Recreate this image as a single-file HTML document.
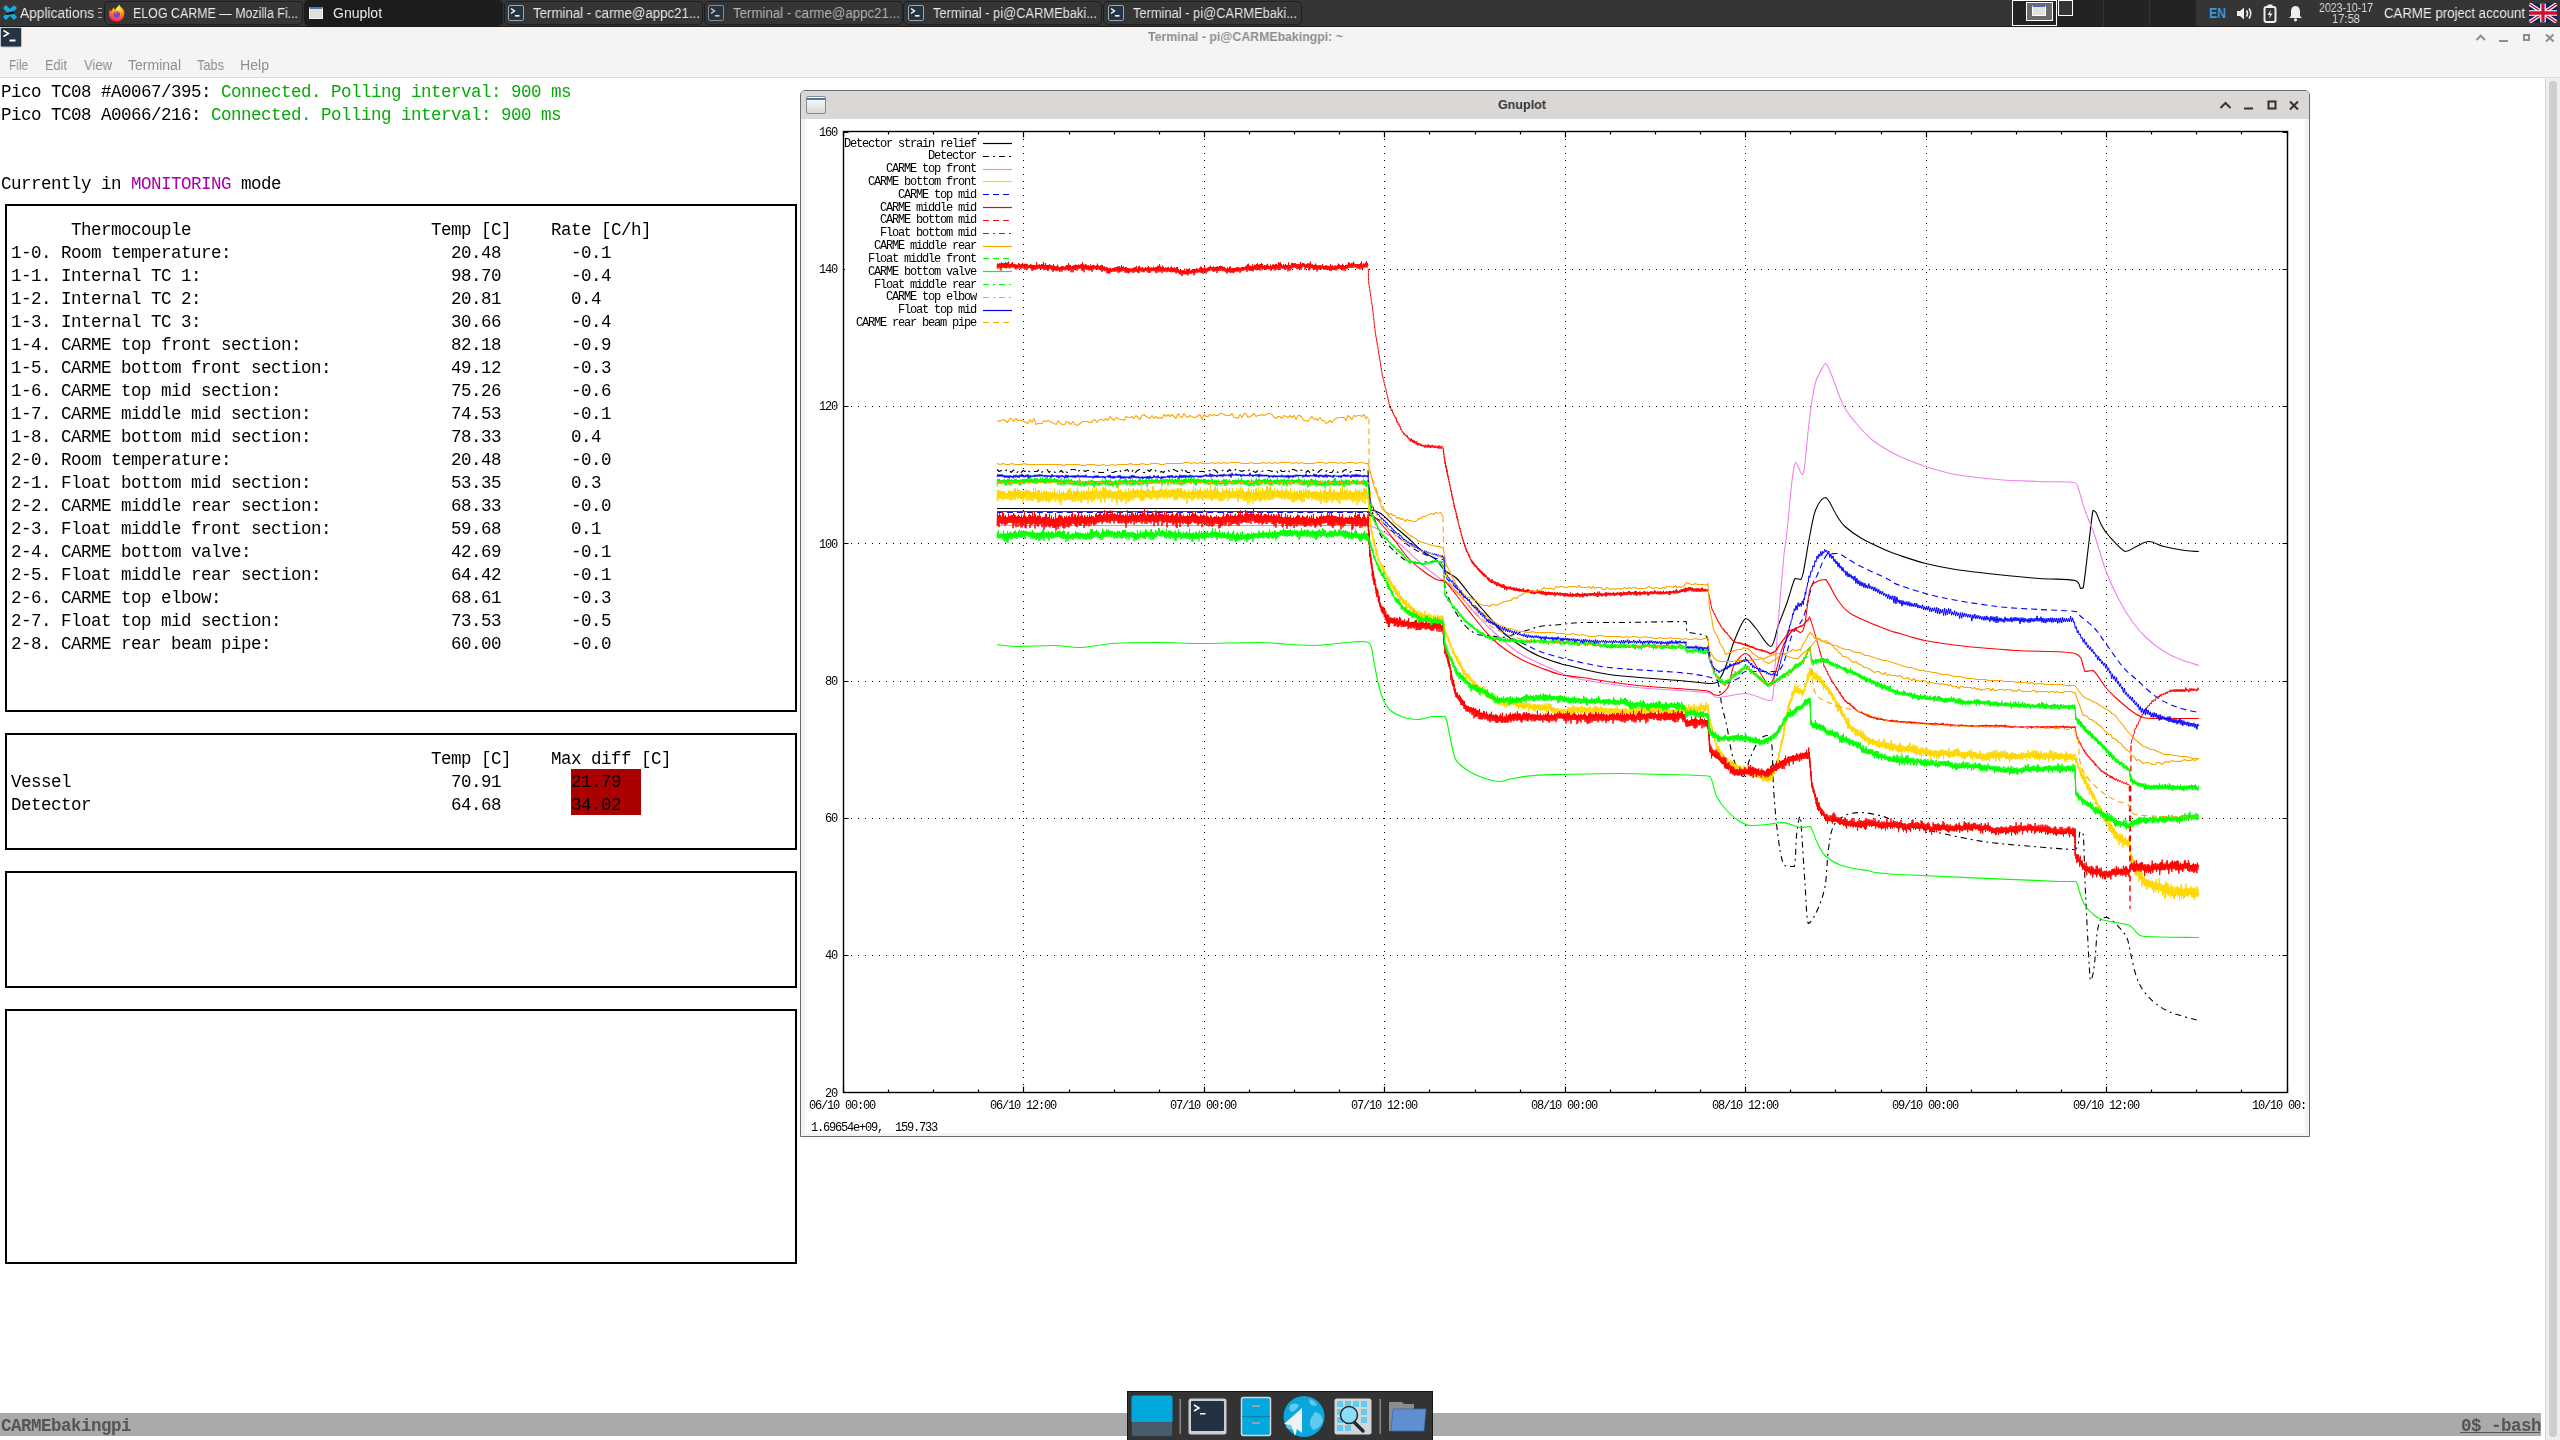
<!DOCTYPE html><html><head><meta charset="utf-8"><style>
*{margin:0;padding:0;box-sizing:border-box}
html,body{width:2560px;height:1440px;overflow:hidden;background:#fff;position:relative;font-family:"Liberation Sans",sans-serif;-webkit-font-smoothing:antialiased}
.a{will-change:transform}
.a{position:absolute}
.mono{font-family:"Liberation Mono",monospace;font-size:17.5px;letter-spacing:-0.5px;line-height:23px;white-space:pre;color:#000}
.tab{position:absolute;top:1px;height:24px;border:1px solid #202020;border-radius:5px;background:#353535}
.tt{position:absolute;top:4px;font-size:15px;color:#e8e8e8;white-space:pre;line-height:17px}
.gp{font-family:"Liberation Mono",monospace;font-size:12px;letter-spacing:-1.2px;white-space:pre;color:#000;line-height:12px}
</style></head><body>

<div class="a" style="left:0;top:0;width:2560px;height:27px;background:#353535;border-bottom:1px solid #1a1a1a"></div>
<div class="a" style="left:2012px;top:0;width:184px;height:26px;background:#232323"></div>
<div class="a" style="left:2103px;top:0;width:1px;height:26px;background:#353535"></div>
<div class="a" style="left:2149px;top:0;width:1px;height:26px;background:#353535"></div>
<svg class="a" style="left:2px;top:5px" width="16" height="16" viewBox="0 0 16 16">
<path d="M1 3 L4 0 L8 4 L12 0 L15 3 L11 7.5 L15 12 L12 15 L8 11 L4 15 L1 12 L5 7.5Z" fill="#1ba8e0"/>
<path d="M4 8 L12 6 L12 9 L4 10Z" fill="#111"/></svg>
<div class="a" style="left:20px;top:5px;font-size:14px;font-weight:normal;color:#e8e8e8;white-space:pre;line-height:17px;transform:scaleX(0.9803);transform-origin:0 0;">Applications</div>
<div class="a" style="left:98px;top:8px;width:4px;height:10px;border-top:1px solid #aaa;border-bottom:1px solid #aaa"></div><div class="a" style="left:98px;top:12px;width:4px;height:1px;background:#aaa"></div>
<div class="a" style="left:104px;top:1px;width:199px;height:24px;border:1px solid #1e1e1e;border-radius:5px;background:#353535"></div>
<div class="a" style="left:304px;top:0px;width:199px;height:26px;border-radius:5px;background:#1c1c1c"></div>
<div class="a" style="left:504px;top:1px;width:199px;height:24px;border:1px solid #1e1e1e;border-radius:5px;background:#353535"></div>
<div class="a" style="left:704px;top:1px;width:199px;height:24px;border:1px solid #1e1e1e;border-radius:5px;background:#353535"></div>
<div class="a" style="left:903px;top:1px;width:199px;height:24px;border:1px solid #1e1e1e;border-radius:5px;background:#353535"></div>
<div class="a" style="left:1103px;top:1px;width:199px;height:24px;border:1px solid #1e1e1e;border-radius:5px;background:#353535"></div>
<div class="a" style="left:133px;top:5px;font-size:14px;font-weight:normal;color:#e8e8e8;white-space:pre;line-height:17px;transform:scaleX(0.8875);transform-origin:0 0;">ELOG CARME — Mozilla Fi...</div>
<div class="a" style="left:333px;top:5px;font-size:14px;font-weight:normal;color:#e8e8e8;white-space:pre;line-height:17px;transform:scaleX(0.9993);transform-origin:0 0;">Gnuplot</div>
<div class="a" style="left:533px;top:5px;font-size:14px;font-weight:normal;color:#e8e8e8;white-space:pre;line-height:17px;transform:scaleX(0.9486);transform-origin:0 0;">Terminal - carme@appc21...</div>
<div class="a" style="left:733px;top:5px;font-size:14px;font-weight:normal;color:#b4b4b4;white-space:pre;line-height:17px;transform:scaleX(0.9486);transform-origin:0 0;">Terminal - carme@appc21...</div>
<div class="a" style="left:933px;top:5px;font-size:14px;font-weight:normal;color:#e8e8e8;white-space:pre;line-height:17px;transform:scaleX(0.9195);transform-origin:0 0;">Terminal - pi@CARMEbaki...</div>
<div class="a" style="left:1133px;top:5px;font-size:14px;font-weight:normal;color:#e8e8e8;white-space:pre;line-height:17px;transform:scaleX(0.9195);transform-origin:0 0;">Terminal - pi@CARMEbaki...</div>
<svg class="a" style="left:108px;top:4px" width="17" height="18" viewBox="0 0 17 18">
<defs><radialGradient id="ffg" cx="0.6" cy="0.2" r="0.9"><stop offset="0" stop-color="#fff44f"/><stop offset="0.45" stop-color="#ff980e"/><stop offset="0.8" stop-color="#ff3647"/><stop offset="1" stop-color="#e31587"/></radialGradient></defs>
<path d="M11.5 0.5 C12 2.5 13 3 14.5 4.5 C16.5 6.5 16.8 9.5 16 12 C15 15.5 12 17.5 8.5 17.5 C4 17.5 0.8 14 0.8 10 C0.8 8 1.5 6.5 2.3 5.5 C2.5 6.5 3 7 3.5 7.3 C3.8 5.5 5 4 6.5 3.5 C6 4.5 6.3 5.5 7 6 C8 4 10 2.5 11.5 0.5Z" fill="url(#ffg)"/>
<circle cx="8.7" cy="10.6" r="3.3" fill="#7542e5"/><path d="M6 8.5 C7 7.5 9.5 7.3 11 8.5 C9.5 8.3 8 8.8 7.3 10Z" fill="#ff7a2a"/></svg>
<div class="a" style="left:309px;top:7px;width:14px;height:12px;background:#e0e0da;border:1px solid #f4f4f4;border-top:2px solid #4a78c0"></div>
<svg class="a" style="left:508px;top:5px;opacity:1" width="16" height="16" viewBox="0 0 16 16">
<rect x="0.5" y="0.5" width="15" height="15" rx="1.5" fill="#233444" stroke="#9aa8b4" stroke-width="1"/>
<path d="M3 3.5 L6.5 6 L3 8.5" stroke="#fff" stroke-width="1.4" fill="none"/><rect x="7" y="10" width="4.5" height="1.6" fill="#fff"/></svg>
<svg class="a" style="left:708px;top:5px;opacity:0.75" width="16" height="16" viewBox="0 0 16 16">
<rect x="0.5" y="0.5" width="15" height="15" rx="1.5" fill="#233444" stroke="#9aa8b4" stroke-width="1"/>
<path d="M3 3.5 L6.5 6 L3 8.5" stroke="#fff" stroke-width="1.4" fill="none"/><rect x="7" y="10" width="4.5" height="1.6" fill="#fff"/></svg>
<svg class="a" style="left:908px;top:5px;opacity:1" width="16" height="16" viewBox="0 0 16 16">
<rect x="0.5" y="0.5" width="15" height="15" rx="1.5" fill="#233444" stroke="#9aa8b4" stroke-width="1"/>
<path d="M3 3.5 L6.5 6 L3 8.5" stroke="#fff" stroke-width="1.4" fill="none"/><rect x="7" y="10" width="4.5" height="1.6" fill="#fff"/></svg>
<svg class="a" style="left:1108px;top:5px;opacity:1" width="16" height="16" viewBox="0 0 16 16">
<rect x="0.5" y="0.5" width="15" height="15" rx="1.5" fill="#233444" stroke="#9aa8b4" stroke-width="1"/>
<path d="M3 3.5 L6.5 6 L3 8.5" stroke="#fff" stroke-width="1.4" fill="none"/><rect x="7" y="10" width="4.5" height="1.6" fill="#fff"/></svg>
<div class="a" style="left:2012px;top:0;width:45px;height:26px;border:1px solid #fff;background:#232323"></div>
<div class="a" style="left:2026px;top:2px;width:27px;height:19px;border:1px solid #fff;background:#6b6b6b"></div>
<div class="a" style="left:2032px;top:5px;width:14px;height:11px;border:1px solid #fff;border-top:2px solid #3d6fc0;background:#e0e0dc"></div>
<div class="a" style="left:2058px;top:0;width:15px;height:16px;border:1px solid #fff;background:#353535"></div>
<div class="a" style="left:2209px;top:5px;font-size:14px;font-weight:bold;color:#3d9be0;white-space:pre;line-height:17px;transform:scaleX(0.8741);transform-origin:0 0;">EN</div>
<svg class="a" style="left:2236px;top:6px" width="18" height="15" viewBox="0 0 18 15">
<path d="M1 5 L4 5 L8 1.5 L8 13.5 L4 10 L1 10Z" fill="#eee"/>
<path d="M10.5 4.5 Q12.5 7.5 10.5 10.5" stroke="#eee" stroke-width="1.6" fill="none"/>
<path d="M13 2.5 Q16.5 7.5 13 12.5" stroke="#eee" stroke-width="1.6" fill="none"/></svg>
<svg class="a" style="left:2263px;top:4px" width="14" height="19" viewBox="0 0 14 19">
<rect x="4.5" y="0.5" width="5" height="3" fill="#eee"/><rect x="1.5" y="3" width="11" height="15" rx="2" fill="none" stroke="#eee" stroke-width="2"/>
<path d="M8 5.5 L4.5 11 L7 11 L6 15 L9.5 9.5 L7 9.5Z" fill="#eee"/></svg>
<svg class="a" style="left:2288px;top:5px" width="15" height="17" viewBox="0 0 15 17">
<path d="M7.5 1 C4 1 3 4 3 7 L3 11 L1 13 L14 13 L12 11 L12 7 C12 4 11 1 7.5 1Z" fill="#eee"/><circle cx="7.5" cy="14.8" r="1.6" fill="#eee"/></svg>
<div class="a" style="left:2319px;top:1px;font-size:12px;font-weight:normal;color:#dddddd;white-space:pre;line-height:15px;transform:scaleX(0.8797);transform-origin:0 0;">2023-10-17</div>
<div class="a" style="left:2332px;top:12px;font-size:12px;font-weight:normal;color:#dddddd;white-space:pre;line-height:15px;transform:scaleX(0.9324);transform-origin:0 0;">17:58</div>
<div class="a" style="left:2384px;top:5px;font-size:14px;font-weight:normal;color:#eeeeee;white-space:pre;line-height:17px;transform:scaleX(0.9438);transform-origin:0 0;">CARME project account</div>
<svg class="a" style="left:2529px;top:3px" width="28" height="20" viewBox="0 0 60 40">
<rect width="60" height="40" fill="#012169"/><path d="M0 0 L60 40 M60 0 L0 40" stroke="#fff" stroke-width="8"/>
<path d="M0 0 L60 40 M60 0 L0 40" stroke="#C8102E" stroke-width="3"/>
<path d="M30 0 V40 M0 20 H60" stroke="#fff" stroke-width="12"/><path d="M30 0 V40 M0 20 H60" stroke="#C8102E" stroke-width="7"/></svg>
<div class="a" style="left:0;top:27px;width:2560px;height:51px;background:#f5f4f2;border-bottom:1px solid #dcdad6"></div>
<svg class="a" style="left:0px;top:27px" width="22" height="21" viewBox="0 0 22 21">
<rect x="0.5" y="0.5" width="21" height="19.5" rx="1.5" fill="#243442" stroke="#b9c3cc" stroke-width="1"/>
<path d="M3.5 3.5 L8.5 6.5 L3.5 9.5" stroke="#fff" stroke-width="1.5" fill="none"/><rect x="9.5" y="12.5" width="6" height="2" fill="#fff"/></svg>
<div class="a" style="left:1148px;top:29px;font-size:13px;font-weight:bold;color:#8c8c8c;white-space:pre;line-height:16px;transform:scaleX(0.9482);transform-origin:0 0;">Terminal - pi@CARMEbakingpi: ~</div>
<svg class="a" style="left:2470px;top:30px" width="90" height="16" viewBox="0 0 90 16">
<path d="M6.5 10 L10.75 5.75 L15 10" stroke="#8a8f91" stroke-width="2" fill="none"/>
<rect x="29" y="10" width="9" height="2" fill="#8a8f91"/>
<rect x="54" y="5" width="5" height="5" stroke="#8a8f91" stroke-width="2" fill="none"/>
<path d="M76 4.5 L83.5 11.5 M83.5 4.5 L76 11.5" stroke="#8a8f91" stroke-width="2"/></svg>
<div class="a" style="left:9px;top:57px;font-size:14px;font-weight:normal;color:#8e8e8e;white-space:pre;line-height:17px;transform:scaleX(0.8423);transform-origin:0 0;">File</div>
<div class="a" style="left:45px;top:57px;font-size:14px;font-weight:normal;color:#8e8e8e;white-space:pre;line-height:17px;transform:scaleX(0.9120);transform-origin:0 0;">Edit</div>
<div class="a" style="left:84px;top:57px;font-size:14px;font-weight:normal;color:#8e8e8e;white-space:pre;line-height:17px;transform:scaleX(0.9305);transform-origin:0 0;">View</div>
<div class="a" style="left:128px;top:57px;font-size:14px;font-weight:normal;color:#8e8e8e;white-space:pre;line-height:17px;transform:scaleX(1.0018);transform-origin:0 0;">Terminal</div>
<div class="a" style="left:197px;top:57px;font-size:14px;font-weight:normal;color:#8e8e8e;white-space:pre;line-height:17px;transform:scaleX(0.9130);transform-origin:0 0;">Tabs</div>
<div class="a" style="left:240px;top:57px;font-size:14px;font-weight:normal;color:#8e8e8e;white-space:pre;line-height:17px;transform:scaleX(1.0072);transform-origin:0 0;">Help</div>
<div class="a" style="left:2545px;top:78px;width:1px;height:1362px;background:#d8d4d0"></div>
<div class="a" style="left:2546px;top:78px;width:14px;height:1362px;background:#efeeec"></div>
<div class="a" style="left:2549px;top:81px;width:8px;height:1356px;border-radius:4px;background:#cecece"></div>
<div class="a mono" style="left:0.5px;top:81px">Pico TC08 #A0067/395: <span style="color:#08aa08">Connected. Polling interval: 900 ms</span></div>
<div class="a mono" style="left:0.5px;top:104px">Pico TC08 A0066/216: <span style="color:#08aa08">Connected. Polling interval: 900 ms</span></div>
<div class="a mono" style="left:0.5px;top:173px">Currently in <span style="color:#aa00aa">MONITORING</span> mode</div>
<div class="a" style="left:5px;top:204px;width:792px;height:508px;border:2px solid #000"></div>
<div class="a" style="left:5px;top:733px;width:792px;height:117px;border:2px solid #000"></div>
<div class="a" style="left:5px;top:871px;width:792px;height:117px;border:2px solid #000"></div>
<div class="a" style="left:5px;top:1009px;width:792px;height:255px;border:2px solid #000"></div>
<div class="a mono" style="left:70.5px;top:219px">Thermocouple</div>
<div class="a mono" style="left:430.5px;top:219px">Temp [C]</div>
<div class="a mono" style="left:550.5px;top:219px">Rate [C/h]</div>
<div class="a mono" style="left:10.5px;top:242px">1-0. Room temperature:</div>
<div class="a mono" style="left:450.5px;top:242px">20.48</div>
<div class="a mono" style="left:570.5px;top:242px">-0.1</div>
<div class="a mono" style="left:10.5px;top:265px">1-1. Internal TC 1:</div>
<div class="a mono" style="left:450.5px;top:265px">98.70</div>
<div class="a mono" style="left:570.5px;top:265px">-0.4</div>
<div class="a mono" style="left:10.5px;top:288px">1-2. Internal TC 2:</div>
<div class="a mono" style="left:450.5px;top:288px">20.81</div>
<div class="a mono" style="left:570.5px;top:288px">0.4</div>
<div class="a mono" style="left:10.5px;top:311px">1-3. Internal TC 3:</div>
<div class="a mono" style="left:450.5px;top:311px">30.66</div>
<div class="a mono" style="left:570.5px;top:311px">-0.4</div>
<div class="a mono" style="left:10.5px;top:334px">1-4. CARME top front section:</div>
<div class="a mono" style="left:450.5px;top:334px">82.18</div>
<div class="a mono" style="left:570.5px;top:334px">-0.9</div>
<div class="a mono" style="left:10.5px;top:357px">1-5. CARME bottom front section:</div>
<div class="a mono" style="left:450.5px;top:357px">49.12</div>
<div class="a mono" style="left:570.5px;top:357px">-0.3</div>
<div class="a mono" style="left:10.5px;top:380px">1-6. CARME top mid section:</div>
<div class="a mono" style="left:450.5px;top:380px">75.26</div>
<div class="a mono" style="left:570.5px;top:380px">-0.6</div>
<div class="a mono" style="left:10.5px;top:403px">1-7. CARME middle mid section:</div>
<div class="a mono" style="left:450.5px;top:403px">74.53</div>
<div class="a mono" style="left:570.5px;top:403px">-0.1</div>
<div class="a mono" style="left:10.5px;top:426px">1-8. CARME bottom mid section:</div>
<div class="a mono" style="left:450.5px;top:426px">78.33</div>
<div class="a mono" style="left:570.5px;top:426px">0.4</div>
<div class="a mono" style="left:10.5px;top:449px">2-0. Room temperature:</div>
<div class="a mono" style="left:450.5px;top:449px">20.48</div>
<div class="a mono" style="left:570.5px;top:449px">-0.0</div>
<div class="a mono" style="left:10.5px;top:472px">2-1. Float bottom mid section:</div>
<div class="a mono" style="left:450.5px;top:472px">53.35</div>
<div class="a mono" style="left:570.5px;top:472px">0.3</div>
<div class="a mono" style="left:10.5px;top:495px">2-2. CARME middle rear section:</div>
<div class="a mono" style="left:450.5px;top:495px">68.33</div>
<div class="a mono" style="left:570.5px;top:495px">-0.0</div>
<div class="a mono" style="left:10.5px;top:518px">2-3. Float middle front section:</div>
<div class="a mono" style="left:450.5px;top:518px">59.68</div>
<div class="a mono" style="left:570.5px;top:518px">0.1</div>
<div class="a mono" style="left:10.5px;top:541px">2-4. CARME bottom valve:</div>
<div class="a mono" style="left:450.5px;top:541px">42.69</div>
<div class="a mono" style="left:570.5px;top:541px">-0.1</div>
<div class="a mono" style="left:10.5px;top:564px">2-5. Float middle rear section:</div>
<div class="a mono" style="left:450.5px;top:564px">64.42</div>
<div class="a mono" style="left:570.5px;top:564px">-0.1</div>
<div class="a mono" style="left:10.5px;top:587px">2-6. CARME top elbow:</div>
<div class="a mono" style="left:450.5px;top:587px">68.61</div>
<div class="a mono" style="left:570.5px;top:587px">-0.3</div>
<div class="a mono" style="left:10.5px;top:610px">2-7. Float top mid section:</div>
<div class="a mono" style="left:450.5px;top:610px">73.53</div>
<div class="a mono" style="left:570.5px;top:610px">-0.5</div>
<div class="a mono" style="left:10.5px;top:633px">2-8. CARME rear beam pipe:</div>
<div class="a mono" style="left:450.5px;top:633px">60.00</div>
<div class="a mono" style="left:570.5px;top:633px">-0.0</div>
<div class="a mono" style="left:430.5px;top:748px">Temp [C]</div>
<div class="a mono" style="left:550.5px;top:748px">Max diff [C]</div>
<div class="a mono" style="left:10.5px;top:771px">Vessel</div>
<div class="a mono" style="left:450.5px;top:771px">70.91</div>
<div class="a mono" style="left:10.5px;top:794px">Detector</div>
<div class="a mono" style="left:450.5px;top:794px">64.68</div>
<div class="a" style="left:571px;top:769px;width:70px;height:46px;background:#aa0000"></div>
<div class="a mono" style="left:570.5px;top:771px">21.79</div>
<div class="a mono" style="left:570.5px;top:794px">34.02</div>
<div class="a" style="left:0;top:1413px;width:2541px;height:23px;background:#aaaaaa"></div>
<div class="a mono" style="left:0.5px;top:1415px;font-weight:bold;color:#555">CARMEbakingpi</div>
<div class="a mono" style="left:2460.5px;top:1415px;font-weight:bold;color:#555">0$ -bash</div><div class="a" style="left:2460px;top:1432px;width:80px;height:1px;background:#555"></div>
<svg class="a" style="left:1127px;top:1391px" width="306" height="49" viewBox="0 0 306 49">
<rect x="0.5" y="0.5" width="305" height="49" fill="#333333" stroke="#151515"/>
<rect x="4.5" y="4.5" width="41" height="41" rx="2.5" fill="#4a5b69" stroke="#2a3a48" stroke-width="1"/>
<path d="M4.5 7 Q4.5 4.5 7 4.5 H43 Q45.5 4.5 45.5 7 V31 H4.5Z" fill="#00a8de"/>
<rect x="52.5" y="8" width="1.5" height="35" fill="#8a8a8a"/>
<rect x="61.5" y="7.5" width="38" height="36" rx="2.5" fill="#c9ced3"/>
<rect x="64" y="10" width="33" height="30" rx="1" fill="#233140"/>
<path d="M67 14 L72 17 L67 20" stroke="#fff" stroke-width="1.5" fill="none"/><rect x="73" y="22" width="5.5" height="1.5" fill="#fff"/>
<rect x="114.5" y="6.5" width="29" height="38" rx="2" fill="#00a8de" stroke="#d4d8dc" stroke-width="1.5"/>
<path d="M115 25.5 H143" stroke="#0b7fa8" stroke-width="1.2"/>
<rect x="125" y="14" width="8" height="2" rx="1" fill="#9aa4aa"/><rect x="125" y="31" width="8" height="2" rx="1" fill="#9aa4aa"/>
<circle cx="177" cy="25.5" r="20.5" fill="#0aa6dc"/>
<path d="M163 14 Q168 11 172 14 Q170 19 165 21 Q161 20 163 14Z M182 8 Q188 9 190 14 Q186 16 183 13Z M188 21 Q195 22 196 30 Q193 38 186 39 Q181 33 184 27Z M160 30 Q166 31 168 37 Q163 40 159 36Z" fill="#62c9ee"/>
<path d="M168 45 L164 34 L157 33 L175 17 L175 42 L170 38 Z" fill="#eef0f2"/>
<rect x="207.5" y="7.5" width="37" height="36" rx="2.5" fill="#d3d6d9"/>
<g fill="#62ccf0"><rect x="210" y="10" width="6" height="6"/><rect x="218" y="10" width="6" height="6"/><rect x="226" y="10" width="6" height="6"/><rect x="234" y="10" width="6" height="6"/>
<rect x="210" y="18" width="6" height="6"/><rect x="234" y="18" width="6" height="6"/><rect x="210" y="26" width="6" height="6"/><rect x="234" y="26" width="6" height="6"/>
<rect x="210" y="34" width="6" height="6"/><rect x="218" y="34" width="6" height="6"/></g>
<path d="M227 31 L236 40" stroke="#1d2a33" stroke-width="3.5" stroke-linecap="round"/>
<circle cx="222" cy="24" r="8.5" fill="#8fdcf5" stroke="#1d2a33" stroke-width="1.5"/>
<rect x="252.5" y="8" width="1.5" height="35" fill="#8a8a8a"/>
<path d="M262 11 H275 L277 13 H287 V40 H262Z" fill="#8c8c8c"/>
<path d="M266 18 H299 L297 40 H264Z" fill="#5f8fd0" stroke="#3a6aae" stroke-width="0.8"/>
</svg>
<div class="a" style="left:800px;top:90px;width:1510px;height:1047px;background:#f4f3f1;border:1px solid #6b6b6b;border-radius:5px 5px 0 0"></div>
<div class="a" style="left:801px;top:91px;width:1508px;height:28px;background:#dbd7d4;border-radius:4px 4px 0 0"></div>
<div class="a" style="left:805px;top:119px;width:1500px;height:1014px;background:#fff"></div>
<div class="a" style="left:806px;top:96px;width:20px;height:18px;border:1px solid #8a8a8a;border-radius:2px;background:linear-gradient(#fff,#d8dad6)"></div>
<div class="a" style="left:807px;top:98px;width:18px;height:2px;background:#4b74b4"></div>
<div class="a" style="left:1498px;top:97px;font-family:'Liberation Sans';font-size:13px;font-weight:bold;color:#2e3436;white-space:pre;line-height:16px;transform:scaleX(0.9635);transform-origin:0 0;">Gnuplot</div>
<svg class="a" style="left:2215px;top:98px" width="90" height="16" viewBox="0 0 90 16">
<path d="M5.5 10 L10.5 5 L15.5 10" stroke="#2e3436" stroke-width="2" fill="none"/>
<rect x="29" y="9.5" width="9" height="2" fill="#2e3436"/>
<rect x="53.5" y="3.5" width="7" height="7" stroke="#2e3436" stroke-width="2" fill="none"/>
<path d="M75 3.5 L83 11.5 M83 3.5 L75 11.5" stroke="#2e3436" stroke-width="2"/></svg>
<svg class="a" style="left:0;top:0" width="2560" height="1440" viewBox="0 0 2560 1440">
<path d="M1023.5 139V1086.5 M1204.5 139V1086.5 M1384.5 139V1086.5 M1565.5 139V1086.5 M1745.5 139V1086.5 M1926.5 139V1086.5 M2106.5 139V1086.5 M851 955.5H2286.5 M851 818.5H2286.5 M851 681.5H2286.5 M851 543.5H2286.5 M851 406.5H2286.5 M851 269.5H2286.5" stroke="#000" stroke-width="1" stroke-dasharray="1,6" fill="none"/>
<path d="M843.5 1092.5v-6M843.5 131.5v6 M888.5 1092.5v-3M888.5 131.5v3 M933.5 1092.5v-3M933.5 131.5v3 M978.5 1092.5v-3M978.5 131.5v3 M1023.5 1092.5v-6M1023.5 131.5v6 M1069.5 1092.5v-3M1069.5 131.5v3 M1114.5 1092.5v-3M1114.5 131.5v3 M1159.5 1092.5v-3M1159.5 131.5v3 M1204.5 1092.5v-6M1204.5 131.5v6 M1249.5 1092.5v-3M1249.5 131.5v3 M1294.5 1092.5v-3M1294.5 131.5v3 M1339.5 1092.5v-3M1339.5 131.5v3 M1384.5 1092.5v-6M1384.5 131.5v6 M1429.5 1092.5v-3M1429.5 131.5v3 M1475.5 1092.5v-3M1475.5 131.5v3 M1520.5 1092.5v-3M1520.5 131.5v3 M1565.5 1092.5v-6M1565.5 131.5v6 M1610.5 1092.5v-3M1610.5 131.5v3 M1655.5 1092.5v-3M1655.5 131.5v3 M1700.5 1092.5v-3M1700.5 131.5v3 M1745.5 1092.5v-6M1745.5 131.5v6 M1790.5 1092.5v-3M1790.5 131.5v3 M1835.5 1092.5v-3M1835.5 131.5v3 M1881.5 1092.5v-3M1881.5 131.5v3 M1926.5 1092.5v-6M1926.5 131.5v6 M1971.5 1092.5v-3M1971.5 131.5v3 M2016.5 1092.5v-3M2016.5 131.5v3 M2061.5 1092.5v-3M2061.5 131.5v3 M2106.5 1092.5v-6M2106.5 131.5v6 M2151.5 1092.5v-3M2151.5 131.5v3 M2196.5 1092.5v-3M2196.5 131.5v3 M2241.5 1092.5v-3M2241.5 131.5v3 M2287.5 1092.5v-6M2287.5 131.5v6 M843.5 1092.5h5M2287.5 1092.5h-5 M843.5 955.5h5M2287.5 955.5h-5 M843.5 818.5h5M2287.5 818.5h-5 M843.5 681.5h5M2287.5 681.5h-5 M843.5 543.5h5M2287.5 543.5h-5 M843.5 406.5h5M2287.5 406.5h-5 M843.5 269.5h5M2287.5 269.5h-5 M843.5 132.5h5M2287.5 132.5h-5" stroke="#000" stroke-width="1.2" fill="none"/>
<rect x="845" y="136" width="172" height="192" fill="#fff"/>
<rect x="843.5" y="131.5" width="1444.0" height="961.0" fill="none" stroke="#000" stroke-width="1.4"/>
<path d="M983 143.5H1012" stroke="#000000" stroke-width="1.2"/>
<path d="M983 156.5H1012" stroke="#000000" stroke-width="1.2" stroke-dasharray="6,4,2,4"/>
<path d="M983 169.5H1012" stroke="#ee82ee" stroke-width="1.2"/>
<path d="M983 181.5H1012" stroke="#ffd700" stroke-width="1.2"/>
<path d="M983 194.5H1012" stroke="#0000ff" stroke-width="1.2" stroke-dasharray="6,4"/>
<path d="M983 207.5H1012" stroke="#ff0000" stroke-width="1.2"/>
<path d="M983 220.5H1012" stroke="#ff0000" stroke-width="1.2" stroke-dasharray="6,4"/>
<path d="M983 233.5H1012" stroke="#ff0000" stroke-width="1.2" stroke-dasharray="6,4,2,4"/>
<path d="M983 246.5H1012" stroke="#ffa500" stroke-width="1.2"/>
<path d="M983 258.5H1012" stroke="#00ff00" stroke-width="1.2" stroke-dasharray="6,4"/>
<path d="M983 271.5H1012" stroke="#00ff00" stroke-width="1.2"/>
<path d="M983 284.5H1012" stroke="#00ff00" stroke-width="1.2" stroke-dasharray="6,4,2,4"/>
<path d="M983 297.5H1012" stroke="#ffa500" stroke-width="1.2" stroke-dasharray="6,4,2,4"/>
<path d="M983 310.5H1012" stroke="#0000ff" stroke-width="1.2"/>
<path d="M983 322.5H1012" stroke="#ffa500" stroke-width="1.2" stroke-dasharray="6,4"/>
<path d="M997.0 508.5C1058.8 508.5 1305.9 508.5 1368.0 508.5C1369.7 508.7 1368.0 508.7 1369.7 509.5C1371.8 510.3 1376.6 510.7 1380.8 513.5C1385.0 516.3 1390.1 522.3 1394.7 526.5C1399.3 530.7 1404.0 534.3 1408.6 538.5C1413.2 542.7 1417.9 548.0 1422.5 551.5C1427.1 555.0 1432.3 556.3 1436.0 559.5C1439.7 562.7 1441.2 567.3 1444.7 570.5C1448.2 573.7 1452.7 574.7 1456.7 578.5C1460.8 582.3 1464.8 588.5 1469.0 593.5C1473.2 598.5 1477.5 603.7 1481.7 608.5C1485.9 613.3 1489.8 618.0 1494.0 622.5C1498.2 627.0 1501.8 631.3 1506.7 635.5C1511.6 639.7 1517.8 644.0 1523.3 647.5C1528.8 651.0 1533.9 653.8 1540.0 656.5C1546.1 659.2 1555.3 662.0 1560.0 663.5C1564.7 665.0 1560.0 663.7 1568.0 665.5C1576.2 667.3 1590.5 672.0 1609.0 674.5C1627.5 677.0 1661.8 679.0 1679.0 680.5C1696.2 682.0 1705.1 683.5 1712.0 683.5C1718.9 683.0 1717.9 681.2 1720.5 677.5C1723.1 673.8 1725.2 667.7 1727.5 661.5C1729.8 655.3 1731.4 647.7 1734.4 640.5C1737.4 633.3 1742.1 620.5 1745.7 618.5C1749.3 618.5 1751.8 623.8 1756.0 628.5C1760.2 633.2 1767.0 646.5 1770.7 646.5C1774.4 646.0 1775.6 632.7 1778.3 625.5C1781.0 618.3 1783.9 611.3 1786.7 603.5C1789.5 595.7 1792.7 582.5 1795.0 578.5C1797.3 578.5 1799.1 579.5 1800.5 579.5C1801.9 578.5 1801.7 579.5 1803.3 572.5C1804.9 565.0 1807.9 545.0 1810.0 534.5C1812.1 524.0 1813.2 515.7 1815.8 509.5C1818.4 503.3 1822.1 497.5 1825.6 497.5C1829.1 498.5 1833.5 510.7 1836.7 515.5C1839.9 520.3 1840.8 522.7 1845.0 526.5C1849.2 530.3 1854.8 534.5 1861.7 538.5C1868.7 542.5 1880.3 547.7 1886.7 550.5C1893.1 553.3 1893.5 553.3 1900.0 555.5C1906.5 557.7 1916.4 561.2 1925.7 563.5C1935.0 565.8 1943.7 567.7 1955.6 569.5C1967.5 571.3 1983.1 573.0 1997.0 574.5C2010.9 576.0 2026.0 577.5 2039.0 578.5C2052.0 579.5 2068.1 578.8 2075.0 580.5C2080.6 582.2 2079.2 587.3 2080.6 588.5C2082.0 588.5 2081.9 588.5 2083.3 587.5C2084.7 579.8 2087.3 555.3 2088.9 542.5C2090.5 529.7 2091.8 515.5 2093.0 510.5C2094.2 510.5 2094.6 510.5 2096.0 512.5C2097.4 515.0 2099.6 521.7 2101.7 525.5C2103.8 529.3 2104.7 531.2 2108.6 535.5C2112.5 539.8 2120.7 549.7 2125.3 551.5C2129.9 551.5 2132.5 548.2 2136.4 546.5C2140.3 544.8 2144.3 541.5 2148.9 541.5C2153.5 541.5 2158.0 545.0 2164.0 546.5C2170.0 548.0 2179.2 549.7 2185.0 550.5C2190.8 551.3 2196.6 551.3 2198.9 551.5" stroke="#000000" stroke-width="1.1" fill="none" stroke-linejoin="round"/>
<path d="M997.0 469.5 L999.0 471.5 L1001.0 470.5 L1003.0 471.5 L1005.0 471.5 L1007.0 469.5 L1009.0 469.5 L1011.0 472.5 L1013.0 470.5 L1015.0 469.5 L1017.1 472.5 L1019.1 470.5 L1021.1 472.5 L1023.1 470.5 L1025.1 471.5 L1027.1 469.5 L1029.1 471.5 L1031.1 472.5 L1033.1 471.5 L1035.1 471.5 L1037.1 471.5 L1039.1 469.5 L1041.1 472.5 L1043.1 471.5 L1045.1 470.5 L1047.1 469.5 L1049.1 472.5 L1051.1 470.5 L1053.2 471.5 L1055.2 472.5 L1057.2 471.5 L1059.2 472.5 L1061.2 470.5 L1063.2 472.5 L1065.2 470.5 L1067.2 472.5 L1069.2 472.5 L1071.2 469.5 L1073.2 469.5 L1075.2 469.5 L1077.2 472.5 L1079.2 470.5 L1081.2 471.5 L1083.2 470.5 L1085.2 471.5 L1087.2 470.5 L1089.2 470.5 L1091.3 471.5 L1093.3 471.5 L1095.3 472.5 L1097.3 471.5 L1099.3 472.5 L1101.3 472.5 L1103.3 472.5 L1105.3 471.5 L1107.3 469.5 L1109.3 472.5 L1111.3 472.5 L1113.3 472.5 L1115.3 471.5 L1117.3 471.5 L1119.3 469.5 L1121.3 472.5 L1123.3 471.5 L1125.3 470.5 L1127.4 469.5 L1129.4 472.5 L1131.4 472.5 L1133.4 469.5 L1135.4 472.5 L1137.4 470.5 L1139.4 469.5 L1141.4 470.5 L1143.4 472.5 L1145.4 472.5 L1147.4 469.5 L1149.4 471.5 L1151.4 469.5 L1153.4 471.5 L1155.4 470.5 L1157.4 472.5 L1159.4 472.5 L1161.4 471.5 L1163.4 472.5 L1165.5 470.5 L1167.5 469.5 L1169.5 471.5 L1171.5 469.5 L1173.5 469.5 L1175.5 470.5 L1177.5 471.5 L1179.5 469.5 L1181.5 469.5 L1183.5 472.5 L1185.5 470.5 L1187.5 472.5 L1189.5 472.5 L1191.5 470.5 L1193.5 470.5 L1195.5 471.5 L1197.5 471.5 L1199.5 471.5 L1201.6 471.5 L1203.6 471.5 L1205.6 472.5 L1207.6 471.5 L1209.6 470.5 L1211.6 471.5 L1213.6 469.5 L1215.6 470.5 L1217.6 472.5 L1219.6 471.5 L1221.6 471.5 L1223.6 469.5 L1225.6 470.5 L1227.6 471.5 L1229.6 469.5 L1231.6 471.5 L1233.6 471.5 L1235.6 469.5 L1237.6 471.5 L1239.7 470.5 L1241.7 471.5 L1243.7 470.5 L1245.7 471.5 L1247.7 471.5 L1249.7 469.5 L1251.7 469.5 L1253.7 471.5 L1255.7 472.5 L1257.7 470.5 L1259.7 470.5 L1261.7 471.5 L1263.7 470.5 L1265.7 470.5 L1267.7 470.5 L1269.7 470.5 L1271.7 471.5 L1273.7 470.5 L1275.8 470.5 L1277.8 472.5 L1279.8 469.5 L1281.8 471.5 L1283.8 471.5 L1285.8 470.5 L1287.8 469.5 L1289.8 472.5 L1291.8 469.5 L1293.8 469.5 L1295.8 470.5 L1297.8 471.5 L1299.8 469.5 L1301.8 470.5 L1303.8 470.5 L1305.8 472.5 L1307.8 470.5 L1309.8 472.5 L1311.8 469.5 L1313.9 470.5 L1315.9 471.5 L1317.9 472.5 L1319.9 470.5 L1321.9 469.5 L1323.9 469.5 L1325.9 471.5 L1327.9 469.5 L1329.9 472.5 L1331.9 472.5 L1333.9 469.5 L1335.9 470.5 L1337.9 472.5 L1339.9 471.5 L1341.9 472.5 L1343.9 470.5 L1345.9 469.5 L1347.9 470.5 L1350.0 472.5 L1352.0 470.5 L1354.0 470.5 L1356.0 470.5 L1358.0 470.5 L1360.0 470.5 L1362.0 472.5 L1364.0 469.5 L1366.0 469.5 L1368.0 471.5" stroke="#000000" stroke-width="1.1" fill="none" stroke-linejoin="round" stroke-dasharray="6,4,2,4"/>
<path d="M1368.0 470.5C1368.3 475.5 1368.8 492.2 1370.0 500.5C1371.2 508.8 1373.0 514.3 1375.0 520.5C1377.0 526.7 1378.7 532.3 1382.0 537.5C1385.3 542.7 1390.3 547.3 1394.7 551.5C1399.1 555.7 1405.1 560.5 1408.6 562.5C1412.1 563.5 1412.1 563.5 1415.5 563.5C1418.9 563.3 1424.4 561.7 1429.0 561.5C1433.6 561.5 1440.3 561.5 1443.0 562.5C1445.0 566.7 1443.4 579.2 1445.0 586.5C1446.6 593.8 1449.2 600.0 1452.5 606.5C1455.8 613.0 1460.8 620.8 1465.0 625.5C1469.2 630.2 1473.3 632.8 1477.5 634.5C1481.7 635.5 1485.8 635.0 1490.0 635.5C1494.2 636.0 1497.0 637.5 1502.5 637.5C1508.0 636.8 1517.0 633.3 1523.3 631.5C1529.5 629.7 1533.7 627.7 1540.0 626.5C1546.3 625.3 1554.0 625.2 1561.0 624.5C1568.0 623.8 1571.7 622.8 1582.0 622.5C1592.3 622.5 1605.7 622.5 1623.0 622.5C1640.3 622.3 1675.3 621.5 1686.0 621.5C1687.0 623.0 1686.0 629.0 1687.0 631.5C1690.5 634.0 1703.0 633.2 1706.7 636.5C1709.0 639.8 1707.6 645.5 1709.0 651.5C1710.4 657.5 1713.3 666.7 1715.0 672.5C1716.7 678.3 1717.8 680.8 1719.0 686.5C1720.2 692.2 1720.7 700.0 1722.0 706.5C1723.3 713.0 1724.8 716.8 1726.7 725.5C1728.6 734.2 1730.5 750.0 1733.3 758.5C1736.1 767.0 1740.5 776.5 1743.3 776.5C1746.1 776.5 1747.5 764.3 1750.0 758.5C1752.5 752.7 1755.5 745.3 1758.3 741.5C1761.1 737.7 1764.5 735.5 1766.7 735.5C1768.9 735.8 1770.6 735.5 1771.7 743.5C1772.8 751.5 1772.5 769.8 1773.3 783.5C1774.1 797.2 1775.3 813.0 1776.7 825.5C1778.1 838.0 1780.0 851.7 1781.7 858.5C1783.4 865.3 1784.6 865.2 1786.7 866.5C1788.8 866.5 1792.5 866.5 1794.2 866.5C1795.9 861.0 1795.7 841.8 1796.7 833.5C1797.7 825.2 1799.2 816.5 1800.0 816.5C1800.8 816.5 1800.9 822.3 1801.7 833.5C1802.5 844.7 1803.9 868.5 1805.0 883.5C1806.1 898.5 1806.3 918.8 1808.3 923.5C1810.2 923.5 1813.9 917.7 1816.7 911.5C1819.5 905.3 1823.1 896.7 1825.0 886.5C1826.9 876.3 1826.9 860.5 1828.3 850.5C1829.7 840.5 1830.5 832.3 1833.3 826.5C1836.1 820.7 1840.3 817.8 1845.0 815.5C1849.7 813.2 1855.3 812.5 1861.7 812.5C1868.1 812.7 1876.9 814.7 1883.3 816.5C1889.7 818.3 1891.7 821.0 1900.0 823.5C1908.3 826.0 1919.4 828.5 1933.3 831.5C1947.2 834.5 1966.6 839.0 1983.3 841.5C2000.0 844.0 2018.0 845.2 2033.3 846.5C2048.6 847.8 2067.2 849.5 2075.0 849.5C2080.0 847.0 2078.6 833.8 2080.0 831.5C2081.4 831.5 2082.5 831.5 2083.3 835.5C2084.1 843.8 2084.4 866.8 2085.0 881.5C2085.6 896.2 2086.3 909.5 2087.0 923.5C2087.7 937.5 2088.6 956.0 2089.2 965.5C2089.8 975.0 2089.9 979.3 2090.6 980.5C2091.3 980.5 2092.5 976.8 2093.3 972.5C2094.1 968.2 2094.7 961.5 2095.4 954.5C2096.1 947.5 2096.4 936.7 2097.5 930.5C2098.6 924.3 2100.1 919.7 2101.7 917.5C2103.3 917.5 2104.9 917.5 2107.2 917.5C2109.5 918.5 2112.2 920.2 2115.5 923.5C2118.8 926.8 2124.1 932.3 2126.7 937.5C2129.2 942.7 2129.2 948.0 2130.8 954.5C2132.4 961.0 2134.3 970.5 2136.4 976.5C2138.5 982.5 2140.3 986.2 2143.3 990.5C2146.3 994.8 2149.8 998.8 2154.4 1002.5C2159.0 1006.2 2163.6 1009.5 2171.0 1012.5C2178.4 1015.5 2194.2 1019.2 2198.9 1020.5" stroke="#000000" stroke-width="1.1" fill="none" stroke-linejoin="round" stroke-dasharray="6,4,2,4"/>
<path d="M997.0 525.5C1058.8 525.5 1305.4 525.5 1368.0 525.5C1372.5 525.7 1369.2 525.5 1372.5 526.5C1375.8 528.0 1382.9 531.3 1387.8 534.5C1392.7 537.7 1397.1 541.5 1401.7 545.5C1406.3 549.5 1410.9 554.3 1415.5 558.5C1420.1 562.7 1425.3 567.2 1429.4 570.5C1433.5 573.8 1435.5 575.0 1440.0 578.5C1444.5 582.0 1451.2 586.0 1456.7 591.5C1462.2 597.0 1467.8 605.3 1473.3 611.5C1478.8 617.7 1484.4 623.2 1490.0 628.5C1495.6 633.8 1501.2 639.0 1506.7 643.5C1512.2 648.0 1514.4 650.7 1523.3 655.5C1532.2 660.3 1550.3 668.5 1560.0 672.5C1569.7 676.5 1568.9 677.0 1581.7 679.5C1594.5 682.0 1616.2 685.3 1637.0 687.5C1657.8 689.7 1693.2 690.8 1706.7 692.5C1717.8 694.2 1711.3 697.3 1717.8 697.5C1724.3 697.5 1737.2 693.5 1745.7 693.5C1754.2 694.0 1764.1 700.0 1768.6 700.5C1772.8 700.5 1771.6 700.5 1772.8 696.5C1774.0 689.7 1774.3 675.0 1775.5 659.5C1776.7 644.0 1778.3 621.0 1779.7 603.5C1781.1 586.0 1783.0 565.0 1784.0 554.5C1785.0 544.0 1785.1 548.5 1786.0 540.5C1786.9 532.5 1788.4 516.7 1789.4 506.5C1790.4 496.3 1791.2 486.8 1792.2 479.5C1793.2 472.2 1794.1 463.3 1795.7 462.5C1797.3 462.5 1800.5 474.0 1802.0 474.5C1803.5 474.5 1803.7 472.8 1804.7 465.5C1805.7 458.2 1807.0 441.0 1808.2 430.5C1809.4 420.0 1810.4 410.7 1811.7 402.5C1813.0 394.3 1814.4 386.5 1815.8 381.5C1817.2 376.5 1818.4 375.5 1820.0 372.5C1821.6 369.5 1823.8 363.5 1825.6 363.5C1827.4 363.7 1828.9 368.7 1831.0 373.5C1833.1 378.3 1835.7 386.7 1838.0 392.5C1840.3 398.3 1841.5 402.8 1845.0 408.5C1848.5 414.2 1854.3 421.2 1858.9 426.5C1863.5 431.8 1868.2 436.7 1872.8 440.5C1877.4 444.3 1882.2 446.8 1886.7 449.5C1891.2 452.2 1893.5 453.7 1900.0 456.5C1906.5 459.3 1916.4 463.5 1925.7 466.5C1935.0 469.5 1943.7 472.3 1955.6 474.5C1967.5 476.7 1983.1 478.3 1997.0 479.5C2010.9 480.7 2026.2 481.0 2039.0 481.5C2051.8 482.0 2067.1 481.5 2073.6 482.5C2078.0 483.5 2076.1 482.8 2078.0 487.5C2079.9 492.2 2082.2 502.5 2085.0 510.5C2087.8 518.5 2091.2 525.5 2094.7 535.5C2098.2 545.5 2101.9 560.0 2105.8 570.5C2109.7 581.0 2113.9 590.0 2118.3 598.5C2122.7 607.0 2127.6 615.0 2132.2 621.5C2136.8 628.0 2140.7 632.5 2146.0 637.5C2151.3 642.5 2158.2 647.8 2164.0 651.5C2169.8 655.2 2175.0 657.2 2180.8 659.5C2186.6 661.8 2195.9 664.5 2198.9 665.5" stroke="#ee82ee" stroke-width="1.1" fill="none" stroke-linejoin="round"/>
<path d="M997.0 499.8 L997.5 490.0 L998.0 501.4 L998.5 489.8 L999.0 498.7 L999.5 490.9 L1000.0 499.1 L1000.5 490.7 L1001.0 498.3 L1001.5 491.3 L1002.0 498.3 L1002.5 491.2 L1003.0 500.0 L1003.5 491.4 L1004.0 499.2 L1004.5 491.1 L1005.0 498.7 L1005.5 493.0 L1006.0 498.9 L1006.5 493.1 L1007.0 499.4 L1007.5 493.0 L1008.0 498.7 L1008.5 490.5 L1009.0 499.5 L1009.5 491.2 L1010.0 499.1 L1010.5 490.7 L1011.0 500.7 L1011.5 491.5 L1012.0 499.9 L1012.5 491.7 L1013.0 498.2 L1013.5 489.5 L1014.0 500.1 L1014.5 488.7 L1015.0 499.9 L1015.5 488.3 L1016.0 497.2 L1016.5 491.7 L1017.0 497.3 L1017.5 487.6 L1018.0 499.2 L1018.5 490.2 L1019.0 497.7 L1019.5 489.5 L1020.0 498.4 L1020.5 491.4 L1021.0 499.3 L1021.5 491.6 L1022.0 498.9 L1022.5 491.2 L1023.0 503.1 L1023.5 491.2 L1024.0 498.9 L1024.5 491.6 L1025.0 497.7 L1025.5 489.3 L1026.0 498.3 L1026.5 490.4 L1027.0 500.9 L1027.5 490.3 L1028.0 498.7 L1028.5 490.8 L1029.0 500.2 L1029.5 490.2 L1030.0 500.2 L1030.5 491.6 L1031.0 500.3 L1031.5 492.2 L1032.0 500.3 L1032.5 492.4 L1033.0 501.1 L1033.5 488.4 L1034.0 498.8 L1034.5 492.1 L1035.0 498.8 L1035.5 487.9 L1036.0 498.4 L1036.5 492.6 L1037.0 499.8 L1037.5 490.5 L1038.0 502.6 L1038.5 490.3 L1039.0 502.2 L1039.5 490.0 L1040.0 501.4 L1040.5 493.3 L1041.0 501.2 L1041.5 490.4 L1042.0 500.6 L1042.5 492.8 L1043.0 501.6 L1043.5 491.0 L1044.0 499.1 L1044.5 490.2 L1045.0 499.6 L1045.5 492.5 L1046.0 502.2 L1046.5 490.8 L1047.0 500.2 L1047.5 491.8 L1048.0 501.1 L1048.5 491.9 L1049.0 502.8 L1049.5 492.4 L1050.0 501.1 L1050.5 491.6 L1051.0 499.7 L1051.5 493.1 L1052.0 500.4 L1052.5 491.6 L1053.0 498.6 L1053.5 493.4 L1054.0 498.5 L1054.5 488.6 L1055.0 501.6 L1055.5 492.8 L1056.0 499.0 L1056.5 493.2 L1057.0 500.2 L1057.5 491.3 L1058.0 499.0 L1058.5 493.7 L1059.0 502.4 L1059.5 489.8 L1060.0 502.0 L1060.5 493.5 L1061.0 504.9 L1061.5 492.6 L1062.0 500.8 L1062.5 492.5 L1063.0 498.4 L1063.5 491.3 L1064.0 499.9 L1064.5 492.9 L1065.0 501.0 L1065.5 493.3 L1066.0 499.6 L1066.5 493.2 L1067.0 499.8 L1067.5 490.9 L1068.0 499.4 L1068.5 489.5 L1069.0 499.8 L1069.5 489.4 L1070.0 499.6 L1070.5 488.0 L1071.0 499.6 L1071.5 491.6 L1072.0 502.0 L1072.5 493.9 L1073.0 501.6 L1073.5 489.8 L1074.0 499.7 L1074.5 491.6 L1075.0 502.0 L1075.5 492.2 L1076.0 500.7 L1076.5 490.9 L1077.0 497.9 L1077.5 487.0 L1078.0 501.2 L1078.5 490.9 L1079.0 500.8 L1079.5 491.9 L1080.0 498.7 L1080.5 492.5 L1081.0 502.9 L1081.5 490.2 L1082.0 501.3 L1082.5 492.2 L1083.0 499.3 L1083.5 490.8 L1084.0 499.6 L1084.5 490.7 L1085.0 500.0 L1085.5 492.9 L1086.0 500.0 L1086.5 490.7 L1087.0 498.9 L1087.5 491.1 L1088.0 503.5 L1088.5 486.8 L1089.0 499.2 L1089.5 491.9 L1090.0 499.7 L1090.5 490.8 L1091.0 500.1 L1091.5 491.4 L1092.0 502.6 L1092.5 488.7 L1093.0 499.7 L1093.5 491.2 L1094.0 501.0 L1094.5 485.9 L1095.0 498.9 L1095.5 490.8 L1096.0 498.3 L1096.5 487.9 L1097.0 497.3 L1097.5 490.5 L1098.0 499.9 L1098.5 491.0 L1099.0 498.7 L1099.5 491.0 L1100.0 498.4 L1100.5 489.2 L1101.0 503.0 L1101.5 491.7 L1102.0 498.1 L1102.5 487.6 L1103.0 498.2 L1103.5 487.0 L1104.0 499.5 L1104.5 488.2 L1105.0 502.6 L1105.5 486.8 L1106.0 497.9 L1106.5 488.9 L1107.0 497.2 L1107.5 491.4 L1108.0 498.7 L1108.5 490.6 L1109.0 498.9 L1109.5 489.1 L1110.0 498.0 L1110.5 490.5 L1111.0 497.4 L1111.5 491.3 L1112.0 501.9 L1112.5 491.7 L1113.0 497.4 L1113.5 491.6 L1114.0 499.2 L1114.5 491.5 L1115.0 498.4 L1115.5 490.8 L1116.0 500.1 L1116.5 491.8 L1117.0 504.7 L1117.5 491.4 L1118.0 498.3 L1118.5 485.6 L1119.0 499.6 L1119.5 491.5 L1120.0 499.7 L1120.5 489.3 L1121.0 501.7 L1121.5 490.6 L1122.0 501.8 L1122.5 491.9 L1123.0 499.5 L1123.5 491.5 L1124.0 499.7 L1124.5 492.3 L1125.0 499.1 L1125.5 488.8 L1126.0 504.0 L1126.5 491.4 L1127.0 498.8 L1127.5 492.2 L1128.0 501.7 L1128.5 488.2 L1129.0 501.7 L1129.5 491.8 L1130.0 500.4 L1130.5 491.0 L1131.0 500.1 L1131.5 491.3 L1132.0 498.0 L1132.5 490.3 L1133.0 500.5 L1133.5 488.3 L1134.0 497.0 L1134.5 490.4 L1135.0 498.4 L1135.5 490.2 L1136.0 498.1 L1136.5 489.7 L1137.0 497.2 L1137.5 488.9 L1138.0 496.7 L1138.5 490.0 L1139.0 498.5 L1139.5 491.1 L1140.0 497.9 L1140.5 489.4 L1141.0 501.1 L1141.5 485.5 L1142.0 500.6 L1142.5 490.0 L1143.0 500.2 L1143.5 490.5 L1144.0 500.7 L1144.5 491.2 L1145.0 497.4 L1145.5 489.7 L1146.0 498.2 L1146.5 491.2 L1147.0 497.7 L1147.5 484.6 L1148.0 497.3 L1148.5 489.6 L1149.0 498.7 L1149.5 489.9 L1150.0 497.7 L1150.5 491.3 L1151.0 499.6 L1151.5 491.2 L1152.0 499.1 L1152.5 486.6 L1153.0 496.9 L1153.5 486.1 L1154.0 498.0 L1154.5 490.2 L1155.0 497.6 L1155.5 490.9 L1156.0 497.4 L1156.5 490.9 L1157.0 500.6 L1157.5 490.3 L1158.0 498.7 L1158.5 490.7 L1159.0 497.7 L1159.5 489.8 L1160.0 497.4 L1160.5 489.3 L1161.0 497.9 L1161.5 486.6 L1162.0 497.0 L1162.5 489.4 L1163.0 496.6 L1163.5 490.9 L1164.0 499.3 L1164.5 489.4 L1165.0 496.5 L1165.5 489.8 L1166.0 497.4 L1166.5 487.9 L1167.0 499.6 L1167.5 491.5 L1168.0 497.4 L1168.5 489.7 L1169.0 497.6 L1169.5 490.6 L1170.0 497.2 L1170.5 489.4 L1171.0 498.1 L1171.5 490.6 L1172.0 496.6 L1172.5 489.6 L1173.0 496.1 L1173.5 488.7 L1174.0 500.2 L1174.5 490.3 L1175.0 499.2 L1175.5 489.7 L1176.0 500.3 L1176.5 489.7 L1177.0 499.6 L1177.5 488.1 L1178.0 498.4 L1178.5 487.9 L1179.0 496.2 L1179.5 489.3 L1180.0 497.2 L1180.5 488.1 L1181.0 499.1 L1181.5 488.3 L1182.0 497.7 L1182.5 491.1 L1183.0 498.0 L1183.5 491.0 L1184.0 500.1 L1184.5 489.9 L1185.0 497.8 L1185.5 490.2 L1186.0 498.1 L1186.5 492.6 L1187.0 504.2 L1187.5 492.1 L1188.0 498.4 L1188.5 489.6 L1189.0 498.3 L1189.5 491.0 L1190.0 498.4 L1190.5 492.0 L1191.0 499.0 L1191.5 492.3 L1192.0 500.7 L1192.5 490.1 L1193.0 499.5 L1193.5 486.5 L1194.0 499.5 L1194.5 491.7 L1195.0 498.0 L1195.5 488.4 L1196.0 497.4 L1196.5 491.4 L1197.0 498.0 L1197.5 490.2 L1198.0 499.9 L1198.5 490.6 L1199.0 499.2 L1199.5 489.6 L1200.0 498.5 L1200.5 487.7 L1201.0 497.1 L1201.5 490.4 L1202.0 499.8 L1202.5 491.6 L1203.0 500.4 L1203.5 491.1 L1204.0 497.4 L1204.5 488.7 L1205.0 497.2 L1205.5 490.5 L1206.0 498.6 L1206.5 490.3 L1207.0 499.1 L1207.5 488.4 L1208.0 496.8 L1208.5 490.8 L1209.0 499.5 L1209.5 491.0 L1210.0 498.1 L1210.5 484.5 L1211.0 499.7 L1211.5 489.5 L1212.0 501.2 L1212.5 490.9 L1213.0 499.0 L1213.5 489.2 L1214.0 497.6 L1214.5 487.0 L1215.0 499.4 L1215.5 486.4 L1216.0 498.5 L1216.5 489.3 L1217.0 498.8 L1217.5 487.6 L1218.0 498.3 L1218.5 491.0 L1219.0 500.9 L1219.5 491.3 L1220.0 499.3 L1220.5 492.7 L1221.0 501.5 L1221.5 491.9 L1222.0 500.8 L1222.5 488.2 L1223.0 500.4 L1223.5 490.5 L1224.0 499.9 L1224.5 490.6 L1225.0 498.3 L1225.5 490.9 L1226.0 498.2 L1226.5 487.0 L1227.0 497.4 L1227.5 490.7 L1228.0 500.8 L1228.5 490.8 L1229.0 498.4 L1229.5 488.0 L1230.0 498.5 L1230.5 491.0 L1231.0 497.7 L1231.5 492.1 L1232.0 498.2 L1232.5 488.0 L1233.0 497.9 L1233.5 490.2 L1234.0 497.9 L1234.5 491.6 L1235.0 498.4 L1235.5 491.1 L1236.0 497.8 L1236.5 488.3 L1237.0 497.7 L1237.5 491.0 L1238.0 502.0 L1238.5 489.6 L1239.0 499.0 L1239.5 490.3 L1240.0 497.7 L1240.5 486.9 L1241.0 498.9 L1241.5 491.1 L1242.0 498.3 L1242.5 487.7 L1243.0 499.7 L1243.5 490.3 L1244.0 501.0 L1244.5 492.0 L1245.0 499.8 L1245.5 492.2 L1246.0 501.2 L1246.5 491.4 L1247.0 500.4 L1247.5 491.2 L1248.0 504.7 L1248.5 488.1 L1249.0 498.5 L1249.5 491.1 L1250.0 502.5 L1250.5 492.5 L1251.0 499.3 L1251.5 489.4 L1252.0 499.7 L1252.5 493.0 L1253.0 503.8 L1253.5 489.2 L1254.0 499.8 L1254.5 492.5 L1255.0 501.1 L1255.5 488.6 L1256.0 500.2 L1256.5 488.3 L1257.0 499.6 L1257.5 492.2 L1258.0 499.1 L1258.5 486.9 L1259.0 500.5 L1259.5 491.8 L1260.0 502.0 L1260.5 489.6 L1261.0 501.0 L1261.5 492.0 L1262.0 500.1 L1262.5 487.9 L1263.0 499.7 L1263.5 490.1 L1264.0 498.6 L1264.5 491.2 L1265.0 501.2 L1265.5 490.0 L1266.0 499.1 L1266.5 485.9 L1267.0 499.7 L1267.5 486.6 L1268.0 499.6 L1268.5 490.8 L1269.0 500.3 L1269.5 488.2 L1270.0 499.6 L1270.5 485.8 L1271.0 498.9 L1271.5 490.2 L1272.0 500.0 L1272.5 489.8 L1273.0 499.3 L1273.5 490.9 L1274.0 497.3 L1274.5 488.1 L1275.0 497.5 L1275.5 491.0 L1276.0 497.7 L1276.5 491.3 L1277.0 496.7 L1277.5 489.3 L1278.0 497.7 L1278.5 490.3 L1279.0 498.4 L1279.5 491.1 L1280.0 498.1 L1280.5 491.4 L1281.0 498.1 L1281.5 487.3 L1282.0 499.7 L1282.5 490.1 L1283.0 498.2 L1283.5 490.4 L1284.0 498.0 L1284.5 491.8 L1285.0 499.9 L1285.5 489.4 L1286.0 497.6 L1286.5 488.8 L1287.0 498.4 L1287.5 491.0 L1288.0 499.0 L1288.5 490.8 L1289.0 499.2 L1289.5 492.5 L1290.0 500.1 L1290.5 488.1 L1291.0 498.7 L1291.5 493.3 L1292.0 502.2 L1292.5 492.3 L1293.0 502.6 L1293.5 492.0 L1294.0 500.1 L1294.5 490.1 L1295.0 502.0 L1295.5 492.3 L1296.0 499.8 L1296.5 491.6 L1297.0 500.7 L1297.5 490.6 L1298.0 498.7 L1298.5 493.3 L1299.0 499.9 L1299.5 490.1 L1300.0 499.9 L1300.5 490.1 L1301.0 501.1 L1301.5 490.3 L1302.0 502.6 L1302.5 492.0 L1303.0 499.9 L1303.5 489.1 L1304.0 501.8 L1304.5 491.6 L1305.0 497.7 L1305.5 487.9 L1306.0 497.2 L1306.5 491.1 L1307.0 498.3 L1307.5 489.6 L1308.0 498.6 L1308.5 490.5 L1309.0 499.4 L1309.5 490.2 L1310.0 497.1 L1310.5 491.9 L1311.0 497.5 L1311.5 492.2 L1312.0 500.4 L1312.5 492.0 L1313.0 498.5 L1313.5 491.5 L1314.0 498.8 L1314.5 492.1 L1315.0 499.4 L1315.5 491.3 L1316.0 500.3 L1316.5 490.6 L1317.0 499.8 L1317.5 492.5 L1318.0 500.4 L1318.5 492.1 L1319.0 500.3 L1319.5 492.6 L1320.0 501.4 L1320.5 489.4 L1321.0 504.1 L1321.5 492.1 L1322.0 498.4 L1322.5 492.8 L1323.0 499.7 L1323.5 490.8 L1324.0 502.4 L1324.5 490.3 L1325.0 498.8 L1325.5 488.5 L1326.0 503.1 L1326.5 491.9 L1327.0 502.6 L1327.5 492.6 L1328.0 501.2 L1328.5 491.6 L1329.0 499.2 L1329.5 488.9 L1330.0 500.4 L1330.5 485.9 L1331.0 498.4 L1331.5 491.5 L1332.0 502.7 L1332.5 492.7 L1333.0 500.3 L1333.5 490.2 L1334.0 500.2 L1334.5 489.3 L1335.0 499.3 L1335.5 492.4 L1336.0 500.0 L1336.5 492.2 L1337.0 501.0 L1337.5 491.5 L1338.0 502.7 L1338.5 492.5 L1339.0 499.0 L1339.5 492.5 L1340.0 503.8 L1340.5 488.3 L1341.0 498.5 L1341.5 490.3 L1342.0 500.1 L1342.5 485.9 L1343.0 500.2 L1343.5 493.0 L1344.0 499.2 L1344.5 489.3 L1345.0 500.5 L1345.5 490.6 L1346.0 498.4 L1346.5 490.2 L1347.0 500.4 L1347.5 488.8 L1348.0 499.4 L1348.5 492.7 L1349.0 499.3 L1349.5 491.2 L1350.0 499.4 L1350.5 489.6 L1351.0 500.0 L1351.5 491.9 L1352.0 501.4 L1352.5 491.8 L1353.0 502.4 L1353.5 492.0 L1354.0 499.1 L1354.5 491.5 L1355.0 501.6 L1355.5 488.5 L1356.0 498.8 L1356.5 490.6 L1357.0 504.9 L1357.5 490.5 L1358.0 500.4 L1358.5 491.5 L1359.0 502.2 L1359.5 489.5 L1360.0 500.4 L1360.5 492.4 L1361.0 499.7 L1361.5 489.3 L1362.0 500.5 L1362.5 492.5 L1363.0 502.7 L1363.5 488.7 L1364.0 498.4 L1364.5 487.8 L1365.0 504.1 L1365.5 488.5 L1366.0 499.2 L1366.5 489.1 L1367.0 498.4 L1367.5 491.9 L1368.0 499.3 L1368.1 490.7 L1368.2 502.3 L1368.3 496.0 L1368.4 504.3 L1368.5 498.0 L1368.6 509.4 L1368.7 501.4 L1368.8 511.5 L1368.9 504.5 L1369.0 511.8 L1369.2 507.3 L1369.4 515.1 L1369.6 508.0 L1369.7 519.9 L1369.9 513.6 L1370.1 522.3 L1370.3 515.4 L1370.5 525.1 L1370.7 519.7 L1370.8 528.0 L1371.0 522.7 L1371.2 529.7 L1371.4 525.0 L1371.6 531.8 L1371.8 529.4 L1371.9 534.4 L1372.1 531.0 L1372.3 537.2 L1372.5 531.3 L1372.9 540.9 L1373.2 537.5 L1373.6 545.8 L1374.0 539.3 L1374.3 546.0 L1374.7 539.1 L1375.1 548.2 L1375.4 544.8 L1375.8 554.6 L1376.2 547.4 L1376.5 555.6 L1376.9 549.0 L1377.3 556.9 L1377.6 553.1 L1378.0 559.9 L1378.5 556.6 L1379.0 561.7 L1379.5 559.0 L1380.0 564.3 L1380.5 561.0 L1380.9 567.4 L1381.4 563.8 L1381.9 568.5 L1382.4 564.8 L1382.9 570.5 L1383.4 565.2 L1383.9 573.4 L1384.4 567.8 L1384.9 574.3 L1385.3 571.4 L1385.8 576.4 L1386.3 573.5 L1386.8 578.1 L1387.3 575.9 L1387.8 582.6 L1388.3 577.4 L1388.8 581.4 L1389.3 576.5 L1389.8 584.7 L1390.3 580.2 L1390.8 585.6 L1391.3 581.5 L1391.8 588.2 L1392.3 583.3 L1392.8 588.8 L1393.3 585.7 L1393.8 591.6 L1394.3 585.3 L1394.8 591.5 L1395.2 585.7 L1395.7 594.9 L1396.2 588.7 L1396.7 594.7 L1397.2 589.5 L1397.7 596.6 L1398.2 591.8 L1398.7 597.7 L1399.2 591.2 L1399.7 601.1 L1400.2 595.4 L1400.7 600.5 L1401.2 595.8 L1401.7 601.0 L1402.2 597.2 L1402.7 604.2 L1403.2 598.7 L1403.7 603.9 L1404.2 599.5 L1404.7 604.5 L1405.2 600.9 L1405.6 608.5 L1406.1 599.9 L1406.6 609.3 L1407.1 603.2 L1407.6 608.3 L1408.1 603.8 L1408.6 608.0 L1409.1 602.6 L1409.6 609.1 L1410.1 604.8 L1410.6 611.5 L1411.1 606.2 L1411.6 610.5 L1412.0 606.5 L1412.5 613.0 L1413.0 608.6 L1413.5 616.8 L1414.0 608.2 L1414.5 615.0 L1415.0 609.2 L1415.5 616.2 L1416.0 610.9 L1416.5 619.0 L1417.0 610.7 L1417.5 616.5 L1418.0 610.9 L1418.5 617.5 L1419.0 612.6 L1419.5 616.6 L1420.0 611.8 L1420.5 617.2 L1421.0 613.1 L1421.5 616.8 L1422.0 612.5 L1422.5 620.2 L1422.9 614.1 L1423.4 618.1 L1423.9 614.0 L1424.4 619.4 L1424.9 610.7 L1425.4 618.4 L1425.9 615.6 L1426.4 620.3 L1426.9 614.3 L1427.4 620.1 L1427.9 615.8 L1428.4 622.8 L1428.9 613.9 L1429.4 621.7 L1429.9 613.8 L1430.4 624.1 L1430.9 615.1 L1431.4 620.9 L1431.9 615.9 L1432.4 621.9 L1432.9 616.4 L1433.4 621.3 L1433.9 615.8 L1434.4 621.7 L1434.9 614.5 L1435.4 621.1 L1435.9 616.7 L1436.5 622.3 L1437.0 617.3 L1437.5 622.1 L1438.0 614.6 L1438.5 621.2 L1439.0 617.1 L1439.5 622.6 L1440.0 615.9 L1440.5 623.1 L1441.0 615.7 L1441.5 620.7 L1442.0 615.1 L1442.5 620.3 L1443.0 616.4 L1443.2 622.3 L1443.4 618.1 L1443.6 625.5 L1443.8 622.6 L1444.1 628.2 L1444.3 624.8 L1444.5 631.2 L1444.7 629.3 L1445.2 634.3 L1445.7 630.2 L1446.2 636.7 L1446.7 632.8 L1447.3 638.4 L1447.8 635.6 L1448.3 641.4 L1448.8 637.1 L1449.3 644.4 L1449.8 640.1 L1450.3 647.6 L1450.8 643.8 L1451.3 648.7 L1451.8 646.5 L1452.4 654.1 L1452.9 648.0 L1453.4 653.5 L1453.9 650.9 L1454.4 656.8 L1454.9 652.4 L1455.4 657.5 L1455.9 654.8 L1456.4 660.9 L1456.9 656.0 L1457.4 662.4 L1457.9 656.8 L1458.4 664.2 L1458.9 660.5 L1459.4 665.5 L1460.0 660.8 L1460.5 667.2 L1461.0 662.9 L1461.5 669.9 L1462.0 666.1 L1462.5 672.5 L1463.0 668.6 L1463.5 676.4 L1464.0 669.9 L1464.5 675.5 L1465.0 669.9 L1465.5 677.6 L1466.0 673.3 L1466.5 679.8 L1467.0 673.5 L1467.5 678.7 L1468.0 674.7 L1468.5 679.1 L1469.0 673.0 L1469.5 681.0 L1470.0 676.1 L1470.5 680.9 L1471.0 678.1 L1471.5 682.9 L1472.0 679.0 L1472.5 684.8 L1472.9 679.6 L1473.4 687.0 L1473.9 681.7 L1474.4 686.9 L1474.9 681.0 L1475.4 686.6 L1475.9 683.2 L1476.4 691.2 L1476.9 684.3 L1477.4 692.7 L1477.9 684.4 L1478.4 692.0 L1478.9 686.2 L1479.4 692.1 L1479.9 686.2 L1480.4 693.9 L1480.9 688.3 L1481.4 693.2 L1481.9 687.9 L1482.4 693.5 L1482.9 687.1 L1483.4 693.2 L1483.9 686.5 L1484.4 694.6 L1484.9 688.8 L1485.4 695.6 L1485.9 691.3 L1486.4 695.2 L1486.9 690.4 L1487.4 698.3 L1487.9 691.7 L1488.4 698.2 L1488.9 693.4 L1489.5 697.7 L1490.0 693.1 L1490.5 699.4 L1491.0 693.8 L1491.5 699.4 L1492.0 694.4 L1492.5 700.0 L1493.0 694.5 L1493.5 702.3 L1494.0 694.5 L1494.5 700.1 L1495.0 695.8 L1495.5 700.1 L1496.0 694.8 L1496.5 701.3 L1497.0 697.5 L1497.5 701.7 L1498.0 697.9 L1498.5 705.2 L1499.0 698.3 L1499.5 705.6 L1500.0 699.2 L1500.5 704.2 L1501.0 699.7 L1501.5 705.3 L1502.0 699.0 L1502.5 705.3 L1503.0 701.1 L1503.5 704.6 L1504.0 699.3 L1504.5 706.7 L1505.0 701.5 L1505.5 705.9 L1506.1 700.9 L1506.6 707.9 L1507.1 699.8 L1507.6 706.1 L1508.1 700.8 L1508.6 705.4 L1509.1 700.5 L1509.6 705.8 L1510.1 700.6 L1510.6 703.7 L1511.1 696.8 L1511.6 704.6 L1512.1 698.6 L1512.6 704.5 L1513.1 698.6 L1513.6 705.4 L1514.1 701.5 L1514.6 704.9 L1515.1 700.2 L1515.6 705.4 L1516.1 701.3 L1516.6 706.9 L1517.1 701.3 L1517.6 706.2 L1518.1 701.7 L1518.6 708.8 L1519.1 702.2 L1519.6 707.7 L1520.2 700.4 L1520.7 707.4 L1521.2 701.4 L1521.7 707.7 L1522.2 702.7 L1522.7 708.9 L1523.2 703.6 L1523.7 708.7 L1524.2 702.9 L1524.7 708.7 L1525.2 703.2 L1525.7 707.7 L1526.2 703.4 L1526.7 707.4 L1527.2 702.9 L1527.7 707.0 L1528.2 703.0 L1528.7 711.5 L1529.2 703.9 L1529.7 708.4 L1530.2 702.5 L1530.7 709.0 L1531.2 704.6 L1531.7 708.4 L1532.2 704.9 L1532.7 710.4 L1533.2 704.3 L1533.7 710.1 L1534.2 703.9 L1534.7 711.9 L1535.1 704.1 L1535.6 710.3 L1536.1 704.9 L1536.6 709.3 L1537.1 704.6 L1537.6 709.0 L1538.1 704.4 L1538.6 710.0 L1539.1 704.0 L1539.6 710.3 L1540.1 705.0 L1540.6 710.7 L1541.1 705.6 L1541.6 710.5 L1542.1 704.4 L1542.6 710.2 L1543.1 705.9 L1543.6 709.3 L1544.1 703.7 L1544.6 710.8 L1545.1 704.1 L1545.6 709.4 L1546.1 703.4 L1546.6 712.9 L1547.1 706.0 L1547.6 711.4 L1548.1 703.7 L1548.6 710.2 L1549.1 703.4 L1549.6 709.6 L1550.1 704.6 L1550.6 710.5 L1551.1 703.9 L1551.6 711.9 L1552.0 707.2 L1552.5 712.6 L1553.0 707.2 L1553.5 712.6 L1554.0 707.3 L1554.5 712.5 L1555.0 708.3 L1555.5 714.5 L1556.0 709.2 L1556.5 715.4 L1557.0 708.6 L1557.5 713.8 L1558.0 708.0 L1558.5 712.6 L1559.0 709.0 L1559.5 714.1 L1560.0 709.7 L1560.5 713.4 L1561.0 708.9 L1561.5 714.1 L1562.0 709.5 L1562.5 713.5 L1563.0 708.5 L1563.5 713.9 L1564.0 709.4 L1564.5 714.0 L1565.0 708.7 L1565.5 715.2 L1566.0 709.6 L1566.5 713.7 L1567.0 709.4 L1567.5 713.6 L1568.0 707.4 L1568.5 712.9 L1569.0 706.9 L1569.5 712.8 L1570.0 707.7 L1570.5 714.9 L1571.0 708.6 L1571.5 715.6 L1572.0 707.3 L1572.5 713.1 L1573.0 704.8 L1573.5 713.3 L1574.0 705.7 L1574.5 714.2 L1575.0 707.2 L1575.5 713.3 L1576.0 707.4 L1576.5 711.7 L1577.0 707.3 L1577.5 714.1 L1578.0 706.6 L1578.5 712.3 L1579.0 708.0 L1579.5 712.3 L1580.0 708.0 L1580.5 714.6 L1581.0 705.9 L1581.5 714.6 L1582.0 705.8 L1582.5 712.9 L1583.0 708.1 L1583.5 711.8 L1584.0 706.8 L1584.5 712.0 L1585.0 707.6 L1585.5 715.1 L1586.0 707.5 L1586.5 713.2 L1587.0 707.8 L1587.5 712.3 L1588.0 707.7 L1588.5 714.1 L1589.0 707.6 L1589.5 712.4 L1590.0 706.4 L1590.5 713.8 L1591.0 708.7 L1591.5 713.6 L1592.0 708.1 L1592.5 714.4 L1593.0 707.8 L1593.5 713.0 L1594.0 706.6 L1594.5 711.9 L1595.0 706.4 L1595.5 713.2 L1596.0 705.7 L1596.5 713.2 L1597.0 707.4 L1597.5 711.6 L1598.0 707.6 L1598.5 712.2 L1599.0 707.8 L1599.5 713.7 L1600.0 708.0 L1600.5 711.8 L1601.0 705.8 L1601.5 715.9 L1602.0 707.2 L1602.5 712.6 L1603.0 707.9 L1603.5 713.3 L1604.0 708.2 L1604.5 713.1 L1605.0 708.4 L1605.5 714.9 L1606.0 707.5 L1606.5 712.3 L1607.0 708.6 L1607.5 714.9 L1608.0 708.7 L1608.5 713.3 L1609.0 709.5 L1609.5 714.8 L1610.0 707.7 L1610.5 715.2 L1611.0 708.3 L1611.5 712.7 L1612.0 708.3 L1612.5 714.3 L1613.0 709.1 L1613.5 714.8 L1614.0 708.5 L1614.5 713.8 L1615.0 708.4 L1615.5 713.2 L1616.0 707.6 L1616.5 713.8 L1617.0 706.5 L1617.5 714.6 L1618.0 708.3 L1618.5 714.1 L1619.0 708.9 L1619.5 713.9 L1620.0 709.4 L1620.5 714.3 L1621.0 709.2 L1621.5 714.1 L1622.0 708.6 L1622.5 715.8 L1623.0 709.4 L1623.5 713.8 L1624.0 708.0 L1624.5 714.3 L1625.0 709.6 L1625.5 713.6 L1626.0 708.4 L1626.5 714.8 L1627.0 709.2 L1627.5 713.7 L1628.0 710.4 L1628.5 714.1 L1629.0 710.1 L1629.5 714.9 L1630.0 709.4 L1630.5 714.1 L1631.0 709.0 L1631.5 713.3 L1632.0 708.1 L1632.5 714.7 L1633.0 708.9 L1633.5 713.5 L1634.0 709.0 L1634.5 712.8 L1635.0 708.1 L1635.5 715.3 L1636.0 709.1 L1636.5 715.1 L1637.0 708.7 L1637.5 713.6 L1638.0 707.1 L1638.5 711.7 L1639.0 708.0 L1639.5 711.9 L1640.0 707.5 L1640.5 714.9 L1641.0 707.2 L1641.5 712.2 L1642.0 708.0 L1642.5 711.8 L1643.0 708.2 L1643.5 712.1 L1644.0 706.8 L1644.5 714.2 L1645.0 708.7 L1645.5 712.9 L1646.0 708.8 L1646.5 714.5 L1646.9 707.7 L1647.4 713.0 L1647.9 708.5 L1648.4 713.7 L1648.9 706.4 L1649.4 711.7 L1649.9 706.9 L1650.4 711.6 L1650.9 705.8 L1651.4 712.2 L1651.9 704.9 L1652.4 713.5 L1652.9 708.0 L1653.4 712.2 L1653.9 705.2 L1654.4 711.3 L1654.9 706.5 L1655.4 712.6 L1655.9 706.4 L1656.4 712.1 L1656.9 703.5 L1657.4 711.5 L1657.9 705.9 L1658.4 711.7 L1658.9 707.0 L1659.4 711.7 L1659.9 708.5 L1660.4 712.4 L1660.9 706.0 L1661.4 715.2 L1661.9 707.2 L1662.4 714.0 L1662.9 708.0 L1663.4 712.8 L1663.9 709.1 L1664.4 713.3 L1664.9 706.3 L1665.4 713.6 L1665.9 706.2 L1666.4 714.4 L1666.9 707.3 L1667.4 717.1 L1667.9 709.4 L1668.4 713.9 L1668.9 709.8 L1669.4 714.7 L1669.9 709.9 L1670.4 713.8 L1670.9 709.5 L1671.4 713.8 L1671.9 709.2 L1672.4 715.4 L1672.9 709.3 L1673.4 714.8 L1673.9 709.8 L1674.4 716.2 L1674.9 709.8 L1675.4 716.1 L1675.9 706.8 L1676.4 713.1 L1676.9 706.3 L1677.4 713.2 L1677.9 708.4 L1678.4 715.3 L1678.9 707.2 L1679.4 715.2 L1679.9 710.1 L1680.4 713.9 L1680.9 708.7 L1681.4 713.6 L1681.9 709.6 L1682.4 713.9 L1682.9 708.6 L1683.4 712.2 L1683.9 707.5 L1684.4 712.4 L1684.9 706.4 L1685.5 713.3 L1686.0 704.9 L1686.5 711.9 L1687.0 707.4 L1687.5 711.4 L1688.0 707.2 L1688.5 712.1 L1689.0 704.0 L1689.5 710.8 L1690.0 707.1 L1690.5 712.4 L1691.0 706.2 L1691.5 710.9 L1692.0 706.7 L1692.5 710.8 L1693.0 706.4 L1693.5 713.1 L1694.0 703.9 L1694.5 711.6 L1695.0 706.9 L1695.5 710.9 L1696.0 706.2 L1696.5 712.4 L1697.0 707.5 L1697.5 712.9 L1698.0 706.1 L1698.5 710.4 L1699.0 706.7 L1699.5 712.3 L1700.0 705.2 L1700.5 710.4 L1701.0 702.7 L1701.5 711.1 L1702.0 705.3 L1702.5 709.9 L1703.0 705.0 L1703.5 711.4 L1704.0 705.1 L1704.5 711.4 L1705.0 705.7 L1705.5 712.1 L1706.0 702.1 L1706.5 709.5 L1707.0 705.3 L1707.5 709.7 L1708.0 704.3 L1708.2 711.7 L1708.3 708.1 L1708.5 717.4 L1708.7 711.8 L1708.9 717.7 L1709.1 714.3 L1709.2 720.3 L1709.4 715.9 L1709.8 725.7 L1710.2 718.9 L1710.6 726.3 L1711.0 722.8 L1711.4 729.9 L1711.8 725.8 L1712.2 732.8 L1712.6 726.8 L1713.1 734.6 L1713.5 731.2 L1713.9 738.2 L1714.3 735.1 L1714.7 741.8 L1715.1 737.9 L1715.5 744.4 L1715.9 741.6 L1716.3 748.3 L1716.7 743.0 L1717.2 751.9 L1717.7 746.2 L1718.2 753.9 L1718.7 746.0 L1719.2 755.1 L1719.7 748.2 L1720.2 754.2 L1720.7 751.2 L1721.2 757.5 L1721.7 752.0 L1722.2 758.2 L1722.7 753.4 L1723.2 759.8 L1723.7 754.2 L1724.2 762.7 L1724.7 756.8 L1725.2 765.7 L1725.7 759.3 L1726.2 765.7 L1726.7 761.5 L1727.2 765.0 L1727.7 758.0 L1728.2 765.1 L1728.7 761.6 L1729.2 765.4 L1729.7 761.1 L1730.2 767.0 L1730.7 760.0 L1731.2 768.0 L1731.7 760.6 L1732.2 766.7 L1732.7 761.5 L1733.2 768.1 L1733.7 762.5 L1734.2 767.0 L1734.7 764.0 L1735.2 769.0 L1735.7 763.6 L1736.2 770.7 L1736.7 764.5 L1737.2 769.2 L1737.7 765.0 L1738.2 770.0 L1738.7 765.5 L1739.2 770.7 L1739.7 766.3 L1740.2 771.0 L1740.7 765.1 L1741.2 772.0 L1741.7 767.1 L1742.2 771.5 L1742.7 767.6 L1743.2 773.5 L1743.7 765.7 L1744.2 772.6 L1744.7 767.0 L1745.2 772.2 L1745.7 765.9 L1746.2 773.6 L1746.7 768.3 L1747.2 774.3 L1747.7 768.2 L1748.2 774.1 L1748.7 769.2 L1749.1 774.6 L1749.6 767.1 L1750.1 774.1 L1750.6 769.0 L1751.1 774.7 L1751.6 771.2 L1752.1 777.1 L1752.6 771.0 L1753.1 775.6 L1753.6 771.2 L1754.1 776.7 L1754.6 769.6 L1755.1 776.8 L1755.6 772.6 L1756.1 777.2 L1756.6 771.2 L1757.1 777.6 L1757.6 770.8 L1758.1 778.0 L1758.6 772.2 L1759.1 777.8 L1759.6 771.8 L1760.1 778.3 L1760.6 774.1 L1761.1 779.1 L1761.6 773.7 L1762.1 780.3 L1762.6 770.5 L1763.0 781.9 L1763.5 774.7 L1764.0 779.0 L1764.5 774.7 L1765.0 780.6 L1765.5 773.8 L1766.0 781.3 L1766.5 773.9 L1767.0 781.0 L1767.5 774.8 L1768.0 782.7 L1768.5 775.1 L1769.0 780.9 L1769.5 774.9 L1770.0 781.2 L1770.5 775.7 L1771.0 780.4 L1771.5 769.4 L1772.1 780.0 L1772.6 772.2 L1773.1 776.4 L1773.6 769.8 L1774.1 774.5 L1774.6 766.8 L1775.2 770.6 L1775.7 764.8 L1776.2 769.9 L1776.7 763.7 L1777.0 766.5 L1777.3 759.2 L1777.6 765.2 L1778.0 757.4 L1778.3 764.0 L1778.6 753.2 L1778.9 757.8 L1779.2 751.9 L1779.5 755.7 L1779.8 748.6 L1780.2 751.6 L1780.5 745.1 L1780.8 748.4 L1781.1 740.9 L1781.4 745.3 L1781.7 739.3 L1782.0 744.0 L1782.4 736.8 L1782.7 740.5 L1783.0 733.7 L1783.3 739.2 L1783.6 728.5 L1783.9 736.2 L1784.1 727.4 L1784.4 732.3 L1784.7 723.5 L1785.0 729.8 L1785.2 722.3 L1785.5 725.4 L1785.8 714.9 L1786.1 723.6 L1786.3 715.3 L1786.6 719.7 L1786.9 712.6 L1787.2 716.4 L1787.4 708.6 L1787.7 713.1 L1788.0 704.9 L1788.5 713.2 L1789.0 702.4 L1789.5 710.6 L1790.0 699.8 L1790.5 703.7 L1791.0 698.2 L1791.5 701.3 L1792.0 691.9 L1792.5 699.6 L1793.0 690.9 L1793.5 696.0 L1794.0 688.2 L1794.5 693.9 L1795.0 684.4 L1795.5 692.4 L1796.0 686.4 L1796.5 693.0 L1797.0 687.5 L1797.4 692.4 L1797.9 685.2 L1798.4 694.1 L1798.9 688.6 L1799.4 694.2 L1799.9 688.3 L1800.4 693.9 L1800.9 688.9 L1801.3 693.8 L1801.8 689.9 L1802.3 696.5 L1802.8 689.8 L1803.3 695.0 L1803.7 689.8 L1804.2 692.4 L1804.6 683.2 L1805.1 690.5 L1805.5 683.0 L1806.0 686.1 L1806.4 680.7 L1806.9 682.8 L1807.3 674.0 L1807.8 682.6 L1808.2 673.4 L1808.7 679.9 L1809.1 671.6 L1809.6 675.7 L1810.0 668.2 L1810.5 676.7 L1811.0 669.4 L1811.5 675.3 L1812.0 669.3 L1812.5 676.6 L1813.0 671.2 L1813.5 678.9 L1814.0 672.4 L1814.5 678.9 L1815.0 672.6 L1815.5 679.8 L1816.0 674.1 L1816.5 679.6 L1817.0 672.9 L1817.5 680.7 L1818.0 676.1 L1818.5 680.5 L1819.0 675.7 L1819.5 682.8 L1820.0 675.8 L1820.5 682.9 L1821.0 677.2 L1821.5 683.9 L1822.0 679.6 L1822.5 685.4 L1823.0 680.1 L1823.5 689.5 L1824.0 681.3 L1824.5 687.5 L1825.0 683.5 L1825.5 689.5 L1826.0 684.4 L1826.5 690.1 L1827.0 685.3 L1827.5 690.4 L1828.0 687.1 L1828.5 693.7 L1829.0 687.4 L1829.5 694.3 L1830.0 689.5 L1830.5 694.5 L1831.0 691.4 L1831.5 696.1 L1832.0 692.6 L1832.5 700.1 L1833.0 693.7 L1833.5 699.9 L1834.0 696.4 L1834.5 701.7 L1835.0 697.8 L1835.5 707.1 L1836.0 700.4 L1836.5 706.5 L1837.0 701.2 L1837.5 711.7 L1838.0 704.7 L1838.5 711.2 L1839.0 702.7 L1839.5 710.5 L1840.0 707.8 L1840.5 713.6 L1841.0 706.2 L1841.5 716.7 L1842.0 710.2 L1842.5 716.2 L1843.0 712.6 L1843.5 717.7 L1844.0 713.4 L1844.5 719.9 L1845.0 714.8 L1845.5 722.7 L1846.0 718.3 L1846.5 724.1 L1847.0 720.3 L1847.5 728.4 L1848.0 717.4 L1848.5 728.3 L1849.0 719.1 L1849.5 728.8 L1850.0 724.4 L1850.5 729.1 L1851.0 725.6 L1851.5 731.8 L1852.0 726.8 L1852.5 731.6 L1853.0 726.7 L1853.5 731.9 L1854.0 727.5 L1854.6 734.1 L1855.1 728.4 L1855.6 736.4 L1856.1 729.0 L1856.6 735.1 L1857.1 729.3 L1857.6 735.7 L1858.1 729.6 L1858.6 735.4 L1859.1 731.1 L1859.6 736.1 L1860.1 732.5 L1860.6 737.6 L1861.1 729.1 L1861.6 737.8 L1862.1 732.9 L1862.7 739.4 L1863.2 731.4 L1863.7 738.9 L1864.2 733.8 L1864.7 741.3 L1865.2 735.3 L1865.7 740.7 L1866.2 736.4 L1866.7 741.2 L1867.2 736.7 L1867.7 742.2 L1868.2 737.4 L1868.7 745.9 L1869.2 737.7 L1869.7 744.0 L1870.2 738.8 L1870.7 743.8 L1871.2 739.2 L1871.7 743.3 L1872.2 738.9 L1872.7 745.1 L1873.2 738.6 L1873.7 743.9 L1874.2 740.1 L1874.7 745.1 L1875.1 740.2 L1875.6 744.9 L1876.1 741.0 L1876.6 746.7 L1877.1 741.3 L1877.6 746.0 L1878.1 740.5 L1878.6 747.6 L1879.1 738.9 L1879.6 747.6 L1880.1 741.8 L1880.6 746.6 L1881.1 742.8 L1881.6 746.4 L1882.1 741.4 L1882.6 747.4 L1883.1 741.7 L1883.6 746.7 L1884.1 738.6 L1884.6 747.6 L1885.1 741.3 L1885.6 749.6 L1886.1 742.9 L1886.6 748.3 L1887.1 742.7 L1887.6 748.9 L1888.1 743.2 L1888.6 748.5 L1889.1 742.9 L1889.6 751.2 L1890.1 744.1 L1890.6 750.3 L1891.1 739.9 L1891.6 749.8 L1892.0 742.9 L1892.5 751.3 L1893.0 744.0 L1893.5 749.6 L1894.0 744.3 L1894.5 749.8 L1895.0 743.6 L1895.5 749.5 L1896.0 745.3 L1896.5 750.6 L1897.0 745.7 L1897.5 751.5 L1898.0 745.4 L1898.5 752.5 L1899.0 744.5 L1899.5 752.0 L1900.0 742.5 L1900.5 751.5 L1901.0 744.8 L1901.5 754.1 L1902.0 745.6 L1902.5 752.2 L1903.0 746.0 L1903.5 750.6 L1904.0 746.5 L1904.5 751.5 L1905.0 746.8 L1905.5 751.4 L1906.0 746.9 L1906.5 751.0 L1907.0 745.7 L1907.5 751.4 L1908.0 744.8 L1908.5 752.7 L1909.0 744.7 L1909.5 750.9 L1910.0 742.6 L1910.5 751.3 L1911.0 745.6 L1911.5 752.3 L1912.0 747.3 L1912.5 752.2 L1913.0 744.6 L1913.5 752.9 L1914.0 746.6 L1914.5 753.6 L1915.0 745.0 L1915.5 755.0 L1916.0 745.5 L1916.5 753.9 L1917.0 748.3 L1917.5 754.8 L1918.0 746.8 L1918.5 753.6 L1919.0 749.7 L1919.5 756.0 L1920.0 749.1 L1920.5 755.4 L1921.0 747.5 L1921.5 757.0 L1922.0 747.9 L1922.5 752.9 L1923.0 747.4 L1923.5 755.4 L1924.0 749.1 L1924.5 753.9 L1925.0 750.1 L1925.5 756.0 L1926.0 746.7 L1926.5 755.2 L1927.0 748.4 L1927.5 755.0 L1928.0 749.2 L1928.5 754.3 L1929.0 750.1 L1929.5 755.7 L1930.0 750.4 L1930.5 759.2 L1931.0 749.6 L1931.5 755.6 L1932.0 750.8 L1932.5 755.5 L1933.0 750.8 L1933.5 756.6 L1934.0 751.4 L1934.5 758.0 L1935.0 750.2 L1935.6 755.6 L1936.1 750.5 L1936.6 758.8 L1937.1 750.9 L1937.6 755.8 L1938.1 750.6 L1938.6 758.0 L1939.1 751.4 L1939.6 758.2 L1940.1 750.1 L1940.6 755.9 L1941.1 749.2 L1941.6 756.4 L1942.1 749.9 L1942.6 754.7 L1943.1 750.0 L1943.6 759.0 L1944.1 750.1 L1944.6 754.9 L1945.1 750.4 L1945.6 755.3 L1946.1 751.0 L1946.6 756.0 L1947.1 751.0 L1947.6 756.2 L1948.1 750.3 L1948.6 757.9 L1949.1 747.8 L1949.6 757.8 L1950.1 752.0 L1950.6 756.6 L1951.1 751.4 L1951.6 755.2 L1952.1 750.8 L1952.6 756.6 L1953.1 751.2 L1953.6 757.1 L1954.1 749.6 L1954.6 756.9 L1955.1 749.8 L1955.6 755.5 L1956.1 748.9 L1956.7 756.0 L1957.2 748.8 L1957.7 755.5 L1958.2 748.1 L1958.7 757.2 L1959.2 750.1 L1959.7 756.1 L1960.2 752.6 L1960.7 756.6 L1961.2 751.9 L1961.7 759.2 L1962.2 752.1 L1962.7 757.7 L1963.2 752.5 L1963.7 758.8 L1964.2 751.4 L1964.7 759.8 L1965.2 752.7 L1965.7 758.0 L1966.2 752.0 L1966.7 757.6 L1967.2 752.1 L1967.7 756.6 L1968.2 750.5 L1968.7 755.6 L1969.2 750.8 L1969.7 756.6 L1970.2 751.1 L1970.7 758.6 L1971.2 748.9 L1971.7 758.0 L1972.2 752.6 L1972.7 760.5 L1973.2 751.4 L1973.7 757.1 L1974.2 752.1 L1974.7 757.3 L1975.2 751.9 L1975.7 757.9 L1976.2 752.4 L1976.7 758.8 L1977.2 754.1 L1977.7 758.8 L1978.2 753.6 L1978.7 758.4 L1979.2 752.9 L1979.7 758.5 L1980.2 750.5 L1980.7 759.1 L1981.2 753.2 L1981.7 759.2 L1982.2 753.8 L1982.7 760.6 L1983.2 753.8 L1983.7 758.4 L1984.2 754.3 L1984.7 760.2 L1985.2 753.8 L1985.7 760.2 L1986.2 754.3 L1986.7 760.4 L1987.2 752.7 L1987.7 759.4 L1988.2 752.5 L1988.7 759.7 L1989.2 752.2 L1989.7 761.5 L1990.2 753.0 L1990.7 757.3 L1991.2 751.6 L1991.7 758.5 L1992.2 752.3 L1992.7 758.2 L1993.2 750.7 L1993.7 758.9 L1994.2 752.3 L1994.7 757.2 L1995.2 749.8 L1995.7 761.4 L1996.2 752.8 L1996.7 758.2 L1997.2 749.9 L1997.7 757.0 L1998.2 752.0 L1998.7 759.3 L1999.2 752.1 L1999.7 761.2 L2000.2 753.0 L2000.7 756.8 L2001.2 750.9 L2001.7 758.5 L2002.2 751.9 L2002.7 756.9 L2003.2 751.1 L2003.7 756.3 L2004.2 752.9 L2004.7 757.2 L2005.2 750.2 L2005.7 759.2 L2006.2 753.4 L2006.7 758.9 L2007.2 752.2 L2007.7 758.8 L2008.2 753.6 L2008.7 759.4 L2009.2 754.4 L2009.7 762.4 L2010.2 753.5 L2010.7 758.8 L2011.2 753.2 L2011.7 760.2 L2012.2 752.1 L2012.7 759.0 L2013.2 753.1 L2013.7 759.0 L2014.2 753.2 L2014.7 758.2 L2015.2 753.3 L2015.7 759.8 L2016.2 754.1 L2016.7 758.5 L2017.2 754.5 L2017.7 759.2 L2018.2 753.7 L2018.7 758.7 L2019.2 754.4 L2019.7 758.6 L2020.2 753.5 L2020.7 759.6 L2021.2 752.4 L2021.7 758.1 L2022.2 753.6 L2022.7 759.7 L2023.2 752.2 L2023.7 757.8 L2024.2 753.5 L2024.7 757.8 L2025.2 753.0 L2025.7 757.6 L2026.2 753.5 L2026.7 760.7 L2027.2 752.8 L2027.7 757.1 L2028.2 749.8 L2028.7 758.4 L2029.2 752.6 L2029.7 759.0 L2030.2 752.4 L2030.7 757.9 L2031.2 752.0 L2031.6 756.5 L2032.1 750.3 L2032.6 757.9 L2033.1 751.9 L2033.6 757.2 L2034.1 750.1 L2034.6 759.2 L2035.1 752.8 L2035.6 758.1 L2036.1 750.6 L2036.6 759.2 L2037.1 751.4 L2037.6 759.6 L2038.1 751.2 L2038.6 758.6 L2039.1 753.5 L2039.6 760.7 L2040.1 753.0 L2040.6 758.6 L2041.1 750.9 L2041.6 758.6 L2042.1 753.0 L2042.6 759.5 L2043.1 753.9 L2043.6 758.5 L2044.1 752.8 L2044.6 760.1 L2045.1 753.5 L2045.6 760.1 L2046.1 752.2 L2046.6 757.9 L2047.1 753.7 L2047.6 758.4 L2048.1 753.4 L2048.6 761.9 L2049.1 752.4 L2049.6 759.5 L2050.1 749.8 L2050.6 757.6 L2051.1 750.6 L2051.6 758.5 L2052.1 753.7 L2052.6 760.6 L2053.1 751.3 L2053.6 760.5 L2054.1 753.3 L2054.6 759.4 L2055.1 751.8 L2055.6 759.2 L2056.1 752.3 L2056.6 758.5 L2057.1 753.8 L2057.6 759.1 L2058.1 753.1 L2058.6 759.5 L2059.1 754.5 L2059.6 759.7 L2060.1 753.6 L2060.5 759.6 L2061.0 752.6 L2061.5 758.4 L2062.0 754.5 L2062.5 759.1 L2063.0 754.0 L2063.5 758.9 L2064.0 754.5 L2064.5 761.3 L2065.0 754.1 L2065.5 760.3 L2066.0 751.4 L2066.5 762.0 L2067.0 753.1 L2067.5 759.4 L2068.0 754.7 L2068.5 760.1 L2069.0 753.6 L2069.5 758.9 L2070.0 753.9 L2070.5 759.4 L2071.0 753.7 L2071.5 760.1 L2072.0 754.3 L2072.5 761.2 L2073.0 754.9 L2073.5 759.4 L2074.0 753.8 L2074.5 760.0 L2075.0 754.2 L2075.5 763.1 L2076.0 757.5 L2076.5 764.1 L2077.0 757.7 L2077.5 767.9 L2078.0 763.1 L2078.5 769.9 L2079.0 766.4 L2079.5 772.7 L2080.0 766.4 L2080.5 775.8 L2081.0 769.5 L2081.5 777.8 L2081.9 770.1 L2082.4 779.3 L2082.9 773.8 L2083.4 781.1 L2083.9 773.9 L2084.4 784.1 L2084.9 776.7 L2085.4 783.7 L2085.9 776.4 L2086.3 787.2 L2086.8 782.1 L2087.3 790.4 L2087.8 783.4 L2088.3 789.7 L2088.8 783.9 L2089.3 794.6 L2089.8 787.4 L2090.3 792.3 L2090.8 787.7 L2091.3 795.0 L2091.8 790.8 L2092.3 799.3 L2092.8 791.7 L2093.3 797.8 L2093.8 793.0 L2094.3 799.7 L2094.8 795.5 L2095.2 804.6 L2095.7 798.3 L2096.2 804.2 L2096.7 800.4 L2097.2 807.6 L2097.7 802.5 L2098.2 808.5 L2098.7 805.1 L2099.2 811.6 L2099.7 805.7 L2100.2 813.6 L2100.7 805.9 L2101.2 815.8 L2101.7 810.0 L2102.2 817.1 L2102.7 810.9 L2103.2 818.3 L2103.7 813.2 L2104.2 821.8 L2104.7 813.1 L2105.1 821.4 L2105.6 816.1 L2106.1 823.8 L2106.6 817.9 L2107.1 824.5 L2107.6 817.5 L2108.1 826.3 L2108.6 818.3 L2109.1 830.7 L2109.6 822.9 L2110.1 831.8 L2110.6 821.3 L2111.1 832.3 L2111.6 824.5 L2112.1 834.3 L2112.5 825.4 L2113.0 833.1 L2113.5 827.8 L2114.0 838.0 L2114.5 827.9 L2115.0 838.8 L2115.5 831.1 L2116.0 838.0 L2116.5 831.7 L2117.0 840.6 L2117.5 832.9 L2118.0 839.4 L2118.5 834.5 L2119.0 845.0 L2119.5 833.9 L2120.0 840.4 L2120.5 833.8 L2121.0 843.1 L2121.5 835.1 L2122.0 842.0 L2122.4 834.3 L2122.9 847.8 L2123.4 837.9 L2123.9 844.1 L2124.4 838.0 L2124.9 845.1 L2125.4 836.8 L2125.9 844.5 L2126.4 839.4 L2126.9 845.2 L2127.4 840.4 L2127.9 847.0 L2128.4 837.2 L2128.9 847.1 L2129.4 840.6 L2129.6 848.9 L2129.8 843.3 L2130.0 852.1 L2130.2 843.8 L2130.4 855.3 L2130.6 850.0 L2130.8 858.9 L2131.3 853.7 L2131.9 862.7 L2132.4 855.9 L2132.9 864.4 L2133.4 859.1 L2133.9 869.0 L2134.5 860.2 L2135.0 875.3 L2135.5 865.5 L2136.0 872.3 L2136.5 867.5 L2137.0 875.7 L2137.4 863.1 L2137.9 876.2 L2138.4 867.7 L2138.9 881.9 L2139.4 866.9 L2139.9 878.9 L2140.4 871.6 L2140.9 880.1 L2141.3 871.0 L2141.8 886.8 L2142.3 873.0 L2142.8 883.4 L2143.3 877.2 L2143.8 884.8 L2144.3 876.2 L2144.8 886.1 L2145.3 879.0 L2145.8 886.4 L2146.3 879.2 L2146.8 889.8 L2147.3 880.0 L2147.8 886.7 L2148.3 879.2 L2148.8 887.7 L2149.3 880.6 L2149.8 886.8 L2150.2 880.8 L2150.7 887.6 L2151.2 880.8 L2151.7 888.4 L2152.2 880.7 L2152.7 889.8 L2153.2 881.3 L2153.7 893.0 L2154.2 883.0 L2154.7 889.1 L2155.2 881.9 L2155.7 892.1 L2156.2 879.1 L2156.7 890.0 L2157.2 883.0 L2157.7 889.8 L2158.2 884.2 L2158.7 892.6 L2159.2 878.3 L2159.7 890.3 L2160.2 883.0 L2160.6 890.8 L2161.1 883.9 L2161.6 890.7 L2162.1 885.1 L2162.6 895.5 L2163.1 884.9 L2163.6 893.7 L2164.1 884.6 L2164.6 898.8 L2165.1 883.7 L2165.6 897.6 L2166.1 881.3 L2166.6 892.6 L2167.1 883.8 L2167.6 894.7 L2168.0 883.3 L2168.5 896.1 L2169.0 886.1 L2169.5 893.9 L2170.0 888.1 L2170.5 896.9 L2171.0 883.8 L2171.5 895.5 L2172.0 887.0 L2172.5 896.1 L2173.0 886.0 L2173.5 898.6 L2174.0 889.0 L2174.5 898.8 L2175.0 887.0 L2175.5 896.0 L2176.0 888.4 L2176.5 894.4 L2177.0 886.0 L2177.5 896.6 L2178.0 886.9 L2178.5 895.3 L2179.0 887.4 L2179.5 901.1 L2180.0 888.5 L2180.5 895.8 L2181.0 884.4 L2181.5 899.3 L2182.0 886.8 L2182.5 896.0 L2183.0 889.2 L2183.5 899.0 L2184.0 889.2 L2184.5 897.9 L2184.9 887.6 L2185.4 897.1 L2185.9 883.7 L2186.4 895.8 L2186.9 888.2 L2187.4 896.0 L2187.9 887.9 L2188.4 897.3 L2188.9 888.2 L2189.4 894.4 L2189.9 888.2 L2190.4 894.6 L2190.9 886.3 L2191.4 897.1 L2191.9 888.7 L2192.4 896.7 L2192.9 887.7 L2193.4 898.1 L2193.9 888.5 L2194.4 900.2 L2194.9 887.5 L2195.4 898.0 L2195.9 889.0 L2196.4 895.6 L2196.9 886.2 L2197.4 896.7 L2197.9 888.5 L2198.4 896.7 L2198.9 892.8" stroke="#ffd700" stroke-width="1.0" fill="none"/>
<path d="M997.0 512.5C1058.8 512.5 1305.8 512.5 1368.0 512.5C1370.0 513.0 1368.0 514.2 1370.0 515.5C1372.0 516.8 1375.9 517.5 1380.0 520.5C1384.1 523.5 1389.9 529.3 1394.7 533.5C1399.5 537.7 1404.0 542.2 1408.6 545.5C1413.2 548.8 1417.9 551.3 1422.5 553.5C1427.1 555.7 1432.8 557.3 1436.4 558.5C1440.0 559.7 1442.6 558.5 1444.0 560.5C1445.0 563.3 1444.0 570.8 1445.0 575.5C1447.1 580.2 1452.7 584.3 1456.7 588.5C1460.7 592.7 1464.8 596.5 1469.0 600.5C1473.2 604.5 1477.5 608.5 1481.7 612.5C1485.9 616.5 1489.8 620.7 1494.0 624.5C1498.2 628.3 1501.8 632.3 1506.7 635.5C1511.6 638.7 1517.8 640.8 1523.3 643.5C1528.8 646.2 1533.9 649.2 1540.0 651.5C1546.1 653.8 1555.3 656.2 1560.0 657.5C1564.7 658.8 1560.0 657.8 1568.0 659.5C1576.2 661.2 1590.5 665.3 1609.0 667.5C1627.5 669.7 1662.7 671.0 1679.0 672.5C1695.3 674.0 1700.2 675.2 1706.7 676.5C1713.2 677.8 1714.8 679.3 1717.8 680.5C1720.8 681.7 1721.0 683.5 1724.7 683.5C1728.4 683.0 1736.5 679.5 1740.0 677.5C1743.5 675.5 1740.0 672.5 1745.7 671.5C1752.0 671.5 1770.3 671.5 1778.0 671.5C1785.7 665.5 1787.8 644.5 1792.0 635.5C1796.2 626.5 1800.0 625.7 1803.3 617.5C1806.6 609.3 1809.4 593.5 1811.7 586.5C1814.0 579.5 1814.5 580.8 1817.0 575.5C1819.5 570.2 1823.5 558.2 1827.0 554.5C1830.5 553.5 1832.7 553.5 1838.0 553.5C1843.3 555.3 1850.8 561.3 1858.9 565.5C1867.0 569.7 1879.9 575.2 1886.7 578.5C1893.5 581.8 1890.8 582.3 1900.0 585.5C1909.2 588.7 1925.5 594.0 1941.7 597.5C1957.9 601.0 1980.8 604.5 1997.0 606.5C2013.2 608.5 2026.0 608.7 2039.0 609.5C2052.0 610.3 2068.0 610.3 2075.0 611.5C2080.8 612.7 2077.5 613.7 2080.8 616.5C2084.1 619.3 2090.5 624.0 2094.7 628.5C2098.9 633.0 2101.2 637.2 2105.8 643.5C2110.4 649.8 2117.4 660.5 2122.5 666.5C2127.6 672.5 2130.6 674.3 2136.4 679.5C2142.2 684.7 2150.3 692.8 2157.2 697.5C2164.1 702.2 2171.1 705.0 2178.0 707.5C2184.9 710.0 2195.4 711.7 2198.9 712.5" stroke="#0000ff" stroke-width="1.1" fill="none" stroke-linejoin="round" stroke-dasharray="6,4"/>
<path d="M997.0 511.5C1058.8 511.5 1305.9 511.5 1368.0 511.5C1369.7 511.7 1368.0 511.5 1369.7 512.5C1371.8 514.5 1376.6 518.8 1380.8 523.5C1385.0 528.2 1390.1 534.7 1394.7 540.5C1399.3 546.3 1404.0 553.5 1408.6 558.5C1413.2 563.5 1417.9 567.0 1422.5 570.5C1427.1 574.0 1432.7 577.7 1436.4 579.5C1440.2 581.3 1441.6 579.5 1445.0 581.5C1448.4 584.2 1452.0 589.7 1456.7 595.5C1461.4 601.3 1467.8 609.7 1473.3 616.5C1478.8 623.3 1484.4 630.8 1490.0 636.5C1495.6 642.2 1501.2 646.5 1506.7 650.5C1512.2 654.5 1517.8 657.7 1523.3 660.5C1528.8 663.3 1533.9 665.2 1540.0 667.5C1546.1 669.8 1553.0 672.8 1560.0 674.5C1567.0 676.2 1568.9 675.7 1581.7 677.5C1594.5 679.3 1616.5 683.3 1637.0 685.5C1657.5 687.7 1692.2 689.0 1705.0 690.5C1713.6 692.0 1711.3 693.7 1713.6 694.5C1715.9 695.3 1716.5 695.5 1719.0 695.5C1721.5 694.2 1725.8 691.5 1728.3 686.5C1730.8 681.5 1731.0 671.0 1733.9 665.5C1736.8 660.0 1742.2 653.8 1745.7 653.5C1749.2 653.5 1750.9 658.3 1754.7 663.5C1758.5 668.7 1765.1 683.0 1768.6 684.5C1772.1 684.5 1773.2 678.7 1775.5 672.5C1777.8 666.3 1779.5 654.7 1782.5 647.5C1785.5 640.3 1790.6 632.0 1793.6 629.5C1796.6 629.5 1798.7 632.5 1800.5 632.5C1802.3 631.7 1803.1 631.7 1804.7 624.5C1806.3 617.3 1808.0 596.7 1810.0 589.5C1812.0 582.3 1814.4 583.2 1817.0 581.5C1819.6 579.8 1822.1 579.5 1825.6 579.5C1829.1 582.7 1833.6 594.7 1838.0 600.5C1842.4 606.3 1843.9 609.7 1852.0 614.5C1860.1 619.3 1878.7 626.3 1886.7 629.5C1894.7 632.7 1893.6 631.7 1900.0 633.5C1906.4 635.3 1913.9 638.3 1925.0 640.5C1936.1 642.7 1951.4 644.8 1966.7 646.5C1982.0 648.2 1998.7 649.3 2016.7 650.5C2034.8 651.7 2063.9 650.8 2075.0 653.5C2083.3 656.2 2081.6 663.5 2083.3 666.5C2085.0 669.5 2083.3 670.8 2085.0 671.5C2086.7 671.5 2089.8 670.5 2093.3 670.5C2096.8 673.2 2102.1 683.0 2105.8 687.5C2109.5 692.0 2111.1 693.5 2115.5 697.5C2119.9 701.5 2127.6 708.2 2132.2 711.5C2136.8 714.8 2139.1 716.3 2143.3 717.5C2147.5 718.5 2147.9 718.3 2157.2 718.5C2166.5 718.5 2191.9 718.5 2198.9 718.5" stroke="#ff0000" stroke-width="1.1" fill="none" stroke-linejoin="round"/>
<path d="M997.0 267.6 L997.5 263.6 L998.0 268.8 L998.5 264.0 L999.0 267.1 L999.5 263.0 L1000.0 268.6 L1000.5 263.5 L1001.0 270.5 L1001.5 262.6 L1002.0 267.7 L1002.5 263.2 L1003.0 267.7 L1003.5 263.2 L1004.0 267.7 L1004.5 263.2 L1005.0 268.1 L1005.5 262.3 L1006.0 268.4 L1006.5 263.2 L1007.0 268.0 L1007.5 262.7 L1008.0 267.1 L1008.5 261.6 L1009.0 268.3 L1009.5 264.3 L1010.0 268.2 L1010.5 264.2 L1011.0 267.2 L1011.5 263.3 L1012.0 267.5 L1012.5 262.2 L1013.0 267.5 L1013.5 264.4 L1014.0 267.0 L1014.5 263.8 L1015.0 268.7 L1015.5 264.5 L1016.0 269.5 L1016.5 264.7 L1017.0 268.0 L1017.5 264.8 L1018.0 268.6 L1018.5 263.2 L1019.0 267.3 L1019.5 263.8 L1020.0 268.4 L1020.5 264.6 L1021.0 268.7 L1021.5 264.1 L1022.0 268.3 L1022.5 262.9 L1023.0 267.1 L1023.5 264.5 L1024.0 269.1 L1024.5 263.9 L1025.0 269.8 L1025.5 263.8 L1026.0 267.6 L1026.5 263.9 L1027.0 269.8 L1027.5 264.3 L1028.0 268.3 L1028.5 265.7 L1029.0 268.0 L1029.5 264.8 L1030.0 268.1 L1030.5 264.5 L1031.0 268.9 L1031.5 264.7 L1032.0 271.0 L1032.5 265.1 L1033.0 270.1 L1033.5 265.1 L1034.0 269.0 L1034.5 265.2 L1035.0 269.9 L1035.5 265.5 L1036.0 269.0 L1036.5 262.0 L1037.0 269.4 L1037.5 265.2 L1038.0 268.5 L1038.5 264.7 L1039.0 268.3 L1039.5 264.5 L1040.0 268.8 L1040.5 265.3 L1041.0 268.9 L1041.5 264.1 L1042.0 268.4 L1042.5 264.4 L1043.0 269.1 L1043.5 262.0 L1044.0 270.2 L1044.5 265.0 L1045.0 268.6 L1045.5 263.0 L1046.0 269.8 L1046.5 265.2 L1047.0 269.4 L1047.5 265.0 L1048.0 271.2 L1048.5 265.3 L1049.0 269.3 L1049.5 264.0 L1050.0 268.7 L1050.5 265.2 L1051.0 269.2 L1051.5 265.7 L1052.0 270.3 L1052.5 265.7 L1053.0 271.8 L1053.5 264.3 L1054.0 270.3 L1054.5 265.9 L1055.0 270.1 L1055.5 266.6 L1056.0 271.0 L1056.5 266.4 L1057.0 271.1 L1057.5 264.8 L1058.0 270.2 L1058.5 266.7 L1059.0 270.5 L1059.5 267.3 L1060.0 272.1 L1060.5 266.9 L1061.0 270.0 L1061.5 266.3 L1062.0 271.6 L1062.5 266.1 L1063.0 269.9 L1063.5 266.5 L1064.0 269.8 L1064.5 266.9 L1065.0 270.5 L1065.5 265.9 L1066.0 269.8 L1066.5 265.3 L1067.0 269.5 L1067.5 265.1 L1068.0 270.5 L1068.5 263.2 L1069.0 270.6 L1069.5 264.9 L1070.0 269.7 L1070.5 265.3 L1071.0 272.3 L1071.5 266.6 L1072.0 269.2 L1072.5 266.0 L1073.0 272.4 L1073.5 265.6 L1074.0 270.0 L1074.5 265.3 L1075.0 268.8 L1075.5 264.7 L1076.0 268.7 L1076.5 264.9 L1077.0 270.9 L1077.5 265.4 L1078.0 269.2 L1078.5 264.5 L1079.0 268.8 L1079.5 265.3 L1080.0 268.7 L1080.5 264.5 L1081.0 268.2 L1081.5 264.3 L1082.0 271.0 L1082.5 262.4 L1083.0 269.5 L1083.5 264.5 L1084.0 272.3 L1084.5 264.9 L1085.0 269.5 L1085.5 263.9 L1086.0 269.2 L1086.5 264.8 L1087.0 269.7 L1087.5 265.7 L1088.0 269.8 L1088.5 265.4 L1089.0 270.6 L1089.5 266.1 L1090.0 269.8 L1090.5 264.5 L1091.0 270.2 L1091.5 265.7 L1092.0 271.8 L1092.5 265.4 L1093.0 270.1 L1093.5 264.9 L1094.0 269.0 L1094.5 265.6 L1095.0 268.7 L1095.5 265.9 L1096.0 269.3 L1096.5 265.4 L1097.0 269.7 L1097.5 263.6 L1098.0 269.4 L1098.5 265.6 L1099.0 269.2 L1099.5 266.2 L1100.0 270.2 L1100.5 265.5 L1101.0 270.3 L1101.5 264.9 L1102.0 271.9 L1102.5 265.4 L1103.0 270.4 L1103.5 266.7 L1104.0 270.4 L1104.5 266.5 L1105.0 271.3 L1105.5 267.6 L1106.0 270.6 L1106.5 266.9 L1107.0 273.5 L1107.5 267.7 L1108.0 272.7 L1108.5 268.0 L1109.0 273.7 L1109.5 268.5 L1110.0 273.0 L1110.5 267.8 L1111.0 272.0 L1111.5 268.9 L1112.0 271.8 L1112.5 268.1 L1113.0 271.3 L1113.5 268.1 L1114.0 271.6 L1114.5 267.6 L1115.0 271.7 L1115.5 267.5 L1116.0 271.5 L1116.5 267.3 L1117.0 271.0 L1117.5 266.5 L1118.0 272.7 L1118.5 266.7 L1119.0 272.6 L1119.5 266.4 L1120.0 271.7 L1120.5 267.4 L1121.0 271.5 L1121.5 265.2 L1122.0 271.3 L1122.5 267.0 L1123.0 270.3 L1123.5 266.0 L1124.0 270.9 L1124.5 267.8 L1125.0 272.6 L1125.5 267.1 L1126.0 272.6 L1126.5 267.0 L1127.0 272.3 L1127.5 268.2 L1128.0 273.3 L1128.5 268.0 L1129.0 273.2 L1129.5 268.6 L1130.0 272.2 L1130.5 268.7 L1131.0 271.6 L1131.5 268.5 L1132.0 271.4 L1132.5 268.6 L1133.0 272.9 L1133.5 267.8 L1134.0 272.5 L1134.5 267.6 L1135.0 271.3 L1135.5 266.9 L1136.0 271.9 L1136.5 266.1 L1137.0 271.5 L1137.5 268.8 L1138.0 272.6 L1138.5 266.3 L1139.0 273.2 L1139.5 265.9 L1140.0 271.2 L1140.5 267.7 L1141.0 270.8 L1141.5 267.7 L1142.0 272.2 L1142.5 267.2 L1143.0 271.5 L1143.5 268.3 L1144.0 272.3 L1144.5 268.2 L1145.0 270.9 L1145.5 267.3 L1146.0 271.0 L1146.5 268.0 L1147.0 271.5 L1147.5 267.2 L1148.0 272.7 L1148.5 266.0 L1149.0 272.3 L1149.5 267.8 L1150.0 273.0 L1150.5 267.8 L1151.0 271.3 L1151.5 267.6 L1152.0 271.1 L1152.5 267.9 L1153.0 270.6 L1153.5 266.7 L1154.0 271.3 L1154.5 267.8 L1155.0 271.1 L1155.5 267.1 L1156.0 273.2 L1156.5 267.3 L1157.0 271.5 L1157.5 265.8 L1158.0 272.6 L1158.5 266.2 L1159.0 270.3 L1159.5 264.1 L1160.0 272.1 L1160.5 266.6 L1161.0 270.7 L1161.5 267.5 L1162.0 273.2 L1162.5 265.7 L1163.0 271.3 L1163.5 266.9 L1164.0 271.7 L1164.5 268.2 L1165.0 271.6 L1165.5 267.7 L1166.0 271.1 L1166.5 267.8 L1167.0 272.3 L1167.5 267.5 L1168.0 271.3 L1168.5 267.1 L1169.0 271.4 L1169.5 268.5 L1170.0 272.0 L1170.5 267.4 L1171.0 272.4 L1171.5 266.4 L1172.0 271.9 L1172.5 267.9 L1173.0 272.4 L1173.5 267.8 L1174.0 271.6 L1174.5 267.4 L1175.0 272.1 L1175.5 268.4 L1176.0 273.5 L1176.5 267.1 L1177.0 272.6 L1177.5 267.2 L1178.0 272.6 L1178.5 269.3 L1179.0 273.6 L1179.5 270.3 L1180.0 274.6 L1180.5 270.3 L1181.0 273.8 L1181.5 270.4 L1182.0 276.1 L1182.5 270.4 L1183.0 274.2 L1183.5 270.7 L1184.0 274.3 L1184.5 268.7 L1185.0 274.1 L1185.5 271.3 L1186.0 274.5 L1186.5 268.8 L1187.0 274.4 L1187.5 269.4 L1188.0 275.4 L1188.5 269.4 L1189.0 273.7 L1189.5 268.5 L1190.0 273.4 L1190.5 270.8 L1191.0 273.9 L1191.5 269.9 L1192.0 273.3 L1192.5 269.3 L1193.0 272.9 L1193.5 269.3 L1194.0 275.4 L1194.5 270.1 L1195.0 273.7 L1195.5 269.6 L1196.0 272.2 L1196.5 268.1 L1197.0 272.8 L1197.5 268.7 L1198.0 272.5 L1198.5 269.5 L1199.0 272.3 L1199.5 267.9 L1200.0 272.1 L1200.5 266.7 L1201.0 272.9 L1201.5 266.8 L1202.0 272.7 L1202.5 268.1 L1203.0 274.0 L1203.5 268.4 L1204.0 271.8 L1204.5 265.9 L1205.0 271.9 L1205.5 268.7 L1206.0 273.7 L1206.5 268.4 L1207.0 272.3 L1207.5 267.8 L1208.0 271.1 L1208.5 267.0 L1209.0 271.1 L1209.5 266.8 L1210.0 270.6 L1210.5 265.8 L1211.0 269.9 L1211.5 267.2 L1212.0 270.5 L1212.5 267.2 L1213.0 271.4 L1213.5 266.5 L1214.0 271.6 L1214.5 267.5 L1215.0 271.4 L1215.5 267.1 L1216.0 270.7 L1216.5 266.8 L1217.0 273.1 L1217.5 266.3 L1218.0 270.9 L1218.5 266.9 L1219.0 271.1 L1219.5 266.1 L1220.0 270.9 L1220.5 265.7 L1221.0 269.1 L1221.5 266.1 L1222.0 271.2 L1222.5 266.6 L1223.0 270.8 L1223.5 267.0 L1224.0 271.3 L1224.5 267.0 L1225.0 271.3 L1225.5 268.4 L1226.0 272.4 L1226.5 268.7 L1227.0 273.6 L1227.5 267.3 L1228.0 272.1 L1228.5 268.4 L1229.0 272.2 L1229.5 266.9 L1230.0 272.5 L1230.5 266.6 L1231.0 272.8 L1231.5 268.6 L1232.0 272.2 L1232.5 268.1 L1233.0 273.2 L1233.5 268.3 L1234.0 272.7 L1234.5 268.2 L1235.0 271.9 L1235.5 267.6 L1236.0 271.2 L1236.5 267.7 L1237.0 271.5 L1237.5 267.1 L1238.0 271.8 L1238.5 267.4 L1239.0 270.8 L1239.5 267.9 L1240.0 272.8 L1240.5 267.8 L1241.0 271.5 L1241.5 267.4 L1242.0 270.7 L1242.5 266.9 L1243.0 271.0 L1243.5 267.4 L1244.0 270.1 L1244.5 266.9 L1245.0 269.9 L1245.5 266.6 L1246.0 270.2 L1246.5 265.6 L1247.0 271.9 L1247.5 264.4 L1248.0 269.8 L1248.5 263.7 L1249.0 270.4 L1249.5 265.8 L1250.0 271.0 L1250.5 265.9 L1251.0 269.8 L1251.5 266.6 L1252.0 271.0 L1252.5 264.4 L1253.0 271.4 L1253.5 266.4 L1254.0 269.8 L1254.5 264.7 L1255.0 269.0 L1255.5 265.0 L1256.0 270.3 L1256.5 264.2 L1257.0 269.4 L1257.5 263.3 L1258.0 269.1 L1258.5 264.8 L1259.0 269.9 L1259.5 264.5 L1260.0 270.6 L1260.5 264.1 L1261.0 268.0 L1261.5 263.1 L1262.0 270.3 L1262.5 264.0 L1263.0 269.0 L1263.5 266.2 L1264.0 269.1 L1264.5 265.1 L1265.0 269.9 L1265.5 265.6 L1266.0 270.1 L1266.5 264.8 L1267.0 269.1 L1267.5 263.8 L1268.0 268.9 L1268.5 265.7 L1269.0 269.6 L1269.5 266.2 L1270.0 269.0 L1270.5 264.6 L1271.0 270.8 L1271.5 265.8 L1272.0 268.7 L1272.5 264.7 L1273.0 269.4 L1273.5 264.5 L1274.0 268.8 L1274.5 264.9 L1275.0 270.7 L1275.5 264.3 L1276.0 269.1 L1276.5 264.2 L1277.0 269.7 L1277.5 265.1 L1278.0 268.1 L1278.5 262.3 L1279.0 269.9 L1279.5 263.0 L1280.0 270.0 L1280.5 262.5 L1281.0 267.6 L1281.5 264.1 L1282.0 268.7 L1282.5 265.7 L1283.0 268.3 L1283.5 264.3 L1284.0 269.0 L1284.5 265.1 L1285.0 269.9 L1285.5 264.0 L1286.0 268.8 L1286.5 265.5 L1287.0 268.6 L1287.5 265.3 L1288.0 271.4 L1288.5 262.6 L1289.0 269.3 L1289.5 265.1 L1290.0 270.6 L1290.5 265.5 L1291.0 268.8 L1291.5 263.1 L1292.0 267.5 L1292.5 262.9 L1293.0 268.2 L1293.5 263.4 L1294.0 267.2 L1294.5 263.5 L1295.0 267.8 L1295.5 263.4 L1296.0 268.2 L1296.5 264.3 L1297.0 269.3 L1297.5 264.4 L1298.0 268.4 L1298.5 263.9 L1299.0 269.0 L1299.5 264.5 L1300.0 268.7 L1300.5 262.0 L1301.0 269.7 L1301.5 263.9 L1302.0 267.8 L1302.5 263.1 L1303.0 266.5 L1303.5 263.3 L1304.0 266.9 L1304.5 263.7 L1305.0 269.6 L1305.5 264.6 L1306.0 267.8 L1306.5 264.3 L1307.0 267.7 L1307.5 263.4 L1308.0 268.2 L1308.5 263.6 L1309.0 270.5 L1309.5 263.6 L1310.0 269.6 L1310.5 261.6 L1311.0 267.8 L1311.5 264.6 L1312.0 268.0 L1312.5 264.3 L1313.0 268.7 L1313.5 265.1 L1314.0 269.8 L1314.5 264.9 L1315.0 269.7 L1315.5 263.6 L1316.0 269.0 L1316.5 264.9 L1317.0 271.5 L1317.5 265.6 L1318.0 269.6 L1318.5 265.5 L1319.0 269.2 L1319.5 265.4 L1320.0 269.4 L1320.5 265.3 L1321.0 269.3 L1321.5 265.8 L1322.0 268.5 L1322.5 264.1 L1323.0 268.9 L1323.5 265.9 L1324.0 269.8 L1324.5 266.0 L1325.0 269.5 L1325.5 265.5 L1326.0 269.8 L1326.5 265.4 L1327.0 269.5 L1327.5 265.8 L1328.0 269.6 L1328.5 265.9 L1329.0 270.2 L1329.5 266.4 L1330.0 270.7 L1330.5 264.1 L1331.0 270.9 L1331.5 265.9 L1332.0 269.9 L1332.5 265.2 L1333.0 270.1 L1333.5 266.7 L1334.0 269.5 L1334.5 265.7 L1335.0 269.1 L1335.5 265.7 L1336.0 270.6 L1336.5 266.2 L1337.0 269.5 L1337.5 265.2 L1338.0 269.0 L1338.5 263.7 L1339.0 268.7 L1339.5 264.6 L1340.0 268.9 L1340.5 265.4 L1341.0 269.0 L1341.5 265.4 L1342.0 268.8 L1342.5 263.8 L1343.0 270.6 L1343.5 265.2 L1344.0 269.1 L1344.5 266.1 L1345.0 271.0 L1345.5 265.1 L1346.0 269.0 L1346.5 264.8 L1347.0 269.0 L1347.5 264.8 L1348.0 268.2 L1348.5 262.3 L1349.0 267.9 L1349.5 262.8 L1350.0 267.3 L1350.5 264.0 L1351.0 268.1 L1351.5 263.1 L1352.0 267.0 L1352.5 263.3 L1353.0 268.0 L1353.5 261.7 L1354.0 266.6 L1354.5 263.6 L1355.0 267.5 L1355.5 264.3 L1356.0 267.1 L1356.5 264.4 L1357.0 268.5 L1357.5 264.0 L1358.0 267.6 L1358.5 264.5 L1359.0 268.9 L1359.5 264.0 L1360.0 269.4 L1360.5 263.2 L1361.0 267.0 L1361.5 261.5 L1362.0 269.1 L1362.5 264.7 L1363.0 268.3 L1363.5 263.3 L1364.0 266.9 L1364.5 264.0 L1365.0 267.5 L1365.5 262.7 L1366.0 266.8 L1366.5 261.2 L1367.0 267.6 L1367.5 263.1 L1368.0 266.0" stroke="#ff0000" stroke-width="1.0" fill="none"/>
<path d="M1368.3 268.6 L1368.3 269.4 L1368.4 272.5 L1368.4 273.5 L1368.5 276.5 L1368.5 277.5 L1368.6 280.4 L1368.6 280.7 L1368.9 284.4 L1369.2 285.5 L1369.5 288.3 L1369.8 289.1 L1370.1 292.2 L1370.4 293.4 L1370.7 296.2 L1371.0 297.4 L1371.3 300.5 L1371.6 301.4 L1371.9 304.6 L1372.2 305.2 L1372.5 308.1 L1372.7 309.1 L1373.0 312.5 L1373.2 313.2 L1373.4 316.5 L1373.7 317.3 L1373.9 320.7 L1374.1 321.4 L1374.4 324.8 L1374.6 325.4 L1374.8 328.5 L1375.1 329.6 L1375.3 332.9 L1375.6 333.8 L1376.0 337.1 L1376.3 338.1 L1376.7 341.2 L1377.0 342.3 L1377.4 345.6 L1377.8 346.4 L1378.1 349.5 L1378.5 350.7 L1378.8 354.2 L1379.1 354.9 L1379.5 358.2 L1379.8 359.2 L1380.2 362.2 L1380.5 363.3 L1380.8 366.5 L1381.2 367.7 L1381.5 370.8 L1381.9 371.9 L1382.2 375.2 L1382.7 376.0 L1383.2 379.3 L1383.7 379.8 L1384.2 383.2 L1384.7 383.7 L1385.2 387.0 L1385.7 388.2 L1386.2 391.3 L1386.6 392.1 L1387.1 395.4 L1387.6 395.9 L1388.0 399.6 L1388.5 399.7 L1389.0 403.8 L1389.4 404.2 L1389.9 407.9 L1390.6 407.0 L1391.3 410.9 L1392.0 409.6 L1392.7 413.0 L1393.3 412.8 L1394.0 415.8 L1394.7 415.5 L1395.4 418.5 L1396.1 417.3 L1396.8 422.2 L1397.5 420.9 L1398.2 424.8 L1398.9 423.5 L1399.5 426.8 L1400.2 426.1 L1400.9 430.0 L1401.6 429.3 L1402.3 432.4 L1403.0 431.7 L1403.7 434.3 L1404.4 433.2 L1405.1 435.8 L1405.8 434.7 L1406.5 436.8 L1407.2 435.4 L1407.9 438.3 L1408.6 437.3 L1409.3 440.3 L1410.0 438.5 L1410.7 441.5 L1411.4 438.5 L1412.1 442.1 L1412.8 439.7 L1413.4 443.1 L1414.1 440.1 L1414.8 443.3 L1415.5 441.5 L1416.2 444.5 L1416.9 441.4 L1417.6 445.5 L1418.3 443.0 L1419.0 445.3 L1419.7 443.3 L1420.4 445.7 L1421.1 443.9 L1421.8 446.3 L1422.5 444.8 L1423.2 446.6 L1423.9 444.9 L1424.6 447.4 L1425.3 444.8 L1426.0 447.6 L1426.7 445.3 L1427.4 447.4 L1428.2 444.3 L1428.9 447.6 L1429.6 445.2 L1430.3 448.0 L1431.0 445.2 L1431.7 447.5 L1432.4 444.9 L1433.1 447.7 L1433.8 445.7 L1434.5 448.0 L1435.2 445.5 L1435.9 447.9 L1436.6 446.2 L1437.3 448.2 L1438.1 445.5 L1438.8 448.8 L1439.5 445.7 L1440.2 448.5 L1440.9 446.4 L1441.6 448.6 L1442.3 445.9 L1443.0 447.6" stroke="#ff0000" stroke-width="1.0" fill="none"/>
<path d="M1443.0 449.2 L1443.2 448.2 L1443.4 452.0 L1443.6 450.2 L1443.8 454.5 L1443.9 453.8 L1444.1 457.5 L1444.3 456.8 L1444.5 460.1 L1444.7 458.3 L1445.0 463.9 L1445.3 461.4 L1445.6 467.5 L1445.9 464.9 L1446.2 468.6 L1446.5 467.5 L1446.8 472.4 L1447.1 469.7 L1447.3 475.0 L1447.6 473.2 L1447.9 477.3 L1448.2 475.8 L1448.5 480.0 L1448.8 479.4 L1449.1 482.5 L1449.4 481.4 L1449.7 485.7 L1450.0 484.6 L1450.3 488.7 L1450.6 487.7 L1450.9 491.4 L1451.3 490.2 L1451.6 495.4 L1451.9 493.9 L1452.2 498.0 L1452.5 496.8 L1452.8 500.2 L1453.1 498.7 L1453.5 504.0 L1453.8 502.5 L1454.1 506.8 L1454.4 504.8 L1454.8 509.1 L1455.1 508.3 L1455.5 511.6 L1455.8 510.5 L1456.2 515.0 L1456.5 513.3 L1456.9 518.2 L1457.2 516.1 L1457.5 520.4 L1457.9 518.9 L1458.2 523.3 L1458.6 522.9 L1459.0 526.1 L1459.3 525.7 L1459.7 529.1 L1460.0 528.1 L1460.4 532.1 L1460.8 530.9 L1461.3 535.3 L1461.7 534.2 L1462.1 538.2 L1462.5 537.1 L1463.0 540.9 L1463.4 539.9 L1463.8 544.1 L1464.2 542.5 L1464.7 546.5 L1465.1 545.1 L1465.5 549.4 L1466.0 547.9 L1466.5 552.0 L1466.9 550.2 L1467.4 553.2 L1467.9 552.1 L1468.4 556.1 L1468.9 554.1 L1469.4 557.6 L1469.8 556.2 L1470.3 559.9 L1470.8 558.9 L1471.3 562.0 L1471.8 560.2 L1472.3 563.9 L1472.9 561.1 L1473.4 564.7 L1473.9 562.8 L1474.4 566.4 L1474.9 564.3 L1475.4 567.0 L1476.0 565.2 L1476.5 568.0 L1477.0 566.4 L1477.5 569.9 L1478.0 567.8 L1478.5 570.5 L1479.0 568.6 L1479.5 572.0 L1480.0 569.7 L1480.5 572.6 L1481.0 570.9 L1481.5 573.6 L1482.0 571.2 L1482.5 574.9 L1483.0 572.8 L1483.5 576.1 L1484.0 573.0 L1484.5 576.6 L1485.0 574.4 L1485.5 577.0 L1486.0 575.1 L1486.5 577.9 L1487.0 576.7 L1487.5 579.7 L1488.0 577.3 L1488.5 580.7 L1489.0 577.9 L1489.5 581.4 L1490.0 579.5 L1490.5 582.3 L1491.0 580.4 L1491.5 582.8 L1492.0 579.0 L1492.5 583.2 L1493.0 580.6 L1493.5 583.1 L1494.0 581.2 L1494.6 584.3 L1495.1 581.5 L1495.6 584.5 L1496.1 582.3 L1496.6 586.2 L1497.1 582.3 L1497.6 585.5 L1498.1 582.5 L1498.6 585.6 L1499.1 583.6 L1499.6 586.3 L1500.1 583.8 L1500.6 586.7 L1501.1 584.5 L1501.6 587.8 L1502.1 584.8 L1502.7 587.6 L1503.2 584.2 L1503.7 587.9 L1504.2 584.7 L1504.7 589.7 L1505.2 586.1 L1505.7 588.6 L1506.2 586.3 L1506.7 590.4 L1507.2 586.8 L1507.7 588.8 L1508.2 586.7 L1508.7 589.0 L1509.2 587.2 L1509.7 589.3 L1510.2 586.2 L1510.7 589.1 L1511.2 587.4 L1511.7 589.9 L1512.2 587.6 L1512.7 589.6 L1513.2 587.5 L1513.7 590.8 L1514.2 587.5 L1514.7 590.3 L1515.3 588.4 L1515.8 590.9 L1516.3 587.6 L1516.8 590.8 L1517.3 588.4 L1517.8 591.1 L1518.3 588.9 L1518.8 591.3 L1519.3 588.4 L1519.8 591.5 L1520.3 589.1 L1520.8 591.4 L1521.3 589.3 L1521.8 591.5 L1522.3 589.4 L1522.8 591.4 L1523.3 588.2 L1523.8 592.1 L1524.3 589.9 L1524.8 591.8 L1525.3 590.1 L1525.8 592.2 L1526.3 589.9 L1526.8 592.6 L1527.3 589.5 L1527.8 592.7 L1528.3 589.4 L1528.8 592.2 L1529.3 589.9 L1529.8 592.5 L1530.3 590.2 L1530.8 593.4 L1531.3 590.4 L1531.8 593.8 L1532.3 590.3 L1532.9 593.3 L1533.4 590.6 L1533.9 594.3 L1534.4 590.8 L1534.9 593.9 L1535.4 590.9 L1535.9 593.7 L1536.4 590.7 L1536.9 593.1 L1537.4 589.5 L1537.9 593.3 L1538.4 590.1 L1538.9 593.2 L1539.4 591.2 L1539.9 594.1 L1540.4 591.6 L1540.9 593.6 L1541.4 590.7 L1541.9 594.8 L1542.4 591.5 L1542.9 594.2 L1543.4 591.1 L1543.9 594.5 L1544.4 592.0 L1544.9 594.6 L1545.4 591.6 L1545.9 595.8 L1546.4 592.1 L1546.9 594.8 L1547.4 592.2 L1547.9 594.9 L1548.4 591.7 L1548.9 594.7 L1549.4 592.2 L1549.9 594.8 L1550.4 592.1 L1551.0 595.1 L1551.5 592.4 L1552.0 594.6 L1552.5 592.4 L1553.0 594.5 L1553.5 592.8 L1554.0 595.2 L1554.5 591.9 L1555.0 596.4 L1555.5 592.8 L1556.0 594.9 L1556.5 592.8 L1557.0 595.2 L1557.5 592.0 L1558.0 594.9 L1558.5 593.3 L1559.0 595.1 L1559.5 592.7 L1560.0 595.8 L1560.5 592.6 L1561.0 595.3 L1561.5 593.0 L1562.0 595.6 L1562.5 593.2 L1563.0 595.2 L1563.5 593.2 L1564.0 596.6 L1564.5 593.5 L1565.0 596.5 L1565.5 592.9 L1566.0 596.2 L1566.5 593.7 L1567.0 596.1 L1567.5 593.3 L1568.0 596.7 L1568.5 593.9 L1569.0 596.4 L1569.5 593.9 L1570.0 596.2 L1570.5 592.5 L1571.0 596.9 L1571.5 594.1 L1572.0 596.9 L1572.5 593.2 L1573.0 596.8 L1573.5 593.9 L1574.0 596.3 L1574.5 594.1 L1575.0 596.0 L1575.5 593.6 L1576.0 596.8 L1576.5 593.6 L1577.0 596.8 L1577.5 592.9 L1578.0 596.1 L1578.5 593.2 L1579.0 596.4 L1579.5 593.8 L1580.0 597.3 L1580.5 594.1 L1581.0 596.1 L1581.5 594.1 L1582.0 596.9 L1582.5 592.8 L1583.0 597.4 L1583.5 593.8 L1584.0 596.3 L1584.5 593.1 L1585.0 596.1 L1585.5 593.3 L1586.0 596.0 L1586.5 593.8 L1587.0 596.7 L1587.5 593.3 L1588.0 595.3 L1588.5 593.6 L1589.0 595.7 L1589.5 593.5 L1590.0 595.6 L1590.5 593.3 L1591.0 596.0 L1591.5 593.3 L1592.0 595.4 L1592.5 593.3 L1593.0 595.6 L1593.5 593.0 L1594.0 595.5 L1594.5 592.1 L1595.0 596.1 L1595.5 593.3 L1596.0 595.3 L1596.5 593.4 L1597.0 597.0 L1597.5 591.7 L1598.0 597.0 L1598.5 592.9 L1599.0 595.3 L1599.5 591.6 L1600.0 595.9 L1600.5 593.4 L1601.0 595.6 L1601.5 593.4 L1602.0 596.6 L1602.5 593.5 L1603.0 595.5 L1603.5 593.9 L1604.0 595.7 L1604.5 593.0 L1605.0 595.7 L1605.5 592.5 L1606.0 596.8 L1606.5 592.4 L1607.0 595.7 L1607.5 592.8 L1608.0 594.9 L1608.5 592.8 L1609.0 595.3 L1609.5 592.7 L1610.0 595.3 L1610.5 592.8 L1611.0 595.5 L1611.5 593.0 L1612.0 595.3 L1612.5 592.9 L1613.0 595.3 L1613.5 591.9 L1614.0 595.6 L1614.5 593.2 L1615.0 595.9 L1615.5 592.9 L1616.0 594.8 L1616.5 592.8 L1617.0 595.4 L1617.5 591.9 L1618.0 594.9 L1618.5 592.9 L1619.0 594.9 L1619.5 592.5 L1620.0 595.5 L1620.5 592.3 L1621.0 596.5 L1621.5 592.5 L1622.0 595.5 L1622.5 592.8 L1623.0 595.1 L1623.5 591.6 L1624.0 595.2 L1624.5 592.0 L1625.0 595.0 L1625.5 592.5 L1626.0 594.8 L1626.5 592.2 L1627.0 595.3 L1627.5 592.3 L1628.0 594.3 L1628.5 591.0 L1629.0 594.3 L1629.5 591.2 L1630.0 594.7 L1630.5 591.9 L1631.0 595.3 L1631.5 592.0 L1632.0 594.1 L1632.5 592.0 L1633.0 594.1 L1633.5 591.8 L1634.0 595.3 L1634.5 591.5 L1635.0 594.2 L1635.5 591.2 L1636.0 595.7 L1636.5 591.0 L1637.0 595.6 L1637.5 592.1 L1638.0 594.2 L1638.5 592.3 L1639.0 594.6 L1639.5 591.6 L1640.0 595.5 L1640.5 591.8 L1641.0 594.7 L1641.5 592.3 L1642.0 594.5 L1642.5 592.1 L1643.0 594.2 L1643.5 591.6 L1644.0 594.3 L1644.5 591.2 L1645.0 594.8 L1645.5 591.6 L1646.0 594.1 L1646.5 592.1 L1647.0 594.1 L1647.5 591.6 L1648.0 595.9 L1648.5 592.3 L1649.0 594.9 L1649.5 591.8 L1650.0 594.2 L1650.5 591.5 L1651.0 593.6 L1651.5 591.6 L1652.0 594.2 L1652.5 591.6 L1653.0 594.3 L1653.5 591.7 L1654.0 593.6 L1654.5 590.3 L1655.0 593.6 L1655.5 590.9 L1656.0 593.8 L1656.5 591.8 L1657.0 594.3 L1657.5 591.5 L1658.0 594.1 L1658.5 591.5 L1659.0 594.4 L1659.5 591.7 L1660.0 594.2 L1660.5 591.3 L1661.0 594.4 L1661.5 591.8 L1662.0 594.2 L1662.5 591.7 L1663.0 594.0 L1663.5 590.7 L1664.0 594.3 L1664.5 592.0 L1665.0 594.1 L1665.5 591.8 L1666.0 593.5 L1666.5 591.1 L1667.0 593.7 L1667.5 591.7 L1668.0 593.8 L1668.5 591.6 L1669.0 594.9 L1669.5 590.8 L1670.0 594.9 L1670.5 591.2 L1671.0 593.5 L1671.5 591.3 L1672.0 593.2 L1672.5 591.2 L1673.0 593.1 L1673.5 590.4 L1674.0 593.7 L1674.5 590.9 L1675.0 592.8 L1675.5 590.4 L1676.0 593.6 L1676.5 589.0 L1677.0 593.2 L1677.5 590.7 L1678.0 593.3 L1678.5 591.0 L1679.0 592.6 L1679.5 590.2 L1680.0 592.8 L1680.5 589.8 L1681.0 592.0 L1681.5 589.5 L1682.0 591.7 L1682.5 589.0 L1683.0 592.0 L1683.5 588.8 L1684.0 591.3 L1684.5 588.4 L1685.0 592.3 L1685.5 587.6 L1686.0 592.1 L1686.5 588.3 L1687.0 590.9 L1687.5 587.8 L1688.0 591.3 L1688.5 587.3 L1689.0 590.2 L1689.5 587.4 L1690.0 590.3 L1690.5 587.1 L1691.0 590.5 L1691.5 587.8 L1692.0 591.4 L1692.5 587.7 L1693.0 590.6 L1693.5 588.6 L1694.0 591.9 L1694.5 588.8 L1695.0 590.7 L1695.5 588.5 L1696.0 591.8 L1696.5 588.4 L1697.0 591.7 L1697.5 588.6 L1698.0 591.2 L1698.5 588.4 L1699.0 591.8 L1699.5 588.7 L1700.0 591.4 L1700.5 588.7 L1701.0 591.7 L1701.5 587.9 L1702.0 591.2 L1702.5 587.7 L1703.0 591.5 L1703.5 589.0 L1704.0 591.3 L1704.5 589.2 L1705.0 591.5 L1705.5 588.8 L1706.0 591.2 L1706.5 589.7 L1707.0 591.5 L1707.5 589.4 L1708.0 591.2 L1708.3 591.1 L1708.6 594.4 L1708.9 594.0 L1709.2 596.9 L1709.5 596.8 L1709.8 599.8 L1710.2 599.6 L1710.5 603.2 L1710.8 602.9 L1711.1 605.6 L1711.4 606.0 L1711.7 608.6 L1712.0 608.5 L1712.5 610.9 L1713.0 610.4 L1713.5 612.8 L1714.0 612.7 L1714.5 614.8 L1715.0 614.0 L1715.5 616.7 L1716.0 616.4 L1716.5 618.9 L1717.0 618.4 L1717.5 621.2 L1718.0 620.6 L1718.5 622.8 L1719.0 622.2 L1719.5 624.2 L1720.0 623.7 L1720.5 626.3 L1721.0 625.7 L1721.5 627.6 L1722.0 627.5 L1722.5 629.1 L1723.0 628.3 L1723.5 630.3 L1724.0 629.2 L1724.5 631.5 L1725.0 630.8 L1725.5 632.5 L1726.0 631.9 L1726.5 633.6 L1727.0 632.5 L1727.4 634.6 L1727.9 634.3 L1728.4 635.8 L1728.9 635.1 L1729.4 637.0 L1729.9 636.6 L1730.4 638.8 L1730.9 637.5 L1731.4 639.6 L1731.9 638.8 L1732.4 640.6 L1732.9 639.9 L1733.4 641.5 L1733.9 640.8 L1734.4 642.4 L1734.9 641.3 L1735.4 642.9 L1735.9 642.0 L1736.4 643.1 L1736.9 642.2 L1737.3 643.2 L1737.8 642.4 L1738.3 643.6 L1738.8 642.4 L1739.3 643.5 L1739.8 642.4 L1740.3 643.9 L1740.8 642.7 L1741.3 644.2 L1741.8 643.1 L1742.3 644.6 L1742.8 643.4 L1743.2 645.0 L1743.7 643.9 L1744.2 645.0 L1744.7 643.7 L1745.2 646.0 L1745.7 644.1 L1746.2 646.1 L1746.7 644.2 L1747.2 646.4 L1747.7 644.6 L1748.2 646.4 L1748.7 645.1 L1749.2 646.6 L1749.7 645.5 L1750.2 647.7 L1750.7 646.0 L1751.2 647.4 L1751.7 646.2 L1752.2 648.0 L1752.7 646.5 L1753.2 648.4 L1753.7 646.6 L1754.2 648.4 L1754.7 647.7 L1755.2 649.3 L1755.7 647.9 L1756.2 649.8 L1756.7 648.3 L1757.2 649.7 L1757.7 648.8 L1758.2 650.3 L1758.7 649.1 L1759.2 650.3 L1759.7 649.2 L1760.2 650.5 L1760.7 649.6 L1761.2 651.1 L1761.7 649.2 L1762.2 651.4 L1762.7 649.9 L1763.2 651.4 L1763.7 650.3 L1764.2 651.7 L1764.7 650.4 L1765.2 652.2 L1765.7 650.9 L1766.2 652.3 L1766.7 651.6 L1767.2 652.9 L1767.7 651.6 L1768.2 653.0 L1768.7 652.2 L1769.2 654.0 L1769.7 652.6 L1770.2 654.4 L1770.7 653.0 L1771.2 654.2 L1771.7 652.5 L1772.1 653.4 L1772.6 652.2 L1773.1 653.3 L1773.6 651.5 L1774.1 652.6 L1774.5 651.2 L1775.0 652.0 L1775.5 650.1 L1776.0 650.7 L1776.5 648.3 L1777.0 650.1 L1777.5 647.1 L1778.0 648.1 L1778.5 645.7 L1779.0 646.6 L1779.5 644.8 L1780.0 645.0 L1780.5 642.9 L1781.0 643.6 L1781.5 641.6 L1782.0 642.3 L1782.5 640.4 L1782.9 641.1 L1783.4 638.9 L1783.9 639.8 L1784.4 637.8 L1784.9 638.8 L1785.4 636.1 L1785.9 636.9 L1786.4 634.8 L1786.9 635.2 L1787.4 632.9 L1787.9 633.7 L1788.4 631.6 L1788.9 632.2 L1789.4 630.2 L1789.9 631.2 L1790.4 630.0 L1790.9 631.4 L1791.4 629.5 L1791.9 630.7 L1792.4 629.0 L1792.9 630.9 L1793.4 628.8 L1793.9 630.2 L1794.4 628.4 L1794.9 629.7 L1795.4 627.7 L1795.9 629.3 L1796.3 627.1 L1796.8 628.5 L1797.3 627.1 L1797.8 627.8 L1798.3 626.5 L1798.8 627.8 L1799.3 626.0 L1799.8 627.0 L1800.3 625.6 L1800.8 627.2 L1801.3 625.5 L1801.8 626.4 L1802.3 624.8 L1802.8 626.2 L1803.3 624.6 L1803.8 625.4 L1804.3 623.1 L1804.8 624.2 L1805.4 622.3 L1805.9 622.7 L1806.4 620.4 L1806.9 621.5 L1807.4 619.8 L1807.9 621.1 L1808.5 618.3 L1809.0 619.0 L1809.5 616.7 L1810.0 618.6 L1810.4 618.2 L1810.8 620.9 L1811.2 620.7 L1811.6 623.4 L1812.1 623.6 L1812.5 626.4 L1812.9 626.4 L1813.3 629.1 L1813.7 629.0 L1814.1 631.7 L1814.5 631.8 L1814.9 634.8 L1815.4 634.7 L1815.8 637.4 L1816.2 637.6 L1816.6 640.2 L1817.0 640.5 L1817.4 643.2 L1817.8 643.3 L1818.2 646.0 L1818.6 646.2 L1819.1 648.8 L1819.5 648.8 L1819.9 652.3 L1820.3 651.7 L1820.7 654.8 L1821.1 654.7 L1821.5 657.9 L1821.9 657.5 L1822.4 660.0 L1822.8 660.7 L1823.2 663.1 L1823.6 663.6 L1824.0 666.7 L1824.5 666.0 L1825.0 668.2 L1825.5 668.1 L1826.0 670.1 L1826.5 670.2 L1827.0 672.0 L1827.5 671.2 L1828.0 674.7 L1828.5 674.0 L1829.0 676.2 L1829.5 676.1 L1830.0 678.3 L1830.5 677.8 L1831.0 680.2 L1831.5 679.8 L1832.0 681.5 L1832.5 681.2 L1833.0 683.5 L1833.5 682.5 L1834.0 684.7 L1834.5 684.5 L1835.0 686.1 L1835.5 686.1 L1836.0 687.8 L1836.5 686.8 L1837.0 690.0 L1837.5 688.5 L1838.0 690.7 L1838.5 690.6 L1839.0 692.6 L1839.5 691.8 L1840.0 694.0 L1840.5 692.7 L1841.0 695.7 L1841.5 694.9 L1842.0 697.0 L1842.5 696.1 L1843.0 698.6 L1843.5 697.2 L1844.0 700.1 L1844.5 699.5 L1845.0 701.5 L1845.5 700.1 L1846.0 702.0 L1846.5 701.4 L1847.0 703.0 L1847.5 702.1 L1848.0 704.0 L1848.5 702.6 L1849.0 704.1 L1849.5 703.5 L1850.0 705.2 L1850.5 703.4 L1851.0 706.0 L1851.5 705.1 L1852.0 706.6 L1852.4 705.9 L1852.9 707.5 L1853.4 706.4 L1853.9 708.8 L1854.4 707.3 L1854.9 709.3 L1855.4 708.6 L1855.9 709.9 L1856.4 709.5 L1856.9 711.1 L1857.4 709.9 L1857.9 711.9 L1858.4 711.1 L1858.9 712.4 L1859.4 711.0 L1859.9 712.8 L1860.4 711.9 L1860.9 713.1 L1861.4 711.6 L1861.9 713.4 L1862.4 712.4 L1862.9 713.9 L1863.4 713.2 L1863.9 714.6 L1864.4 713.7 L1864.9 714.8 L1865.4 713.6 L1865.8 715.4 L1866.3 714.3 L1866.8 715.8 L1867.3 714.5 L1867.8 716.8 L1868.3 715.0 L1868.8 716.4 L1869.3 715.5 L1869.8 717.4 L1870.3 716.3 L1870.8 717.5 L1871.3 716.2 L1871.8 718.0 L1872.3 716.8 L1872.8 718.1 L1873.3 716.9 L1873.8 718.3 L1874.3 716.8 L1874.8 718.5 L1875.3 717.4 L1875.8 718.5 L1876.3 717.7 L1876.8 719.7 L1877.3 717.7 L1877.8 719.7 L1878.3 717.9 L1878.8 719.5 L1879.3 718.2 L1879.8 719.8 L1880.2 718.5 L1880.7 719.9 L1881.2 718.2 L1881.7 720.0 L1882.2 718.8 L1882.7 720.1 L1883.2 719.2 L1883.7 720.6 L1884.2 719.2 L1884.7 720.8 L1885.2 719.7 L1885.7 720.8 L1886.2 719.4 L1886.7 721.0 L1887.2 719.8 L1887.7 721.3 L1888.2 720.0 L1888.7 721.1 L1889.2 720.2 L1889.7 721.5 L1890.1 720.1 L1890.6 721.8 L1891.1 720.2 L1891.6 721.5 L1892.1 719.7 L1892.6 721.9 L1893.1 720.2 L1893.6 721.5 L1894.1 720.6 L1894.6 721.9 L1895.1 720.6 L1895.6 721.8 L1896.1 720.5 L1896.6 721.9 L1897.0 720.3 L1897.5 722.1 L1898.0 721.0 L1898.5 722.0 L1899.0 721.3 L1899.5 722.2 L1900.0 721.2 L1900.5 722.5 L1901.0 721.0 L1901.5 722.5 L1902.0 721.4 L1902.5 722.4 L1903.0 721.3 L1903.5 722.7 L1904.0 721.1 L1904.5 722.5 L1905.0 721.6 L1905.5 722.9 L1906.0 721.5 L1906.5 723.3 L1907.0 721.5 L1907.5 723.1 L1908.0 721.7 L1908.5 722.9 L1909.0 721.5 L1909.5 723.1 L1910.0 721.4 L1910.5 723.1 L1911.0 721.8 L1911.5 723.7 L1912.0 721.7 L1912.5 723.2 L1913.0 722.2 L1913.5 723.8 L1914.0 721.7 L1914.5 723.2 L1915.0 721.8 L1915.5 724.1 L1916.0 722.3 L1916.5 723.8 L1917.1 722.4 L1917.6 723.4 L1918.1 722.4 L1918.6 723.7 L1919.1 722.6 L1919.6 724.1 L1920.1 722.6 L1920.6 723.9 L1921.1 722.9 L1921.6 724.1 L1922.1 722.6 L1922.6 723.8 L1923.1 722.8 L1923.6 724.0 L1924.1 722.9 L1924.6 724.3 L1925.1 722.8 L1925.6 724.3 L1926.1 722.9 L1926.6 724.1 L1927.1 723.2 L1927.6 724.7 L1928.1 723.3 L1928.6 724.4 L1929.1 723.4 L1929.6 724.5 L1930.1 723.0 L1930.6 724.6 L1931.1 723.4 L1931.6 724.6 L1932.1 723.0 L1932.6 724.6 L1933.1 723.6 L1933.6 725.1 L1934.1 723.3 L1934.6 725.3 L1935.1 722.7 L1935.6 724.7 L1936.1 723.0 L1936.6 724.8 L1937.1 723.4 L1937.6 724.9 L1938.1 723.7 L1938.6 725.0 L1939.1 723.7 L1939.6 724.8 L1940.1 723.7 L1940.6 725.0 L1941.1 723.5 L1941.6 724.8 L1942.1 723.6 L1942.6 724.8 L1943.1 722.8 L1943.6 725.1 L1944.1 724.1 L1944.6 725.0 L1945.1 724.2 L1945.6 726.0 L1946.1 723.7 L1946.6 725.4 L1947.1 723.8 L1947.6 725.7 L1948.1 723.8 L1948.6 725.6 L1949.1 724.6 L1949.6 725.5 L1950.2 724.3 L1950.7 726.5 L1951.2 724.6 L1951.7 725.6 L1952.2 724.3 L1952.7 726.0 L1953.2 725.0 L1953.7 725.8 L1954.2 724.6 L1954.7 725.7 L1955.2 724.6 L1955.7 726.1 L1956.2 725.1 L1956.7 725.9 L1957.2 724.9 L1957.7 726.0 L1958.2 724.8 L1958.7 726.8 L1959.2 724.7 L1959.7 726.2 L1960.2 724.9 L1960.7 726.0 L1961.2 724.6 L1961.7 726.1 L1962.2 724.6 L1962.7 726.2 L1963.2 725.2 L1963.7 726.0 L1964.2 725.1 L1964.7 726.8 L1965.2 724.9 L1965.7 726.5 L1966.2 725.1 L1966.7 726.6 L1967.2 725.3 L1967.7 726.8 L1968.2 725.4 L1968.7 726.8 L1969.2 725.6 L1969.7 726.6 L1970.2 725.7 L1970.7 726.5 L1971.2 724.9 L1971.7 726.6 L1972.2 725.2 L1972.7 726.7 L1973.2 725.3 L1973.7 727.0 L1974.2 725.7 L1974.7 726.8 L1975.2 725.7 L1975.7 726.6 L1976.2 725.5 L1976.7 726.6 L1977.2 725.7 L1977.7 726.7 L1978.2 725.5 L1978.7 726.5 L1979.2 725.1 L1979.7 727.0 L1980.2 725.4 L1980.7 726.3 L1981.2 725.3 L1981.7 726.5 L1982.2 724.9 L1982.7 726.7 L1983.2 725.2 L1983.7 726.5 L1984.2 725.2 L1984.7 726.3 L1985.2 724.8 L1985.7 726.8 L1986.2 724.9 L1986.7 726.7 L1987.2 724.8 L1987.7 726.2 L1988.2 725.2 L1988.7 726.4 L1989.2 725.1 L1989.7 726.4 L1990.2 725.0 L1990.7 727.2 L1991.2 725.0 L1991.7 726.2 L1992.2 725.3 L1992.7 726.3 L1993.2 725.2 L1993.7 726.6 L1994.1 725.4 L1994.6 726.8 L1995.1 725.5 L1995.6 726.5 L1996.1 724.4 L1996.6 726.5 L1997.1 725.1 L1997.6 726.5 L1998.1 725.4 L1998.6 726.5 L1999.1 725.3 L1999.6 726.8 L2000.1 724.9 L2000.6 726.3 L2001.1 725.2 L2001.6 726.6 L2002.1 724.9 L2002.6 726.6 L2003.1 725.4 L2003.6 726.4 L2004.1 725.3 L2004.6 727.2 L2005.1 724.7 L2005.6 726.7 L2006.1 725.5 L2006.6 727.2 L2007.1 725.7 L2007.6 727.1 L2008.1 725.8 L2008.6 727.3 L2009.1 725.8 L2009.6 727.6 L2010.1 726.3 L2010.6 727.5 L2011.1 726.2 L2011.6 727.5 L2012.1 726.4 L2012.6 727.8 L2013.1 726.2 L2013.6 727.4 L2014.1 726.8 L2014.6 727.5 L2015.1 725.8 L2015.6 727.5 L2016.1 726.5 L2016.6 727.4 L2017.1 726.6 L2017.6 727.7 L2018.1 726.4 L2018.6 727.7 L2019.1 726.5 L2019.6 727.6 L2020.1 726.3 L2020.6 727.5 L2021.1 726.4 L2021.6 727.7 L2022.1 726.5 L2022.6 727.5 L2023.1 726.4 L2023.6 728.0 L2024.1 726.7 L2024.6 727.7 L2025.1 726.7 L2025.6 727.8 L2026.1 726.6 L2026.6 728.2 L2027.1 726.5 L2027.6 728.5 L2028.1 726.1 L2028.6 727.6 L2029.1 726.4 L2029.6 727.8 L2030.1 726.5 L2030.6 727.7 L2031.1 726.0 L2031.6 728.4 L2032.1 726.4 L2032.6 727.8 L2033.1 726.6 L2033.6 727.4 L2034.1 726.6 L2034.6 727.7 L2035.1 726.4 L2035.6 728.3 L2036.1 726.2 L2036.6 727.5 L2037.1 726.0 L2037.6 727.9 L2038.1 725.9 L2038.6 727.8 L2039.1 726.6 L2039.6 727.8 L2040.1 726.7 L2040.6 728.1 L2041.1 726.5 L2041.6 727.5 L2042.1 726.0 L2042.6 727.8 L2043.1 726.7 L2043.6 727.7 L2044.1 726.2 L2044.6 728.1 L2045.1 726.5 L2045.6 727.4 L2046.1 726.3 L2046.6 728.3 L2047.1 726.1 L2047.6 727.6 L2048.0 726.1 L2048.5 727.4 L2049.0 726.5 L2049.5 727.5 L2050.0 726.4 L2050.5 728.2 L2051.0 726.0 L2051.5 727.7 L2052.0 726.1 L2052.5 727.6 L2053.0 726.5 L2053.5 727.8 L2054.0 726.4 L2054.5 727.7 L2055.0 726.3 L2055.5 727.4 L2056.0 725.7 L2056.5 727.5 L2057.0 726.1 L2057.5 727.4 L2058.0 726.3 L2058.5 727.5 L2059.0 726.5 L2059.5 727.5 L2060.0 725.8 L2060.5 727.3 L2061.0 726.1 L2061.5 727.5 L2062.0 726.3 L2062.5 727.4 L2063.0 725.5 L2063.5 727.6 L2064.0 726.5 L2064.5 728.3 L2065.0 726.4 L2065.5 727.5 L2066.0 726.2 L2066.5 727.7 L2067.0 726.5 L2067.5 727.5 L2068.0 726.1 L2068.5 727.6 L2069.0 726.8 L2069.5 728.2 L2070.0 726.5 L2070.5 727.7 L2071.0 726.8 L2071.5 728.6 L2072.0 726.7 L2072.5 727.8 L2073.0 726.5 L2073.5 727.7 L2074.0 726.6 L2074.5 727.8 L2075.0 726.4 L2075.3 729.4 L2075.6 729.6 L2075.8 732.6 L2076.1 731.9 L2076.4 735.6 L2076.7 735.6 L2077.2 738.5 L2077.7 737.3 L2078.2 740.1 L2078.7 739.8 L2079.2 742.2 L2079.7 741.6 L2080.3 744.6 L2080.8 743.3 L2081.3 746.3 L2081.8 745.8 L2082.3 748.2 L2082.8 748.1 L2083.3 750.4 L2083.8 749.3 L2084.3 751.8 L2084.8 750.5 L2085.3 753.4 L2085.8 752.4 L2086.3 754.7 L2086.8 753.4 L2087.3 756.2 L2087.8 755.2 L2088.3 757.0 L2088.8 756.0 L2089.3 758.2 L2089.8 757.4 L2090.3 759.6 L2090.8 758.7 L2091.3 760.4 L2091.8 759.8 L2092.3 761.6 L2092.8 760.5 L2093.3 762.5 L2093.8 761.1 L2094.3 764.1 L2094.8 763.1 L2095.2 765.6 L2095.7 763.6 L2096.2 765.8 L2096.7 765.2 L2097.2 766.9 L2097.7 766.2 L2098.2 767.8 L2098.7 767.1 L2099.2 769.2 L2099.7 768.1 L2100.2 770.3 L2100.7 769.3 L2101.2 771.6 L2101.7 770.5 L2102.2 772.2 L2102.7 771.2 L2103.2 772.4 L2103.7 771.6 L2104.2 773.2 L2104.7 772.3 L2105.1 774.2 L2105.6 772.7 L2106.1 774.4 L2106.6 773.4 L2107.1 775.6 L2107.6 773.9 L2108.1 775.6 L2108.6 775.0 L2109.1 776.1 L2109.6 775.6 L2110.1 777.7 L2110.6 775.7 L2111.1 777.7 L2111.6 776.1 L2112.1 778.4 L2112.5 776.7 L2113.0 778.6 L2113.5 777.7 L2114.0 779.3 L2114.5 778.3 L2115.0 780.1 L2115.5 779.4" stroke="#ff0000" stroke-width="1.0" fill="none"/>
<path d="M2115.5 780.3 L2116.5 778.5 L2117.5 781.3 L2118.5 779.5 L2119.5 782.0 L2120.5 780.5 L2121.5 782.5 L2122.4 781.5 L2123.4 783.7 L2124.4 782.3 L2125.4 784.1 L2126.4 782.5 L2127.4 785.1 L2128.4 784.0 L2129.4 785.0" stroke="#ff0000" stroke-width="1.0" fill="none"/>
<path d="M2129.4 785.5 L2130.0 908.5 L2131.0 743.5" stroke="#ff0000" stroke-width="1.3" fill="none" stroke-linejoin="round" stroke-dasharray="6,4"/>
<path d="M2131.0 743.7 L2131.8 739.8 L2132.6 738.4 L2133.4 734.5 L2134.2 733.8 L2135.0 728.5 L2135.9 728.7 L2136.8 724.8 L2137.8 725.5 L2138.7 721.6 L2139.6 721.1 L2140.5 717.5 L2141.4 717.3 L2142.3 714.0 L2143.2 714.3 L2144.2 711.2 L2145.1 711.1 L2146.0 707.6 L2147.0 708.2 L2148.0 705.4 L2149.1 706.1 L2150.1 703.2 L2151.1 704.1 L2152.1 700.5 L2153.1 702.0 L2154.1 699.7 L2155.2 700.9 L2156.2 697.2 L2157.2 698.2 L2158.2 695.9 L2159.2 697.5 L2160.2 694.4 L2161.1 696.5 L2162.1 693.8 L2163.1 695.1 L2164.1 693.1 L2165.1 694.5 L2166.1 691.9 L2167.1 693.7 L2168.0 691.3 L2169.0 692.3 L2170.0 689.8 L2171.0 692.1 L2172.0 689.7 L2173.0 691.8 L2174.0 689.3 L2175.0 692.1 L2176.0 689.1 L2177.0 691.9 L2178.0 689.2 L2179.0 691.9 L2180.0 689.2 L2181.0 692.0 L2182.0 689.0 L2183.0 691.9 L2184.0 689.2 L2184.9 692.0 L2185.9 687.5 L2186.9 691.1 L2187.9 689.1 L2188.9 692.2 L2189.9 688.3 L2190.9 691.3 L2191.9 688.2 L2192.9 691.1 L2193.9 688.6 L2194.9 690.9 L2195.9 688.9 L2196.9 691.3 L2197.9 687.7 L2198.9 690.0" stroke="#ff0000" stroke-width="1.0" fill="none"/>
<path d="M997.0 526.1 L997.5 511.5 L998.0 525.2 L998.5 515.6 L999.0 527.1 L999.5 513.3 L1000.0 523.1 L1000.5 515.2 L1001.0 523.5 L1001.5 516.8 L1002.0 524.5 L1002.5 511.4 L1003.0 523.5 L1003.5 513.2 L1004.0 524.2 L1004.5 516.5 L1005.0 525.3 L1005.5 515.2 L1006.0 524.7 L1006.5 517.4 L1007.0 524.3 L1007.5 517.2 L1008.0 522.9 L1008.5 513.7 L1009.0 522.6 L1009.5 516.4 L1010.0 522.9 L1010.5 515.8 L1011.0 522.4 L1011.5 515.1 L1012.0 523.0 L1012.5 515.5 L1013.0 528.2 L1013.5 513.1 L1014.0 524.9 L1014.5 514.4 L1015.0 523.4 L1015.5 515.6 L1016.0 527.3 L1016.5 516.8 L1017.0 523.7 L1017.5 516.0 L1018.0 526.8 L1018.5 514.8 L1019.0 522.6 L1019.5 516.1 L1020.0 525.5 L1020.5 517.1 L1021.0 527.4 L1021.5 514.7 L1022.0 527.4 L1022.5 517.4 L1023.0 524.3 L1023.5 515.4 L1024.0 523.0 L1024.5 512.2 L1025.0 527.7 L1025.5 516.1 L1026.0 528.4 L1026.5 516.8 L1027.0 524.1 L1027.5 517.0 L1028.0 524.0 L1028.5 515.3 L1029.0 522.8 L1029.5 514.2 L1030.0 528.1 L1030.5 515.0 L1031.0 524.5 L1031.5 516.4 L1032.0 524.8 L1032.5 512.1 L1033.0 524.0 L1033.5 516.3 L1034.0 523.3 L1034.5 511.6 L1035.0 528.5 L1035.5 514.6 L1036.0 524.0 L1036.5 517.2 L1037.0 525.4 L1037.5 515.8 L1038.0 526.7 L1038.5 516.0 L1039.0 524.8 L1039.5 513.0 L1040.0 524.0 L1040.5 515.9 L1041.0 524.5 L1041.5 518.3 L1042.0 527.3 L1042.5 517.2 L1043.0 523.9 L1043.5 516.9 L1044.0 529.9 L1044.5 517.2 L1045.0 525.9 L1045.5 513.9 L1046.0 527.3 L1046.5 514.3 L1047.0 524.7 L1047.5 517.2 L1048.0 526.4 L1048.5 517.0 L1049.0 526.5 L1049.5 513.6 L1050.0 527.6 L1050.5 518.6 L1051.0 526.0 L1051.5 515.7 L1052.0 526.0 L1052.5 519.3 L1053.0 528.0 L1053.5 517.1 L1054.0 528.1 L1054.5 519.4 L1055.0 527.7 L1055.5 513.0 L1056.0 530.7 L1056.5 518.0 L1057.0 526.4 L1057.5 517.9 L1058.0 528.9 L1058.5 515.8 L1059.0 526.6 L1059.5 514.5 L1060.0 526.5 L1060.5 515.5 L1061.0 525.0 L1061.5 515.7 L1062.0 525.7 L1062.5 516.8 L1063.0 527.9 L1063.5 518.7 L1064.0 528.7 L1064.5 516.2 L1065.0 527.8 L1065.5 517.1 L1066.0 523.4 L1066.5 515.6 L1067.0 527.0 L1067.5 517.8 L1068.0 526.4 L1068.5 516.3 L1069.0 527.4 L1069.5 515.6 L1070.0 525.0 L1070.5 517.6 L1071.0 525.7 L1071.5 514.5 L1072.0 523.8 L1072.5 512.5 L1073.0 523.6 L1073.5 517.5 L1074.0 523.8 L1074.5 514.6 L1075.0 525.4 L1075.5 514.7 L1076.0 526.4 L1076.5 517.0 L1077.0 527.2 L1077.5 515.4 L1078.0 523.4 L1078.5 512.6 L1079.0 525.1 L1079.5 516.8 L1080.0 525.7 L1080.5 516.0 L1081.0 525.7 L1081.5 513.7 L1082.0 523.8 L1082.5 515.6 L1083.0 523.2 L1083.5 517.8 L1084.0 527.9 L1084.5 515.3 L1085.0 524.5 L1085.5 516.2 L1086.0 525.3 L1086.5 517.3 L1087.0 525.3 L1087.5 515.0 L1088.0 523.6 L1088.5 517.0 L1089.0 526.5 L1089.5 514.4 L1090.0 523.3 L1090.5 516.7 L1091.0 525.2 L1091.5 515.3 L1092.0 523.3 L1092.5 516.5 L1093.0 523.9 L1093.5 516.3 L1094.0 525.5 L1094.5 517.6 L1095.0 524.4 L1095.5 513.9 L1096.0 524.4 L1096.5 513.3 L1097.0 522.2 L1097.5 515.2 L1098.0 522.8 L1098.5 514.5 L1099.0 522.5 L1099.5 513.7 L1100.0 521.6 L1100.5 512.9 L1101.0 521.9 L1101.5 515.0 L1102.0 523.8 L1102.5 515.6 L1103.0 522.2 L1103.5 513.7 L1104.0 522.1 L1104.5 510.4 L1105.0 520.7 L1105.5 515.2 L1106.0 522.0 L1106.5 512.3 L1107.0 523.2 L1107.5 512.8 L1108.0 521.2 L1108.5 514.3 L1109.0 522.7 L1109.5 514.2 L1110.0 523.4 L1110.5 510.5 L1111.0 521.1 L1111.5 514.2 L1112.0 520.6 L1112.5 510.8 L1113.0 521.3 L1113.5 514.3 L1114.0 523.5 L1114.5 513.5 L1115.0 521.2 L1115.5 514.3 L1116.0 520.8 L1116.5 514.9 L1117.0 520.9 L1117.5 511.2 L1118.0 523.1 L1118.5 515.0 L1119.0 523.4 L1119.5 513.6 L1120.0 522.9 L1120.5 511.9 L1121.0 522.8 L1121.5 515.5 L1122.0 523.7 L1122.5 514.9 L1123.0 521.6 L1123.5 514.6 L1124.0 522.9 L1124.5 516.0 L1125.0 523.8 L1125.5 514.0 L1126.0 527.7 L1126.5 515.7 L1127.0 522.3 L1127.5 510.3 L1128.0 523.5 L1128.5 516.2 L1129.0 522.3 L1129.5 514.3 L1130.0 521.6 L1130.5 515.5 L1131.0 523.8 L1131.5 512.4 L1132.0 521.8 L1132.5 511.0 L1133.0 520.8 L1133.5 514.0 L1134.0 524.6 L1134.5 515.5 L1135.0 521.1 L1135.5 512.6 L1136.0 523.1 L1136.5 515.0 L1137.0 522.5 L1137.5 512.5 L1138.0 521.9 L1138.5 515.7 L1139.0 521.9 L1139.5 514.6 L1140.0 522.6 L1140.5 513.5 L1141.0 521.2 L1141.5 514.2 L1142.0 523.8 L1142.5 512.0 L1143.0 521.8 L1143.5 513.0 L1144.0 520.7 L1144.5 508.2 L1145.0 523.8 L1145.5 514.6 L1146.0 521.4 L1146.5 515.6 L1147.0 524.0 L1147.5 510.5 L1148.0 521.5 L1148.5 513.9 L1149.0 522.5 L1149.5 514.7 L1150.0 522.4 L1150.5 514.9 L1151.0 523.5 L1151.5 514.0 L1152.0 520.9 L1152.5 512.4 L1153.0 521.8 L1153.5 513.7 L1154.0 526.2 L1154.5 515.6 L1155.0 522.2 L1155.5 510.5 L1156.0 522.6 L1156.5 512.7 L1157.0 522.5 L1157.5 515.3 L1158.0 525.7 L1158.5 512.5 L1159.0 521.6 L1159.5 513.5 L1160.0 521.5 L1160.5 513.8 L1161.0 520.6 L1161.5 514.1 L1162.0 525.7 L1162.5 513.8 L1163.0 522.4 L1163.5 515.1 L1164.0 523.2 L1164.5 511.4 L1165.0 521.7 L1165.5 515.2 L1166.0 522.0 L1166.5 511.2 L1167.0 527.5 L1167.5 515.3 L1168.0 522.9 L1168.5 514.0 L1169.0 522.1 L1169.5 516.3 L1170.0 523.0 L1170.5 515.5 L1171.0 523.1 L1171.5 514.3 L1172.0 522.4 L1172.5 512.2 L1173.0 525.4 L1173.5 514.9 L1174.0 524.3 L1174.5 515.9 L1175.0 522.6 L1175.5 514.6 L1176.0 526.8 L1176.5 512.9 L1177.0 528.1 L1177.5 512.0 L1178.0 522.5 L1178.5 516.8 L1179.0 523.1 L1179.5 511.9 L1180.0 527.0 L1180.5 512.9 L1181.0 522.8 L1181.5 515.2 L1182.0 522.8 L1182.5 516.5 L1183.0 524.1 L1183.5 514.8 L1184.0 522.7 L1184.5 516.4 L1185.0 522.9 L1185.5 516.2 L1186.0 524.0 L1186.5 516.3 L1187.0 523.8 L1187.5 514.7 L1188.0 526.7 L1188.5 516.2 L1189.0 524.0 L1189.5 512.4 L1190.0 524.2 L1190.5 516.0 L1191.0 523.3 L1191.5 514.4 L1192.0 522.1 L1192.5 512.0 L1193.0 521.9 L1193.5 513.5 L1194.0 522.8 L1194.5 514.0 L1195.0 523.1 L1195.5 511.4 L1196.0 523.4 L1196.5 515.6 L1197.0 523.2 L1197.5 515.3 L1198.0 525.5 L1198.5 516.5 L1199.0 524.0 L1199.5 516.6 L1200.0 523.9 L1200.5 514.0 L1201.0 523.0 L1201.5 515.2 L1202.0 527.1 L1202.5 515.9 L1203.0 522.0 L1203.5 514.6 L1204.0 524.0 L1204.5 515.5 L1205.0 523.7 L1205.5 516.7 L1206.0 524.6 L1206.5 512.5 L1207.0 525.9 L1207.5 516.2 L1208.0 523.2 L1208.5 516.7 L1209.0 526.4 L1209.5 517.7 L1210.0 525.9 L1210.5 515.2 L1211.0 523.9 L1211.5 516.1 L1212.0 527.0 L1212.5 517.7 L1213.0 526.1 L1213.5 517.1 L1214.0 524.8 L1214.5 516.6 L1215.0 523.0 L1215.5 516.8 L1216.0 524.1 L1216.5 515.2 L1217.0 523.6 L1217.5 517.5 L1218.0 524.0 L1218.5 516.3 L1219.0 528.4 L1219.5 517.2 L1220.0 527.8 L1220.5 517.5 L1221.0 526.1 L1221.5 517.5 L1222.0 525.4 L1222.5 516.1 L1223.0 525.4 L1223.5 512.0 L1224.0 523.0 L1224.5 516.9 L1225.0 525.6 L1225.5 516.3 L1226.0 525.0 L1226.5 514.0 L1227.0 522.0 L1227.5 513.5 L1228.0 522.5 L1228.5 514.5 L1229.0 526.4 L1229.5 516.2 L1230.0 521.9 L1230.5 513.7 L1231.0 525.6 L1231.5 515.9 L1232.0 524.0 L1232.5 515.6 L1233.0 523.9 L1233.5 516.1 L1234.0 524.0 L1234.5 515.2 L1235.0 522.9 L1235.5 513.9 L1236.0 523.9 L1236.5 516.4 L1237.0 525.3 L1237.5 515.2 L1238.0 523.8 L1238.5 512.4 L1239.0 526.0 L1239.5 514.3 L1240.0 521.6 L1240.5 510.4 L1241.0 523.6 L1241.5 515.3 L1242.0 523.1 L1242.5 513.7 L1243.0 522.5 L1243.5 516.2 L1244.0 522.0 L1244.5 514.2 L1245.0 522.0 L1245.5 509.9 L1246.0 522.8 L1246.5 512.4 L1247.0 522.9 L1247.5 510.8 L1248.0 520.5 L1248.5 514.3 L1249.0 523.0 L1249.5 514.0 L1250.0 521.1 L1250.5 512.5 L1251.0 523.8 L1251.5 512.5 L1252.0 520.6 L1252.5 514.1 L1253.0 521.3 L1253.5 509.0 L1254.0 521.4 L1254.5 514.6 L1255.0 523.1 L1255.5 515.5 L1256.0 522.8 L1256.5 514.3 L1257.0 522.2 L1257.5 514.5 L1258.0 522.9 L1258.5 512.1 L1259.0 524.2 L1259.5 515.6 L1260.0 522.3 L1260.5 513.8 L1261.0 523.0 L1261.5 512.3 L1262.0 524.7 L1262.5 516.0 L1263.0 523.6 L1263.5 515.5 L1264.0 523.0 L1264.5 514.4 L1265.0 521.1 L1265.5 514.0 L1266.0 523.8 L1266.5 514.7 L1267.0 524.0 L1267.5 515.3 L1268.0 522.5 L1268.5 513.5 L1269.0 521.4 L1269.5 515.9 L1270.0 522.6 L1270.5 515.5 L1271.0 522.2 L1271.5 514.1 L1272.0 523.9 L1272.5 516.5 L1273.0 523.9 L1273.5 514.1 L1274.0 526.3 L1274.5 514.8 L1275.0 524.1 L1275.5 516.3 L1276.0 527.7 L1276.5 514.6 L1277.0 522.2 L1277.5 516.0 L1278.0 522.7 L1278.5 513.4 L1279.0 524.1 L1279.5 514.3 L1280.0 523.8 L1280.5 516.7 L1281.0 523.2 L1281.5 513.7 L1282.0 526.4 L1282.5 517.4 L1283.0 527.4 L1283.5 517.4 L1284.0 524.0 L1284.5 517.4 L1285.0 523.9 L1285.5 513.6 L1286.0 526.0 L1286.5 517.2 L1287.0 528.8 L1287.5 514.9 L1288.0 525.5 L1288.5 517.5 L1289.0 525.2 L1289.5 516.8 L1290.0 526.5 L1290.5 515.1 L1291.0 526.1 L1291.5 518.0 L1292.0 525.5 L1292.5 517.9 L1293.0 523.9 L1293.5 516.6 L1294.0 528.0 L1294.5 518.0 L1295.0 523.6 L1295.5 517.1 L1296.0 526.0 L1296.5 516.0 L1297.0 526.4 L1297.5 514.3 L1298.0 524.1 L1298.5 515.4 L1299.0 524.9 L1299.5 515.6 L1300.0 524.2 L1300.5 517.8 L1301.0 525.4 L1301.5 517.5 L1302.0 524.4 L1302.5 515.3 L1303.0 525.0 L1303.5 516.6 L1304.0 526.2 L1304.5 516.9 L1305.0 527.0 L1305.5 517.7 L1306.0 526.4 L1306.5 516.4 L1307.0 525.2 L1307.5 515.2 L1308.0 525.1 L1308.5 518.7 L1309.0 525.8 L1309.5 516.4 L1310.0 524.4 L1310.5 517.8 L1311.0 526.6 L1311.5 515.4 L1312.0 523.4 L1312.5 517.9 L1313.0 525.1 L1313.5 513.9 L1314.0 524.7 L1314.5 518.8 L1315.0 527.7 L1315.5 519.2 L1316.0 526.8 L1316.5 516.6 L1317.0 524.4 L1317.5 517.3 L1318.0 524.7 L1318.5 517.9 L1319.0 524.7 L1319.5 516.1 L1320.0 525.4 L1320.5 516.3 L1321.0 526.8 L1321.5 514.3 L1322.0 522.7 L1322.5 516.7 L1323.0 523.9 L1323.5 515.6 L1324.0 523.4 L1324.5 516.3 L1325.0 522.9 L1325.5 516.2 L1326.0 523.0 L1326.5 515.8 L1327.0 522.8 L1327.5 512.5 L1328.0 525.4 L1328.5 515.4 L1329.0 524.6 L1329.5 511.5 L1330.0 525.7 L1330.5 516.1 L1331.0 524.8 L1331.5 513.0 L1332.0 526.7 L1332.5 515.4 L1333.0 528.1 L1333.5 515.9 L1334.0 525.3 L1334.5 516.1 L1335.0 525.6 L1335.5 516.2 L1336.0 523.2 L1336.5 516.5 L1337.0 524.9 L1337.5 517.0 L1338.0 524.7 L1338.5 516.9 L1339.0 524.9 L1339.5 513.9 L1340.0 524.8 L1340.5 517.5 L1341.0 529.3 L1341.5 516.7 L1342.0 525.2 L1342.5 514.2 L1343.0 527.4 L1343.5 518.2 L1344.0 524.6 L1344.5 518.0 L1345.0 525.9 L1345.5 517.1 L1346.0 523.6 L1346.5 517.6 L1347.0 523.5 L1347.5 517.7 L1348.0 524.2 L1348.5 517.6 L1349.0 524.1 L1349.5 515.8 L1350.0 524.3 L1350.5 517.7 L1351.0 523.9 L1351.5 516.3 L1352.0 530.2 L1352.5 517.1 L1353.0 528.8 L1353.5 517.9 L1354.0 524.0 L1354.5 515.0 L1355.0 525.6 L1355.5 512.2 L1356.0 526.3 L1356.5 516.0 L1357.0 526.5 L1357.5 514.7 L1358.0 525.5 L1358.5 514.6 L1359.0 524.5 L1359.5 513.6 L1360.0 528.2 L1360.5 517.3 L1361.0 525.0 L1361.5 518.5 L1362.0 527.4 L1362.5 517.2 L1363.0 526.0 L1363.5 513.7 L1364.0 525.1 L1364.5 514.7 L1365.0 526.5 L1365.5 517.5 L1366.0 524.9 L1366.5 518.6 L1367.0 526.1 L1367.5 516.9 L1368.0 524.8 L1368.1 513.9 L1368.2 527.6 L1368.2 517.2 L1368.3 530.9 L1368.4 524.4 L1368.5 532.9 L1368.5 525.5 L1368.6 536.3 L1368.7 530.0 L1368.8 537.4 L1368.8 530.3 L1368.9 540.3 L1369.0 533.1 L1369.1 544.1 L1369.2 533.7 L1369.2 544.7 L1369.3 539.1 L1369.4 548.7 L1369.5 542.5 L1369.5 550.9 L1369.6 545.1 L1369.7 557.2 L1369.9 549.5 L1370.1 556.5 L1370.3 552.4 L1370.5 560.8 L1370.8 554.6 L1371.0 564.3 L1371.2 557.8 L1371.4 567.8 L1371.6 561.8 L1371.8 568.9 L1372.0 563.4 L1372.2 576.1 L1372.4 567.4 L1372.6 576.9 L1372.9 570.4 L1373.1 580.2 L1373.3 571.7 L1373.5 581.8 L1373.7 574.3 L1373.9 584.6 L1374.3 577.5 L1374.6 585.1 L1375.0 579.2 L1375.4 590.0 L1375.7 584.0 L1376.1 593.9 L1376.4 587.7 L1376.8 596.9 L1377.2 589.0 L1377.5 596.7 L1377.9 590.6 L1378.3 601.5 L1378.6 595.7 L1379.0 603.3 L1379.3 596.2 L1379.7 606.4 L1380.1 602.6 L1380.4 608.3 L1380.8 604.5 L1381.3 611.6 L1381.8 606.0 L1382.3 613.2 L1382.8 606.8 L1383.3 614.4 L1383.8 607.3 L1384.3 617.0 L1384.8 609.2 L1385.3 619.6 L1385.8 611.4 L1386.3 623.3 L1386.8 614.8 L1387.3 623.6 L1387.8 614.2 L1388.3 627.3 L1388.8 615.4 L1389.3 626.7 L1389.8 617.7 L1390.3 623.3 L1390.8 617.3 L1391.3 622.7 L1391.8 618.3 L1392.3 623.6 L1392.8 617.9 L1393.3 623.2 L1393.8 618.3 L1394.3 626.4 L1394.8 617.4 L1395.2 625.9 L1395.7 619.3 L1396.2 624.5 L1396.7 617.8 L1397.2 626.8 L1397.7 618.5 L1398.2 627.2 L1398.7 620.2 L1399.2 625.9 L1399.7 616.8 L1400.2 624.8 L1400.7 618.4 L1401.2 627.0 L1401.7 620.9 L1402.2 626.0 L1402.7 620.3 L1403.2 627.1 L1403.7 620.9 L1404.2 626.8 L1404.7 619.2 L1405.2 626.7 L1405.7 621.9 L1406.2 626.2 L1406.7 620.8 L1407.1 626.1 L1407.6 620.8 L1408.1 629.1 L1408.6 618.2 L1409.1 627.9 L1409.6 622.2 L1410.1 627.5 L1410.6 622.3 L1411.1 628.6 L1411.6 621.8 L1412.1 627.3 L1412.6 621.9 L1413.1 627.6 L1413.6 621.9 L1414.1 628.6 L1414.6 621.3 L1415.1 626.9 L1415.6 620.0 L1416.1 630.3 L1416.6 619.9 L1417.1 629.6 L1417.5 622.8 L1418.0 629.9 L1418.5 620.8 L1419.0 629.7 L1419.5 621.0 L1420.0 630.1 L1420.5 622.4 L1421.0 629.4 L1421.5 621.0 L1422.0 628.6 L1422.5 622.3 L1423.0 628.2 L1423.5 622.4 L1424.0 627.7 L1424.5 623.0 L1425.0 629.2 L1425.5 622.3 L1426.0 629.6 L1426.5 619.8 L1427.0 629.2 L1427.5 623.3 L1428.0 628.9 L1428.5 622.6 L1429.0 628.6 L1429.5 623.5 L1430.0 629.7 L1430.5 621.4 L1431.0 630.9 L1431.5 623.9 L1432.0 629.7 L1432.5 623.4 L1433.0 631.0 L1433.5 623.2 L1434.0 629.5 L1434.5 623.1 L1435.0 628.3 L1435.5 622.4 L1436.0 628.4 L1436.5 622.2 L1437.0 631.4 L1437.5 623.5 L1438.0 629.1 L1438.5 623.2 L1439.0 632.0 L1439.5 622.5 L1440.0 628.7 L1440.5 623.5 L1441.0 632.0 L1441.5 625.2 L1442.0 630.7 L1442.5 623.3 L1443.0 630.3 L1443.1 624.7 L1443.2 634.6 L1443.4 630.0 L1443.5 636.0 L1443.6 630.4 L1443.7 639.8 L1443.8 635.8 L1444.0 644.1 L1444.1 635.2 L1444.2 646.1 L1444.3 638.0 L1444.5 648.5 L1444.6 644.3 L1444.7 654.0 L1445.1 647.4 L1445.4 653.1 L1445.8 646.9 L1446.1 656.7 L1446.5 651.8 L1446.8 658.3 L1447.2 653.5 L1447.5 661.7 L1447.9 656.9 L1448.2 664.1 L1448.6 655.9 L1448.9 666.7 L1449.3 661.2 L1449.6 668.9 L1450.0 664.2 L1450.3 672.5 L1450.6 668.3 L1450.9 680.4 L1451.2 670.5 L1451.5 679.0 L1451.8 674.5 L1452.1 684.0 L1452.4 677.8 L1452.7 685.9 L1453.1 680.6 L1453.4 686.5 L1453.7 679.8 L1454.0 690.4 L1454.3 684.3 L1454.6 692.6 L1454.9 688.3 L1455.2 694.6 L1455.5 688.9 L1455.8 697.2 L1456.3 692.7 L1456.8 697.7 L1457.3 692.5 L1457.8 699.0 L1458.4 695.6 L1458.9 700.5 L1459.4 694.7 L1459.9 701.7 L1460.4 696.5 L1460.9 705.0 L1461.4 698.0 L1461.9 705.0 L1462.4 699.7 L1462.9 706.0 L1463.5 700.7 L1464.0 708.8 L1464.5 701.2 L1465.0 709.0 L1465.5 704.7 L1466.0 711.5 L1466.5 705.5 L1467.0 711.1 L1467.5 706.4 L1468.0 711.8 L1468.5 705.9 L1469.0 711.7 L1469.5 707.5 L1470.0 713.5 L1470.5 707.1 L1471.0 712.1 L1471.5 707.5 L1472.0 715.1 L1472.5 708.0 L1473.0 714.2 L1473.5 707.4 L1474.0 718.4 L1474.5 708.8 L1475.0 716.7 L1475.5 708.4 L1476.0 716.9 L1476.5 709.8 L1477.0 716.6 L1477.5 710.2 L1478.0 715.9 L1478.5 710.6 L1479.0 719.0 L1479.5 708.8 L1480.0 719.4 L1480.5 712.7 L1481.0 719.0 L1481.5 712.6 L1482.0 719.6 L1482.5 713.2 L1483.0 718.5 L1483.5 711.1 L1484.0 717.5 L1484.5 711.4 L1485.0 719.5 L1485.5 713.7 L1486.0 718.3 L1486.5 711.7 L1487.0 719.4 L1487.5 713.9 L1488.0 721.1 L1488.5 714.9 L1489.0 719.6 L1489.5 713.9 L1490.0 722.3 L1490.5 713.8 L1491.0 721.4 L1491.5 711.7 L1492.0 719.4 L1492.4 715.1 L1492.9 720.8 L1493.4 714.7 L1493.9 720.9 L1494.4 715.6 L1494.9 721.1 L1495.4 714.3 L1495.9 722.7 L1496.4 714.7 L1496.9 722.9 L1497.4 715.3 L1497.9 723.1 L1498.4 716.7 L1498.9 721.3 L1499.4 715.8 L1499.9 721.2 L1500.4 713.8 L1500.9 722.1 L1501.4 715.9 L1501.9 722.8 L1502.4 712.7 L1502.9 722.7 L1503.4 717.4 L1503.9 721.8 L1504.4 716.1 L1504.9 722.7 L1505.4 716.8 L1505.8 723.0 L1506.3 713.7 L1506.8 721.9 L1507.3 715.9 L1507.8 722.9 L1508.3 714.7 L1508.8 721.6 L1509.3 714.4 L1509.8 720.2 L1510.3 712.6 L1510.8 722.4 L1511.3 714.9 L1511.8 720.8 L1512.3 713.7 L1512.8 720.1 L1513.3 713.8 L1513.8 721.2 L1514.3 714.2 L1514.8 720.5 L1515.3 712.8 L1515.8 719.3 L1516.3 714.4 L1516.8 721.0 L1517.3 711.3 L1517.8 720.4 L1518.3 713.5 L1518.8 719.9 L1519.3 713.5 L1519.8 719.9 L1520.3 713.8 L1520.8 721.6 L1521.3 715.7 L1521.8 722.7 L1522.3 714.5 L1522.8 720.3 L1523.3 712.6 L1523.8 719.6 L1524.3 712.4 L1524.9 720.3 L1525.4 713.7 L1525.9 719.7 L1526.4 712.0 L1526.9 720.9 L1527.4 713.6 L1527.9 721.3 L1528.4 713.4 L1528.9 720.2 L1529.4 713.3 L1529.9 718.6 L1530.4 714.5 L1530.9 720.2 L1531.4 714.6 L1531.9 721.4 L1532.4 713.7 L1532.9 719.3 L1533.4 714.7 L1533.9 720.9 L1534.4 714.6 L1534.9 721.5 L1535.4 714.5 L1535.9 720.1 L1536.4 715.0 L1536.9 720.2 L1537.4 710.6 L1537.9 719.9 L1538.4 715.1 L1538.9 720.5 L1539.4 714.9 L1539.9 720.6 L1540.4 713.3 L1540.9 720.5 L1541.4 715.4 L1541.9 719.9 L1542.4 715.7 L1542.9 722.4 L1543.4 714.3 L1543.9 719.8 L1544.4 715.3 L1544.9 720.3 L1545.4 713.7 L1545.9 720.1 L1546.4 714.7 L1546.9 721.0 L1547.4 713.1 L1547.9 721.3 L1548.5 711.4 L1549.0 722.7 L1549.5 714.9 L1550.0 721.2 L1550.5 715.2 L1551.0 719.3 L1551.5 713.6 L1552.0 721.4 L1552.5 714.9 L1553.0 720.2 L1553.5 715.2 L1554.0 720.5 L1554.5 713.5 L1555.0 720.7 L1555.5 713.9 L1556.0 722.2 L1556.5 714.3 L1557.0 719.7 L1557.5 712.6 L1558.0 718.1 L1558.5 713.6 L1559.0 718.5 L1559.5 711.5 L1560.0 718.4 L1560.5 712.8 L1561.0 718.2 L1561.5 713.7 L1562.0 718.7 L1562.5 714.0 L1563.0 719.0 L1563.5 713.2 L1564.0 720.8 L1564.5 714.1 L1565.0 720.1 L1565.5 713.0 L1566.0 723.5 L1566.5 713.5 L1567.0 719.6 L1567.5 711.1 L1568.0 721.3 L1568.5 713.1 L1569.0 720.4 L1569.5 712.6 L1570.0 720.1 L1570.5 715.1 L1571.0 723.6 L1571.5 715.4 L1572.0 719.7 L1572.5 714.3 L1573.0 720.1 L1573.5 712.9 L1574.0 719.8 L1574.5 712.9 L1575.0 719.9 L1575.5 714.0 L1576.0 720.0 L1576.5 714.8 L1577.0 724.2 L1577.5 715.6 L1578.0 722.6 L1578.5 713.8 L1579.0 720.3 L1579.5 715.0 L1580.0 721.0 L1580.5 714.4 L1581.0 722.7 L1581.5 714.6 L1582.0 719.4 L1582.5 715.0 L1583.0 719.6 L1583.5 714.3 L1584.0 719.7 L1584.5 712.4 L1585.0 722.0 L1585.5 714.7 L1586.0 720.4 L1586.5 715.3 L1587.0 723.4 L1587.5 716.2 L1588.0 724.1 L1588.5 713.7 L1589.0 722.2 L1589.5 713.6 L1590.0 723.3 L1590.5 712.4 L1591.0 720.5 L1591.5 714.2 L1592.0 722.4 L1592.5 714.5 L1593.0 720.5 L1593.5 713.8 L1594.0 720.7 L1594.5 714.6 L1595.0 721.0 L1595.5 711.9 L1596.0 720.5 L1596.5 712.7 L1597.0 720.5 L1597.5 714.4 L1598.0 722.3 L1598.5 712.6 L1599.0 720.6 L1599.5 714.5 L1600.0 720.0 L1600.5 714.2 L1601.0 720.5 L1601.5 712.3 L1602.0 721.5 L1602.5 714.6 L1603.0 720.5 L1603.5 713.0 L1604.0 720.6 L1604.5 714.5 L1605.0 720.3 L1605.5 715.3 L1606.0 723.2 L1606.5 714.1 L1607.0 720.6 L1607.5 715.2 L1608.0 721.1 L1608.5 715.7 L1609.0 721.1 L1609.5 714.1 L1610.0 719.8 L1610.5 714.7 L1611.0 720.0 L1611.5 714.4 L1612.0 719.7 L1612.5 713.1 L1613.0 723.7 L1613.5 714.3 L1614.0 720.4 L1614.5 713.6 L1615.0 719.6 L1615.5 715.2 L1616.0 720.1 L1616.5 713.3 L1617.0 720.4 L1617.5 713.0 L1618.0 720.3 L1618.5 713.4 L1619.0 720.0 L1619.5 714.8 L1620.0 721.2 L1620.5 713.2 L1621.0 720.6 L1621.5 714.8 L1622.0 721.9 L1622.5 710.5 L1623.0 721.9 L1623.5 715.0 L1624.0 720.1 L1624.5 713.6 L1625.0 722.9 L1625.5 715.1 L1626.0 721.2 L1626.5 713.3 L1627.0 719.3 L1627.5 714.1 L1628.0 721.1 L1628.5 714.2 L1629.0 719.2 L1629.5 715.4 L1630.0 719.9 L1630.5 712.7 L1631.0 720.0 L1631.5 714.5 L1632.0 721.6 L1632.5 714.3 L1633.0 720.5 L1633.5 710.7 L1634.0 722.5 L1634.5 714.6 L1635.0 720.9 L1635.5 715.8 L1636.0 722.4 L1636.5 715.4 L1637.0 719.8 L1637.5 713.3 L1638.0 719.6 L1638.5 711.5 L1639.0 720.1 L1639.5 711.4 L1640.0 722.3 L1640.5 713.3 L1641.0 720.3 L1641.5 710.1 L1642.0 719.7 L1642.5 713.9 L1643.0 719.5 L1643.5 713.9 L1644.0 718.6 L1644.5 713.2 L1645.0 720.3 L1645.5 714.7 L1646.0 723.5 L1646.5 713.9 L1646.9 719.4 L1647.4 713.4 L1647.9 722.0 L1648.4 713.5 L1648.9 718.0 L1649.4 712.9 L1649.9 718.9 L1650.4 711.5 L1650.9 719.0 L1651.4 712.6 L1651.9 719.0 L1652.4 713.2 L1652.9 717.8 L1653.4 713.3 L1653.9 720.0 L1654.4 712.8 L1654.9 718.4 L1655.4 712.5 L1655.9 718.1 L1656.4 714.0 L1656.9 719.7 L1657.4 714.6 L1657.9 720.3 L1658.4 710.5 L1658.9 720.2 L1659.4 713.3 L1659.9 720.3 L1660.4 714.0 L1660.9 720.9 L1661.4 712.7 L1661.9 719.2 L1662.4 714.3 L1662.9 718.5 L1663.4 713.3 L1663.9 720.2 L1664.4 711.8 L1664.9 720.4 L1665.4 712.7 L1665.9 720.3 L1666.4 711.7 L1666.9 719.9 L1667.4 712.7 L1667.9 719.7 L1668.4 714.2 L1668.9 719.9 L1669.4 713.1 L1669.9 720.2 L1670.4 713.0 L1670.9 719.5 L1671.4 713.9 L1671.9 719.6 L1672.4 713.3 L1672.9 721.1 L1673.4 710.2 L1673.9 721.6 L1674.4 713.4 L1674.9 722.4 L1675.4 712.0 L1675.9 722.2 L1676.4 714.0 L1676.9 719.0 L1677.4 711.7 L1677.9 721.9 L1678.4 710.8 L1678.9 719.7 L1679.4 713.4 L1679.9 718.2 L1680.4 713.2 L1680.9 718.2 L1681.4 711.0 L1681.9 719.4 L1682.4 711.6 L1682.9 721.8 L1683.4 714.0 L1683.9 720.0 L1684.4 714.2 L1684.7 722.2 L1685.0 716.3 L1685.4 724.2 L1685.7 719.3 L1686.0 726.5 L1686.5 720.6 L1687.0 726.9 L1687.5 719.4 L1688.0 726.4 L1688.5 720.8 L1689.0 726.2 L1689.5 720.4 L1690.0 726.2 L1690.5 720.4 L1691.0 725.5 L1691.5 716.5 L1692.0 725.5 L1692.5 719.0 L1693.0 726.0 L1693.5 719.3 L1694.0 728.0 L1694.5 718.5 L1695.0 728.7 L1695.5 716.9 L1696.0 728.1 L1696.5 718.8 L1697.0 727.3 L1697.5 719.6 L1698.0 725.1 L1698.5 720.3 L1699.0 725.3 L1699.5 719.6 L1700.0 725.3 L1700.5 716.2 L1701.0 724.6 L1701.5 719.1 L1702.0 728.4 L1702.5 718.9 L1703.0 724.6 L1703.5 720.1 L1704.0 727.3 L1704.5 718.6 L1705.0 725.6 L1705.5 720.2 L1706.0 726.5 L1706.5 720.0 L1707.0 726.6 L1707.5 719.7 L1708.0 729.1 L1708.1 722.0 L1708.2 728.1 L1708.3 724.6 L1708.4 732.9 L1708.5 725.0 L1708.6 734.2 L1708.7 728.2 L1708.8 736.3 L1708.9 732.3 L1709.1 740.4 L1709.2 735.2 L1709.3 745.5 L1709.4 737.6 L1709.5 746.6 L1709.6 742.4 L1709.7 750.2 L1709.8 743.8 L1709.9 752.1 L1710.0 745.7 L1710.5 753.1 L1711.0 745.9 L1711.5 758.4 L1712.0 748.1 L1712.5 755.9 L1713.0 749.9 L1713.5 755.8 L1714.0 750.3 L1714.5 757.2 L1715.0 751.1 L1715.5 757.9 L1716.0 749.5 L1716.5 758.4 L1717.0 751.5 L1717.5 758.8 L1718.0 752.5 L1718.5 759.8 L1719.0 752.8 L1719.5 760.7 L1720.0 755.4 L1720.5 762.2 L1721.0 757.4 L1721.5 763.4 L1722.0 757.2 L1722.5 764.2 L1723.0 759.3 L1723.4 764.2 L1723.9 756.6 L1724.4 767.4 L1724.9 758.3 L1725.4 768.7 L1725.9 757.4 L1726.4 768.7 L1726.9 763.4 L1727.4 769.1 L1727.9 763.2 L1728.4 770.2 L1728.9 762.4 L1729.4 768.6 L1729.9 764.9 L1730.3 773.6 L1730.8 766.5 L1731.3 772.7 L1731.8 766.0 L1732.3 774.4 L1732.8 766.9 L1733.3 774.4 L1733.8 766.9 L1734.3 775.6 L1734.8 768.8 L1735.3 775.3 L1735.8 769.5 L1736.3 774.8 L1736.8 769.0 L1737.3 775.5 L1737.8 769.5 L1738.3 775.6 L1738.8 769.9 L1739.3 775.3 L1739.8 767.4 L1740.3 774.6 L1740.8 769.4 L1741.3 775.4 L1741.8 768.9 L1742.3 774.6 L1742.8 769.8 L1743.3 774.9 L1743.8 769.2 L1744.3 774.9 L1744.8 767.2 L1745.3 774.1 L1745.8 768.5 L1746.3 774.4 L1746.8 769.9 L1747.3 774.0 L1747.8 769.4 L1748.3 774.7 L1748.8 765.7 L1749.3 774.1 L1749.8 767.3 L1750.2 776.2 L1750.7 765.1 L1751.2 775.9 L1751.7 767.7 L1752.2 774.5 L1752.7 766.9 L1753.2 777.9 L1753.7 766.9 L1754.2 774.1 L1754.7 768.4 L1755.2 773.6 L1755.7 768.0 L1756.2 777.0 L1756.7 769.1 L1757.2 775.1 L1757.7 769.0 L1758.2 775.1 L1758.7 768.3 L1759.2 775.8 L1759.7 770.6 L1760.2 775.2 L1760.7 769.8 L1761.2 777.4 L1761.7 768.5 L1762.2 774.3 L1762.7 770.3 L1763.2 775.2 L1763.7 770.3 L1764.2 776.0 L1764.7 771.0 L1765.2 777.6 L1765.7 771.3 L1766.2 775.7 L1766.7 769.5 L1767.2 777.1 L1767.7 768.5 L1768.2 776.9 L1768.7 768.7 L1769.1 775.9 L1769.6 769.2 L1770.1 774.2 L1770.6 766.1 L1771.1 775.4 L1771.6 765.2 L1772.1 772.2 L1772.6 767.3 L1773.0 772.5 L1773.5 763.7 L1774.0 770.6 L1774.5 765.1 L1775.0 770.8 L1775.5 763.6 L1776.0 771.0 L1776.5 760.8 L1777.0 770.4 L1777.5 763.8 L1778.0 768.9 L1778.5 762.9 L1779.0 769.1 L1779.6 760.0 L1780.1 767.9 L1780.6 761.2 L1781.1 767.3 L1781.6 760.8 L1782.1 769.1 L1782.6 760.2 L1783.1 767.5 L1783.6 759.8 L1784.1 769.2 L1784.6 758.0 L1785.1 765.8 L1785.6 755.6 L1786.1 765.5 L1786.6 758.9 L1787.1 763.2 L1787.7 757.4 L1788.2 763.2 L1788.7 756.5 L1789.2 766.1 L1789.7 756.6 L1790.2 761.5 L1790.7 756.5 L1791.2 761.5 L1791.7 756.1 L1792.2 761.1 L1792.7 755.4 L1793.2 764.2 L1793.7 755.1 L1794.2 761.0 L1794.7 756.3 L1795.2 760.9 L1795.7 754.9 L1796.2 760.4 L1796.7 753.1 L1797.2 760.4 L1797.7 754.4 L1798.2 759.4 L1798.7 754.8 L1799.2 761.6 L1799.7 753.8 L1800.2 758.7 L1800.7 752.7 L1801.2 760.6 L1801.7 753.9 L1802.2 758.7 L1802.7 752.8 L1803.2 759.0 L1803.7 753.3 L1804.2 758.6 L1804.7 752.9 L1805.2 758.3 L1805.7 752.1 L1806.2 758.7 L1806.7 749.7 L1807.2 759.0 L1807.7 752.7 L1808.2 759.2 L1808.7 747.5 L1809.2 757.5 L1809.3 752.3 L1809.5 761.3 L1809.6 756.6 L1809.7 763.3 L1809.8 757.7 L1810.0 766.3 L1810.1 760.8 L1810.2 768.0 L1810.3 765.4 L1810.5 772.9 L1810.6 767.7 L1810.7 776.1 L1810.8 771.0 L1811.0 776.7 L1811.1 771.2 L1811.2 781.2 L1811.3 775.1 L1811.5 782.4 L1811.6 778.9 L1811.7 787.3 L1812.1 782.0 L1812.4 789.2 L1812.8 785.5 L1813.1 792.1 L1813.5 787.5 L1813.8 793.8 L1814.2 789.8 L1814.6 796.9 L1814.9 793.3 L1815.3 799.8 L1815.6 794.1 L1816.0 804.0 L1816.3 797.6 L1816.7 806.4 L1817.2 797.5 L1817.7 809.9 L1818.2 802.4 L1818.7 811.3 L1819.1 802.5 L1819.6 810.3 L1820.1 806.7 L1820.6 814.1 L1821.1 808.1 L1821.6 815.8 L1822.1 809.2 L1822.6 815.1 L1823.0 810.5 L1823.5 816.2 L1824.0 811.9 L1824.5 818.1 L1825.0 813.9 L1825.5 821.1 L1826.0 814.4 L1826.5 821.0 L1827.0 813.8 L1827.5 824.0 L1828.0 815.6 L1828.5 821.2 L1829.0 816.8 L1829.5 821.2 L1830.0 815.1 L1830.5 820.8 L1831.0 816.3 L1831.5 822.1 L1832.0 815.3 L1832.5 823.6 L1833.0 813.4 L1833.5 822.0 L1834.0 812.5 L1834.5 821.7 L1835.0 814.5 L1835.5 821.6 L1836.0 816.6 L1836.5 821.9 L1837.0 817.4 L1837.5 822.7 L1838.0 817.4 L1838.5 823.5 L1839.0 818.0 L1839.5 824.5 L1840.0 817.7 L1840.5 824.6 L1841.0 817.4 L1841.5 823.8 L1842.0 819.0 L1842.5 824.4 L1843.0 819.9 L1843.5 825.9 L1844.0 818.6 L1844.5 825.2 L1845.0 817.5 L1845.5 826.4 L1846.0 819.1 L1846.5 828.4 L1847.0 819.3 L1847.5 825.4 L1848.0 821.2 L1848.5 826.2 L1849.0 821.2 L1849.5 825.8 L1850.0 820.8 L1850.5 827.1 L1851.0 819.8 L1851.5 825.9 L1852.0 818.5 L1852.5 826.8 L1853.0 821.6 L1853.5 827.3 L1854.0 818.3 L1854.5 826.1 L1855.0 822.2 L1855.5 827.3 L1856.0 821.9 L1856.5 826.5 L1857.0 821.7 L1857.5 830.7 L1858.0 821.4 L1858.5 827.1 L1859.0 819.4 L1859.5 827.2 L1860.0 821.1 L1860.5 827.9 L1861.0 820.2 L1861.5 828.2 L1862.0 821.3 L1862.5 826.7 L1863.0 821.0 L1863.5 827.1 L1864.0 820.5 L1864.5 829.1 L1865.0 820.5 L1865.5 829.8 L1866.0 818.3 L1866.5 828.3 L1867.0 819.4 L1867.5 825.4 L1868.0 820.1 L1868.5 825.3 L1869.0 818.8 L1869.5 826.9 L1870.0 820.8 L1870.5 825.4 L1871.0 819.7 L1871.5 827.1 L1872.0 820.5 L1872.5 826.2 L1873.0 819.5 L1873.5 825.9 L1874.0 821.0 L1874.5 825.9 L1875.0 818.4 L1875.5 828.5 L1876.0 821.4 L1876.5 826.5 L1877.0 822.1 L1877.5 826.6 L1878.0 821.2 L1878.5 828.2 L1879.0 820.1 L1879.5 827.6 L1880.0 823.5 L1880.5 827.9 L1881.0 822.1 L1881.5 829.4 L1882.0 821.3 L1882.5 828.3 L1883.0 823.0 L1883.5 828.4 L1884.0 821.2 L1884.5 828.0 L1885.0 823.2 L1885.5 830.4 L1886.0 821.9 L1886.5 827.3 L1887.0 817.7 L1887.5 829.2 L1888.0 822.1 L1888.5 826.7 L1889.0 822.6 L1889.5 826.8 L1890.0 822.2 L1890.5 828.8 L1891.0 818.3 L1891.5 827.4 L1892.0 822.0 L1892.5 828.4 L1893.0 822.1 L1893.5 826.9 L1894.0 820.9 L1894.5 828.1 L1895.0 821.3 L1895.5 826.8 L1896.0 822.0 L1896.5 827.8 L1897.0 821.4 L1897.5 828.2 L1898.0 823.1 L1898.5 832.2 L1899.0 822.1 L1899.5 828.7 L1900.0 822.0 L1900.5 827.6 L1901.0 819.9 L1901.5 827.5 L1902.0 823.3 L1902.5 829.7 L1903.0 823.9 L1903.5 831.5 L1904.0 823.4 L1904.5 829.5 L1905.0 823.3 L1905.5 830.5 L1906.0 824.2 L1906.5 833.0 L1907.0 824.7 L1907.5 828.8 L1908.0 823.8 L1908.5 829.7 L1909.0 823.3 L1909.5 829.8 L1910.0 823.2 L1910.5 831.7 L1911.0 823.0 L1911.5 827.7 L1912.0 820.3 L1912.5 827.9 L1913.0 819.4 L1913.5 829.3 L1914.0 823.2 L1914.5 827.4 L1915.0 823.1 L1915.5 830.0 L1916.0 822.3 L1916.5 827.7 L1917.1 822.4 L1917.6 827.4 L1918.1 822.4 L1918.6 828.7 L1919.1 823.3 L1919.6 831.1 L1920.1 824.1 L1920.6 828.5 L1921.1 820.4 L1921.6 828.4 L1922.1 821.0 L1922.6 828.9 L1923.1 823.1 L1923.6 830.5 L1924.1 823.3 L1924.6 829.2 L1925.1 824.6 L1925.6 833.1 L1926.1 824.0 L1926.6 830.6 L1927.1 823.5 L1927.6 829.5 L1928.1 822.3 L1928.6 829.4 L1929.1 823.7 L1929.6 832.2 L1930.1 825.8 L1930.6 831.3 L1931.1 827.0 L1931.6 834.8 L1932.1 827.1 L1932.6 831.6 L1933.1 822.4 L1933.6 830.2 L1934.1 824.0 L1934.6 831.6 L1935.1 824.1 L1935.6 830.0 L1936.1 824.1 L1936.6 832.3 L1937.1 824.7 L1937.6 829.7 L1938.1 823.1 L1938.6 830.9 L1939.1 824.2 L1939.6 830.2 L1940.1 825.0 L1940.6 831.0 L1941.1 825.2 L1941.6 830.1 L1942.1 824.3 L1942.6 829.4 L1943.1 821.0 L1943.6 829.6 L1944.1 822.7 L1944.6 829.7 L1945.1 824.8 L1945.6 830.5 L1946.1 825.6 L1946.6 830.9 L1947.1 823.9 L1947.6 831.7 L1948.1 824.8 L1948.6 832.7 L1949.1 826.1 L1949.6 831.4 L1950.2 824.3 L1950.7 830.4 L1951.2 826.2 L1951.7 830.7 L1952.2 825.5 L1952.7 830.9 L1953.2 826.4 L1953.7 831.3 L1954.2 826.1 L1954.7 831.3 L1955.2 824.7 L1955.7 830.4 L1956.2 823.6 L1956.7 831.8 L1957.2 824.8 L1957.7 830.1 L1958.2 824.9 L1958.7 829.6 L1959.2 822.6 L1959.7 832.8 L1960.2 825.3 L1960.7 830.3 L1961.2 825.7 L1961.7 831.2 L1962.2 826.4 L1962.7 831.0 L1963.2 824.8 L1963.7 829.6 L1964.2 821.3 L1964.7 830.0 L1965.2 822.3 L1965.7 830.4 L1966.2 823.0 L1966.7 829.4 L1967.2 824.3 L1967.7 832.3 L1968.2 822.5 L1968.7 829.3 L1969.2 822.5 L1969.7 830.4 L1970.2 824.9 L1970.7 830.3 L1971.2 823.8 L1971.7 830.5 L1972.2 824.2 L1972.7 831.2 L1973.2 823.3 L1973.7 829.0 L1974.2 822.7 L1974.7 828.6 L1975.2 823.1 L1975.7 829.7 L1976.2 824.8 L1976.7 829.2 L1977.2 824.4 L1977.7 829.4 L1978.2 825.1 L1978.7 830.5 L1979.2 824.0 L1979.7 831.0 L1980.2 825.5 L1980.7 833.3 L1981.2 822.9 L1981.7 831.1 L1982.2 826.0 L1982.7 833.7 L1983.2 825.9 L1983.7 830.1 L1984.2 824.8 L1984.7 830.1 L1985.2 823.3 L1985.7 831.9 L1986.2 825.3 L1986.7 829.3 L1987.2 825.2 L1987.7 830.8 L1988.2 822.5 L1988.7 830.6 L1989.2 825.9 L1989.7 831.8 L1990.2 825.7 L1990.7 831.1 L1991.2 827.4 L1991.7 833.6 L1992.2 827.3 L1992.7 832.8 L1993.2 828.2 L1993.7 833.3 L1994.1 828.4 L1994.6 833.0 L1995.1 828.1 L1995.6 835.2 L1996.1 827.5 L1996.6 834.4 L1997.1 827.3 L1997.6 831.8 L1998.1 827.5 L1998.6 834.6 L1999.1 827.7 L1999.6 832.7 L2000.1 827.5 L2000.6 833.4 L2001.1 826.3 L2001.6 833.1 L2002.1 827.4 L2002.6 833.3 L2003.1 827.0 L2003.6 832.8 L2004.1 827.7 L2004.6 831.8 L2005.1 827.4 L2005.6 834.8 L2006.1 826.5 L2006.6 833.6 L2007.1 827.8 L2007.6 832.9 L2008.1 827.5 L2008.6 833.4 L2009.1 827.2 L2009.6 831.8 L2010.1 825.3 L2010.6 831.8 L2011.1 825.7 L2011.6 835.7 L2012.1 826.0 L2012.6 831.7 L2013.1 826.8 L2013.6 832.4 L2014.1 826.1 L2014.6 833.5 L2015.1 825.8 L2015.6 835.1 L2016.1 822.3 L2016.6 832.7 L2017.1 826.0 L2017.6 834.4 L2018.1 825.9 L2018.6 831.2 L2019.1 824.8 L2019.6 832.2 L2020.1 825.9 L2020.6 830.3 L2021.1 822.3 L2021.6 830.6 L2022.1 826.3 L2022.6 834.4 L2023.1 825.9 L2023.6 830.9 L2024.1 825.7 L2024.6 830.6 L2025.1 825.7 L2025.6 829.8 L2026.1 825.8 L2026.6 831.3 L2027.1 825.7 L2027.6 832.5 L2028.1 823.6 L2028.6 830.3 L2029.1 825.2 L2029.6 830.2 L2030.1 824.0 L2030.6 830.4 L2031.1 824.7 L2031.6 833.1 L2032.1 825.8 L2032.6 830.7 L2033.1 826.3 L2033.6 830.3 L2034.1 826.1 L2034.6 834.1 L2035.1 823.0 L2035.6 832.6 L2036.1 826.0 L2036.6 831.3 L2037.1 826.5 L2037.6 831.4 L2038.1 824.8 L2038.6 830.9 L2039.1 826.8 L2039.6 833.0 L2040.1 824.8 L2040.6 831.7 L2041.1 826.6 L2041.6 833.2 L2042.1 824.4 L2042.6 831.7 L2043.1 825.5 L2043.6 831.6 L2044.1 826.9 L2044.6 831.5 L2045.1 824.6 L2045.6 834.4 L2046.1 826.5 L2046.6 832.3 L2047.1 824.9 L2047.6 834.8 L2048.0 827.0 L2048.5 833.7 L2049.0 826.1 L2049.5 832.7 L2050.0 827.0 L2050.5 833.4 L2051.0 828.0 L2051.5 832.7 L2052.0 828.7 L2052.5 833.1 L2053.0 828.1 L2053.5 834.6 L2054.0 827.5 L2054.5 834.0 L2055.0 826.2 L2055.5 835.2 L2056.0 827.4 L2056.5 836.0 L2057.0 829.5 L2057.5 834.3 L2058.0 828.9 L2058.5 834.0 L2059.0 829.6 L2059.5 833.7 L2060.0 826.8 L2060.5 834.3 L2061.0 828.5 L2061.5 834.3 L2062.0 826.8 L2062.5 834.3 L2063.0 829.6 L2063.5 836.5 L2064.0 828.3 L2064.5 834.0 L2065.0 829.5 L2065.5 833.6 L2066.0 828.5 L2066.5 834.0 L2067.0 827.7 L2067.5 832.5 L2068.0 827.5 L2068.5 834.3 L2069.0 826.1 L2069.5 837.3 L2070.0 827.6 L2070.5 834.1 L2071.0 829.3 L2071.5 834.0 L2072.0 828.5 L2072.5 835.9 L2073.0 827.5 L2073.5 836.9 L2074.0 828.6 L2074.5 833.3 L2075.0 828.4 L2075.0 837.9 L2075.0 829.5 L2075.1 837.4 L2075.1 833.9 L2075.1 840.1 L2075.1 835.8 L2075.1 843.0 L2075.1 838.5 L2075.2 844.5 L2075.2 840.9 L2075.2 847.9 L2075.2 844.9 L2075.2 850.8 L2075.2 844.6 L2075.2 855.8 L2075.3 848.9 L2075.3 855.8 L2075.3 852.0 L2075.8 859.0 L2076.3 854.3 L2076.8 863.1 L2077.3 854.3 L2077.8 861.6 L2078.3 854.6 L2078.8 861.9 L2079.2 858.0 L2079.7 866.7 L2080.2 855.7 L2080.7 864.8 L2081.2 860.6 L2081.7 867.1 L2082.2 860.5 L2082.7 869.9 L2083.2 863.7 L2083.7 869.2 L2084.2 863.2 L2084.7 871.0 L2085.2 865.7 L2085.7 871.5 L2086.2 862.1 L2086.7 875.3 L2087.2 866.2 L2087.7 871.3 L2088.2 867.0 L2088.7 872.7 L2089.2 866.5 L2089.7 873.4 L2090.2 867.5 L2090.7 875.2 L2091.2 865.7 L2091.7 873.5 L2092.2 866.6 L2092.7 877.6 L2093.2 867.5 L2093.7 874.7 L2094.2 868.9 L2094.7 874.0 L2095.2 869.0 L2095.7 874.6 L2096.2 866.0 L2096.7 877.3 L2097.2 865.7 L2097.7 874.7 L2098.2 869.4 L2098.7 873.9 L2099.2 868.0 L2099.7 876.2 L2100.2 869.4 L2100.7 877.5 L2101.2 867.4 L2101.7 875.9 L2102.2 871.4 L2102.7 878.6 L2103.2 871.7 L2103.7 876.5 L2104.2 870.8 L2104.7 879.2 L2105.2 871.3 L2105.7 879.2 L2106.2 870.5 L2106.7 875.8 L2107.2 871.7 L2107.7 877.5 L2108.2 871.5 L2108.8 877.7 L2109.3 870.6 L2109.8 876.6 L2110.3 871.5 L2110.8 879.5 L2111.3 869.8 L2111.8 875.6 L2112.3 868.9 L2112.8 874.8 L2113.3 868.9 L2113.8 874.2 L2114.3 868.4 L2114.8 875.4 L2115.3 869.4 L2115.8 876.8 L2116.3 865.9 L2116.8 874.9 L2117.3 868.9 L2117.8 874.6 L2118.3 867.3 L2118.8 874.4 L2119.3 869.4 L2119.8 873.8 L2120.3 869.0 L2120.8 875.6 L2121.3 868.4 L2121.8 874.2 L2122.3 869.5 L2122.9 875.8 L2123.4 865.7 L2123.9 874.8 L2124.4 867.9 L2124.9 874.6 L2125.4 866.3 L2125.9 876.9 L2126.4 866.5 L2126.9 874.6 L2127.4 868.3 L2127.9 874.5 L2128.4 869.6 L2128.9 876.7 L2129.4 869.3 L2129.9 872.3 L2130.3 864.1 L2130.8 869.2 L2131.3 862.3 L2131.8 869.9 L2132.3 863.8 L2132.8 870.3 L2133.3 863.1 L2133.8 871.8 L2134.3 861.3 L2134.8 871.5 L2135.3 864.0 L2135.8 871.4 L2136.3 860.1 L2136.8 869.8 L2137.3 863.4 L2137.8 870.3 L2138.3 864.3 L2138.8 871.4 L2139.3 863.5 L2139.8 869.5 L2140.3 862.9 L2140.8 871.6 L2141.3 862.0 L2141.8 870.4 L2142.3 862.4 L2142.8 870.0 L2143.3 865.2 L2143.8 870.7 L2144.2 864.2 L2144.7 875.8 L2145.2 864.4 L2145.7 871.6 L2146.2 865.7 L2146.7 872.9 L2147.2 864.2 L2147.7 871.2 L2148.2 864.1 L2148.7 873.1 L2149.2 865.0 L2149.7 871.9 L2150.2 866.1 L2150.7 874.1 L2151.2 864.7 L2151.7 871.1 L2152.2 860.6 L2152.7 872.8 L2153.2 863.8 L2153.7 870.4 L2154.2 863.9 L2154.7 869.3 L2155.2 862.8 L2155.7 870.1 L2156.2 864.6 L2156.7 872.0 L2157.2 863.4 L2157.7 869.3 L2158.2 864.2 L2158.7 869.9 L2159.2 863.8 L2159.7 875.1 L2160.2 862.3 L2160.7 870.8 L2161.2 862.1 L2161.7 869.8 L2162.2 859.5 L2162.7 869.8 L2163.2 863.8 L2163.7 870.1 L2164.2 863.4 L2164.7 870.2 L2165.2 864.1 L2165.7 869.6 L2166.2 861.9 L2166.7 868.4 L2167.2 860.0 L2167.8 870.1 L2168.3 863.9 L2168.8 873.9 L2169.3 863.8 L2169.8 869.6 L2170.3 862.5 L2170.8 868.3 L2171.3 861.8 L2171.8 872.1 L2172.3 860.5 L2172.8 869.3 L2173.3 862.9 L2173.8 868.6 L2174.3 861.1 L2174.8 869.0 L2175.3 861.9 L2175.8 870.5 L2176.3 861.2 L2176.8 869.9 L2177.3 860.5 L2177.8 870.2 L2178.3 861.1 L2178.8 873.5 L2179.3 864.6 L2179.8 870.6 L2180.3 862.6 L2180.8 869.3 L2181.3 864.2 L2181.8 870.3 L2182.3 863.6 L2182.8 871.9 L2183.3 863.9 L2183.8 869.4 L2184.3 860.5 L2184.8 868.2 L2185.3 860.4 L2185.8 868.9 L2186.3 862.8 L2186.8 868.5 L2187.3 863.2 L2187.8 870.9 L2188.3 860.1 L2188.9 871.3 L2189.4 862.8 L2189.9 872.0 L2190.4 865.0 L2190.9 869.9 L2191.4 864.9 L2191.9 871.6 L2192.4 864.4 L2192.9 871.5 L2193.4 863.4 L2193.9 872.9 L2194.4 864.5 L2194.9 872.2 L2195.4 863.9 L2195.9 870.7 L2196.4 864.6 L2196.9 873.3 L2197.4 862.6 L2197.9 869.6 L2198.4 864.8 L2198.9 866.4" stroke="#ff0000" stroke-width="1.0" fill="none"/>
<path d="M997.0 463.5 L1000.0 464.5 L1003.1 463.5 L1006.1 464.5 L1009.1 464.5 L1012.1 463.5 L1015.2 464.5 L1018.2 464.5 L1021.2 464.5 L1024.3 463.5 L1027.3 464.5 L1030.3 464.5 L1033.4 464.5 L1036.4 464.5 L1039.4 464.5 L1042.4 464.5 L1045.5 464.5 L1048.5 464.5 L1051.5 464.5 L1054.6 464.5 L1057.6 464.5 L1060.6 464.5 L1063.6 465.5 L1066.7 464.5 L1069.7 464.5 L1072.7 464.5 L1075.8 464.5 L1078.8 464.5 L1081.8 465.5 L1084.9 465.5 L1087.9 464.5 L1090.9 464.5 L1093.9 464.5 L1097.0 465.5 L1100.0 465.5 L1103.0 464.5 L1106.1 465.5 L1109.1 465.5 L1112.1 464.5 L1115.2 465.5 L1118.2 464.5 L1121.2 464.5 L1124.2 464.5 L1127.3 464.5 L1130.3 463.5 L1133.3 464.5 L1136.4 464.5 L1139.4 464.5 L1142.4 463.5 L1145.5 464.5 L1148.5 464.5 L1151.5 463.5 L1154.5 463.5 L1157.6 463.5 L1160.6 464.5 L1163.6 464.5 L1166.7 463.5 L1169.7 463.5 L1172.7 463.5 L1175.8 463.5 L1178.8 463.5 L1181.8 463.5 L1184.8 462.5 L1187.9 462.5 L1190.9 463.5 L1193.9 462.5 L1197.0 463.5 L1200.0 462.5 L1203.0 463.5 L1206.0 463.5 L1209.0 463.5 L1212.0 462.5 L1215.0 463.5 L1218.0 462.5 L1221.0 463.5 L1224.0 462.5 L1227.0 463.5 L1230.0 462.5 L1233.0 462.5 L1236.0 462.5 L1239.0 462.5 L1242.0 463.5 L1245.0 463.5 L1248.0 463.5 L1251.0 462.5 L1254.0 463.5 L1257.0 463.5 L1260.0 463.5 L1263.0 462.5 L1266.0 463.5 L1269.0 462.5 L1272.0 463.5 L1275.0 462.5 L1278.0 463.5 L1281.0 462.5 L1284.0 462.5 L1287.0 462.5 L1290.0 462.5 L1293.0 463.5 L1296.0 462.5 L1299.0 463.5 L1302.0 462.5 L1305.0 463.5 L1308.0 463.5 L1311.0 463.5 L1314.0 463.5 L1317.0 462.5 L1320.0 462.5 L1323.0 462.5 L1326.0 463.5 L1329.0 462.5 L1332.0 462.5 L1335.0 462.5 L1338.0 463.5 L1341.0 462.5 L1344.0 463.5 L1347.0 462.5 L1350.0 462.5 L1353.0 462.5 L1356.0 463.5 L1359.0 462.5 L1362.0 462.5 L1365.0 463.5 L1368.0 463.5 L1370.4 472.5 L1374.0 486.5 L1378.0 496.5 L1382.0 508.5 L1385.2 511.5 L1388.3 515.5 L1391.5 518.5 L1394.7 523.5 L1398.2 525.5 L1401.7 528.5 L1405.1 531.5 L1408.6 534.5 L1412.1 536.5 L1415.5 538.5 L1419.0 541.5 L1422.5 542.5 L1426.0 543.5 L1429.4 544.5 L1432.9 545.5 L1436.4 546.5 L1439.8 546.5 L1443.3 548.5 L1445.8 563.5 L1449.4 570.5 L1453.1 578.5 L1456.7 585.5 L1460.0 589.5 L1463.3 593.5 L1466.7 597.5 L1470.0 601.5 L1473.3 605.5 L1476.6 608.5 L1480.0 611.5 L1483.3 613.5 L1486.7 616.5 L1490.0 619.5 L1493.3 621.5 L1496.7 623.5 L1500.0 625.5 L1503.4 626.5 L1506.7 628.5 L1510.0 628.5 L1513.3 629.5 L1516.7 630.5 L1520.0 631.5 L1523.3 631.5 L1526.4 632.5 L1529.4 632.5 L1532.5 631.5 L1535.5 632.5 L1538.6 632.5 L1541.7 632.5 L1544.7 632.5 L1547.8 632.5 L1550.8 632.5 L1553.9 632.5 L1556.9 633.5 L1560.0 633.5 L1563.2 633.5 L1566.5 634.5 L1569.7 634.5 L1572.9 633.5 L1576.1 634.5 L1579.4 635.5 L1582.6 634.5 L1585.8 635.5 L1589.0 636.5 L1592.3 636.5 L1595.5 636.5 L1598.6 635.5 L1601.7 635.5 L1604.8 636.5 L1607.9 636.5 L1611.0 636.5 L1614.1 636.5 L1617.1 636.5 L1620.2 636.5 L1623.3 637.5 L1626.4 636.5 L1629.5 637.5 L1632.6 636.5 L1635.7 636.5 L1638.8 637.5 L1641.9 637.5 L1645.0 636.5 L1648.1 637.5 L1651.2 637.5 L1654.3 638.5 L1657.4 638.5 L1660.4 637.5 L1663.5 638.5 L1666.6 638.5 L1669.7 637.5 L1672.8 638.5 L1675.9 638.5 L1679.0 638.5 L1682.2 639.5 L1685.4 638.5 L1688.7 639.5 L1691.9 639.5 L1695.1 638.5 L1698.3 639.5 L1701.6 639.5 L1704.8 638.5 L1708.0 638.5 L1709.4 650.5 L1713.6 657.5 L1716.8 660.5 L1720.0 661.5 L1723.2 661.5 L1726.4 661.5 L1729.6 661.5 L1732.8 661.5 L1736.1 660.5 L1739.3 660.5 L1742.5 660.5 L1745.7 659.5 L1748.9 660.5 L1752.1 660.5 L1755.3 659.5 L1758.5 659.5 L1761.7 658.5 L1765.0 658.5 L1768.3 656.5 L1771.7 655.5 L1775.0 654.5 L1778.3 653.5 L1781.5 653.5 L1784.8 654.5 L1788.0 656.5 L1791.3 657.5 L1794.5 658.5 L1797.8 658.5 L1800.8 655.5 L1803.9 652.5 L1807.0 650.5 L1810.0 647.5 L1813.5 643.5 L1817.0 638.5 L1820.2 640.5 L1823.4 641.5 L1826.7 643.5 L1829.9 643.5 L1833.1 645.5 L1836.3 645.5 L1839.6 647.5 L1842.8 648.5 L1846.0 649.5 L1849.2 649.5 L1852.5 651.5 L1855.7 652.5 L1858.9 652.5 L1862.0 653.5 L1865.0 655.5 L1868.1 655.5 L1871.1 656.5 L1874.2 657.5 L1877.2 658.5 L1880.3 659.5 L1883.3 660.5 L1886.4 660.5 L1889.5 661.5 L1892.5 662.5 L1895.6 663.5 L1898.6 664.5 L1901.7 665.5 L1904.7 666.5 L1907.8 667.5 L1910.8 667.5 L1913.9 668.5 L1916.9 669.5 L1920.0 670.5 L1923.1 670.5 L1926.2 671.5 L1929.3 671.5 L1932.5 672.5 L1935.6 672.5 L1938.7 673.5 L1941.8 674.5 L1944.9 674.5 L1948.0 674.5 L1951.1 675.5 L1954.2 676.5 L1957.4 676.5 L1960.5 676.5 L1963.6 677.5 L1966.7 678.5 L1969.8 678.5 L1973.0 678.5 L1976.1 679.5 L1979.2 679.5 L1982.3 679.5 L1985.5 679.5 L1988.6 680.5 L1991.7 680.5 L1994.8 680.5 L1998.0 680.5 L2001.1 680.5 L2004.2 681.5 L2007.3 681.5 L2010.5 681.5 L2013.6 681.5 L2016.7 682.5 L2019.8 682.5 L2022.8 682.5 L2025.9 682.5 L2029.0 683.5 L2032.0 682.5 L2035.1 684.5 L2038.2 683.5 L2041.2 683.5 L2044.3 684.5 L2047.4 684.5 L2050.5 684.5 L2053.5 684.5 L2056.6 684.5 L2059.7 684.5 L2062.7 684.5 L2065.8 685.5 L2068.9 685.5 L2071.9 685.5 L2075.0 685.5 L2079.2 691.5 L2083.3 696.5 L2086.4 698.5 L2089.4 699.5 L2092.5 701.5 L2095.6 702.5 L2098.6 704.5 L2101.7 706.5 L2105.1 708.5 L2108.6 710.5 L2112.1 713.5 L2115.5 715.5 L2119.0 720.5 L2122.4 724.5 L2125.9 729.5 L2129.4 733.5 L2132.9 737.5 L2136.4 740.5 L2139.8 743.5 L2143.3 746.5 L2146.8 747.5 L2150.2 749.5 L2153.7 749.5 L2157.1 751.5 L2160.6 752.5 L2164.0 754.5 L2167.2 754.5 L2170.3 754.5 L2173.5 755.5 L2176.7 755.5 L2179.9 756.5 L2183.0 756.5 L2186.2 756.5 L2189.4 757.5 L2192.6 758.5 L2195.7 758.5 L2198.9 758.5" stroke="#ffa500" stroke-width="1.1" fill="none" stroke-linejoin="round"/>
<path d="M997.0 538.8 L997.5 532.4 L998.0 537.9 L998.5 530.4 L999.0 538.3 L999.5 534.0 L1000.0 538.4 L1000.5 533.8 L1001.0 538.0 L1001.5 533.1 L1002.0 537.3 L1002.5 534.1 L1003.0 539.3 L1003.5 530.5 L1004.0 540.7 L1004.5 533.5 L1005.0 541.7 L1005.5 533.5 L1006.0 538.9 L1006.5 533.9 L1007.0 542.9 L1007.5 531.2 L1008.0 542.5 L1008.5 532.9 L1009.0 537.8 L1009.5 532.8 L1010.0 538.3 L1010.5 531.7 L1011.0 539.5 L1011.5 532.7 L1012.0 538.9 L1012.5 533.3 L1013.0 537.3 L1013.5 532.2 L1014.0 538.0 L1014.5 531.2 L1015.0 538.2 L1015.5 530.5 L1016.0 537.2 L1016.5 532.5 L1017.0 539.1 L1017.5 533.0 L1018.0 536.8 L1018.5 531.0 L1019.0 536.9 L1019.5 529.6 L1020.0 537.5 L1020.5 531.4 L1021.0 537.0 L1021.5 530.6 L1022.0 537.9 L1022.5 531.5 L1023.0 535.7 L1023.5 530.4 L1024.0 537.4 L1024.5 531.3 L1025.0 538.9 L1025.5 530.8 L1026.0 535.6 L1026.5 531.6 L1027.0 535.6 L1027.5 531.1 L1028.0 535.6 L1028.5 532.1 L1029.0 536.9 L1029.5 532.0 L1030.0 536.0 L1030.5 531.8 L1031.0 538.6 L1031.5 532.5 L1032.0 537.6 L1032.5 530.1 L1033.0 538.9 L1033.5 532.0 L1034.0 538.7 L1034.5 532.6 L1035.0 538.0 L1035.5 533.1 L1036.0 540.0 L1036.5 532.8 L1037.0 539.2 L1037.5 532.5 L1038.0 538.6 L1038.5 533.2 L1039.0 540.9 L1039.5 532.7 L1040.0 540.2 L1040.5 532.9 L1041.0 537.7 L1041.5 531.8 L1042.0 539.5 L1042.5 529.8 L1043.0 538.0 L1043.5 530.2 L1044.0 540.6 L1044.5 531.6 L1045.0 537.1 L1045.5 532.7 L1046.0 537.5 L1046.5 531.9 L1047.0 538.1 L1047.5 533.1 L1048.0 538.6 L1048.5 531.4 L1049.0 540.8 L1049.5 532.7 L1050.0 537.6 L1050.5 532.7 L1051.0 538.1 L1051.5 531.3 L1052.0 538.6 L1052.5 531.9 L1053.0 538.2 L1053.5 532.5 L1054.0 537.6 L1054.5 533.7 L1055.0 537.7 L1055.5 531.2 L1056.0 537.2 L1056.5 532.2 L1057.0 537.1 L1057.5 531.5 L1058.0 536.8 L1058.5 530.9 L1059.0 536.9 L1059.5 530.5 L1060.0 537.6 L1060.5 531.3 L1061.0 538.3 L1061.5 532.2 L1062.0 538.2 L1062.5 531.4 L1063.0 539.2 L1063.5 530.4 L1064.0 537.8 L1064.5 531.1 L1065.0 538.9 L1065.5 534.0 L1066.0 541.9 L1066.5 534.6 L1067.0 538.5 L1067.5 532.0 L1068.0 541.0 L1068.5 531.5 L1069.0 538.1 L1069.5 534.7 L1070.0 539.1 L1070.5 534.7 L1071.0 538.4 L1071.5 534.1 L1072.0 538.4 L1072.5 533.0 L1073.0 540.0 L1073.5 533.9 L1074.0 538.0 L1074.5 533.6 L1075.0 538.2 L1075.5 531.2 L1076.0 538.5 L1076.5 532.4 L1077.0 537.5 L1077.5 532.4 L1078.0 539.3 L1078.5 532.8 L1079.0 538.1 L1079.5 532.8 L1080.0 539.5 L1080.5 532.8 L1081.0 537.5 L1081.5 533.8 L1082.0 537.5 L1082.5 533.4 L1083.0 539.7 L1083.5 533.3 L1084.0 538.3 L1084.5 534.4 L1085.0 539.1 L1085.5 532.8 L1086.0 539.7 L1086.5 533.9 L1087.0 539.3 L1087.5 532.0 L1088.0 538.1 L1088.5 533.4 L1089.0 539.2 L1089.5 532.3 L1090.0 538.3 L1090.5 529.4 L1091.0 539.4 L1091.5 529.0 L1092.0 538.3 L1092.5 529.0 L1093.0 538.3 L1093.5 531.5 L1094.0 536.8 L1094.5 531.8 L1095.0 536.5 L1095.5 531.0 L1096.0 535.8 L1096.5 529.6 L1097.0 536.9 L1097.5 533.2 L1098.0 537.8 L1098.5 531.3 L1099.0 538.0 L1099.5 533.3 L1100.0 539.7 L1100.5 534.0 L1101.0 537.7 L1101.5 532.0 L1102.0 539.9 L1102.5 528.8 L1103.0 537.8 L1103.5 530.6 L1104.0 536.6 L1104.5 531.6 L1105.0 537.0 L1105.5 532.3 L1106.0 537.0 L1106.5 529.6 L1107.0 536.0 L1107.5 530.1 L1108.0 537.1 L1108.5 529.7 L1109.0 535.6 L1109.5 530.7 L1110.0 536.6 L1110.5 531.0 L1111.0 537.2 L1111.5 531.3 L1112.0 536.3 L1112.5 530.9 L1113.0 536.2 L1113.5 532.5 L1114.0 538.6 L1114.5 531.5 L1115.0 536.8 L1115.5 532.4 L1116.0 537.8 L1116.5 532.6 L1117.0 538.8 L1117.5 530.7 L1118.0 537.3 L1118.5 531.3 L1119.0 536.1 L1119.5 531.1 L1120.0 538.0 L1120.5 532.5 L1121.0 537.8 L1121.5 532.5 L1122.0 538.6 L1122.5 530.0 L1123.0 538.2 L1123.5 530.2 L1124.0 537.5 L1124.5 530.3 L1125.0 536.1 L1125.5 529.7 L1126.0 539.4 L1126.5 532.9 L1127.0 536.7 L1127.5 531.8 L1128.0 537.3 L1128.5 532.1 L1129.0 539.5 L1129.5 532.7 L1130.0 537.5 L1130.5 532.6 L1131.0 537.1 L1131.5 532.5 L1132.0 537.8 L1132.5 532.0 L1133.0 537.7 L1133.5 532.1 L1134.0 541.2 L1134.5 533.2 L1135.0 539.3 L1135.5 533.2 L1136.0 540.1 L1136.5 534.1 L1137.0 539.3 L1137.5 530.0 L1138.0 539.3 L1138.5 533.6 L1139.0 538.1 L1139.5 532.8 L1140.0 537.3 L1140.5 530.4 L1141.0 537.9 L1141.5 533.5 L1142.0 537.1 L1142.5 532.2 L1143.0 538.5 L1143.5 532.4 L1144.0 538.2 L1144.5 532.1 L1145.0 539.0 L1145.5 529.3 L1146.0 537.5 L1146.5 530.3 L1147.0 536.1 L1147.5 532.0 L1148.0 536.3 L1148.5 532.2 L1149.0 538.5 L1149.5 532.6 L1150.0 537.4 L1150.5 529.9 L1151.0 540.1 L1151.5 529.2 L1152.0 537.4 L1152.5 532.0 L1153.0 540.0 L1153.5 532.4 L1154.0 538.8 L1154.5 533.5 L1155.0 537.2 L1155.5 529.9 L1156.0 537.3 L1156.5 531.2 L1157.0 535.4 L1157.5 532.0 L1158.0 535.2 L1158.5 528.3 L1159.0 535.7 L1159.5 528.4 L1160.0 536.3 L1160.5 531.7 L1161.0 536.3 L1161.5 530.7 L1162.0 535.4 L1162.5 530.4 L1163.0 536.7 L1163.5 531.3 L1164.0 535.7 L1164.5 531.5 L1165.0 538.0 L1165.5 532.1 L1166.0 538.6 L1166.5 528.8 L1167.0 537.2 L1167.5 533.2 L1168.0 536.9 L1168.5 530.9 L1169.0 538.1 L1169.5 530.1 L1170.0 538.9 L1170.5 530.9 L1171.0 537.4 L1171.5 531.7 L1172.0 536.6 L1172.5 532.3 L1173.0 538.6 L1173.5 532.6 L1174.0 537.5 L1174.5 531.6 L1175.0 540.8 L1175.5 530.6 L1176.0 540.7 L1176.5 533.2 L1177.0 537.6 L1177.5 532.7 L1178.0 537.9 L1178.5 529.5 L1179.0 537.5 L1179.5 532.4 L1180.0 537.4 L1180.5 532.2 L1181.0 539.6 L1181.5 533.2 L1182.0 537.7 L1182.5 533.6 L1183.0 538.5 L1183.5 531.7 L1184.0 537.7 L1184.5 533.1 L1185.0 538.3 L1185.5 532.8 L1186.0 537.6 L1186.5 531.7 L1187.0 538.9 L1187.5 532.4 L1188.0 538.6 L1188.5 533.0 L1189.0 537.0 L1189.5 528.8 L1190.0 539.8 L1190.5 533.0 L1191.0 537.8 L1191.5 533.5 L1192.0 541.6 L1192.5 533.1 L1193.0 541.5 L1193.5 532.6 L1194.0 539.2 L1194.5 533.9 L1195.0 538.8 L1195.5 531.7 L1196.0 539.5 L1196.5 532.0 L1197.0 538.1 L1197.5 533.6 L1198.0 538.8 L1198.5 532.7 L1199.0 541.3 L1199.5 530.6 L1200.0 537.4 L1200.5 533.2 L1201.0 537.8 L1201.5 531.2 L1202.0 538.9 L1202.5 533.2 L1203.0 538.1 L1203.5 532.7 L1204.0 538.1 L1204.5 532.5 L1205.0 540.6 L1205.5 531.7 L1206.0 537.7 L1206.5 531.8 L1207.0 537.6 L1207.5 530.8 L1208.0 537.2 L1208.5 532.9 L1209.0 537.9 L1209.5 533.3 L1210.0 537.3 L1210.5 532.1 L1211.0 537.0 L1211.5 531.4 L1212.0 538.0 L1212.5 528.4 L1213.0 537.6 L1213.5 532.2 L1214.0 536.3 L1214.5 532.1 L1215.0 537.1 L1215.5 528.7 L1216.0 538.0 L1216.5 531.9 L1217.0 540.0 L1217.5 532.4 L1218.0 537.3 L1218.5 532.7 L1219.0 538.2 L1219.5 530.0 L1220.0 536.8 L1220.5 532.6 L1221.0 538.5 L1221.5 533.4 L1222.0 537.6 L1222.5 532.1 L1223.0 538.3 L1223.5 533.5 L1224.0 537.7 L1224.5 532.1 L1225.0 537.6 L1225.5 534.3 L1226.0 538.2 L1226.5 533.7 L1227.0 538.6 L1227.5 532.0 L1228.0 539.0 L1228.5 531.3 L1229.0 538.1 L1229.5 534.0 L1230.0 540.9 L1230.5 533.2 L1231.0 538.2 L1231.5 534.3 L1232.0 540.9 L1232.5 532.4 L1233.0 538.2 L1233.5 530.5 L1234.0 539.5 L1234.5 534.5 L1235.0 540.7 L1235.5 535.5 L1236.0 542.2 L1236.5 533.6 L1237.0 540.3 L1237.5 531.9 L1238.0 540.3 L1238.5 533.7 L1239.0 539.9 L1239.5 535.2 L1240.0 540.6 L1240.5 532.5 L1241.0 539.6 L1241.5 534.0 L1242.0 539.8 L1242.5 531.1 L1243.0 538.9 L1243.5 535.0 L1244.0 538.8 L1244.5 534.8 L1245.0 540.5 L1245.5 534.4 L1246.0 539.2 L1246.5 534.3 L1247.0 542.2 L1247.5 533.0 L1248.0 539.3 L1248.5 533.1 L1249.0 539.8 L1249.5 534.1 L1250.0 538.7 L1250.5 534.1 L1251.0 538.7 L1251.5 532.5 L1252.0 538.6 L1252.5 534.2 L1253.0 542.1 L1253.5 532.3 L1254.0 538.1 L1254.5 533.6 L1255.0 538.1 L1255.5 533.0 L1256.0 537.7 L1256.5 533.5 L1257.0 537.4 L1257.5 533.6 L1258.0 538.4 L1258.5 530.6 L1259.0 538.3 L1259.5 531.8 L1260.0 537.4 L1260.5 532.9 L1261.0 537.9 L1261.5 533.1 L1262.0 537.8 L1262.5 531.7 L1263.0 538.4 L1263.5 530.8 L1264.0 537.2 L1264.5 532.8 L1265.0 537.0 L1265.5 532.5 L1266.0 536.9 L1266.5 532.5 L1267.0 537.9 L1267.5 533.2 L1268.0 538.6 L1268.5 532.1 L1269.0 538.6 L1269.5 529.5 L1270.0 536.8 L1270.5 532.4 L1271.0 537.1 L1271.5 533.1 L1272.0 538.6 L1272.5 531.6 L1273.0 538.6 L1273.5 532.6 L1274.0 537.3 L1274.5 530.3 L1275.0 537.2 L1275.5 530.9 L1276.0 540.4 L1276.5 532.4 L1277.0 538.0 L1277.5 532.3 L1278.0 536.9 L1278.5 532.1 L1279.0 535.9 L1279.5 531.7 L1280.0 535.6 L1280.5 530.3 L1281.0 535.3 L1281.5 531.0 L1282.0 535.3 L1282.5 530.0 L1283.0 535.9 L1283.5 528.5 L1284.0 536.3 L1284.5 529.9 L1285.0 536.3 L1285.5 529.8 L1286.0 536.0 L1286.5 530.7 L1287.0 536.7 L1287.5 530.1 L1288.0 536.0 L1288.5 530.3 L1289.0 536.0 L1289.5 530.5 L1290.0 535.9 L1290.5 529.0 L1291.0 535.4 L1291.5 530.6 L1292.0 536.6 L1292.5 530.7 L1293.0 535.7 L1293.5 531.2 L1294.0 534.8 L1294.5 529.7 L1295.0 534.7 L1295.5 531.1 L1296.0 535.5 L1296.5 530.4 L1297.0 537.1 L1297.5 530.6 L1298.0 536.0 L1298.5 531.9 L1299.0 539.8 L1299.5 531.3 L1300.0 537.9 L1300.5 530.5 L1301.0 535.8 L1301.5 528.2 L1302.0 536.2 L1302.5 530.9 L1303.0 536.1 L1303.5 530.8 L1304.0 536.4 L1304.5 529.7 L1305.0 535.4 L1305.5 530.6 L1306.0 535.2 L1306.5 530.6 L1307.0 537.0 L1307.5 529.4 L1308.0 535.8 L1308.5 530.5 L1309.0 536.3 L1309.5 531.5 L1310.0 537.5 L1310.5 531.1 L1311.0 535.9 L1311.5 531.7 L1312.0 537.3 L1312.5 530.1 L1313.0 537.9 L1313.5 531.3 L1314.0 536.5 L1314.5 531.2 L1315.0 538.7 L1315.5 531.7 L1316.0 539.8 L1316.5 531.2 L1317.0 538.8 L1317.5 530.7 L1318.0 536.8 L1318.5 530.6 L1319.0 535.5 L1319.5 529.2 L1320.0 536.1 L1320.5 531.1 L1321.0 537.7 L1321.5 531.5 L1322.0 536.0 L1322.5 528.2 L1323.0 536.0 L1323.5 529.3 L1324.0 535.5 L1324.5 530.3 L1325.0 536.8 L1325.5 530.5 L1326.0 536.5 L1326.5 533.0 L1327.0 538.1 L1327.5 532.5 L1328.0 536.2 L1328.5 532.2 L1329.0 537.3 L1329.5 530.9 L1330.0 536.3 L1330.5 531.3 L1331.0 537.0 L1331.5 530.7 L1332.0 536.4 L1332.5 531.5 L1333.0 537.7 L1333.5 531.5 L1334.0 535.7 L1334.5 529.5 L1335.0 536.1 L1335.5 530.1 L1336.0 536.2 L1336.5 531.9 L1337.0 536.3 L1337.5 532.0 L1338.0 536.0 L1338.5 529.9 L1339.0 536.1 L1339.5 529.5 L1340.0 535.7 L1340.5 530.8 L1341.0 535.2 L1341.5 530.1 L1342.0 536.1 L1342.5 531.5 L1343.0 537.2 L1343.5 530.1 L1344.0 536.2 L1344.5 531.0 L1345.0 538.7 L1345.5 530.3 L1346.0 537.2 L1346.5 531.2 L1347.0 536.3 L1347.5 531.4 L1348.0 537.8 L1348.5 532.3 L1349.0 538.9 L1349.5 531.8 L1350.0 536.8 L1350.5 533.0 L1351.0 538.7 L1351.5 531.1 L1352.0 538.4 L1352.5 532.9 L1353.0 539.2 L1353.5 533.1 L1354.0 537.4 L1354.5 531.6 L1355.0 536.9 L1355.5 529.3 L1356.0 538.6 L1356.5 531.0 L1357.0 537.8 L1357.5 533.4 L1358.0 538.0 L1358.5 533.7 L1359.0 539.6 L1359.5 533.7 L1360.0 541.5 L1360.5 534.4 L1361.0 541.7 L1361.5 532.8 L1362.0 540.0 L1362.5 533.6 L1363.0 538.8 L1363.5 532.6 L1364.0 538.3 L1364.5 530.8 L1365.0 539.8 L1365.5 534.2 L1366.0 538.9 L1366.5 533.1 L1367.0 540.9 L1367.5 533.0 L1368.0 540.5 L1368.6 536.4 L1369.1 542.5 L1369.7 540.0 L1370.1 546.8 L1370.5 541.6 L1371.0 548.3 L1371.4 545.4 L1371.8 551.0 L1372.2 547.9 L1372.6 553.1 L1373.1 549.9 L1373.5 558.1 L1373.9 554.2 L1374.4 559.5 L1374.9 556.0 L1375.4 561.6 L1375.9 559.6 L1376.4 565.0 L1376.9 561.8 L1377.3 565.9 L1377.8 563.0 L1378.3 569.7 L1378.8 564.9 L1379.3 571.6 L1379.8 567.7 L1380.3 572.8 L1380.8 569.2 L1381.3 576.0 L1381.8 572.7 L1382.3 576.4 L1382.8 572.9 L1383.3 578.1 L1383.8 572.2 L1384.3 579.0 L1384.8 576.9 L1385.3 580.9 L1385.8 578.0 L1386.3 582.7 L1386.8 581.3 L1387.3 586.9 L1387.8 581.6 L1388.2 589.4 L1388.7 583.8 L1389.2 589.8 L1389.7 586.3 L1390.2 590.5 L1390.7 588.5 L1391.2 593.4 L1391.7 589.9 L1392.2 595.6 L1392.7 591.4 L1393.2 596.9 L1393.7 595.0 L1394.2 599.1 L1394.7 597.4 L1395.2 600.5 L1395.7 597.8 L1396.2 602.4 L1396.7 597.8 L1397.2 603.3 L1397.7 599.1 L1398.2 603.8 L1398.7 599.1 L1399.2 604.8 L1399.7 601.7 L1400.2 605.7 L1400.7 602.8 L1401.2 609.3 L1401.7 604.8 L1402.1 609.1 L1402.6 605.4 L1403.1 609.9 L1403.6 606.9 L1404.1 611.3 L1404.6 607.5 L1405.1 612.3 L1405.6 607.5 L1406.1 612.6 L1406.6 609.0 L1407.1 614.3 L1407.6 610.0 L1408.1 613.8 L1408.6 610.5 L1409.1 615.7 L1409.6 610.2 L1410.1 615.7 L1410.6 612.1 L1411.1 615.6 L1411.6 611.8 L1412.1 618.3 L1412.6 612.9 L1413.1 617.8 L1413.6 610.4 L1414.1 616.5 L1414.6 613.9 L1415.1 617.3 L1415.5 613.6 L1416.0 618.2 L1416.5 613.4 L1417.0 618.4 L1417.5 615.0 L1418.0 620.5 L1418.5 615.1 L1419.0 623.2 L1419.5 616.4 L1420.0 621.3 L1420.5 617.4 L1421.0 621.8 L1421.5 615.3 L1422.0 621.0 L1422.5 618.3 L1423.0 622.1 L1423.5 618.2 L1424.0 621.4 L1424.5 618.1 L1425.0 621.7 L1425.5 615.3 L1426.0 621.9 L1426.5 616.2 L1427.0 621.1 L1427.5 615.6 L1427.9 621.9 L1428.4 618.2 L1428.9 621.3 L1429.4 617.8 L1429.9 622.5 L1430.4 617.6 L1430.9 625.4 L1431.4 618.6 L1431.9 624.9 L1432.4 619.0 L1432.9 622.8 L1433.4 618.5 L1433.9 622.4 L1434.4 618.4 L1434.9 622.8 L1435.4 616.9 L1435.9 623.4 L1436.4 619.7 L1436.9 623.4 L1437.4 617.2 L1437.9 622.9 L1438.3 619.0 L1438.8 624.2 L1439.3 619.3 L1439.8 623.0 L1440.3 619.3 L1440.8 623.7 L1441.3 620.1 L1441.8 623.5 L1442.3 619.8 L1442.8 625.3 L1443.3 621.3 L1443.4 627.4 L1443.5 623.6 L1443.6 629.8 L1443.7 623.9 L1443.7 630.5 L1443.8 627.9 L1443.9 633.5 L1444.0 631.4 L1444.1 636.3 L1444.2 634.1 L1444.3 638.7 L1444.3 636.5 L1444.4 642.2 L1444.5 639.3 L1444.6 644.2 L1444.7 640.9 L1445.2 648.8 L1445.7 643.5 L1446.2 650.3 L1446.7 646.1 L1447.2 653.9 L1447.7 648.9 L1448.1 654.2 L1448.6 652.2 L1449.1 658.2 L1449.6 654.1 L1450.1 660.6 L1450.6 656.7 L1451.1 661.3 L1451.6 657.3 L1452.1 664.4 L1452.6 659.6 L1453.1 667.7 L1453.6 662.2 L1454.0 667.2 L1454.5 665.4 L1455.0 671.4 L1455.5 666.5 L1456.0 674.1 L1456.5 668.3 L1457.0 676.3 L1457.5 671.5 L1458.0 675.4 L1458.5 672.5 L1459.0 678.8 L1459.5 672.7 L1460.0 678.2 L1460.5 672.8 L1461.0 678.5 L1461.5 675.4 L1462.0 679.9 L1462.5 675.5 L1463.0 681.1 L1463.5 676.6 L1464.0 681.6 L1464.5 677.1 L1465.0 683.5 L1465.5 678.9 L1466.0 683.5 L1466.5 680.3 L1467.0 684.4 L1467.5 680.7 L1468.0 685.4 L1468.5 682.1 L1469.0 688.1 L1469.5 682.3 L1470.0 687.3 L1470.5 683.1 L1471.0 691.6 L1471.5 684.7 L1472.0 688.5 L1472.5 684.9 L1473.0 689.8 L1473.5 684.5 L1474.0 689.6 L1474.5 685.4 L1475.0 690.4 L1475.5 684.7 L1476.0 691.2 L1476.5 685.2 L1477.0 692.1 L1477.5 685.6 L1478.0 691.7 L1478.5 688.3 L1479.0 693.5 L1479.5 686.9 L1480.0 695.5 L1480.5 687.8 L1481.0 692.1 L1481.5 688.8 L1482.0 692.5 L1482.5 687.0 L1483.0 693.2 L1483.5 689.9 L1484.0 693.7 L1484.5 690.4 L1485.0 693.9 L1485.5 689.0 L1486.0 696.7 L1486.5 690.5 L1487.0 697.0 L1487.5 689.5 L1488.0 697.6 L1488.5 692.4 L1489.0 697.9 L1489.5 693.1 L1490.0 698.2 L1490.5 694.6 L1491.0 698.7 L1491.5 693.7 L1492.0 699.2 L1492.5 692.7 L1493.0 700.2 L1493.5 695.4 L1494.0 700.9 L1494.5 696.1 L1495.0 703.2 L1495.5 697.1 L1496.0 701.4 L1496.5 698.1 L1497.0 702.8 L1497.5 695.8 L1498.0 703.5 L1498.5 697.9 L1499.0 702.4 L1499.5 697.8 L1500.0 702.9 L1500.5 698.3 L1501.0 701.9 L1501.5 697.6 L1502.0 701.7 L1502.5 698.6 L1503.0 702.4 L1503.5 696.5 L1504.0 703.2 L1504.5 698.7 L1505.0 702.3 L1505.5 698.1 L1506.0 701.5 L1506.5 697.7 L1507.0 702.0 L1507.5 697.2 L1508.0 701.8 L1508.5 698.2 L1509.0 704.8 L1509.5 697.0 L1510.0 704.5 L1510.5 696.2 L1511.0 702.6 L1511.5 698.9 L1512.0 703.8 L1512.5 697.3 L1513.0 702.9 L1513.5 698.7 L1514.0 702.0 L1514.5 698.6 L1515.0 703.0 L1515.5 698.0 L1516.0 703.2 L1516.5 696.7 L1517.0 702.4 L1517.5 698.1 L1518.0 702.9 L1518.5 697.1 L1519.0 701.3 L1519.5 698.1 L1520.0 702.3 L1520.5 698.4 L1521.0 703.0 L1521.5 697.1 L1522.0 701.2 L1522.5 697.4 L1523.0 700.9 L1523.5 696.0 L1524.0 701.3 L1524.5 696.5 L1525.0 700.3 L1525.5 694.9 L1526.0 702.6 L1526.5 693.9 L1527.0 700.5 L1527.5 694.9 L1528.0 699.2 L1528.5 696.3 L1529.0 701.3 L1529.5 696.3 L1530.0 699.9 L1530.5 695.2 L1531.0 699.6 L1531.5 695.8 L1532.0 699.2 L1532.5 696.2 L1533.0 700.9 L1533.5 695.4 L1534.0 701.4 L1534.5 696.8 L1535.0 700.8 L1535.5 695.0 L1536.0 699.3 L1536.5 695.0 L1537.0 700.3 L1537.5 695.5 L1538.0 700.2 L1538.5 695.5 L1539.0 701.1 L1539.5 695.1 L1540.0 698.8 L1540.5 693.8 L1541.0 699.4 L1541.5 696.0 L1542.0 699.2 L1542.5 694.7 L1543.0 700.4 L1543.5 693.3 L1544.0 700.9 L1544.5 694.9 L1545.0 701.2 L1545.5 694.4 L1546.0 699.7 L1546.5 694.8 L1547.0 700.9 L1547.5 695.4 L1548.0 700.5 L1548.5 695.5 L1549.0 698.9 L1549.5 693.5 L1550.0 699.5 L1550.5 695.7 L1551.0 701.1 L1551.5 695.9 L1552.0 700.2 L1552.5 696.1 L1553.0 700.0 L1553.5 695.8 L1554.0 700.3 L1554.5 696.3 L1555.0 699.6 L1555.5 696.9 L1556.0 699.9 L1556.5 695.8 L1557.0 700.1 L1557.5 696.5 L1558.0 703.2 L1558.5 696.1 L1559.0 702.3 L1559.5 695.6 L1560.0 701.6 L1560.5 695.4 L1561.0 700.1 L1561.5 695.8 L1562.0 700.1 L1562.5 696.1 L1563.0 701.9 L1563.5 697.6 L1564.0 701.4 L1564.5 695.8 L1565.0 702.3 L1565.6 697.0 L1566.1 701.5 L1566.6 697.2 L1567.1 702.4 L1567.6 698.3 L1568.1 702.6 L1568.6 696.9 L1569.1 703.7 L1569.6 698.6 L1570.1 702.8 L1570.6 698.4 L1571.1 703.3 L1571.6 698.1 L1572.1 702.2 L1572.6 696.8 L1573.1 703.3 L1573.6 697.9 L1574.1 701.8 L1574.6 696.4 L1575.1 703.5 L1575.6 698.1 L1576.1 702.6 L1576.7 698.0 L1577.2 701.9 L1577.7 698.8 L1578.2 702.9 L1578.7 698.2 L1579.2 701.7 L1579.7 698.1 L1580.2 704.0 L1580.7 699.3 L1581.2 703.7 L1581.7 698.6 L1582.2 702.4 L1582.7 698.9 L1583.2 702.8 L1583.7 696.0 L1584.2 702.5 L1584.7 697.7 L1585.2 702.8 L1585.7 697.8 L1586.2 704.8 L1586.7 697.8 L1587.2 705.6 L1587.7 699.1 L1588.2 702.8 L1588.7 699.8 L1589.2 703.3 L1589.7 699.4 L1590.2 703.3 L1590.7 699.7 L1591.2 703.4 L1591.7 697.6 L1592.2 703.2 L1592.7 698.6 L1593.2 703.0 L1593.7 699.5 L1594.2 703.2 L1594.7 698.9 L1595.2 704.1 L1595.6 699.2 L1596.1 703.3 L1596.6 698.0 L1597.1 702.7 L1597.6 698.4 L1598.1 702.7 L1598.6 696.1 L1599.1 703.1 L1599.6 697.8 L1600.1 703.0 L1600.6 700.0 L1601.1 704.0 L1601.6 700.1 L1602.1 703.2 L1602.6 699.9 L1603.1 703.1 L1603.6 699.1 L1604.1 705.7 L1604.6 699.6 L1605.1 704.0 L1605.6 699.8 L1606.1 703.8 L1606.6 699.2 L1607.1 703.4 L1607.6 699.6 L1608.1 703.6 L1608.6 698.8 L1609.1 705.1 L1609.6 699.6 L1610.1 703.5 L1610.6 699.5 L1611.1 703.9 L1611.6 700.5 L1612.1 703.9 L1612.6 699.9 L1613.1 704.4 L1613.6 697.1 L1614.1 704.5 L1614.6 698.7 L1615.1 705.1 L1615.6 699.9 L1616.1 704.5 L1616.6 700.6 L1617.1 704.5 L1617.6 700.5 L1618.1 704.5 L1618.6 700.1 L1619.1 704.5 L1619.6 701.2 L1620.1 704.3 L1620.6 697.6 L1621.1 704.3 L1621.6 698.6 L1622.1 703.5 L1622.6 699.8 L1623.1 703.7 L1623.5 699.2 L1624.0 704.4 L1624.5 698.2 L1625.0 704.6 L1625.5 697.8 L1626.0 706.1 L1626.5 699.1 L1627.0 705.5 L1627.5 700.0 L1628.0 706.0 L1628.5 702.4 L1629.0 707.3 L1629.5 701.9 L1630.0 709.0 L1630.5 700.7 L1631.0 709.3 L1631.5 703.1 L1632.0 708.2 L1632.5 701.7 L1633.0 709.3 L1633.5 702.9 L1634.0 706.8 L1634.5 703.2 L1635.0 708.2 L1635.5 703.2 L1636.0 708.4 L1636.5 702.0 L1637.0 707.2 L1637.5 702.5 L1638.0 705.8 L1638.5 702.3 L1639.0 706.5 L1639.5 702.7 L1640.0 706.2 L1640.5 700.1 L1641.0 707.5 L1641.5 703.2 L1642.0 709.8 L1642.5 701.3 L1643.0 707.1 L1643.5 700.3 L1644.0 707.5 L1644.5 702.2 L1645.0 707.1 L1645.5 704.1 L1646.0 708.4 L1646.5 704.6 L1647.0 709.7 L1647.5 703.3 L1648.0 710.6 L1648.5 703.9 L1649.0 710.8 L1649.5 704.0 L1650.0 707.5 L1650.5 702.9 L1651.0 708.3 L1651.5 702.5 L1652.0 707.4 L1652.5 703.7 L1653.0 707.0 L1653.5 702.4 L1654.0 706.9 L1654.5 703.5 L1655.0 707.7 L1655.5 702.6 L1656.0 708.6 L1656.5 701.9 L1657.0 706.9 L1657.5 703.9 L1658.0 707.3 L1658.5 701.3 L1659.0 708.7 L1659.5 700.9 L1660.0 707.4 L1660.5 702.3 L1660.9 708.2 L1661.4 704.3 L1661.9 707.7 L1662.4 703.8 L1662.9 710.9 L1663.4 704.4 L1663.9 709.6 L1664.4 704.0 L1664.9 708.6 L1665.4 702.4 L1665.9 708.9 L1666.4 702.3 L1666.9 710.6 L1667.4 704.1 L1667.9 707.4 L1668.4 704.6 L1668.9 709.3 L1669.4 704.2 L1669.9 707.7 L1670.4 703.0 L1670.9 707.2 L1671.4 702.6 L1671.9 707.4 L1672.4 703.2 L1672.9 707.7 L1673.4 704.2 L1673.9 708.1 L1674.4 702.0 L1674.9 708.0 L1675.4 704.1 L1675.9 708.4 L1676.4 703.8 L1676.9 709.7 L1677.4 701.7 L1677.9 709.0 L1678.4 702.8 L1678.9 710.8 L1679.4 702.7 L1679.9 708.3 L1680.4 704.6 L1680.9 708.4 L1681.4 701.8 L1681.9 710.0 L1682.4 703.6 L1682.9 710.2 L1683.4 705.0 L1683.9 709.7 L1684.4 705.5 L1684.7 710.2 L1685.0 707.2 L1685.4 715.6 L1685.7 708.8 L1686.0 717.7 L1686.5 712.0 L1687.0 717.6 L1687.5 710.1 L1688.0 716.0 L1688.5 711.5 L1689.0 714.3 L1689.5 711.4 L1690.0 715.5 L1690.5 709.0 L1691.0 715.3 L1691.5 710.0 L1692.0 714.8 L1692.5 711.1 L1693.0 715.0 L1693.5 709.7 L1694.0 715.5 L1694.5 709.7 L1695.0 717.2 L1695.5 711.1 L1696.0 717.2 L1696.5 712.6 L1697.0 717.7 L1697.5 710.5 L1698.0 715.5 L1698.5 712.6 L1699.0 717.9 L1699.5 712.4 L1700.0 715.9 L1700.5 711.2 L1701.0 716.5 L1701.5 712.2 L1702.0 717.1 L1702.5 711.5 L1703.0 717.9 L1703.5 711.6 L1704.0 717.1 L1704.5 713.2 L1705.0 716.2 L1705.5 713.2 L1706.0 716.8 L1706.5 713.6 L1707.0 718.5 L1707.5 712.8 L1708.0 716.8 L1708.1 714.4 L1708.3 720.3 L1708.4 716.5 L1708.5 723.3 L1708.6 721.1 L1708.8 726.2 L1708.9 722.9 L1709.0 730.4 L1709.1 726.3 L1709.3 733.7 L1709.4 728.5 L1709.9 735.0 L1710.4 728.0 L1710.9 736.1 L1711.4 730.9 L1711.9 734.9 L1712.4 730.8 L1712.9 738.0 L1713.4 732.1 L1713.8 736.2 L1714.3 732.8 L1714.8 738.3 L1715.3 732.4 L1715.8 737.4 L1716.3 734.2 L1716.8 738.6 L1717.3 734.9 L1717.8 741.7 L1718.3 734.5 L1718.8 741.2 L1719.3 735.9 L1719.8 741.9 L1720.3 736.5 L1720.8 739.7 L1721.3 736.9 L1721.8 740.9 L1722.3 737.0 L1722.8 740.1 L1723.3 736.2 L1723.8 741.3 L1724.3 735.7 L1724.8 739.4 L1725.3 734.6 L1725.8 739.7 L1726.3 736.0 L1726.8 739.6 L1727.3 736.7 L1727.8 741.2 L1728.3 736.7 L1728.8 741.6 L1729.3 735.8 L1729.8 739.7 L1730.3 736.4 L1730.8 740.3 L1731.3 736.2 L1731.8 740.0 L1732.3 735.5 L1732.8 739.8 L1733.3 735.8 L1733.8 742.1 L1734.3 735.7 L1734.8 740.6 L1735.3 735.4 L1735.8 739.1 L1736.3 734.9 L1736.8 740.0 L1737.3 735.3 L1737.8 740.6 L1738.3 733.3 L1738.8 738.9 L1739.3 735.8 L1739.8 741.5 L1740.3 735.0 L1740.8 739.9 L1741.3 735.2 L1741.8 740.5 L1742.3 735.0 L1742.8 741.4 L1743.3 736.5 L1743.8 739.7 L1744.3 736.2 L1744.8 742.2 L1745.3 732.5 L1745.8 739.6 L1746.3 735.0 L1746.8 740.5 L1747.3 736.5 L1747.8 740.1 L1748.3 736.6 L1748.8 741.0 L1749.3 737.0 L1749.8 742.2 L1750.3 736.5 L1750.8 742.7 L1751.3 737.9 L1751.8 741.5 L1752.3 737.6 L1752.8 743.1 L1753.3 737.9 L1753.8 742.5 L1754.3 738.6 L1754.8 743.6 L1755.3 736.8 L1755.8 743.2 L1756.3 737.5 L1756.8 743.3 L1757.3 739.1 L1757.8 743.2 L1758.3 739.4 L1758.8 744.1 L1759.3 738.6 L1759.8 745.4 L1760.3 740.5 L1760.8 744.3 L1761.3 739.8 L1761.8 743.6 L1762.3 740.1 L1762.8 744.5 L1763.3 739.8 L1763.8 743.5 L1764.3 738.8 L1764.8 744.4 L1765.3 738.6 L1765.8 742.9 L1766.4 738.1 L1766.9 741.7 L1767.4 738.0 L1767.9 744.0 L1768.4 737.1 L1768.9 740.5 L1769.4 736.8 L1769.9 739.9 L1770.4 735.9 L1770.9 741.4 L1771.4 735.7 L1771.9 738.8 L1772.5 734.8 L1773.0 739.2 L1773.5 733.4 L1774.0 739.1 L1774.5 733.5 L1775.0 736.3 L1775.5 732.2 L1776.0 737.3 L1776.5 731.3 L1777.0 735.7 L1777.5 729.6 L1778.0 734.0 L1778.4 727.5 L1778.9 732.9 L1779.4 725.4 L1779.9 730.5 L1780.4 725.8 L1780.9 729.2 L1781.4 724.4 L1781.9 727.0 L1782.4 722.5 L1782.9 726.1 L1783.4 718.5 L1783.9 724.2 L1784.4 717.6 L1784.9 721.6 L1785.3 716.5 L1785.8 719.8 L1786.3 716.0 L1786.8 720.5 L1787.3 712.8 L1787.8 717.4 L1788.3 712.0 L1788.8 716.5 L1789.3 712.3 L1789.8 717.1 L1790.3 709.0 L1790.8 717.6 L1791.3 711.6 L1791.8 715.2 L1792.3 710.7 L1792.9 716.6 L1793.4 710.4 L1793.9 714.5 L1794.4 708.9 L1794.9 714.5 L1795.4 707.7 L1795.9 712.8 L1796.4 706.6 L1796.9 712.5 L1797.4 706.8 L1797.9 710.2 L1798.4 705.9 L1798.9 709.7 L1799.4 706.2 L1799.9 710.3 L1800.4 705.9 L1800.9 709.7 L1801.4 705.0 L1801.9 707.9 L1802.4 703.7 L1802.9 708.8 L1803.5 702.5 L1804.0 706.5 L1804.5 700.3 L1805.0 705.3 L1805.5 699.0 L1806.0 705.1 L1806.5 699.8 L1807.0 704.4 L1807.5 698.7 L1808.0 702.8 L1808.5 698.2 L1809.0 702.9 L1809.5 697.8 L1810.0 701.9 L1810.0 698.2 L1810.1 704.6 L1810.2 701.8 L1810.2 707.7 L1810.2 702.8 L1810.3 709.6 L1810.3 707.2 L1810.4 712.4 L1810.5 710.8 L1810.5 717.0 L1810.5 713.7 L1810.6 718.7 L1810.6 716.2 L1810.7 722.3 L1810.8 720.7 L1810.8 724.9 L1811.3 719.7 L1811.8 726.6 L1812.3 722.6 L1812.8 728.4 L1813.3 723.0 L1813.8 728.0 L1814.3 723.5 L1814.8 727.6 L1815.3 720.1 L1815.8 728.5 L1816.3 722.4 L1816.8 729.6 L1817.3 723.8 L1817.8 729.6 L1818.3 724.5 L1818.8 728.7 L1819.3 723.6 L1819.8 730.1 L1820.3 725.0 L1820.8 730.5 L1821.3 724.2 L1821.8 730.2 L1822.3 725.9 L1822.8 730.6 L1823.3 725.0 L1823.8 731.1 L1824.3 726.6 L1824.8 732.5 L1825.3 727.8 L1825.8 733.0 L1826.3 729.8 L1826.8 734.7 L1827.3 729.8 L1827.8 734.7 L1828.3 730.5 L1828.8 735.3 L1829.3 730.7 L1829.8 734.5 L1830.3 730.2 L1830.8 735.1 L1831.3 730.7 L1831.8 735.6 L1832.3 729.5 L1832.8 735.2 L1833.3 732.1 L1833.8 736.4 L1834.3 731.4 L1834.8 738.1 L1835.3 731.9 L1835.8 736.7 L1836.3 732.6 L1836.8 736.6 L1837.3 731.6 L1837.8 737.4 L1838.3 733.3 L1838.8 739.0 L1839.3 736.1 L1839.8 742.9 L1840.3 736.5 L1840.8 741.6 L1841.3 735.2 L1841.8 743.3 L1842.3 735.6 L1842.8 741.5 L1843.3 733.6 L1843.8 742.6 L1844.3 737.9 L1844.8 741.6 L1845.3 737.4 L1845.8 741.6 L1846.3 736.3 L1846.8 743.0 L1847.3 738.3 L1847.8 742.5 L1848.3 739.2 L1848.8 744.5 L1849.3 738.2 L1849.8 745.6 L1850.2 740.3 L1850.7 743.8 L1851.2 739.5 L1851.7 744.0 L1852.2 739.9 L1852.7 745.8 L1853.2 740.3 L1853.7 746.7 L1854.2 741.6 L1854.7 745.1 L1855.2 741.5 L1855.7 745.6 L1856.2 741.6 L1856.7 747.7 L1857.2 742.6 L1857.7 748.5 L1858.2 741.8 L1858.7 747.0 L1859.2 743.8 L1859.7 748.2 L1860.2 742.4 L1860.7 749.7 L1861.2 746.6 L1861.7 752.7 L1862.2 746.8 L1862.7 752.1 L1863.2 745.2 L1863.7 753.2 L1864.2 749.3 L1864.7 753.1 L1865.2 748.5 L1865.7 753.6 L1866.2 746.3 L1866.7 753.8 L1867.2 748.9 L1867.7 753.6 L1868.2 749.0 L1868.7 754.3 L1869.2 749.2 L1869.7 753.6 L1870.2 749.3 L1870.7 754.0 L1871.2 749.4 L1871.7 753.7 L1872.2 749.3 L1872.7 755.6 L1873.2 750.6 L1873.7 755.5 L1874.2 751.5 L1874.7 758.5 L1875.1 751.9 L1875.6 755.5 L1876.1 751.0 L1876.6 757.9 L1877.1 751.2 L1877.6 757.6 L1878.1 750.9 L1878.6 759.2 L1879.1 754.2 L1879.6 757.7 L1880.1 753.8 L1880.6 757.9 L1881.1 754.1 L1881.6 760.4 L1882.1 753.6 L1882.6 758.3 L1883.1 754.6 L1883.6 758.0 L1884.1 754.8 L1884.6 759.4 L1885.1 754.1 L1885.6 759.6 L1886.1 756.2 L1886.6 759.4 L1887.1 756.7 L1887.6 760.5 L1888.1 756.8 L1888.6 761.7 L1889.1 756.3 L1889.6 761.1 L1890.1 756.6 L1890.6 761.2 L1891.1 757.3 L1891.6 761.7 L1892.0 757.9 L1892.5 761.7 L1893.0 756.6 L1893.5 762.2 L1894.0 755.1 L1894.5 761.8 L1895.0 756.4 L1895.5 761.6 L1896.0 757.7 L1896.5 762.8 L1897.0 754.7 L1897.5 762.2 L1898.0 756.0 L1898.5 762.6 L1899.0 758.7 L1899.5 765.3 L1900.0 756.5 L1900.5 762.3 L1901.0 758.4 L1901.5 763.4 L1902.0 754.6 L1902.5 764.5 L1903.0 757.3 L1903.5 762.8 L1904.0 758.0 L1904.5 764.5 L1905.0 757.6 L1905.5 761.8 L1906.0 755.4 L1906.5 763.1 L1907.0 756.3 L1907.5 764.5 L1908.0 755.0 L1908.5 763.1 L1909.0 758.8 L1909.5 762.7 L1910.0 758.1 L1910.5 765.0 L1911.0 758.1 L1911.5 762.2 L1912.0 758.8 L1912.5 762.5 L1913.0 757.8 L1913.5 765.4 L1914.0 758.7 L1914.5 764.9 L1915.0 759.2 L1915.5 763.0 L1916.0 760.1 L1916.5 766.0 L1917.0 758.1 L1917.5 763.4 L1918.0 759.2 L1918.5 762.3 L1919.0 759.2 L1919.5 763.0 L1920.0 759.8 L1920.5 764.4 L1921.0 758.7 L1921.5 765.3 L1922.0 760.3 L1922.5 764.9 L1923.0 760.3 L1923.5 765.5 L1924.0 759.6 L1924.5 766.5 L1925.0 758.8 L1925.5 765.1 L1926.0 759.8 L1926.5 766.4 L1927.0 760.8 L1927.5 765.2 L1928.0 759.2 L1928.5 764.8 L1929.0 761.2 L1929.5 765.8 L1930.0 761.1 L1930.5 765.1 L1931.0 759.2 L1931.5 764.7 L1932.0 760.0 L1932.5 765.4 L1933.0 760.5 L1933.5 764.5 L1934.0 762.0 L1934.5 766.0 L1935.0 761.5 L1935.6 766.8 L1936.1 760.1 L1936.6 765.9 L1937.1 762.8 L1937.6 768.2 L1938.1 762.1 L1938.6 766.3 L1939.1 761.0 L1939.6 766.5 L1940.1 761.2 L1940.6 765.5 L1941.1 761.3 L1941.6 764.6 L1942.1 761.4 L1942.6 765.1 L1943.1 761.5 L1943.6 765.7 L1944.1 760.9 L1944.6 764.9 L1945.1 761.1 L1945.6 766.9 L1946.1 761.7 L1946.6 765.9 L1947.1 761.2 L1947.6 765.6 L1948.1 760.4 L1948.6 766.4 L1949.1 761.5 L1949.6 765.9 L1950.1 762.1 L1950.6 767.3 L1951.1 762.7 L1951.6 767.1 L1952.1 762.5 L1952.6 768.9 L1953.1 763.9 L1953.6 767.5 L1954.1 764.2 L1954.6 767.8 L1955.1 762.5 L1955.6 770.1 L1956.1 763.6 L1956.7 769.9 L1957.2 763.2 L1957.7 768.9 L1958.2 764.8 L1958.7 768.2 L1959.2 763.0 L1959.7 768.3 L1960.2 764.5 L1960.7 768.0 L1961.2 763.0 L1961.7 767.8 L1962.2 763.0 L1962.7 768.2 L1963.2 761.2 L1963.7 767.6 L1964.2 764.0 L1964.7 768.7 L1965.2 762.3 L1965.7 767.9 L1966.2 763.0 L1966.7 767.1 L1967.2 762.1 L1967.7 769.3 L1968.2 764.6 L1968.7 768.1 L1969.2 762.3 L1969.7 768.0 L1970.2 764.3 L1970.7 767.8 L1971.2 764.7 L1971.7 770.5 L1972.2 764.2 L1972.7 767.7 L1973.2 763.8 L1973.7 769.9 L1974.2 764.1 L1974.7 768.2 L1975.2 762.5 L1975.7 768.4 L1976.2 764.5 L1976.7 768.0 L1977.2 764.1 L1977.7 768.0 L1978.2 763.6 L1978.7 768.5 L1979.2 763.3 L1979.7 769.5 L1980.2 763.3 L1980.7 771.1 L1981.2 765.1 L1981.7 770.0 L1982.2 765.0 L1982.7 771.3 L1983.2 765.9 L1983.7 769.5 L1984.2 764.7 L1984.7 770.5 L1985.2 764.9 L1985.7 769.8 L1986.2 765.9 L1986.7 771.9 L1987.2 765.6 L1987.7 769.7 L1988.2 763.6 L1988.7 768.6 L1989.2 765.8 L1989.7 769.5 L1990.2 766.2 L1990.7 769.9 L1991.2 766.5 L1991.7 769.3 L1992.2 766.3 L1992.7 770.3 L1993.2 766.0 L1993.7 770.0 L1994.2 766.5 L1994.7 772.9 L1995.2 766.9 L1995.7 771.3 L1996.2 765.7 L1996.7 771.7 L1997.2 766.9 L1997.7 771.4 L1998.2 766.5 L1998.7 772.0 L1999.2 766.4 L1999.7 771.1 L2000.2 767.4 L2000.7 772.2 L2001.2 767.7 L2001.7 772.2 L2002.2 768.6 L2002.7 772.2 L2003.2 766.3 L2003.7 772.7 L2004.2 769.0 L2004.7 772.5 L2005.2 766.8 L2005.7 772.8 L2006.2 768.3 L2006.7 772.2 L2007.2 767.9 L2007.7 772.1 L2008.2 766.5 L2008.7 770.9 L2009.2 768.1 L2009.7 775.0 L2010.2 767.5 L2010.7 773.3 L2011.2 765.8 L2011.7 773.2 L2012.2 768.7 L2012.7 774.0 L2013.2 767.2 L2013.7 773.3 L2014.2 768.4 L2014.7 773.4 L2015.2 768.0 L2015.7 772.2 L2016.2 768.4 L2016.7 773.8 L2017.2 767.4 L2017.7 775.0 L2018.2 768.8 L2018.7 772.3 L2019.2 768.9 L2019.7 772.3 L2020.2 768.2 L2020.7 771.8 L2021.2 768.6 L2021.7 773.7 L2022.2 767.7 L2022.7 772.5 L2023.2 767.3 L2023.7 772.2 L2024.2 767.6 L2024.7 771.6 L2025.2 765.1 L2025.7 770.9 L2026.2 766.5 L2026.7 770.5 L2027.2 765.5 L2027.7 770.9 L2028.2 764.0 L2028.7 771.3 L2029.2 767.0 L2029.7 771.7 L2030.2 767.1 L2030.7 772.5 L2031.2 766.8 L2031.6 770.9 L2032.1 766.3 L2032.6 770.2 L2033.1 765.7 L2033.6 771.3 L2034.1 765.7 L2034.6 770.4 L2035.1 766.4 L2035.6 770.7 L2036.1 766.7 L2036.6 771.6 L2037.1 765.7 L2037.6 772.5 L2038.1 764.1 L2038.6 771.2 L2039.1 766.2 L2039.6 771.4 L2040.1 767.3 L2040.6 771.7 L2041.1 767.9 L2041.6 770.7 L2042.1 767.0 L2042.6 771.9 L2043.1 767.2 L2043.6 771.5 L2044.1 766.2 L2044.6 770.8 L2045.1 765.9 L2045.6 769.9 L2046.1 766.6 L2046.6 770.4 L2047.1 766.3 L2047.6 769.8 L2048.1 765.9 L2048.6 772.5 L2049.1 765.3 L2049.6 769.6 L2050.1 765.6 L2050.6 770.5 L2051.1 766.3 L2051.6 770.5 L2052.1 766.4 L2052.6 772.5 L2053.1 766.5 L2053.6 770.3 L2054.1 766.3 L2054.6 770.3 L2055.1 765.9 L2055.6 770.5 L2056.1 765.3 L2056.6 769.9 L2057.1 766.2 L2057.6 771.8 L2058.1 763.0 L2058.6 770.9 L2059.1 764.9 L2059.6 773.0 L2060.1 766.4 L2060.5 772.4 L2061.0 765.7 L2061.5 771.4 L2062.0 763.9 L2062.5 771.4 L2063.0 766.1 L2063.5 770.3 L2064.0 766.3 L2064.5 770.6 L2065.0 767.1 L2065.5 771.5 L2066.0 766.2 L2066.5 771.8 L2067.0 766.0 L2067.5 769.7 L2068.0 765.5 L2068.5 771.1 L2069.0 766.3 L2069.5 771.0 L2070.0 766.9 L2070.5 771.2 L2071.0 765.7 L2071.5 769.5 L2072.0 766.1 L2072.5 772.2 L2073.0 763.8 L2073.5 771.1 L2074.0 767.0 L2074.5 771.2 L2075.0 764.8 L2075.0 772.5 L2075.1 769.7 L2075.1 776.5 L2075.2 772.1 L2075.2 779.3 L2075.3 775.2 L2075.3 780.0 L2075.4 777.4 L2075.4 784.4 L2075.5 781.0 L2075.5 787.1 L2075.6 784.6 L2075.6 790.5 L2075.7 785.8 L2075.7 793.0 L2075.8 789.4 L2075.8 795.2 L2076.3 791.9 L2076.8 796.4 L2077.3 792.6 L2077.8 797.8 L2078.3 793.0 L2078.8 800.8 L2079.3 795.4 L2079.8 799.4 L2080.3 796.0 L2080.8 800.3 L2081.3 796.4 L2081.8 802.5 L2082.3 798.6 L2082.8 805.1 L2083.3 798.2 L2083.8 802.8 L2084.3 799.7 L2084.8 804.4 L2085.3 800.6 L2085.8 805.2 L2086.3 801.8 L2086.8 806.0 L2087.3 801.3 L2087.8 806.5 L2088.3 802.3 L2088.8 806.5 L2089.3 803.5 L2089.8 807.0 L2090.3 801.8 L2090.8 808.4 L2091.3 804.4 L2091.8 809.3 L2092.3 804.4 L2092.8 810.0 L2093.3 806.8 L2093.8 812.2 L2094.3 807.9 L2094.8 812.7 L2095.2 806.7 L2095.7 814.6 L2096.2 807.1 L2096.7 812.5 L2097.2 809.2 L2097.7 814.1 L2098.2 807.7 L2098.7 813.4 L2099.2 809.9 L2099.7 813.7 L2100.2 811.0 L2100.7 816.5 L2101.2 808.7 L2101.7 815.0 L2102.2 812.2 L2102.7 817.2 L2103.2 811.9 L2103.7 818.2 L2104.2 813.4 L2104.7 817.4 L2105.1 814.2 L2105.6 821.2 L2106.1 814.6 L2106.6 821.1 L2107.1 812.4 L2107.6 821.1 L2108.1 815.9 L2108.6 819.7 L2109.1 813.1 L2109.6 821.2 L2110.1 816.3 L2110.6 820.5 L2111.1 814.6 L2111.6 821.6 L2112.1 816.2 L2112.5 821.9 L2113.0 818.0 L2113.5 822.6 L2114.0 817.8 L2114.5 825.7 L2115.0 818.3 L2115.5 826.9 L2116.0 818.6 L2116.5 825.7 L2117.0 820.8 L2117.5 824.8 L2118.0 820.7 L2118.5 826.1 L2119.0 820.6 L2119.5 824.2 L2120.0 821.0 L2120.5 827.5 L2121.0 821.7 L2121.5 825.8 L2122.0 822.2 L2122.4 826.1 L2122.9 821.7 L2123.4 825.9 L2123.9 819.8 L2124.4 826.3 L2124.9 822.6 L2125.4 827.7 L2125.9 819.8 L2126.4 829.5 L2126.9 822.5 L2127.4 827.8 L2127.9 823.7 L2128.4 828.2 L2128.9 823.6 L2129.4 829.9 L2129.9 823.1 L2130.3 825.8 L2130.8 820.7 L2131.3 824.9 L2131.8 821.2 L2132.3 827.0 L2132.8 820.2 L2133.3 826.0 L2133.8 820.8 L2134.3 824.9 L2134.8 819.9 L2135.3 824.1 L2135.8 820.0 L2136.3 824.6 L2136.8 818.5 L2137.3 823.6 L2137.8 819.4 L2138.3 824.7 L2138.8 816.9 L2139.3 823.3 L2139.8 818.5 L2140.3 823.6 L2140.8 817.0 L2141.3 822.5 L2141.8 818.5 L2142.3 822.2 L2142.8 817.8 L2143.3 822.1 L2143.8 817.2 L2144.3 822.8 L2144.8 816.6 L2145.3 823.5 L2145.8 819.0 L2146.3 823.8 L2146.8 818.2 L2147.3 822.7 L2147.8 818.0 L2148.3 822.6 L2148.8 817.9 L2149.3 821.1 L2149.8 817.1 L2150.3 820.7 L2150.8 817.7 L2151.3 821.0 L2151.8 817.8 L2152.3 823.3 L2152.8 815.8 L2153.3 822.5 L2153.8 817.4 L2154.3 822.4 L2154.8 817.6 L2155.3 821.3 L2155.8 817.1 L2156.3 821.4 L2156.8 817.9 L2157.3 821.2 L2157.8 818.4 L2158.3 823.2 L2158.8 817.7 L2159.3 821.8 L2159.8 816.3 L2160.3 820.9 L2160.8 816.3 L2161.3 821.2 L2161.8 817.1 L2162.3 823.0 L2162.8 817.0 L2163.3 821.1 L2163.8 816.4 L2164.3 822.8 L2164.8 816.9 L2165.3 822.5 L2165.8 816.8 L2166.3 821.9 L2166.8 816.4 L2167.3 821.5 L2167.8 816.7 L2168.3 820.5 L2168.8 814.6 L2169.3 820.3 L2169.8 816.8 L2170.3 821.7 L2170.8 816.9 L2171.4 821.0 L2171.9 814.9 L2172.4 821.2 L2172.9 816.4 L2173.4 821.4 L2173.9 817.5 L2174.4 820.4 L2174.9 817.0 L2175.4 820.3 L2175.9 816.2 L2176.4 821.9 L2176.9 816.5 L2177.4 822.7 L2177.9 817.1 L2178.4 821.2 L2178.9 816.9 L2179.4 823.8 L2179.9 816.3 L2180.4 821.7 L2180.9 816.1 L2181.4 821.3 L2181.9 814.9 L2182.4 821.2 L2182.9 815.5 L2183.4 818.8 L2183.9 815.2 L2184.4 821.1 L2184.9 813.1 L2185.4 819.3 L2185.9 814.9 L2186.4 820.1 L2186.9 815.0 L2187.4 818.9 L2187.9 815.1 L2188.4 821.1 L2188.9 813.4 L2189.4 819.3 L2189.9 811.6 L2190.4 817.9 L2190.9 815.0 L2191.4 820.3 L2191.9 815.4 L2192.4 819.0 L2192.9 814.6 L2193.4 819.8 L2193.9 815.1 L2194.4 819.2 L2194.9 814.6 L2195.4 819.0 L2195.9 812.9 L2196.4 820.0 L2196.9 815.1 L2197.4 819.5 L2197.9 813.9 L2198.4 819.4 L2198.9 818.3" stroke="#00ff00" stroke-width="1.0" fill="none"/>
<path d="M997.0 644.5C1000.1 644.8 1006.3 646.3 1015.6 646.5C1024.9 646.5 1042.3 645.5 1053.0 645.5C1063.7 645.7 1070.0 647.5 1080.0 647.5C1090.0 647.2 1100.0 644.3 1113.0 643.5C1126.0 642.7 1143.0 642.5 1157.8 642.5C1172.6 642.5 1185.3 643.5 1202.0 643.5C1218.7 643.5 1239.3 642.5 1257.8 642.5C1276.3 642.8 1296.3 645.5 1313.0 645.5C1329.7 645.3 1348.3 641.8 1357.8 641.5C1367.2 641.5 1367.0 641.5 1369.7 643.5C1372.4 646.8 1372.5 655.0 1373.9 661.5C1375.3 668.0 1376.4 676.0 1378.0 682.5C1379.6 689.0 1381.5 695.8 1383.6 700.5C1385.7 705.2 1387.1 707.7 1390.6 710.5C1394.1 713.3 1399.8 716.0 1404.4 717.5C1409.0 719.0 1413.4 719.5 1418.0 719.5C1422.6 719.3 1427.5 717.0 1432.0 716.5C1436.5 716.5 1441.9 716.5 1444.7 716.5C1447.5 719.0 1447.3 724.8 1448.9 731.5C1450.5 738.2 1452.6 751.0 1454.4 756.5C1456.2 762.0 1457.2 761.8 1460.0 764.5C1462.8 767.2 1466.8 770.2 1471.0 772.5C1475.2 774.8 1480.2 777.0 1485.0 778.5C1489.8 780.0 1495.4 781.5 1500.0 781.5C1504.6 781.5 1507.2 779.5 1512.8 778.5C1518.4 777.5 1525.7 776.2 1533.6 775.5C1541.5 774.8 1545.6 774.8 1560.0 774.5C1574.4 774.2 1596.7 773.5 1620.0 773.5C1643.3 773.7 1685.0 775.0 1700.0 775.5C1710.0 776.0 1707.2 775.5 1710.0 776.5C1712.8 780.0 1714.2 791.2 1716.7 796.5C1719.2 801.8 1721.4 804.5 1725.0 808.5C1728.6 812.5 1734.1 817.7 1738.3 820.5C1742.5 823.3 1745.3 824.8 1750.0 825.5C1754.7 825.5 1761.2 825.0 1766.7 824.5C1772.2 824.0 1777.8 822.5 1783.3 822.5C1788.8 823.0 1795.5 826.8 1800.0 827.5C1804.5 827.5 1807.2 826.5 1810.0 826.5C1812.8 828.8 1814.2 836.7 1816.7 841.5C1819.2 846.3 1820.8 851.5 1825.0 855.5C1829.2 859.5 1834.8 863.0 1841.7 865.5C1848.7 868.0 1857.0 869.0 1866.7 870.5C1876.4 872.0 1867.8 872.7 1900.0 874.5C1932.2 876.3 2030.8 880.3 2060.0 881.5C2075.3 881.5 2072.1 881.5 2075.3 881.5C2078.5 883.2 2077.8 887.5 2079.4 891.5C2081.0 895.5 2082.4 901.5 2085.0 905.5C2087.6 909.5 2091.9 913.2 2094.7 915.5C2097.5 917.8 2098.2 918.3 2101.7 919.5C2105.2 920.7 2110.9 921.5 2115.5 922.5C2120.1 923.5 2125.7 923.7 2129.4 925.5C2133.1 927.3 2135.0 931.7 2137.8 933.5C2140.6 935.3 2137.8 935.8 2146.0 936.5C2156.2 937.2 2190.1 937.3 2198.9 937.5" stroke="#00ff00" stroke-width="1.1" fill="none" stroke-linejoin="round"/>
<path d="M997.0 486.4 L997.5 479.3 L998.0 483.6 L998.5 479.1 L999.0 483.7 L999.5 478.9 L1000.0 484.0 L1000.5 480.5 L1001.0 484.2 L1001.5 480.3 L1002.0 483.5 L1002.5 480.1 L1003.0 483.4 L1003.5 479.6 L1004.0 483.2 L1004.5 479.1 L1005.0 485.0 L1005.5 480.1 L1006.0 485.9 L1006.5 480.3 L1007.0 483.9 L1007.5 478.7 L1008.0 484.4 L1008.5 479.2 L1009.0 484.8 L1009.5 478.6 L1010.0 484.4 L1010.5 480.3 L1011.0 485.4 L1011.5 479.0 L1012.0 483.3 L1012.5 480.4 L1013.0 483.9 L1013.5 480.0 L1014.0 483.5 L1014.5 478.8 L1015.0 483.5 L1015.5 479.3 L1016.0 483.8 L1016.5 479.1 L1017.0 483.8 L1017.5 480.2 L1018.0 483.1 L1018.5 480.0 L1019.0 485.2 L1019.5 480.3 L1020.0 484.9 L1020.5 479.5 L1021.0 484.9 L1021.5 479.5 L1022.0 483.7 L1022.5 479.4 L1023.0 482.5 L1023.5 479.2 L1024.0 484.2 L1024.5 479.2 L1025.0 482.7 L1025.5 479.0 L1026.0 482.5 L1026.5 479.0 L1027.0 482.4 L1027.5 476.5 L1028.0 483.4 L1028.5 477.6 L1029.0 483.6 L1029.5 478.7 L1030.0 482.4 L1030.5 477.5 L1031.0 482.6 L1031.5 478.7 L1032.0 483.6 L1032.5 479.4 L1033.0 482.8 L1033.5 479.5 L1034.0 483.4 L1034.5 478.0 L1035.0 483.6 L1035.5 478.3 L1036.0 483.0 L1036.5 478.6 L1037.0 484.1 L1037.5 478.2 L1038.0 483.0 L1038.5 479.5 L1039.0 482.6 L1039.5 479.4 L1040.0 482.3 L1040.5 477.6 L1041.0 483.1 L1041.5 479.5 L1042.0 482.9 L1042.5 477.2 L1043.0 482.6 L1043.5 479.0 L1044.0 483.6 L1044.5 478.9 L1045.0 483.1 L1045.5 478.0 L1046.0 483.9 L1046.5 477.6 L1047.0 482.9 L1047.5 476.1 L1048.0 482.9 L1048.5 479.2 L1049.0 483.5 L1049.5 478.0 L1050.0 482.0 L1050.5 478.4 L1051.0 482.7 L1051.5 479.0 L1052.0 482.9 L1052.5 479.5 L1053.0 482.5 L1053.5 479.3 L1054.0 482.1 L1054.5 478.2 L1055.0 482.7 L1055.5 478.8 L1056.0 482.6 L1056.5 479.3 L1057.0 483.0 L1057.5 479.1 L1058.0 485.0 L1058.5 479.7 L1059.0 484.4 L1059.5 480.3 L1060.0 483.8 L1060.5 479.5 L1061.0 485.1 L1061.5 478.0 L1062.0 484.3 L1062.5 480.8 L1063.0 483.9 L1063.5 479.6 L1064.0 485.4 L1064.5 479.0 L1065.0 484.2 L1065.5 480.1 L1066.0 484.5 L1066.5 478.8 L1067.0 483.8 L1067.5 480.0 L1068.0 483.7 L1068.5 477.5 L1069.0 484.4 L1069.5 480.1 L1070.0 484.5 L1070.5 480.4 L1071.0 484.3 L1071.5 478.9 L1072.0 484.7 L1072.5 480.8 L1073.0 484.9 L1073.5 480.9 L1074.0 484.4 L1074.5 480.7 L1075.0 485.3 L1075.5 481.2 L1076.0 484.5 L1076.5 480.8 L1077.0 485.7 L1077.5 480.3 L1078.0 484.2 L1078.5 481.3 L1079.0 486.0 L1079.5 478.5 L1080.0 484.3 L1080.5 480.5 L1081.0 486.4 L1081.5 481.7 L1082.0 484.8 L1082.5 481.3 L1083.0 484.9 L1083.5 481.4 L1084.0 486.6 L1084.5 481.8 L1085.0 486.1 L1085.5 481.1 L1086.0 484.9 L1086.5 481.4 L1087.0 484.8 L1087.5 481.3 L1088.0 485.2 L1088.5 480.7 L1089.0 484.7 L1089.5 481.4 L1090.0 484.6 L1090.5 480.5 L1091.0 485.0 L1091.5 480.4 L1092.0 484.3 L1092.5 479.9 L1093.0 485.4 L1093.5 481.3 L1094.0 487.5 L1094.5 480.9 L1095.0 485.5 L1095.5 481.1 L1096.0 484.9 L1096.5 481.3 L1097.0 484.7 L1097.5 481.4 L1098.0 485.7 L1098.5 480.9 L1099.0 485.4 L1099.5 481.0 L1100.0 485.4 L1100.5 480.9 L1101.0 484.3 L1101.5 481.3 L1102.0 484.9 L1102.5 479.4 L1103.0 484.0 L1103.5 481.0 L1104.0 484.0 L1104.5 480.8 L1105.0 484.8 L1105.5 479.0 L1106.0 485.3 L1106.5 479.9 L1107.0 484.0 L1107.5 481.2 L1108.0 484.9 L1108.5 480.1 L1109.0 485.3 L1109.5 480.9 L1110.0 485.7 L1110.5 479.6 L1111.0 485.5 L1111.5 481.0 L1112.0 485.5 L1112.5 481.6 L1113.0 486.6 L1113.5 481.6 L1114.0 484.8 L1114.5 480.8 L1115.0 484.8 L1115.5 480.6 L1116.0 484.8 L1116.5 480.6 L1117.0 487.7 L1117.5 481.7 L1118.0 485.6 L1118.5 480.6 L1119.0 483.8 L1119.5 478.9 L1120.0 484.9 L1120.5 479.6 L1121.0 483.7 L1121.5 480.9 L1122.0 484.6 L1122.5 480.3 L1123.0 483.6 L1123.5 480.3 L1124.0 484.2 L1124.5 479.5 L1125.0 483.4 L1125.5 478.9 L1126.0 484.1 L1126.5 479.1 L1127.0 485.5 L1127.5 480.5 L1128.0 484.4 L1128.5 480.8 L1129.0 483.8 L1129.5 480.3 L1130.0 485.6 L1130.5 479.5 L1131.0 483.7 L1131.5 480.3 L1132.0 485.3 L1132.5 478.9 L1133.0 485.3 L1133.5 480.2 L1134.0 484.7 L1134.5 480.4 L1135.0 484.6 L1135.5 479.8 L1136.0 484.1 L1136.5 480.9 L1137.0 483.6 L1137.5 480.6 L1138.0 485.0 L1138.5 479.6 L1139.0 485.3 L1139.5 478.8 L1140.0 484.7 L1140.5 479.2 L1141.0 483.1 L1141.5 480.4 L1142.0 484.6 L1142.5 478.2 L1143.0 484.7 L1143.5 480.1 L1144.0 483.6 L1144.5 480.0 L1145.0 483.6 L1145.5 479.5 L1146.0 483.8 L1146.5 478.7 L1147.0 486.3 L1147.5 480.4 L1148.0 484.0 L1148.5 477.6 L1149.0 483.5 L1149.5 479.5 L1150.0 484.1 L1150.5 480.1 L1151.0 483.8 L1151.5 479.2 L1152.0 483.3 L1152.5 478.9 L1153.0 483.7 L1153.5 480.1 L1154.0 483.1 L1154.5 480.2 L1155.0 483.1 L1155.5 478.8 L1156.0 483.4 L1156.5 479.6 L1157.0 483.5 L1157.5 478.8 L1158.0 483.2 L1158.5 480.4 L1159.0 484.0 L1159.5 480.0 L1160.0 483.3 L1160.5 478.9 L1161.0 483.1 L1161.5 479.5 L1162.0 485.6 L1162.5 479.4 L1163.0 482.8 L1163.5 479.7 L1164.0 483.5 L1164.5 479.4 L1165.0 484.3 L1165.5 478.8 L1166.0 481.9 L1166.5 479.3 L1167.0 482.7 L1167.5 479.2 L1168.0 485.3 L1168.5 479.8 L1169.0 483.2 L1169.5 476.9 L1170.0 482.9 L1170.5 479.6 L1171.0 484.4 L1171.5 479.1 L1172.0 483.2 L1172.5 478.3 L1173.0 483.7 L1173.5 480.4 L1174.0 484.7 L1174.5 479.4 L1175.0 482.9 L1175.5 479.4 L1176.0 483.7 L1176.5 479.9 L1177.0 484.3 L1177.5 478.2 L1178.0 483.9 L1178.5 478.0 L1179.0 484.3 L1179.5 478.7 L1180.0 484.5 L1180.5 480.5 L1181.0 485.6 L1181.5 479.4 L1182.0 483.7 L1182.5 480.1 L1183.0 484.4 L1183.5 479.5 L1184.0 484.3 L1184.5 478.8 L1185.0 483.8 L1185.5 477.6 L1186.0 483.1 L1186.5 478.6 L1187.0 482.8 L1187.5 479.8 L1188.0 482.6 L1188.5 478.0 L1189.0 482.9 L1189.5 479.0 L1190.0 483.9 L1190.5 477.9 L1191.0 483.8 L1191.5 477.1 L1192.0 482.5 L1192.5 479.2 L1193.0 482.3 L1193.5 478.6 L1194.0 484.2 L1194.5 477.2 L1195.0 484.3 L1195.5 479.7 L1196.0 485.9 L1196.5 479.1 L1197.0 483.8 L1197.5 478.3 L1198.0 482.9 L1198.5 479.2 L1199.0 483.6 L1199.5 479.5 L1200.0 483.2 L1200.5 479.5 L1201.0 483.4 L1201.5 479.6 L1202.0 482.8 L1202.5 479.9 L1203.0 483.3 L1203.5 478.8 L1204.0 483.1 L1204.5 479.1 L1205.0 484.1 L1205.5 478.9 L1206.0 483.6 L1206.5 480.0 L1207.0 483.3 L1207.5 479.8 L1208.0 484.6 L1208.5 479.6 L1209.0 484.8 L1209.5 480.1 L1210.0 483.6 L1210.5 480.5 L1211.0 484.2 L1211.5 478.5 L1212.0 484.2 L1212.5 479.3 L1213.0 484.1 L1213.5 480.9 L1214.0 483.8 L1214.5 479.7 L1215.0 485.4 L1215.5 480.6 L1216.0 483.6 L1216.5 480.0 L1217.0 486.1 L1217.5 480.9 L1218.0 484.0 L1218.5 479.7 L1219.0 484.7 L1219.5 481.0 L1220.0 484.1 L1220.5 481.0 L1221.0 484.8 L1221.5 480.6 L1222.0 484.0 L1222.5 480.6 L1223.0 483.8 L1223.5 478.9 L1224.0 484.8 L1224.5 479.7 L1225.0 486.0 L1225.5 479.1 L1226.0 483.6 L1226.5 479.5 L1227.0 485.3 L1227.5 480.6 L1228.0 483.9 L1228.5 480.6 L1229.0 483.9 L1229.5 479.6 L1230.0 483.5 L1230.5 480.9 L1231.0 484.4 L1231.5 481.1 L1232.0 483.9 L1232.5 480.3 L1233.0 484.6 L1233.5 480.0 L1234.0 483.6 L1234.5 480.0 L1235.0 484.6 L1235.5 479.5 L1236.0 484.0 L1236.5 480.5 L1237.0 484.5 L1237.5 480.1 L1238.0 483.8 L1238.5 478.4 L1239.0 483.6 L1239.5 480.5 L1240.0 484.1 L1240.5 479.8 L1241.0 484.6 L1241.5 477.9 L1242.0 483.7 L1242.5 480.1 L1243.0 484.1 L1243.5 480.2 L1244.0 484.7 L1244.5 480.6 L1245.0 484.4 L1245.5 480.9 L1246.0 484.7 L1246.5 480.3 L1247.0 484.7 L1247.5 480.0 L1248.0 485.2 L1248.5 479.9 L1249.0 486.3 L1249.5 481.0 L1250.0 485.4 L1250.5 481.8 L1251.0 486.1 L1251.5 479.1 L1252.0 484.7 L1252.5 480.8 L1253.0 485.1 L1253.5 480.6 L1254.0 486.3 L1254.5 481.3 L1255.0 483.9 L1255.5 479.8 L1256.0 483.8 L1256.5 478.0 L1257.0 485.0 L1257.5 480.3 L1258.0 485.9 L1258.5 479.0 L1259.0 484.8 L1259.5 479.2 L1260.0 484.7 L1260.5 479.9 L1261.0 483.5 L1261.5 480.0 L1262.0 484.5 L1262.5 480.0 L1263.0 483.0 L1263.5 479.1 L1264.0 483.4 L1264.5 478.8 L1265.0 484.4 L1265.5 478.9 L1266.0 483.7 L1266.5 479.8 L1267.0 484.0 L1267.5 478.0 L1268.0 484.4 L1268.5 480.0 L1269.0 484.3 L1269.5 479.8 L1270.0 485.0 L1270.5 478.8 L1271.0 485.5 L1271.5 480.3 L1272.0 484.6 L1272.5 480.8 L1273.0 484.4 L1273.5 479.9 L1274.0 483.3 L1274.5 480.0 L1275.0 484.0 L1275.5 479.8 L1276.0 484.5 L1276.5 479.7 L1277.0 483.8 L1277.5 478.4 L1278.0 484.0 L1278.5 480.0 L1279.0 485.0 L1279.5 480.0 L1280.0 484.7 L1280.5 479.7 L1281.0 484.0 L1281.5 479.5 L1282.0 482.9 L1282.5 479.8 L1283.0 485.3 L1283.5 479.7 L1284.0 485.4 L1284.5 478.2 L1285.0 484.0 L1285.5 480.6 L1286.0 484.1 L1286.5 480.0 L1287.0 486.1 L1287.5 479.6 L1288.0 483.6 L1288.5 479.5 L1289.0 484.2 L1289.5 479.9 L1290.0 485.0 L1290.5 480.6 L1291.0 483.3 L1291.5 479.6 L1292.0 484.2 L1292.5 479.4 L1293.0 484.1 L1293.5 480.2 L1294.0 483.9 L1294.5 480.1 L1295.0 483.1 L1295.5 480.2 L1296.0 482.6 L1296.5 479.7 L1297.0 483.2 L1297.5 479.9 L1298.0 483.3 L1298.5 476.9 L1299.0 484.5 L1299.5 479.0 L1300.0 483.8 L1300.5 480.4 L1301.0 484.7 L1301.5 479.9 L1302.0 485.5 L1302.5 480.8 L1303.0 484.1 L1303.5 480.8 L1304.0 485.5 L1304.5 479.3 L1305.0 484.6 L1305.5 481.0 L1306.0 484.2 L1306.5 480.4 L1307.0 484.6 L1307.5 480.8 L1308.0 487.4 L1308.5 480.1 L1309.0 484.7 L1309.5 481.0 L1310.0 485.8 L1310.5 479.4 L1311.0 484.4 L1311.5 478.6 L1312.0 484.3 L1312.5 479.6 L1313.0 485.2 L1313.5 480.4 L1314.0 483.9 L1314.5 480.4 L1315.0 484.9 L1315.5 478.9 L1316.0 486.5 L1316.5 480.7 L1317.0 485.2 L1317.5 480.3 L1318.0 485.4 L1318.5 480.9 L1319.0 485.7 L1319.5 481.1 L1320.0 485.7 L1320.5 480.6 L1321.0 485.9 L1321.5 481.9 L1322.0 485.6 L1322.5 480.7 L1323.0 485.7 L1323.5 481.9 L1324.0 484.9 L1324.5 481.4 L1325.0 487.6 L1325.5 480.8 L1326.0 484.7 L1326.5 481.8 L1327.0 486.1 L1327.5 480.5 L1328.0 484.6 L1328.5 480.0 L1329.0 485.9 L1329.5 481.2 L1330.0 484.7 L1330.5 481.5 L1331.0 484.6 L1331.5 481.0 L1332.0 484.8 L1332.5 480.8 L1333.0 484.6 L1333.5 479.5 L1334.0 486.1 L1334.5 477.9 L1335.0 485.6 L1335.5 478.2 L1336.0 485.0 L1336.5 481.2 L1337.0 485.1 L1337.5 481.0 L1338.0 484.8 L1338.5 481.1 L1339.0 486.0 L1339.5 480.2 L1340.0 485.7 L1340.5 480.9 L1341.0 484.5 L1341.5 479.2 L1342.0 484.9 L1342.5 480.4 L1343.0 485.1 L1343.5 480.8 L1344.0 487.0 L1344.5 480.8 L1345.0 484.4 L1345.5 479.6 L1346.0 484.3 L1346.5 480.2 L1347.0 485.1 L1347.5 480.2 L1348.0 484.2 L1348.5 480.6 L1349.0 485.2 L1349.5 479.9 L1350.0 484.9 L1350.5 481.0 L1351.0 484.3 L1351.5 481.0 L1352.0 484.2 L1352.5 479.8 L1353.0 483.4 L1353.5 480.1 L1354.0 484.2 L1354.5 480.3 L1355.0 484.0 L1355.5 481.0 L1356.0 484.6 L1356.5 479.9 L1357.0 484.6 L1357.5 479.5 L1358.0 484.3 L1358.5 481.3 L1359.0 484.3 L1359.5 481.4 L1360.0 484.3 L1360.5 481.2 L1361.0 484.1 L1361.5 480.6 L1362.0 484.3 L1362.5 480.9 L1363.0 484.5 L1363.5 479.3 L1364.0 484.6 L1364.5 480.3 L1365.0 485.1 L1365.5 481.2 L1366.0 486.6 L1366.5 481.2 L1367.0 486.5 L1367.5 480.1 L1368.0 483.4 L1368.1 481.5 L1368.3 486.7 L1368.4 484.2 L1368.5 489.5 L1368.7 486.0 L1368.8 493.9 L1368.9 489.6 L1369.0 494.7 L1369.2 491.2 L1369.3 498.1 L1369.4 495.6 L1369.6 500.4 L1369.7 499.0 L1369.8 504.1 L1370.0 502.0 L1370.1 506.3 L1370.2 503.5 L1370.3 509.1 L1370.5 506.3 L1370.6 511.7 L1370.7 508.7 L1370.9 514.4 L1371.0 512.8 L1371.5 516.8 L1372.0 514.2 L1372.5 518.4 L1373.0 515.8 L1373.5 520.6 L1373.9 516.7 L1374.4 522.3 L1374.9 520.6 L1375.4 525.3 L1375.9 521.9 L1376.4 526.0 L1376.9 523.6 L1377.4 527.5 L1377.9 526.2 L1378.3 529.7 L1378.8 528.0 L1379.3 531.4 L1379.8 529.8 L1380.3 533.0 L1380.8 531.8 L1381.3 534.2 L1381.8 533.2 L1382.3 536.2 L1382.8 534.6 L1383.3 536.4 L1383.8 534.5 L1384.3 537.5 L1384.8 536.5 L1385.3 538.7 L1385.8 536.7 L1386.3 539.7 L1386.8 537.8 L1387.3 540.3 L1387.8 538.7 L1388.2 541.8 L1388.7 540.7 L1389.2 543.0 L1389.7 542.1 L1390.2 543.5 L1390.7 542.5 L1391.2 545.5 L1391.7 543.6 L1392.2 545.8 L1392.7 544.4 L1393.2 547.8 L1393.7 545.6 L1394.2 547.6 L1394.7 545.8 L1395.2 548.5 L1395.7 547.8 L1396.2 550.2 L1396.7 548.6 L1397.2 550.3 L1397.7 549.0 L1398.2 551.8 L1398.7 549.3 L1399.2 553.1 L1399.7 550.8 L1400.2 553.1 L1400.7 551.6 L1401.2 553.7 L1401.7 552.3 L1402.1 555.6 L1402.6 553.6 L1403.1 556.1 L1403.6 554.0 L1404.1 558.0 L1404.6 556.4 L1405.1 558.3 L1405.6 557.2 L1406.1 559.7 L1406.6 558.4 L1407.1 561.4 L1407.6 559.8 L1408.1 561.9 L1408.6 560.5 L1409.1 562.6 L1409.6 560.5 L1410.1 563.1 L1410.6 560.1 L1411.1 562.1 L1411.6 561.0 L1412.1 562.3 L1412.6 560.9 L1413.1 562.9 L1413.6 561.4 L1414.1 563.3 L1414.6 561.1 L1415.1 563.5 L1415.5 561.6 L1416.0 564.1 L1416.5 562.0 L1417.0 563.9 L1417.5 562.0 L1418.0 563.9 L1418.5 562.2 L1419.0 563.9 L1419.5 562.5 L1420.0 564.3 L1420.5 562.4 L1421.0 564.4 L1421.5 562.7 L1422.0 565.0 L1422.5 563.4 L1423.0 564.8 L1423.5 563.1 L1424.0 565.1 L1424.5 562.8 L1425.0 564.1 L1425.5 562.6 L1426.0 564.6 L1426.5 562.7 L1427.0 563.7 L1427.5 561.8 L1428.0 563.5 L1428.5 562.1 L1429.0 563.6 L1429.5 561.9 L1429.9 563.2 L1430.4 561.1 L1430.9 562.9 L1431.4 561.4 L1431.9 563.5 L1432.4 560.3 L1432.9 562.7 L1433.4 560.8 L1433.9 562.3 L1434.4 559.9 L1434.9 562.2 L1435.4 560.1 L1435.9 562.0 L1436.4 559.4 L1436.9 562.0 L1437.4 560.7 L1437.9 562.4 L1438.4 561.2 L1438.9 563.9 L1439.4 561.3 L1440.0 564.1 L1440.5 561.7 L1441.0 563.8 L1441.5 562.9 L1442.0 565.5 L1442.5 564.0 L1443.0 565.9 L1443.1 565.2 L1443.2 569.0 L1443.3 567.4 L1443.4 572.3 L1443.5 571.2 L1443.6 574.1 L1443.7 573.4 L1443.8 577.5 L1443.9 576.9 L1444.0 580.4 L1444.0 579.0 L1444.1 582.3 L1444.2 582.4 L1444.3 585.4 L1444.4 585.5 L1444.5 588.6 L1444.6 588.4 L1444.7 591.4 L1444.8 591.3 L1444.9 595.8 L1445.0 593.0 L1445.5 597.1 L1446.0 595.0 L1446.5 597.9 L1447.0 596.0 L1447.5 601.0 L1448.0 598.8 L1448.5 602.0 L1449.0 599.7 L1449.5 602.4 L1450.0 600.5 L1450.5 603.5 L1451.0 602.4 L1451.5 605.1 L1452.0 603.8 L1452.5 607.0 L1453.0 605.7 L1453.5 609.0 L1454.0 605.9 L1454.5 609.3 L1455.0 607.7 L1455.5 609.8 L1456.0 608.8 L1456.5 611.0 L1457.0 608.7 L1457.5 612.6 L1458.0 611.2 L1458.5 613.9 L1459.0 611.8 L1459.5 615.7 L1460.0 613.8 L1460.5 616.3 L1461.0 613.9 L1461.5 617.7 L1462.0 615.9 L1462.5 618.9 L1463.0 617.2 L1463.5 620.5 L1464.0 618.4 L1464.5 621.5 L1465.0 619.8 L1465.5 622.8 L1466.0 620.3 L1466.5 622.7 L1467.0 621.1 L1467.5 623.6 L1468.0 621.9 L1468.5 625.0 L1469.0 622.9 L1469.5 625.2 L1470.0 623.1 L1470.5 626.6 L1471.0 624.6 L1471.5 626.9 L1472.0 624.4 L1472.5 628.0 L1473.0 626.2 L1473.5 629.2 L1474.0 626.8 L1474.5 629.3 L1475.0 628.1 L1475.5 630.0 L1476.0 628.9 L1476.5 631.2 L1477.0 628.5 L1477.5 632.6 L1478.0 630.2 L1478.5 632.5 L1479.0 630.6 L1479.5 633.5 L1480.0 631.8 L1480.5 633.6 L1481.0 632.0 L1481.5 634.8 L1482.0 632.0 L1482.5 635.1 L1483.0 632.5 L1483.5 635.0 L1484.0 634.2 L1484.5 636.6 L1485.0 634.3 L1485.5 638.2 L1486.0 635.7 L1486.5 637.6 L1487.0 636.1 L1487.5 638.3 L1488.0 635.9 L1488.5 638.2 L1489.0 636.0 L1489.5 639.7 L1490.0 636.6 L1490.5 639.3 L1491.0 635.8 L1491.5 639.2 L1492.0 637.5 L1492.5 640.6 L1493.0 636.7 L1493.5 640.0 L1494.0 638.3 L1494.6 640.0 L1495.1 637.5 L1495.6 640.6 L1496.1 637.8 L1496.6 639.9 L1497.1 637.2 L1497.6 640.1 L1498.1 638.7 L1498.6 640.4 L1499.1 637.6 L1499.6 641.5 L1500.1 638.5 L1500.6 640.8 L1501.1 637.4 L1501.6 640.4 L1502.1 638.5 L1502.7 640.9 L1503.2 639.3 L1503.7 642.1 L1504.2 639.0 L1504.7 641.1 L1505.2 637.8 L1505.7 641.9 L1506.2 639.1 L1506.7 641.4 L1507.2 638.4 L1507.7 641.3 L1508.2 639.4 L1508.7 642.2 L1509.2 639.4 L1509.7 642.4 L1510.2 639.2 L1510.7 641.3 L1511.2 639.0 L1511.7 641.6 L1512.2 639.6 L1512.7 641.9 L1513.2 638.0 L1513.7 642.0 L1514.2 638.6 L1514.7 642.4 L1515.2 639.8 L1515.7 642.0 L1516.2 640.2 L1516.7 642.7 L1517.2 640.3 L1517.7 642.8 L1518.2 640.3 L1518.7 642.0 L1519.2 639.9 L1519.7 642.7 L1520.1 639.7 L1520.6 642.8 L1521.1 640.4 L1521.6 642.3 L1522.1 639.8 L1522.6 642.6 L1523.1 639.4 L1523.6 643.4 L1524.1 640.6 L1524.6 642.4 L1525.1 640.7 L1525.6 642.5 L1526.1 639.9 L1526.6 643.3 L1527.1 639.7 L1527.6 642.6 L1528.1 640.4 L1528.6 642.4 L1529.1 640.5 L1529.6 643.4 L1530.1 640.4 L1530.6 642.7 L1531.1 639.0 L1531.6 642.7 L1532.1 640.4 L1532.6 642.0 L1533.1 640.3 L1533.6 642.4 L1534.1 638.7 L1534.6 642.9 L1535.1 639.8 L1535.6 642.6 L1536.1 640.5 L1536.6 642.5 L1537.1 640.2 L1537.6 642.3 L1538.1 639.7 L1538.6 642.2 L1539.1 640.1 L1539.6 643.0 L1540.1 639.8 L1540.6 643.3 L1541.1 638.6 L1541.6 642.8 L1542.1 640.1 L1542.6 642.7 L1543.1 639.6 L1543.6 643.7 L1544.1 639.8 L1544.6 643.0 L1545.1 640.6 L1545.6 643.0 L1546.1 640.1 L1546.6 643.4 L1547.0 641.5 L1547.5 643.4 L1548.0 641.1 L1548.5 645.0 L1549.0 640.7 L1549.5 642.9 L1550.0 641.1 L1550.5 643.0 L1551.0 640.1 L1551.5 643.1 L1552.0 641.0 L1552.5 642.9 L1553.0 639.7 L1553.5 642.7 L1554.0 640.6 L1554.5 643.7 L1555.0 640.5 L1555.5 643.1 L1556.0 639.7 L1556.5 643.3 L1557.0 640.8 L1557.5 643.5 L1558.0 640.2 L1558.5 643.3 L1559.0 640.1 L1559.5 643.6 L1560.0 640.8 L1560.5 645.1 L1561.0 641.3 L1561.5 644.1 L1562.0 640.5 L1562.5 643.4 L1563.0 641.4 L1563.5 644.1 L1564.0 640.9 L1564.5 644.9 L1565.0 641.8 L1565.5 643.5 L1566.0 641.3 L1566.5 643.5 L1567.0 639.7 L1567.5 643.4 L1568.0 641.1 L1568.5 644.6 L1569.0 640.4 L1569.5 643.4 L1570.0 641.4 L1570.5 645.0 L1571.0 641.2 L1571.5 644.8 L1572.0 641.4 L1572.5 644.3 L1573.0 641.8 L1573.5 644.1 L1574.0 641.5 L1574.5 645.2 L1575.0 641.5 L1575.5 643.8 L1576.0 641.4 L1576.5 644.5 L1577.0 641.9 L1577.5 645.5 L1578.0 642.2 L1578.5 645.8 L1579.0 642.4 L1579.5 645.9 L1580.0 642.1 L1580.5 644.3 L1581.0 641.5 L1581.5 644.2 L1582.0 641.8 L1582.5 644.1 L1583.0 641.3 L1583.5 644.6 L1584.0 641.0 L1584.5 644.7 L1585.0 642.8 L1585.5 646.3 L1586.0 642.2 L1586.5 644.6 L1587.0 642.3 L1587.5 646.0 L1588.0 641.8 L1588.5 645.0 L1589.0 641.5 L1589.5 644.9 L1590.0 640.8 L1590.5 644.5 L1591.0 642.2 L1591.5 645.0 L1592.0 642.8 L1592.5 645.7 L1593.0 641.8 L1593.5 646.2 L1594.0 641.8 L1594.5 646.2 L1595.0 642.3 L1595.5 646.5 L1596.0 641.8 L1596.5 646.1 L1597.0 641.7 L1597.5 645.8 L1598.0 643.4 L1598.5 645.8 L1599.0 642.9 L1599.5 646.7 L1600.0 643.5 L1600.5 647.3 L1601.0 643.7 L1601.5 646.5 L1602.0 644.7 L1602.5 647.0 L1603.0 644.5 L1603.5 646.2 L1604.0 643.2 L1604.5 646.4 L1605.0 643.6 L1605.5 646.8 L1606.0 642.7 L1606.5 647.8 L1607.0 644.5 L1607.5 648.0 L1608.0 644.5 L1608.5 647.3 L1609.0 645.2 L1609.5 647.7 L1610.0 644.2 L1610.5 648.6 L1611.0 643.8 L1611.5 648.1 L1612.0 643.4 L1612.5 647.8 L1613.0 644.7 L1613.5 647.9 L1614.0 644.6 L1614.5 647.0 L1615.0 644.4 L1615.5 647.7 L1616.0 644.1 L1616.5 647.4 L1617.0 644.8 L1617.5 647.6 L1618.0 644.3 L1618.5 648.0 L1619.0 645.0 L1619.5 647.7 L1620.0 644.1 L1620.5 648.3 L1621.0 643.6 L1621.5 647.6 L1622.0 644.4 L1622.5 647.3 L1623.0 644.8 L1623.5 647.8 L1624.0 642.7 L1624.5 647.5 L1625.0 643.8 L1625.5 647.8 L1626.0 644.8 L1626.5 648.1 L1627.0 644.1 L1627.5 647.4 L1628.0 644.4 L1628.5 647.8 L1629.0 645.1 L1629.5 648.2 L1630.0 645.0 L1630.5 648.0 L1631.0 644.7 L1631.5 647.2 L1632.0 644.7 L1632.5 647.3 L1633.0 643.7 L1633.5 648.1 L1634.0 645.3 L1634.5 648.8 L1635.0 643.6 L1635.5 649.1 L1636.0 645.0 L1636.5 647.9 L1637.0 645.3 L1637.5 647.7 L1638.0 645.4 L1638.5 648.5 L1639.0 645.5 L1639.5 648.4 L1640.0 644.8 L1640.5 648.4 L1641.0 645.4 L1641.5 649.7 L1642.0 644.7 L1642.5 647.3 L1643.0 644.8 L1643.5 647.3 L1644.0 644.6 L1644.5 647.5 L1645.0 644.4 L1645.5 646.8 L1646.0 644.0 L1646.5 646.6 L1646.9 644.5 L1647.4 646.9 L1647.9 643.4 L1648.4 646.5 L1648.9 644.5 L1649.4 647.5 L1649.9 644.3 L1650.4 647.2 L1650.9 644.9 L1651.4 647.8 L1651.9 644.9 L1652.4 647.6 L1652.9 645.1 L1653.4 649.5 L1653.9 643.7 L1654.4 647.7 L1654.9 643.1 L1655.4 648.6 L1655.9 645.2 L1656.4 648.3 L1656.9 645.5 L1657.4 648.5 L1657.9 645.3 L1658.4 647.3 L1658.9 644.8 L1659.4 647.4 L1659.9 645.4 L1660.4 648.9 L1660.9 645.4 L1661.4 648.6 L1661.9 644.9 L1662.4 649.1 L1662.9 645.3 L1663.4 648.5 L1663.9 644.8 L1664.4 648.3 L1664.9 645.0 L1665.4 648.3 L1665.9 645.3 L1666.4 648.1 L1666.9 644.6 L1667.4 647.9 L1667.9 645.1 L1668.4 648.7 L1668.9 645.1 L1669.4 648.4 L1669.9 646.0 L1670.4 648.9 L1670.9 645.5 L1671.4 648.8 L1671.9 644.7 L1672.4 649.0 L1672.9 644.6 L1673.4 648.2 L1673.9 645.2 L1674.4 648.6 L1674.9 645.8 L1675.4 648.9 L1675.9 646.0 L1676.4 648.7 L1676.9 645.6 L1677.4 648.2 L1677.9 646.0 L1678.4 648.0 L1678.9 644.4 L1679.4 648.2 L1679.9 644.2 L1680.4 649.1 L1680.9 644.4 L1681.4 648.4 L1681.9 645.6 L1682.4 649.0 L1682.9 645.6 L1683.4 648.4 L1683.9 645.8 L1684.4 648.5 L1684.9 647.1 L1685.5 650.9 L1686.0 647.4 L1686.5 652.3 L1687.0 649.6 L1687.5 653.3 L1688.0 649.5 L1688.5 652.4 L1689.0 650.0 L1689.5 652.5 L1690.0 649.6 L1690.5 652.2 L1691.0 649.4 L1691.5 652.1 L1692.0 649.8 L1692.5 653.6 L1693.0 649.3 L1693.5 652.2 L1694.0 649.0 L1694.5 652.3 L1695.0 649.0 L1695.5 651.2 L1696.0 649.1 L1696.5 651.5 L1697.0 648.4 L1697.5 652.4 L1698.0 649.1 L1698.5 653.0 L1699.0 648.3 L1699.5 652.1 L1700.0 649.6 L1700.5 653.1 L1701.0 648.6 L1701.5 652.0 L1702.0 648.7 L1702.5 653.4 L1703.0 649.4 L1703.5 654.2 L1704.0 649.4 L1704.5 653.7 L1705.0 649.5 L1705.5 654.2 L1706.0 649.2 L1706.5 652.6 L1707.0 649.8 L1707.5 653.1 L1708.0 649.6 L1708.3 654.1 L1708.6 652.6 L1708.8 657.1 L1709.1 655.6 L1709.4 660.1 L1709.9 659.2 L1710.4 663.2 L1710.9 659.8 L1711.4 666.0 L1711.9 664.9 L1712.5 669.0 L1713.0 666.2 L1713.5 673.4 L1714.0 669.1 L1714.5 674.2 L1715.0 672.8 L1715.5 676.7 L1716.0 673.6 L1716.5 677.4 L1717.0 675.3 L1717.5 679.3 L1718.0 675.9 L1718.5 681.1 L1719.0 676.7 L1719.5 681.6 L1720.0 678.7 L1720.6 682.1 L1721.1 679.8 L1721.6 682.5 L1722.1 678.9 L1722.6 684.2 L1723.1 680.8 L1723.7 684.7 L1724.2 681.8 L1724.7 686.0 L1725.2 680.4 L1725.7 685.4 L1726.2 680.2 L1726.7 683.5 L1727.2 679.6 L1727.7 683.7 L1728.2 679.6 L1728.7 681.9 L1729.2 678.7 L1729.7 682.5 L1730.2 677.0 L1730.7 680.7 L1731.2 675.9 L1731.7 679.4 L1732.2 675.5 L1732.7 678.4 L1733.2 673.7 L1733.7 677.9 L1734.2 673.8 L1734.7 676.2 L1735.2 671.4 L1735.7 676.5 L1736.2 672.8 L1736.7 675.2 L1737.2 672.2 L1737.7 674.8 L1738.2 670.7 L1738.7 674.3 L1739.2 670.3 L1739.7 674.1 L1740.2 669.9 L1740.7 672.6 L1741.2 668.2 L1741.7 672.3 L1742.2 668.1 L1742.7 670.0 L1743.2 667.4 L1743.7 669.3 L1744.2 665.6 L1744.7 669.4 L1745.2 664.6 L1745.7 667.6 L1746.2 665.5 L1746.7 670.1 L1747.2 665.5 L1747.7 669.4 L1748.2 666.6 L1748.7 670.3 L1749.2 666.6 L1749.7 671.9 L1750.2 669.2 L1750.7 673.5 L1751.2 668.9 L1751.7 673.3 L1752.2 670.4 L1752.7 673.6 L1753.2 672.2 L1753.7 675.1 L1754.2 671.9 L1754.7 675.2 L1755.2 673.1 L1755.7 676.6 L1756.2 673.0 L1756.7 677.1 L1757.2 674.6 L1757.6 677.9 L1758.1 675.0 L1758.6 678.9 L1759.1 676.1 L1759.6 680.2 L1760.1 676.5 L1760.6 680.2 L1761.1 677.6 L1761.6 680.9 L1762.1 678.7 L1762.6 681.6 L1763.1 679.7 L1763.6 683.6 L1764.1 680.5 L1764.6 684.3 L1765.1 680.7 L1765.6 684.6 L1766.1 681.9 L1766.6 685.5 L1767.1 683.3 L1767.6 686.7 L1768.1 683.5 L1768.6 686.7 L1769.1 683.5 L1769.6 686.2 L1770.1 682.6 L1770.6 685.5 L1771.1 682.2 L1771.6 684.7 L1772.1 681.2 L1772.6 684.1 L1773.1 681.0 L1773.6 683.5 L1774.0 680.8 L1774.5 682.9 L1775.0 680.3 L1775.5 683.2 L1776.0 679.5 L1776.5 681.9 L1777.0 678.3 L1777.5 681.1 L1778.0 678.4 L1778.5 680.1 L1779.0 677.1 L1779.5 679.9 L1780.0 676.6 L1780.5 679.7 L1781.0 675.6 L1781.5 678.1 L1782.0 674.8 L1782.5 678.3 L1783.0 674.2 L1783.5 677.8 L1784.0 673.3 L1784.4 677.9 L1784.9 673.5 L1785.4 677.3 L1785.9 672.9 L1786.4 675.5 L1786.9 671.3 L1787.4 675.2 L1787.9 671.9 L1788.4 676.2 L1788.9 669.2 L1789.4 673.4 L1789.9 670.1 L1790.4 673.0 L1790.9 669.7 L1791.4 672.9 L1791.9 668.6 L1792.4 671.3 L1792.9 667.5 L1793.4 670.7 L1793.9 666.2 L1794.4 669.9 L1794.9 664.4 L1795.4 668.9 L1795.9 663.5 L1796.3 667.7 L1796.8 664.5 L1797.3 667.1 L1797.8 663.6 L1798.3 667.6 L1798.8 663.1 L1799.3 666.3 L1799.8 662.3 L1800.3 666.2 L1800.8 661.8 L1801.3 665.1 L1801.8 660.5 L1802.3 663.2 L1802.8 659.8 L1803.3 664.4 L1803.8 657.5 L1804.3 661.5 L1804.8 656.9 L1805.4 658.7 L1805.9 654.5 L1806.4 657.6 L1806.9 652.0 L1807.4 654.7 L1807.9 648.8 L1808.5 651.7 L1809.0 648.3 L1809.5 650.5 L1810.0 646.5 L1810.2 651.1 L1810.3 648.3 L1810.5 653.8 L1810.7 652.0 L1810.8 656.2 L1811.0 654.7 L1811.2 660.0 L1811.4 657.5 L1811.5 661.4 L1811.7 660.0 L1812.2 662.7 L1812.7 659.0 L1813.2 665.5 L1813.7 660.6 L1814.2 662.8 L1814.7 660.4 L1815.1 663.6 L1815.6 658.8 L1816.1 664.4 L1816.6 659.2 L1817.1 662.8 L1817.6 659.4 L1818.1 662.1 L1818.6 659.3 L1819.1 662.7 L1819.6 659.1 L1820.1 662.3 L1820.6 658.0 L1821.0 663.2 L1821.5 657.3 L1822.0 661.0 L1822.5 658.7 L1823.0 661.2 L1823.5 658.1 L1824.0 662.4 L1824.5 658.8 L1825.0 662.8 L1825.5 658.6 L1826.0 662.5 L1826.5 659.4 L1827.0 663.3 L1827.5 658.4 L1828.0 663.0 L1828.5 659.0 L1829.0 664.2 L1829.5 661.0 L1830.0 664.7 L1830.5 661.8 L1831.0 665.4 L1831.5 662.1 L1832.0 666.4 L1832.5 662.5 L1833.0 665.9 L1833.5 663.4 L1834.0 666.5 L1834.5 664.2 L1835.0 666.4 L1835.5 663.1 L1836.0 667.0 L1836.5 664.4 L1837.0 669.1 L1837.5 663.8 L1838.0 667.4 L1838.5 665.0 L1839.0 668.1 L1839.5 665.2 L1840.0 668.2 L1840.5 666.0 L1841.0 668.7 L1841.5 666.7 L1842.0 669.2 L1842.5 667.2 L1843.0 669.9 L1843.5 667.4 L1844.0 670.6 L1844.5 667.3 L1845.0 671.3 L1845.5 667.6 L1846.0 672.4 L1846.5 668.2 L1847.0 673.9 L1847.5 669.5 L1848.0 672.7 L1848.5 669.8 L1849.0 672.7 L1849.5 670.2 L1850.0 673.0 L1850.5 667.9 L1851.0 673.2 L1851.5 670.2 L1852.0 673.4 L1852.4 670.2 L1852.9 674.6 L1853.4 671.5 L1853.9 675.0 L1854.4 671.7 L1854.9 675.3 L1855.4 671.8 L1855.9 675.0 L1856.4 672.7 L1856.9 675.6 L1857.4 673.0 L1857.9 676.5 L1858.4 673.7 L1858.9 677.1 L1859.4 674.2 L1859.9 677.7 L1860.4 674.5 L1860.9 678.6 L1861.4 674.9 L1861.9 679.4 L1862.4 676.3 L1862.9 679.0 L1863.4 676.7 L1863.9 679.5 L1864.4 675.8 L1864.9 680.7 L1865.4 677.3 L1865.8 682.3 L1866.3 678.0 L1866.8 681.4 L1867.3 677.6 L1867.8 681.8 L1868.3 679.0 L1868.8 681.5 L1869.3 678.5 L1869.8 683.3 L1870.3 678.2 L1870.8 682.2 L1871.3 679.7 L1871.8 684.4 L1872.3 680.7 L1872.8 683.3 L1873.3 679.9 L1873.8 684.6 L1874.3 680.8 L1874.8 684.1 L1875.3 681.6 L1875.8 686.7 L1876.3 682.3 L1876.8 686.3 L1877.3 681.3 L1877.8 686.5 L1878.3 682.4 L1878.8 686.5 L1879.3 682.8 L1879.9 686.5 L1880.4 684.2 L1880.9 687.8 L1881.4 683.4 L1881.9 689.6 L1882.4 684.7 L1882.9 688.8 L1883.4 685.4 L1883.9 688.2 L1884.4 683.6 L1884.9 688.7 L1885.4 685.0 L1885.9 689.7 L1886.4 686.6 L1886.9 690.2 L1887.4 686.5 L1887.9 690.2 L1888.4 686.6 L1888.9 691.5 L1889.4 686.5 L1889.9 690.2 L1890.4 685.9 L1890.9 691.8 L1891.4 688.6 L1891.9 691.2 L1892.4 689.0 L1892.9 692.8 L1893.5 689.6 L1894.0 692.3 L1894.5 690.2 L1895.0 693.7 L1895.5 690.0 L1896.0 695.1 L1896.5 690.2 L1897.0 693.7 L1897.5 689.6 L1898.0 694.7 L1898.5 691.4 L1899.0 694.4 L1899.5 691.4 L1900.0 694.4 L1900.5 692.4 L1901.0 694.8 L1901.5 691.7 L1902.0 694.8 L1902.5 692.4 L1903.0 695.6 L1903.5 690.3 L1904.0 695.5 L1904.5 691.0 L1905.0 695.4 L1905.5 692.1 L1906.0 695.4 L1906.5 693.1 L1907.0 695.7 L1907.5 692.7 L1908.0 695.7 L1908.5 693.3 L1909.0 696.3 L1909.5 692.6 L1910.0 696.8 L1910.5 692.8 L1911.0 696.4 L1911.5 692.7 L1912.0 697.8 L1912.5 694.4 L1913.0 699.4 L1913.5 694.6 L1914.0 698.0 L1914.5 692.7 L1915.0 697.9 L1915.5 694.5 L1916.0 697.7 L1916.5 694.9 L1917.0 698.8 L1917.5 695.0 L1918.0 700.3 L1918.5 695.5 L1919.0 700.1 L1919.5 695.7 L1920.0 698.6 L1920.5 694.1 L1921.0 699.3 L1921.5 696.1 L1922.0 699.5 L1922.5 695.9 L1923.0 698.3 L1923.5 696.2 L1924.0 698.9 L1924.5 694.8 L1925.0 699.1 L1925.5 695.1 L1926.0 700.1 L1926.5 696.7 L1927.0 699.3 L1927.5 695.8 L1928.0 700.1 L1928.5 696.9 L1929.0 699.6 L1929.5 696.2 L1930.0 700.4 L1930.5 695.3 L1931.0 700.2 L1931.5 697.4 L1932.0 699.9 L1932.5 697.2 L1933.0 699.8 L1933.5 696.0 L1934.0 701.7 L1934.5 696.6 L1935.0 700.6 L1935.6 695.8 L1936.1 700.3 L1936.6 697.8 L1937.1 701.0 L1937.6 696.6 L1938.1 700.3 L1938.6 695.9 L1939.1 700.8 L1939.6 696.3 L1940.1 700.8 L1940.6 697.5 L1941.1 700.6 L1941.6 697.4 L1942.1 701.5 L1942.6 698.4 L1943.1 702.0 L1943.6 698.5 L1944.1 702.7 L1944.6 698.6 L1945.1 702.3 L1945.6 697.9 L1946.1 702.5 L1946.6 698.2 L1947.1 702.4 L1947.6 698.3 L1948.1 701.7 L1948.6 698.3 L1949.1 701.6 L1949.6 697.6 L1950.1 702.0 L1950.6 698.3 L1951.1 701.7 L1951.6 696.5 L1952.1 701.9 L1952.6 698.5 L1953.1 701.5 L1953.6 697.2 L1954.1 701.5 L1954.6 698.7 L1955.1 703.6 L1955.6 699.3 L1956.1 703.1 L1956.7 699.7 L1957.2 703.1 L1957.7 698.5 L1958.2 704.0 L1958.7 698.8 L1959.2 702.9 L1959.7 698.3 L1960.2 704.6 L1960.7 698.8 L1961.2 703.0 L1961.7 699.7 L1962.2 705.4 L1962.7 700.4 L1963.2 704.1 L1963.7 700.7 L1964.2 703.6 L1964.7 700.6 L1965.2 705.0 L1965.7 701.2 L1966.2 703.7 L1966.7 701.0 L1967.2 704.5 L1967.7 700.6 L1968.2 704.5 L1968.7 700.5 L1969.2 703.9 L1969.7 700.9 L1970.2 704.7 L1970.7 700.6 L1971.2 703.6 L1971.7 700.9 L1972.2 703.3 L1972.7 701.1 L1973.2 703.5 L1973.7 700.9 L1974.2 703.8 L1974.7 699.2 L1975.2 703.9 L1975.7 700.5 L1976.2 705.8 L1976.7 699.6 L1977.2 703.3 L1977.7 698.9 L1978.2 703.6 L1978.7 700.1 L1979.2 705.1 L1979.7 699.9 L1980.2 703.9 L1980.7 701.0 L1981.2 703.9 L1981.7 700.8 L1982.2 703.9 L1982.7 701.6 L1983.2 704.1 L1983.7 700.9 L1984.2 705.2 L1984.7 701.3 L1985.2 703.9 L1985.7 700.8 L1986.2 704.0 L1986.7 701.4 L1987.2 704.8 L1987.7 700.7 L1988.2 704.4 L1988.7 700.2 L1989.2 705.1 L1989.7 700.7 L1990.2 706.4 L1990.7 701.9 L1991.2 705.4 L1991.7 702.1 L1992.2 705.8 L1992.7 701.9 L1993.2 704.9 L1993.7 702.1 L1994.2 706.2 L1994.7 701.2 L1995.2 705.4 L1995.7 702.1 L1996.2 705.1 L1996.7 701.5 L1997.2 706.8 L1997.7 702.3 L1998.2 706.3 L1998.7 703.0 L1999.2 706.1 L1999.7 702.4 L2000.2 706.1 L2000.7 703.0 L2001.2 705.2 L2001.7 700.7 L2002.2 705.9 L2002.7 702.8 L2003.2 705.9 L2003.7 703.3 L2004.2 706.0 L2004.7 702.8 L2005.2 706.5 L2005.7 702.0 L2006.2 706.0 L2006.7 703.2 L2007.2 706.1 L2007.7 702.6 L2008.2 706.1 L2008.7 703.4 L2009.2 706.6 L2009.7 703.2 L2010.2 706.2 L2010.7 701.5 L2011.2 708.6 L2011.7 703.9 L2012.2 706.5 L2012.7 703.7 L2013.2 707.4 L2013.7 701.5 L2014.2 706.9 L2014.7 703.4 L2015.2 707.2 L2015.7 701.5 L2016.2 706.5 L2016.7 703.2 L2017.2 706.2 L2017.7 704.0 L2018.2 707.8 L2018.7 701.6 L2019.2 706.5 L2019.7 704.0 L2020.2 708.2 L2020.7 703.6 L2021.2 707.1 L2021.7 703.4 L2022.2 706.6 L2022.7 701.7 L2023.2 706.9 L2023.7 704.1 L2024.2 707.9 L2024.7 702.9 L2025.2 706.9 L2025.7 703.6 L2026.2 708.3 L2026.7 704.5 L2027.2 706.9 L2027.7 704.0 L2028.2 707.0 L2028.7 703.4 L2029.2 707.3 L2029.7 704.4 L2030.2 708.8 L2030.7 704.9 L2031.2 707.4 L2031.6 704.7 L2032.1 707.8 L2032.6 704.3 L2033.1 706.9 L2033.6 704.6 L2034.1 708.0 L2034.6 705.1 L2035.1 708.1 L2035.6 705.0 L2036.1 707.4 L2036.6 704.7 L2037.1 707.3 L2037.6 704.1 L2038.1 707.2 L2038.6 703.1 L2039.1 708.4 L2039.6 703.5 L2040.1 708.5 L2040.6 704.5 L2041.1 707.4 L2041.6 702.1 L2042.1 707.2 L2042.6 702.7 L2043.1 707.5 L2043.6 702.9 L2044.1 708.6 L2044.6 704.6 L2045.1 708.9 L2045.6 704.2 L2046.1 709.2 L2046.6 703.3 L2047.1 707.2 L2047.6 704.5 L2048.1 708.2 L2048.6 705.4 L2049.1 708.0 L2049.6 705.3 L2050.1 708.3 L2050.6 705.2 L2051.1 709.9 L2051.6 704.8 L2052.1 708.8 L2052.6 704.8 L2053.1 707.8 L2053.6 703.7 L2054.1 709.4 L2054.6 704.5 L2055.1 708.7 L2055.6 704.1 L2056.1 708.1 L2056.6 705.0 L2057.1 708.3 L2057.6 704.4 L2058.1 708.4 L2058.6 705.0 L2059.1 709.9 L2059.6 705.2 L2060.1 708.8 L2060.5 704.6 L2061.0 708.3 L2061.5 704.0 L2062.0 708.4 L2062.5 705.9 L2063.0 708.5 L2063.5 704.5 L2064.0 708.1 L2064.5 705.5 L2065.0 708.3 L2065.5 704.9 L2066.0 708.4 L2066.5 705.6 L2067.0 708.2 L2067.5 705.5 L2068.0 709.1 L2068.5 704.9 L2069.0 709.8 L2069.5 705.0 L2070.0 709.0 L2070.5 705.7 L2071.0 708.2 L2071.5 705.4 L2072.0 708.7 L2072.5 704.7 L2073.0 708.2 L2073.5 705.4 L2074.0 709.2 L2074.5 704.7 L2075.0 709.1 L2075.1 706.9 L2075.2 711.2 L2075.3 709.6 L2075.4 716.2 L2075.5 713.2 L2075.6 719.2 L2075.7 715.1 L2075.8 719.9 L2076.3 717.5 L2076.8 720.9 L2077.3 718.4 L2077.8 724.1 L2078.3 718.9 L2078.8 724.6 L2079.3 719.5 L2079.8 724.2 L2080.3 721.1 L2080.8 727.0 L2081.3 721.7 L2081.8 726.7 L2082.3 723.7 L2082.8 728.5 L2083.3 725.1 L2083.8 729.8 L2084.3 725.7 L2084.8 731.5 L2085.3 726.6 L2085.8 732.3 L2086.3 729.0 L2086.8 732.8 L2087.3 729.9 L2087.8 734.4 L2088.3 730.4 L2088.8 734.9 L2089.3 731.0 L2089.8 734.6 L2090.3 731.0 L2090.8 736.6 L2091.3 733.4 L2091.8 738.7 L2092.3 733.3 L2092.8 737.8 L2093.3 735.1 L2093.8 739.4 L2094.3 736.7 L2094.8 740.5 L2095.2 736.7 L2095.7 740.9 L2096.2 737.6 L2096.7 741.8 L2097.2 738.4 L2097.7 743.9 L2098.2 740.0 L2098.7 744.3 L2099.2 741.1 L2099.7 744.7 L2100.2 741.2 L2100.7 745.7 L2101.2 742.3 L2101.7 746.6 L2102.2 744.0 L2102.7 749.0 L2103.2 745.1 L2103.7 748.6 L2104.2 745.6 L2104.7 749.8 L2105.1 747.2 L2105.6 751.4 L2106.1 747.8 L2106.6 752.9 L2107.1 748.9 L2107.6 753.1 L2108.1 750.0 L2108.6 755.3 L2109.1 751.3 L2109.6 756.8 L2110.1 752.1 L2110.6 756.4 L2111.1 752.7 L2111.6 757.7 L2112.1 754.4 L2112.5 760.0 L2113.0 755.3 L2113.5 758.8 L2114.0 755.7 L2114.5 760.5 L2115.0 757.7 L2115.5 762.4 L2116.0 758.3 L2116.5 762.6 L2117.0 759.4 L2117.5 762.7 L2118.0 759.3 L2118.5 763.5 L2119.0 760.9 L2119.5 765.2 L2120.0 761.8 L2120.5 764.5 L2121.0 761.5 L2121.5 765.0 L2122.0 762.5 L2122.4 766.7 L2122.9 763.4 L2123.4 768.6 L2123.9 763.3 L2124.4 767.9 L2124.9 765.7 L2125.4 768.8 L2125.9 765.5 L2126.4 770.0 L2126.9 765.7 L2127.4 770.3 L2127.9 767.0 L2128.4 770.6 L2128.9 768.2 L2129.4 771.3 L2129.6 769.6 L2129.8 775.2 L2129.9 772.7 L2130.1 777.2 L2130.3 774.6 L2130.5 779.5 L2130.6 777.5 L2130.8 782.0 L2131.3 778.6 L2131.8 782.4 L2132.3 778.7 L2132.8 784.7 L2133.3 780.2 L2133.8 783.1 L2134.3 779.8 L2134.8 784.2 L2135.3 780.9 L2135.8 784.4 L2136.3 782.0 L2136.8 785.1 L2137.3 781.8 L2137.8 786.5 L2138.3 782.8 L2138.8 785.6 L2139.3 782.7 L2139.8 786.4 L2140.3 783.0 L2140.8 787.1 L2141.3 783.4 L2141.8 786.5 L2142.3 783.9 L2142.8 787.2 L2143.3 783.5 L2143.8 787.2 L2144.3 784.7 L2144.8 789.9 L2145.3 783.1 L2145.8 789.0 L2146.3 784.5 L2146.8 788.5 L2147.3 785.5 L2147.8 788.9 L2148.3 784.6 L2148.8 789.0 L2149.3 785.6 L2149.8 788.7 L2150.3 785.8 L2150.8 790.0 L2151.3 785.3 L2151.8 789.0 L2152.3 785.8 L2152.8 789.3 L2153.3 784.8 L2153.8 788.7 L2154.3 785.1 L2154.8 789.7 L2155.3 785.4 L2155.8 788.5 L2156.3 784.8 L2156.8 788.2 L2157.3 785.5 L2157.8 789.6 L2158.3 785.1 L2158.8 789.4 L2159.3 783.4 L2159.8 789.0 L2160.3 785.5 L2160.8 789.2 L2161.3 785.3 L2161.8 789.7 L2162.3 784.3 L2162.8 788.9 L2163.3 786.1 L2163.8 789.3 L2164.3 784.5 L2164.8 788.3 L2165.3 784.0 L2165.8 789.1 L2166.3 785.5 L2166.8 788.1 L2167.3 784.7 L2167.8 788.8 L2168.3 785.6 L2168.8 789.9 L2169.3 783.3 L2169.8 789.1 L2170.3 784.7 L2170.8 789.5 L2171.4 785.8 L2171.9 790.2 L2172.4 785.0 L2172.9 790.8 L2173.4 785.5 L2173.9 789.0 L2174.4 785.7 L2174.9 790.0 L2175.4 785.9 L2175.9 789.6 L2176.4 786.3 L2176.9 789.7 L2177.4 785.2 L2177.9 789.2 L2178.4 785.9 L2178.9 789.3 L2179.4 786.1 L2179.9 790.0 L2180.4 784.4 L2180.9 789.6 L2181.4 786.4 L2181.9 790.1 L2182.4 785.9 L2182.9 790.4 L2183.4 786.2 L2183.9 791.1 L2184.4 785.8 L2184.9 789.4 L2185.4 785.7 L2185.9 788.7 L2186.4 785.8 L2186.9 790.6 L2187.4 785.8 L2187.9 788.8 L2188.4 785.6 L2188.9 788.6 L2189.4 785.6 L2189.9 789.2 L2190.4 785.2 L2190.9 788.5 L2191.4 784.6 L2191.9 789.2 L2192.4 785.2 L2192.9 790.4 L2193.4 785.7 L2193.9 788.5 L2194.4 785.0 L2194.9 788.3 L2195.4 784.5 L2195.9 790.1 L2196.4 785.9 L2196.9 789.9 L2197.4 786.8 L2197.9 790.7 L2198.4 785.7 L2198.9 786.4" stroke="#00ff00" stroke-width="1.0" fill="none"/>
<path d="M997.0 420.5 L999.1 421.5 L1001.2 420.5 L1003.3 419.5 L1005.4 420.5 L1007.5 422.5 L1009.5 418.5 L1011.6 418.5 L1013.7 421.5 L1015.8 418.5 L1017.9 420.5 L1020.0 420.5 L1022.0 420.5 L1024.0 421.5 L1026.0 422.5 L1028.0 423.5 L1030.0 419.5 L1032.0 422.5 L1034.0 418.5 L1036.0 424.5 L1038.0 423.5 L1040.0 423.5 L1042.0 423.5 L1044.0 420.5 L1046.0 421.5 L1048.0 420.5 L1050.0 421.5 L1052.1 422.5 L1054.2 423.5 L1056.2 424.5 L1058.3 420.5 L1060.4 423.5 L1062.5 424.5 L1064.6 424.5 L1066.7 421.5 L1068.8 422.5 L1070.8 424.5 L1072.9 421.5 L1075.0 424.5 L1077.0 425.5 L1079.0 424.5 L1081.0 422.5 L1083.0 421.5 L1085.0 421.5 L1087.0 421.5 L1089.0 422.5 L1091.0 422.5 L1093.0 420.5 L1095.0 419.5 L1097.1 422.5 L1099.3 419.5 L1101.4 419.5 L1103.6 420.5 L1105.7 418.5 L1107.9 420.5 L1110.0 416.5 L1112.0 418.5 L1114.0 420.5 L1116.0 417.5 L1118.0 418.5 L1120.0 419.5 L1122.0 419.5 L1124.0 420.5 L1126.0 416.5 L1128.0 417.5 L1130.0 417.5 L1132.0 416.5 L1134.0 418.5 L1136.0 415.5 L1138.0 417.5 L1140.0 419.5 L1142.0 415.5 L1144.0 414.5 L1146.0 416.5 L1148.0 417.5 L1150.0 418.5 L1152.0 415.5 L1154.0 418.5 L1156.0 416.5 L1158.0 418.5 L1160.0 417.5 L1162.0 418.5 L1164.0 414.5 L1166.0 416.5 L1168.0 414.5 L1170.0 416.5 L1172.0 414.5 L1174.0 416.5 L1176.0 418.5 L1178.0 413.5 L1180.0 416.5 L1182.0 417.5 L1184.0 413.5 L1186.0 416.5 L1188.0 417.5 L1190.0 415.5 L1192.0 416.5 L1194.0 417.5 L1196.0 417.5 L1198.0 415.5 L1200.0 414.5 L1202.0 419.5 L1204.0 414.5 L1206.0 416.5 L1208.0 416.5 L1210.0 414.5 L1212.0 415.5 L1214.0 414.5 L1216.0 415.5 L1218.0 415.5 L1220.0 413.5 L1222.0 413.5 L1224.0 414.5 L1226.0 415.5 L1228.0 415.5 L1230.0 415.5 L1232.0 413.5 L1234.0 417.5 L1236.0 417.5 L1238.0 418.5 L1240.0 414.5 L1242.0 417.5 L1244.0 413.5 L1246.0 413.5 L1248.0 417.5 L1250.0 416.5 L1252.0 415.5 L1254.0 413.5 L1256.0 416.5 L1258.0 415.5 L1260.0 415.5 L1262.0 414.5 L1264.0 415.5 L1266.0 414.5 L1268.0 413.5 L1270.0 413.5 L1272.0 414.5 L1274.0 417.5 L1276.0 418.5 L1278.0 416.5 L1280.0 416.5 L1282.0 418.5 L1284.0 415.5 L1286.0 416.5 L1288.0 417.5 L1290.0 415.5 L1292.0 417.5 L1294.0 415.5 L1296.0 419.5 L1298.0 415.5 L1300.0 415.5 L1302.0 417.5 L1304.0 420.5 L1306.0 420.5 L1308.0 421.5 L1310.0 418.5 L1312.0 416.5 L1314.0 419.5 L1316.0 418.5 L1318.0 420.5 L1320.0 417.5 L1322.0 420.5 L1324.0 420.5 L1326.0 423.5 L1328.0 422.5 L1330.0 420.5 L1332.0 422.5 L1334.0 419.5 L1336.0 418.5 L1338.0 417.5 L1340.0 417.5 L1342.0 417.5 L1344.0 417.5 L1346.0 420.5 L1348.0 415.5 L1350.0 417.5 L1352.0 419.5 L1354.0 415.5 L1356.0 416.5 L1358.0 415.5 L1360.0 415.5 L1362.0 416.5 L1364.0 414.5 L1366.0 418.5 L1368.0 416.5" stroke="#ffa500" stroke-width="1.1" fill="none" stroke-linejoin="round"/>
<path d="M1369.0 418.5 L1369.0 470.5 L1385.0 511.5" stroke="#ffa500" stroke-width="1.1" fill="none" stroke-linejoin="round" stroke-dasharray="6,4"/>
<path d="M1385.0 511.5 L1387.0 512.5 L1389.0 514.5 L1391.0 513.5 L1393.0 515.5 L1395.0 515.5 L1397.0 518.5 L1399.0 517.5 L1401.0 519.5 L1403.0 518.5 L1405.0 521.5 L1407.0 519.5 L1409.0 520.5 L1411.0 520.5 L1413.0 521.5 L1415.0 521.5 L1417.0 520.5 L1419.0 518.5 L1421.0 518.5 L1423.0 516.5 L1425.0 516.5 L1427.0 515.5 L1429.0 514.5 L1431.2 513.5 L1433.5 514.5 L1435.8 512.5 L1438.0 513.5 L1440.5 512.5 L1443.0 516.5" stroke="#ffa500" stroke-width="1.1" fill="none" stroke-linejoin="round"/>
<path d="M1443.0 516.5 L1444.0 579.5" stroke="#ffa500" stroke-width="1.1" fill="none" stroke-linejoin="round" stroke-dasharray="6,4"/>
<path d="M1444.0 578.5 L1446.2 581.5 L1448.3 583.5 L1450.5 584.5 L1452.7 587.5 L1454.8 591.5 L1457.0 592.5 L1459.1 594.5 L1461.2 594.5 L1463.3 595.5 L1465.4 597.5 L1467.5 597.5 L1469.6 597.5 L1471.7 598.5 L1474.0 600.5 L1476.3 600.5 L1478.7 603.5 L1481.0 604.5 L1483.3 605.5 L1485.4 605.5 L1487.6 605.5 L1489.7 606.5 L1491.9 604.5 L1494.0 604.5 L1496.2 605.5 L1498.3 604.5 L1500.4 603.5 L1502.5 602.5 L1504.6 601.5 L1506.7 601.5 L1508.7 600.5 L1510.8 600.5 L1512.9 598.5 L1515.0 597.5 L1517.1 598.5 L1519.2 595.5 L1521.2 595.5 L1523.3 593.5 L1525.4 592.5 L1527.5 592.5 L1529.6 591.5 L1531.7 590.5 L1533.7 591.5 L1535.8 591.5 L1537.9 590.5 L1540.0 590.5 L1542.0 589.5 L1544.0 587.5 L1546.0 588.5 L1548.0 588.5 L1550.0 588.5 L1552.0 588.5 L1554.0 589.5 L1556.0 586.5 L1558.0 587.5 L1560.0 586.5 L1562.1 586.5 L1564.2 587.5 L1566.3 587.5 L1568.4 586.5 L1570.6 586.5 L1572.7 586.5 L1574.8 586.5 L1576.9 587.5 L1579.0 585.5 L1581.0 587.5 L1583.0 587.5 L1585.0 587.5 L1587.0 587.5 L1589.0 586.5 L1591.0 588.5 L1593.0 586.5 L1595.0 588.5 L1597.0 587.5 L1599.0 587.5 L1601.0 587.5 L1603.0 589.5 L1605.0 589.5 L1607.0 587.5 L1609.0 588.5 L1611.0 589.5 L1613.0 588.5 L1615.0 589.5 L1617.0 588.5 L1619.0 588.5 L1621.0 589.5 L1623.0 588.5 L1625.0 587.5 L1627.0 588.5 L1629.0 587.5 L1631.0 588.5 L1633.0 587.5 L1635.0 587.5 L1637.0 588.5 L1639.0 588.5 L1641.0 588.5 L1643.0 588.5 L1645.0 588.5 L1647.0 587.5 L1649.0 586.5 L1651.0 587.5 L1653.0 588.5 L1655.0 587.5 L1657.0 587.5 L1659.0 588.5 L1661.0 588.5 L1663.0 587.5 L1665.0 588.5 L1667.0 586.5 L1669.0 586.5 L1671.0 586.5 L1673.0 587.5 L1675.0 585.5 L1677.0 587.5 L1679.0 586.5 L1681.0 587.5 L1683.0 586.5 L1685.0 584.5 L1687.0 582.5 L1689.1 583.5 L1691.2 584.5 L1693.3 584.5 L1695.4 583.5 L1697.5 584.5 L1699.6 584.5 L1701.7 584.5 L1703.8 584.5 L1705.9 585.5 L1708.0 583.5 L1709.4 607.5 L1711.5 617.5 L1713.6 630.5 L1715.7 633.5 L1717.9 637.5 L1720.0 643.5 L1722.8 647.5 L1725.6 654.5 L1727.6 653.5 L1729.6 652.5 L1731.6 652.5 L1733.6 650.5 L1735.7 650.5 L1737.7 649.5 L1739.7 649.5 L1741.7 649.5 L1743.7 647.5 L1745.7 648.5 L1747.8 648.5 L1749.9 650.5 L1751.9 652.5 L1754.0 654.5 L1756.1 655.5 L1758.2 657.5 L1760.3 657.5 L1762.4 658.5 L1764.4 661.5 L1766.5 662.5 L1768.6 663.5 L1770.9 662.5 L1773.2 660.5 L1775.5 659.5 L1777.9 657.5 L1780.2 654.5 L1782.5 653.5 L1784.5 653.5 L1786.5 653.5 L1788.5 651.5 L1790.5 651.5 L1792.5 649.5 L1794.5 650.5 L1796.5 650.5 L1798.5 649.5 L1800.5 650.5 L1802.9 644.5 L1805.2 641.5 L1807.6 636.5 L1810.0 632.5 L1812.3 634.5 L1814.7 638.5 L1817.0 638.5 L1819.3 638.5 L1821.5 640.5 L1823.8 641.5 L1826.0 640.5 L1828.3 642.5 L1830.4 643.5 L1832.5 645.5 L1834.6 648.5 L1836.7 649.5 L1838.7 652.5 L1840.8 653.5 L1842.9 656.5 L1845.0 656.5 L1847.1 657.5 L1849.3 658.5 L1851.4 661.5 L1853.6 662.5 L1855.7 661.5 L1857.8 663.5 L1860.0 664.5 L1862.1 665.5 L1864.2 667.5 L1866.4 667.5 L1868.5 668.5 L1870.7 669.5 L1872.8 671.5 L1874.9 672.5 L1876.9 671.5 L1879.0 671.5 L1881.0 673.5 L1883.1 674.5 L1885.1 672.5 L1887.2 675.5 L1889.2 674.5 L1891.3 675.5 L1893.3 675.5 L1895.4 675.5 L1897.4 676.5 L1899.5 675.5 L1901.5 676.5 L1903.6 678.5 L1905.6 678.5 L1907.7 677.5 L1909.7 679.5 L1911.8 680.5 L1913.8 678.5 L1915.9 680.5 L1917.9 680.5 L1920.0 681.5 L1922.0 680.5 L1924.1 680.5 L1926.1 681.5 L1928.1 683.5 L1930.2 682.5 L1932.2 682.5 L1934.2 683.5 L1936.2 683.5 L1938.3 683.5 L1940.3 684.5 L1942.3 683.5 L1944.4 684.5 L1946.4 684.5 L1948.4 685.5 L1950.5 684.5 L1952.5 686.5 L1954.5 686.5 L1956.5 686.5 L1958.6 688.5 L1960.6 686.5 L1962.6 686.5 L1964.7 687.5 L1966.7 687.5 L1968.7 687.5 L1970.7 687.5 L1972.7 688.5 L1974.7 687.5 L1976.7 689.5 L1978.7 688.5 L1980.7 690.5 L1982.7 689.5 L1984.7 689.5 L1986.7 688.5 L1988.7 688.5 L1990.7 690.5 L1992.7 688.5 L1994.7 690.5 L1996.7 690.5 L1998.7 689.5 L2000.7 689.5 L2002.7 689.5 L2004.7 690.5 L2006.7 689.5 L2008.7 689.5 L2010.7 689.5 L2012.7 691.5 L2014.7 690.5 L2016.7 691.5 L2018.7 689.5 L2020.7 690.5 L2022.7 691.5 L2024.7 691.5 L2026.8 691.5 L2028.8 691.5 L2030.8 691.5 L2032.8 690.5 L2034.8 690.5 L2036.8 692.5 L2038.8 691.5 L2040.8 691.5 L2042.8 691.5 L2044.8 691.5 L2046.9 691.5 L2048.9 692.5 L2050.9 691.5 L2052.9 691.5 L2054.9 692.5 L2056.9 691.5 L2058.9 692.5 L2060.9 692.5 L2062.9 692.5 L2064.9 691.5 L2067.0 691.5 L2069.0 691.5 L2071.0 691.5 L2073.0 692.5 L2075.0 692.5 L2077.5 699.5 L2080.0 706.5 L2083.3 715.5 L2085.4 715.5 L2087.5 716.5 L2089.6 719.5 L2091.7 719.5 L2093.8 721.5 L2095.8 722.5 L2097.9 724.5 L2100.0 725.5 L2102.2 727.5 L2104.3 730.5 L2106.4 732.5 L2108.6 734.5 L2110.7 734.5 L2112.8 738.5 L2114.8 738.5 L2116.9 740.5 L2119.0 742.5 L2121.1 743.5 L2123.2 746.5 L2125.2 748.5 L2127.3 750.5 L2129.4 751.5 L2131.7 755.5 L2134.1 756.5 L2136.4 760.5 L2138.7 759.5 L2141.0 761.5 L2143.4 763.5 L2145.7 762.5 L2148.0 762.5 L2150.3 763.5 L2152.6 764.5 L2154.9 764.5 L2157.2 762.5 L2159.4 762.5 L2161.7 764.5 L2164.0 762.5 L2166.1 761.5 L2168.1 762.5 L2170.2 761.5 L2172.2 760.5 L2174.3 761.5 L2176.3 761.5 L2178.4 761.5 L2180.4 761.5 L2182.5 760.5 L2184.5 759.5 L2186.6 760.5 L2188.6 760.5 L2190.7 760.5 L2192.7 759.5 L2194.8 760.5 L2196.8 759.5 L2198.9 758.5" stroke="#ffa500" stroke-width="1.1" fill="none" stroke-linejoin="round"/>
<path d="M997.0 477.2 L998.0 474.1 L999.0 476.8 L1000.0 474.3 L1001.0 476.7 L1002.0 474.3 L1003.0 477.1 L1004.0 475.0 L1005.0 477.9 L1006.0 475.3 L1007.0 477.7 L1008.0 475.5 L1009.0 478.2 L1010.0 475.3 L1011.0 477.5 L1012.0 475.7 L1013.0 478.3 L1014.0 475.0 L1015.0 477.5 L1016.0 474.8 L1017.0 477.5 L1018.0 475.4 L1019.0 477.9 L1020.0 474.6 L1021.0 477.0 L1022.0 473.9 L1023.0 477.3 L1024.0 475.4 L1025.0 477.4 L1026.0 474.7 L1027.0 477.0 L1028.0 474.3 L1029.0 478.2 L1030.0 475.2 L1031.0 477.2 L1032.0 475.5 L1033.0 477.1 L1034.0 474.8 L1035.0 477.1 L1036.0 474.7 L1037.0 476.8 L1038.0 474.7 L1039.0 476.7 L1040.0 474.1 L1041.0 476.4 L1042.0 474.6 L1043.0 476.5 L1044.0 475.0 L1045.0 477.2 L1046.0 474.9 L1047.0 477.1 L1048.0 475.3 L1049.0 477.0 L1050.0 475.2 L1051.0 478.0 L1052.0 474.3 L1053.0 477.1 L1054.0 475.1 L1055.0 476.8 L1056.0 475.3 L1057.0 477.5 L1058.0 475.1 L1059.0 478.4 L1060.0 475.3 L1061.0 477.2 L1062.0 475.0 L1063.0 477.3 L1064.0 475.7 L1065.0 478.5 L1066.0 474.8 L1067.0 478.0 L1068.0 474.9 L1069.0 477.2 L1070.0 475.7 L1071.0 477.3 L1072.0 475.4 L1073.0 477.6 L1074.0 475.3 L1075.0 478.0 L1076.0 475.2 L1077.0 477.4 L1078.0 474.7 L1079.0 477.4 L1080.0 475.5 L1081.0 477.4 L1082.0 475.3 L1083.0 477.4 L1084.0 475.3 L1085.0 477.6 L1086.0 474.7 L1087.0 477.5 L1088.0 476.0 L1089.0 477.8 L1090.0 475.9 L1091.0 477.7 L1092.0 476.1 L1093.0 478.4 L1094.0 475.7 L1095.0 478.0 L1096.0 475.4 L1097.0 478.0 L1098.0 475.3 L1099.0 478.0 L1100.0 476.1 L1101.0 477.8 L1102.0 476.1 L1103.0 478.1 L1104.0 476.0 L1105.0 478.6 L1106.0 476.2 L1107.0 477.3 L1108.0 475.3 L1109.0 477.9 L1110.0 474.9 L1111.0 478.3 L1112.0 476.0 L1113.0 478.6 L1114.0 475.8 L1115.0 478.4 L1116.0 476.2 L1117.0 477.7 L1118.0 475.5 L1119.0 478.0 L1120.0 474.9 L1121.0 478.9 L1122.0 476.1 L1123.0 478.6 L1124.0 476.2 L1125.0 478.5 L1126.0 476.3 L1127.0 478.1 L1128.0 476.5 L1129.0 478.8 L1130.0 475.8 L1131.0 478.5 L1132.0 474.9 L1133.0 478.0 L1134.0 475.3 L1135.0 478.1 L1136.0 476.1 L1137.0 478.2 L1138.0 476.3 L1139.0 478.4 L1140.0 476.8 L1141.0 478.6 L1142.0 476.5 L1143.0 478.9 L1144.0 476.6 L1145.0 478.3 L1146.0 476.3 L1147.0 478.7 L1148.0 476.0 L1149.0 478.8 L1150.0 475.7 L1151.0 478.7 L1152.0 476.8 L1153.0 478.2 L1154.0 475.2 L1155.0 477.7 L1156.0 476.0 L1157.0 478.3 L1158.0 475.4 L1159.0 478.2 L1160.0 476.8 L1161.0 478.9 L1162.0 476.2 L1163.0 478.6 L1164.0 476.2 L1165.0 477.9 L1166.0 476.3 L1167.0 477.8 L1168.0 475.4 L1169.0 477.9 L1170.0 475.3 L1171.0 477.6 L1172.0 475.0 L1173.0 477.8 L1174.0 476.1 L1175.0 478.1 L1176.0 475.5 L1177.0 477.4 L1178.0 475.9 L1179.0 478.4 L1180.0 474.7 L1181.0 478.1 L1182.0 475.2 L1183.0 477.8 L1184.0 474.9 L1185.0 477.7 L1186.0 475.2 L1187.0 477.6 L1188.0 475.5 L1189.0 477.8 L1190.0 474.7 L1191.0 477.4 L1192.0 475.3 L1193.0 477.4 L1194.0 475.6 L1195.0 477.0 L1196.0 475.4 L1197.0 477.1 L1198.0 475.5 L1199.0 477.7 L1200.0 475.5 L1201.0 477.7 L1202.0 475.5 L1203.0 477.1 L1204.0 474.9 L1205.0 476.4 L1206.0 474.3 L1207.0 476.8 L1208.0 474.8 L1209.0 476.8 L1210.0 473.4 L1211.0 477.3 L1212.0 474.2 L1213.0 476.7 L1214.0 474.7 L1215.0 476.4 L1216.0 474.9 L1217.0 477.2 L1218.0 474.6 L1219.0 476.3 L1220.0 474.5 L1221.0 476.6 L1222.0 474.2 L1223.0 476.7 L1224.0 473.9 L1225.0 476.2 L1226.0 474.4 L1227.0 475.9 L1228.0 474.4 L1229.0 476.3 L1230.0 473.8 L1231.0 477.5 L1232.0 472.8 L1233.0 475.8 L1234.0 474.2 L1235.0 475.6 L1236.0 473.5 L1237.0 476.0 L1238.0 473.9 L1239.0 475.8 L1240.0 474.0 L1241.0 476.9 L1242.0 474.3 L1243.0 476.2 L1244.0 474.0 L1245.0 476.2 L1246.0 474.8 L1247.0 476.2 L1248.0 474.4 L1249.0 476.3 L1250.0 472.8 L1251.0 476.2 L1252.0 474.6 L1253.0 477.0 L1254.0 474.7 L1255.0 476.2 L1256.0 474.2 L1257.0 476.4 L1258.0 474.1 L1259.0 477.4 L1260.0 473.8 L1261.0 476.5 L1262.0 474.6 L1263.0 476.5 L1264.0 474.7 L1265.0 476.5 L1266.0 474.6 L1267.0 476.5 L1268.0 474.8 L1269.0 477.8 L1270.0 475.2 L1271.0 477.1 L1272.0 475.4 L1273.0 477.6 L1274.0 475.0 L1275.0 477.3 L1276.0 475.3 L1277.0 477.4 L1278.0 475.5 L1279.0 477.1 L1280.0 475.3 L1281.0 477.3 L1282.0 474.7 L1283.0 477.3 L1284.0 475.4 L1285.0 477.3 L1286.0 475.3 L1287.0 477.7 L1288.0 474.9 L1289.0 478.4 L1290.0 475.2 L1291.0 477.3 L1292.0 475.3 L1293.0 477.7 L1294.0 474.9 L1295.0 477.1 L1296.0 474.6 L1297.0 476.7 L1298.0 474.7 L1299.0 476.3 L1300.0 474.8 L1301.0 476.3 L1302.0 474.9 L1303.0 477.4 L1304.0 474.9 L1305.0 476.9 L1306.0 473.7 L1307.0 477.0 L1308.0 475.0 L1309.0 477.1 L1310.0 474.9 L1311.0 476.5 L1312.0 475.1 L1313.0 476.5 L1314.0 473.8 L1315.0 477.1 L1316.0 474.0 L1317.0 477.1 L1318.0 474.9 L1319.0 477.5 L1320.0 474.6 L1321.0 476.7 L1322.0 474.9 L1323.0 477.4 L1324.0 474.9 L1325.0 477.4 L1326.0 474.3 L1327.0 477.6 L1328.0 474.8 L1329.0 476.8 L1330.0 475.0 L1331.0 477.1 L1332.0 475.5 L1333.0 477.9 L1334.0 474.8 L1335.0 476.7 L1336.0 475.5 L1337.0 476.9 L1338.0 475.5 L1339.0 477.4 L1340.0 475.4 L1341.0 477.8 L1342.0 475.0 L1343.0 476.7 L1344.0 474.2 L1345.0 476.9 L1346.0 474.7 L1347.0 477.0 L1348.0 474.6 L1349.0 476.6 L1350.0 475.3 L1351.0 477.9 L1352.0 474.5 L1353.0 477.0 L1354.0 474.5 L1355.0 477.1 L1356.0 474.0 L1357.0 477.0 L1358.0 474.4 L1359.0 477.1 L1360.0 474.6 L1361.0 476.9 L1362.0 475.3 L1363.0 477.3 L1364.0 474.9 L1365.0 477.0 L1366.0 475.2 L1367.0 477.1 L1368.0 475.2 L1368.3 480.5 L1368.7 481.5 L1369.0 486.7 L1369.2 487.5 L1369.5 492.1 L1369.7 492.8 L1369.9 498.5 L1370.2 498.5 L1370.4 503.2 L1371.3 503.1 L1372.2 506.9 L1373.1 506.7 L1374.0 510.6 L1375.0 510.0 L1375.9 512.4 L1376.9 512.3 L1377.9 515.0 L1378.9 514.5 L1379.8 516.9 L1380.8 517.1 L1381.8 519.4 L1382.8 518.5 L1383.8 521.2 L1384.8 520.5 L1385.8 523.0 L1386.8 522.4 L1387.8 524.8 L1388.7 524.8 L1389.7 527.0 L1390.7 526.4 L1391.7 528.7 L1392.7 528.7 L1393.7 531.0 L1394.7 530.5 L1395.7 533.1 L1396.7 532.7 L1397.7 534.5 L1398.7 533.1 L1399.7 536.1 L1400.7 535.3 L1401.7 537.6 L1402.6 537.3 L1403.6 540.2 L1404.6 539.1 L1405.6 541.1 L1406.6 540.6 L1407.6 543.1 L1408.6 541.8 L1409.6 544.2 L1410.6 543.0 L1411.6 545.5 L1412.6 543.9 L1413.6 546.5 L1414.6 545.8 L1415.5 547.5 L1416.5 546.6 L1417.5 548.8 L1418.5 547.9 L1419.5 549.9 L1420.5 549.0 L1421.5 550.9 L1422.5 550.4 L1423.5 552.4 L1424.5 550.6 L1425.5 552.4 L1426.5 551.2 L1427.5 553.1 L1428.5 551.9 L1429.5 554.0 L1430.4 552.7 L1431.4 554.1 L1432.4 553.2 L1433.4 555.1 L1434.4 553.5 L1435.4 555.3 L1436.4 553.9 L1437.4 556.2 L1438.3 554.6 L1439.2 556.7 L1440.2 555.5 L1441.2 557.4 L1442.1 555.4 L1443.0 557.8 L1444.0 556.8 L1444.2 561.2 L1444.3 562.0 L1444.5 566.9 L1444.7 567.2 L1444.8 571.7 L1445.0 572.0 L1445.9 575.2 L1446.9 574.3 L1447.8 577.3 L1448.8 577.2 L1449.7 580.5 L1450.6 579.6 L1451.6 582.2 L1452.5 580.6 L1453.5 584.3 L1454.6 583.4 L1455.6 586.5 L1456.7 585.5 L1457.7 589.9 L1458.8 589.2 L1459.8 592.9 L1460.8 590.5 L1461.9 594.8 L1462.9 594.2 L1464.0 597.8 L1465.0 595.9 L1466.0 598.9 L1467.1 598.3 L1468.1 601.0 L1469.2 599.4 L1470.2 603.1 L1471.2 602.6 L1472.3 606.3 L1473.3 605.0 L1474.4 608.2 L1475.4 607.0 L1476.5 610.2 L1477.5 608.6 L1478.5 613.1 L1479.6 610.6 L1480.6 615.1 L1481.7 613.3 L1482.7 616.7 L1483.8 615.3 L1484.8 618.7 L1485.8 617.9 L1486.9 621.6 L1487.9 619.2 L1489.0 623.0 L1490.0 621.5 L1491.0 623.5 L1492.1 622.3 L1493.1 624.9 L1494.2 622.7 L1495.2 625.8 L1496.2 624.5 L1497.3 627.0 L1498.3 625.0 L1499.4 627.9 L1500.4 626.3 L1501.5 629.3 L1502.5 627.3 L1503.5 630.5 L1504.5 627.1 L1505.5 631.4 L1506.5 628.8 L1507.5 631.9 L1508.4 629.2 L1509.4 632.3 L1510.4 629.8 L1511.4 632.7 L1512.4 630.9 L1513.4 633.9 L1514.4 630.9 L1515.4 633.8 L1516.4 631.6 L1517.4 635.0 L1518.3 632.8 L1519.3 634.9 L1520.3 633.7 L1521.3 635.7 L1522.3 634.2 L1523.3 636.5 L1524.3 633.6 L1525.3 636.9 L1526.3 634.5 L1527.3 638.0 L1528.3 634.7 L1529.3 637.3 L1530.2 635.3 L1531.2 637.9 L1532.2 635.5 L1533.2 638.0 L1534.2 635.7 L1535.2 637.7 L1536.2 635.4 L1537.2 638.0 L1538.2 635.8 L1539.2 638.4 L1540.2 636.2 L1541.2 639.4 L1542.1 636.6 L1543.1 638.9 L1544.1 636.6 L1545.1 640.2 L1546.1 636.2 L1547.1 639.0 L1548.1 637.1 L1549.1 639.3 L1550.1 637.4 L1551.1 639.3 L1552.1 636.9 L1553.1 640.5 L1554.0 637.4 L1555.0 639.7 L1556.0 637.2 L1557.0 640.0 L1558.0 636.6 L1559.0 639.4 L1560.0 637.8 L1561.0 640.9 L1562.0 637.9 L1563.0 640.9 L1563.9 637.9 L1564.9 640.1 L1565.9 637.9 L1566.9 640.2 L1567.9 638.1 L1568.9 640.7 L1569.9 638.6 L1570.8 640.5 L1571.8 638.6 L1572.8 640.9 L1573.8 638.6 L1574.8 642.1 L1575.8 638.9 L1576.8 641.4 L1577.8 638.9 L1578.7 641.1 L1579.7 639.6 L1580.7 642.4 L1581.7 639.5 L1582.7 643.3 L1583.7 639.3 L1584.7 642.2 L1585.6 639.1 L1586.6 641.8 L1587.6 639.8 L1588.6 642.0 L1589.6 639.8 L1590.6 642.4 L1591.6 640.3 L1592.5 642.1 L1593.5 640.1 L1594.5 644.1 L1595.5 639.6 L1596.5 642.7 L1597.5 640.1 L1598.5 642.9 L1599.5 640.7 L1600.5 642.4 L1601.5 640.5 L1602.5 642.3 L1603.5 640.2 L1604.5 642.7 L1605.6 640.3 L1606.6 643.0 L1607.6 640.9 L1608.6 642.8 L1609.6 640.7 L1610.6 642.6 L1611.6 640.7 L1612.6 643.5 L1613.6 640.4 L1614.6 642.9 L1615.6 640.4 L1616.6 642.5 L1617.6 641.0 L1618.6 643.0 L1619.6 640.8 L1620.6 643.5 L1621.6 640.2 L1622.7 643.3 L1623.7 640.2 L1624.7 643.2 L1625.7 640.6 L1626.7 642.4 L1627.7 639.6 L1628.7 643.9 L1629.7 640.5 L1630.7 643.1 L1631.7 641.2 L1632.7 642.7 L1633.7 639.9 L1634.7 642.7 L1635.7 640.9 L1636.7 643.5 L1637.7 640.8 L1638.7 643.0 L1639.7 639.7 L1640.8 643.3 L1641.8 641.2 L1642.8 644.4 L1643.8 640.8 L1644.8 643.4 L1645.8 640.9 L1646.8 642.8 L1647.8 640.6 L1648.8 644.0 L1649.8 640.5 L1650.8 643.0 L1651.8 640.5 L1652.8 643.5 L1653.8 641.0 L1654.8 642.9 L1655.8 640.9 L1656.8 644.0 L1657.8 641.4 L1658.8 643.6 L1659.9 641.3 L1660.9 644.5 L1661.9 641.3 L1662.9 643.8 L1663.9 641.9 L1664.9 643.9 L1665.9 641.7 L1666.9 644.6 L1667.9 641.4 L1668.9 644.4 L1669.9 641.1 L1670.9 643.6 L1671.9 640.4 L1672.9 643.6 L1673.9 641.7 L1674.9 643.8 L1675.9 640.4 L1677.0 644.2 L1678.0 641.1 L1679.0 643.3 L1680.0 640.7 L1681.0 643.3 L1682.0 641.9 L1683.0 643.2 L1684.0 641.3 L1685.0 643.7 L1686.0 641.6 L1686.0 646.3 L1686.0 646.3 L1687.0 648.4 L1688.0 646.2 L1689.0 648.7 L1690.0 646.2 L1691.0 648.4 L1692.0 646.3 L1693.0 648.6 L1694.0 646.5 L1695.0 648.5 L1696.0 645.5 L1697.0 648.7 L1698.0 646.5 L1699.0 650.4 L1700.0 646.7 L1701.0 648.9 L1702.0 646.8 L1703.0 650.6 L1704.0 647.1 L1705.0 649.0 L1706.0 647.2 L1707.0 649.3 L1708.0 646.6 L1708.3 653.1 L1708.7 652.1 L1709.1 658.3 L1709.4 658.0 L1710.5 662.9 L1711.5 661.7 L1712.5 666.8 L1713.6 666.7 L1714.7 669.6 L1715.8 668.7 L1716.8 671.2 L1717.9 670.0 L1719.0 672.9 L1720.0 670.7 L1721.0 671.7 L1722.0 669.5 L1723.0 670.7 L1724.0 668.4 L1725.0 669.8 L1726.0 666.9 L1727.0 669.4 L1728.0 665.6 L1729.0 668.0 L1729.9 663.6 L1730.9 666.7 L1731.9 664.2 L1732.9 665.8 L1733.9 663.2 L1734.9 665.2 L1735.8 662.7 L1736.8 664.6 L1737.8 662.0 L1738.8 664.3 L1739.8 661.4 L1740.8 662.7 L1741.8 660.7 L1742.7 661.9 L1743.7 659.7 L1744.7 661.7 L1745.7 658.3 L1746.7 661.3 L1747.7 659.7 L1748.7 662.9 L1749.7 662.2 L1750.7 665.2 L1751.7 663.2 L1752.7 667.7 L1753.7 665.3 L1754.7 668.2 L1755.7 666.9 L1756.7 669.0 L1757.7 667.9 L1758.7 671.2 L1759.7 667.9 L1760.7 670.6 L1761.7 669.6 L1762.6 671.4 L1763.6 670.3 L1764.6 672.3 L1765.6 671.0 L1766.6 673.8 L1767.6 672.2 L1768.6 674.5 L1769.6 672.8 L1770.7 675.2 L1771.8 673.8 L1772.8 675.3 L1773.8 672.6 L1774.9 675.5 L1776.0 674.2 L1777.0 676.1 L1777.9 671.1 L1778.8 669.8 L1779.7 664.5 L1780.4 663.7 L1781.1 658.9 L1781.8 657.8 L1782.5 653.2 L1783.2 652.6 L1783.9 647.6 L1784.6 647.6 L1785.3 641.9 L1786.0 642.1 L1786.7 636.6 L1787.5 636.4 L1788.2 630.0 L1789.0 630.2 L1789.7 625.0 L1790.5 625.0 L1791.2 620.2 L1792.0 619.5 L1792.7 613.5 L1793.5 614.6 L1794.2 608.7 L1795.0 610.7 L1796.0 605.4 L1797.1 610.1 L1798.1 602.7 L1799.2 606.6 L1800.2 603.0 L1801.2 606.5 L1802.3 600.8 L1803.3 604.8 L1803.9 598.3 L1804.5 599.7 L1805.2 592.2 L1805.8 594.5 L1806.4 587.9 L1807.0 587.7 L1807.7 582.4 L1808.3 582.4 L1808.9 575.8 L1809.9 577.5 L1810.9 571.1 L1811.9 571.9 L1813.0 565.5 L1814.0 567.2 L1815.0 560.5 L1816.0 562.1 L1817.0 555.9 L1818.0 558.7 L1818.9 553.9 L1819.9 556.5 L1820.8 551.3 L1821.8 555.6 L1822.7 551.4 L1823.7 553.3 L1824.6 549.3 L1825.6 551.9 L1826.6 550.0 L1827.7 554.3 L1828.8 551.0 L1829.8 557.6 L1830.8 553.9 L1831.9 558.7 L1833.0 555.8 L1834.0 561.6 L1835.0 559.2 L1836.0 564.0 L1837.0 561.2 L1838.0 567.0 L1839.0 562.8 L1840.0 568.3 L1841.0 565.9 L1842.0 571.1 L1843.0 567.4 L1844.0 572.3 L1845.0 570.7 L1846.0 575.6 L1847.0 571.4 L1848.0 577.1 L1849.0 573.4 L1850.0 577.3 L1851.0 574.5 L1852.0 578.8 L1852.9 576.1 L1853.9 580.5 L1854.9 575.9 L1855.9 583.4 L1856.9 578.2 L1857.9 584.2 L1858.9 580.4 L1859.9 585.8 L1860.9 581.4 L1861.9 586.3 L1862.9 582.5 L1863.9 587.7 L1864.9 583.1 L1865.9 587.9 L1866.8 584.9 L1867.8 588.5 L1868.8 583.6 L1869.8 588.7 L1870.8 586.1 L1871.8 589.4 L1872.8 586.6 L1873.8 591.1 L1874.8 587.0 L1875.8 591.5 L1876.8 588.5 L1877.8 592.7 L1878.8 589.3 L1879.8 594.2 L1880.7 590.9 L1881.7 594.4 L1882.7 591.4 L1883.7 595.7 L1884.7 593.1 L1885.7 596.6 L1886.7 594.0 L1887.7 598.6 L1888.7 594.3 L1889.8 599.4 L1890.8 595.8 L1891.8 599.6 L1892.8 595.7 L1893.9 603.1 L1894.9 595.9 L1895.9 604.0 L1896.9 596.9 L1898.0 602.6 L1899.0 599.8 L1900.0 603.8 L1901.0 600.1 L1902.0 606.2 L1903.0 600.5 L1904.0 604.6 L1904.9 601.6 L1905.9 605.0 L1906.9 601.5 L1907.9 605.7 L1908.9 601.6 L1909.9 606.4 L1910.9 602.7 L1911.9 606.5 L1912.8 603.6 L1913.8 606.8 L1914.8 603.0 L1915.8 606.9 L1916.8 603.2 L1917.8 608.1 L1918.8 604.9 L1919.8 608.1 L1920.8 605.6 L1921.7 608.7 L1922.7 604.7 L1923.7 610.0 L1924.7 606.7 L1925.7 610.1 L1926.7 606.4 L1927.7 610.2 L1928.7 606.1 L1929.7 611.6 L1930.7 607.7 L1931.7 611.8 L1932.7 607.8 L1933.7 611.2 L1934.7 607.6 L1935.7 613.0 L1936.7 607.3 L1937.7 613.6 L1938.7 608.0 L1939.7 614.1 L1940.7 609.4 L1941.6 613.0 L1942.6 609.3 L1943.6 615.5 L1944.6 608.1 L1945.6 615.4 L1946.6 609.3 L1947.6 614.5 L1948.6 608.3 L1949.6 613.9 L1950.6 608.9 L1951.6 615.2 L1952.6 611.8 L1953.6 615.1 L1954.6 610.6 L1955.6 616.2 L1956.6 611.8 L1957.6 615.5 L1958.6 612.8 L1959.6 618.6 L1960.6 612.5 L1961.7 618.3 L1962.7 612.6 L1963.7 616.9 L1964.7 613.1 L1965.7 616.7 L1966.7 613.7 L1967.7 617.4 L1968.7 614.3 L1969.7 617.4 L1970.7 614.4 L1971.8 621.1 L1972.8 614.8 L1973.8 618.4 L1974.8 614.0 L1975.8 618.9 L1976.8 615.3 L1977.8 618.6 L1978.8 615.3 L1979.8 619.1 L1980.8 616.2 L1981.9 619.7 L1982.9 616.5 L1983.9 620.5 L1984.9 616.2 L1985.9 620.3 L1986.9 615.8 L1987.9 620.1 L1988.9 617.3 L1989.9 621.8 L1990.9 616.0 L1992.0 620.7 L1993.0 616.6 L1994.0 621.8 L1995.0 616.7 L1996.0 622.9 L1997.0 616.2 L1998.0 622.7 L1999.0 617.8 L2000.0 621.4 L2001.0 617.8 L2002.0 621.8 L2003.0 618.8 L2004.0 622.6 L2005.0 616.8 L2006.0 621.4 L2007.0 618.0 L2008.0 621.5 L2009.0 618.4 L2010.0 621.7 L2011.0 617.2 L2012.0 622.2 L2013.0 617.6 L2014.0 621.2 L2015.0 617.0 L2016.0 621.1 L2017.0 617.4 L2018.0 621.0 L2019.0 617.8 L2020.0 623.9 L2021.0 617.5 L2022.0 622.0 L2023.0 617.7 L2024.0 622.6 L2025.0 618.1 L2026.0 621.6 L2027.0 618.8 L2028.0 622.6 L2029.0 618.2 L2030.0 622.6 L2031.0 617.9 L2032.0 621.7 L2033.0 618.4 L2034.0 621.8 L2035.0 618.1 L2036.0 621.2 L2037.0 615.8 L2038.0 621.4 L2039.0 618.0 L2040.0 621.4 L2041.0 616.7 L2042.0 622.4 L2043.0 617.9 L2043.9 622.9 L2044.9 618.4 L2045.9 623.1 L2046.9 618.2 L2047.9 621.9 L2048.9 618.0 L2049.9 621.9 L2050.9 617.7 L2051.9 622.7 L2052.8 617.8 L2053.8 622.2 L2054.8 618.2 L2055.8 622.0 L2056.8 617.9 L2057.8 623.4 L2058.8 618.2 L2059.8 622.6 L2060.7 617.8 L2061.7 623.0 L2062.7 617.4 L2063.7 622.0 L2064.7 618.3 L2065.7 621.8 L2066.7 618.3 L2067.7 621.8 L2068.7 618.5 L2069.6 621.8 L2070.6 616.1 L2071.6 621.9 L2072.6 617.8 L2073.6 622.6 L2074.4 621.8 L2075.3 628.4 L2076.3 626.7 L2077.3 632.8 L2078.3 630.6 L2079.2 635.0 L2080.2 633.8 L2081.2 638.5 L2082.2 637.4 L2083.2 642.3 L2084.3 638.9 L2085.3 644.5 L2086.4 642.0 L2087.4 647.6 L2088.4 645.1 L2089.5 649.7 L2090.5 646.8 L2091.6 651.9 L2092.6 649.2 L2093.7 653.8 L2094.7 652.2 L2095.7 656.7 L2096.7 654.9 L2097.7 660.1 L2098.7 656.4 L2099.7 661.0 L2100.7 659.1 L2101.6 663.9 L2102.6 661.4 L2103.6 665.6 L2104.6 662.9 L2105.6 668.3 L2106.6 664.8 L2107.6 670.8 L2108.6 667.8 L2109.6 673.2 L2110.6 671.3 L2111.6 678.7 L2112.5 673.9 L2113.5 679.2 L2114.5 676.0 L2115.5 681.8 L2116.5 677.3 L2117.5 684.0 L2118.5 681.1 L2119.5 686.7 L2120.5 683.6 L2121.5 688.6 L2122.4 687.0 L2123.4 692.7 L2124.4 688.0 L2125.4 694.6 L2126.4 692.3 L2127.4 696.5 L2128.4 694.3 L2129.4 698.9 L2130.4 696.4 L2131.4 700.5 L2132.4 697.0 L2133.4 702.7 L2134.4 700.2 L2135.4 704.9 L2136.4 702.3 L2137.3 706.7 L2138.3 704.3 L2139.3 710.1 L2140.3 706.3 L2141.3 712.4 L2142.3 708.1 L2143.3 713.4 L2144.3 709.3 L2145.3 714.8 L2146.3 708.4 L2147.2 714.3 L2148.2 709.9 L2149.2 714.9 L2150.2 711.7 L2151.2 717.0 L2152.2 712.8 L2153.2 717.4 L2154.1 712.5 L2155.1 717.0 L2156.1 713.2 L2157.1 718.1 L2158.1 714.7 L2159.1 720.5 L2160.1 714.4 L2161.0 719.9 L2162.0 715.8 L2163.0 719.4 L2164.0 716.4 L2165.0 720.1 L2166.0 717.3 L2167.0 721.0 L2168.0 716.6 L2169.0 722.1 L2170.0 716.3 L2171.0 722.0 L2172.0 719.0 L2173.0 722.9 L2174.0 719.0 L2175.0 723.2 L2176.0 719.2 L2177.0 724.3 L2178.0 719.7 L2179.0 723.5 L2180.0 718.0 L2181.0 724.7 L2181.9 720.0 L2182.9 725.8 L2183.9 720.6 L2184.9 724.9 L2185.9 721.9 L2186.9 725.6 L2187.9 721.7 L2188.9 726.5 L2189.9 722.6 L2190.9 726.4 L2191.9 723.0 L2192.9 726.7 L2193.9 722.8 L2194.9 727.8 L2195.9 723.9 L2196.9 729.4 L2197.9 723.9 L2198.9 726.0" stroke="#0000ff" stroke-width="1.0" fill="none"/>
<path d="M997.0 482.5C1058.8 482.5 1305.5 482.5 1368.0 482.5C1372.0 486.3 1369.2 498.3 1372.0 505.5C1374.8 512.7 1380.3 520.0 1385.0 525.5C1389.7 531.0 1394.2 534.3 1400.0 538.5C1405.8 542.7 1412.8 547.2 1420.0 550.5C1427.2 553.8 1438.3 553.5 1443.0 558.5C1447.7 563.5 1444.6 573.3 1448.3 580.5C1452.0 587.7 1459.4 595.2 1465.0 601.5C1470.6 607.8 1476.2 613.7 1481.7 618.5C1487.2 623.3 1491.4 627.0 1498.3 630.5C1505.2 634.0 1513.0 637.5 1523.3 639.5C1533.6 641.5 1545.7 641.5 1560.0 642.5C1574.3 643.5 1588.3 644.7 1609.0 645.5C1629.7 646.3 1671.6 646.5 1684.4 647.5C1686.0 648.5 1684.4 650.8 1686.0 651.5C1689.9 651.5 1704.1 651.5 1708.0 651.5C1709.4 652.8 1708.2 655.7 1709.4 659.5C1710.6 663.3 1713.4 671.2 1715.0 674.5C1716.6 677.8 1717.4 677.8 1719.0 679.5C1720.6 681.2 1720.2 684.5 1724.7 684.5C1729.2 682.5 1738.4 667.5 1745.7 667.5C1753.0 667.7 1761.3 684.7 1768.6 685.5C1775.9 685.5 1783.6 676.5 1789.4 672.5C1795.2 668.5 1799.9 665.7 1803.3 661.5C1806.7 657.3 1808.2 647.5 1810.0 647.5C1811.8 652.3 1810.9 681.2 1814.4 690.5C1817.9 699.8 1823.6 700.0 1831.0 703.5C1838.4 707.0 1849.6 708.7 1858.9 711.5C1868.2 714.3 1879.9 718.7 1886.7 720.5C1893.5 722.3 1886.7 721.5 1900.0 722.5C1913.3 723.5 1937.5 725.2 1966.7 726.5C1995.9 727.8 2056.1 726.5 2075.0 730.5C2080.0 736.3 2078.1 753.8 2080.0 761.5C2081.9 769.2 2083.4 771.7 2086.7 776.5C2090.0 781.3 2095.2 786.5 2100.0 790.5C2104.8 794.5 2110.8 798.2 2115.5 800.5C2120.2 802.8 2125.2 802.5 2128.0 804.5C2130.8 806.5 2129.6 810.7 2132.2 812.5C2134.8 814.3 2132.2 814.7 2143.3 815.5C2154.4 816.3 2189.6 817.2 2198.9 817.5" stroke="#ffa500" stroke-width="1.1" fill="none" stroke-linejoin="round" stroke-dasharray="6,4"/>
</svg>
<div class="a gp" style="left:795.5px;top:1087.7px;width:41px;text-align:right">20</div>
<div class="a gp" style="left:795.5px;top:950.4px;width:41px;text-align:right">40</div>
<div class="a gp" style="left:795.5px;top:813.1px;width:41px;text-align:right">60</div>
<div class="a gp" style="left:795.5px;top:675.8px;width:41px;text-align:right">80</div>
<div class="a gp" style="left:795.5px;top:538.6px;width:41px;text-align:right">100</div>
<div class="a gp" style="left:795.5px;top:401.3px;width:41px;text-align:right">120</div>
<div class="a gp" style="left:795.5px;top:264.0px;width:41px;text-align:right">140</div>
<div class="a gp" style="left:795.5px;top:126.7px;width:41px;text-align:right">160</div>
<div class="a gp" style="left:808.0px;top:1099.5px;width:68px;text-align:center">06/10 00:00</div>
<div class="a gp" style="left:988.5px;top:1099.5px;width:68px;text-align:center">06/10 12:00</div>
<div class="a gp" style="left:1169.0px;top:1099.5px;width:68px;text-align:center">07/10 00:00</div>
<div class="a gp" style="left:1349.5px;top:1099.5px;width:68px;text-align:center">07/10 12:00</div>
<div class="a gp" style="left:1530.0px;top:1099.5px;width:68px;text-align:center">08/10 00:00</div>
<div class="a gp" style="left:1710.5px;top:1099.5px;width:68px;text-align:center">08/10 12:00</div>
<div class="a gp" style="left:1891.0px;top:1099.5px;width:68px;text-align:center">09/10 00:00</div>
<div class="a gp" style="left:2071.5px;top:1099.5px;width:68px;text-align:center">09/10 12:00</div>
<div class="a gp" style="left:2252.0px;top:1099.5px">10/10 00:</div>
<div class="a gp" style="left:800px;top:137.5px;width:176px;text-align:right">Detector strain relief</div>
<div class="a gp" style="left:800px;top:150.3px;width:176px;text-align:right">Detector</div>
<div class="a gp" style="left:800px;top:163.1px;width:176px;text-align:right">CARME top front</div>
<div class="a gp" style="left:800px;top:176.0px;width:176px;text-align:right">CARME bottom front</div>
<div class="a gp" style="left:800px;top:188.8px;width:176px;text-align:right">CARME top mid</div>
<div class="a gp" style="left:800px;top:201.6px;width:176px;text-align:right">CARME middle mid</div>
<div class="a gp" style="left:800px;top:214.4px;width:176px;text-align:right">CARME bottom mid</div>
<div class="a gp" style="left:800px;top:227.2px;width:176px;text-align:right">Float bottom mid</div>
<div class="a gp" style="left:800px;top:240.1px;width:176px;text-align:right">CARME middle rear</div>
<div class="a gp" style="left:800px;top:252.9px;width:176px;text-align:right">Float middle front</div>
<div class="a gp" style="left:800px;top:265.7px;width:176px;text-align:right">CARME bottom valve</div>
<div class="a gp" style="left:800px;top:278.5px;width:176px;text-align:right">Float middle rear</div>
<div class="a gp" style="left:800px;top:291.3px;width:176px;text-align:right">CARME top elbow</div>
<div class="a gp" style="left:800px;top:304.2px;width:176px;text-align:right">Float top mid</div>
<div class="a gp" style="left:800px;top:317.0px;width:176px;text-align:right">CARME rear beam pipe</div>
<div class="a gp" style="left:811px;top:1122px">1.69654e+09,  159.733</div>
</body></html>
